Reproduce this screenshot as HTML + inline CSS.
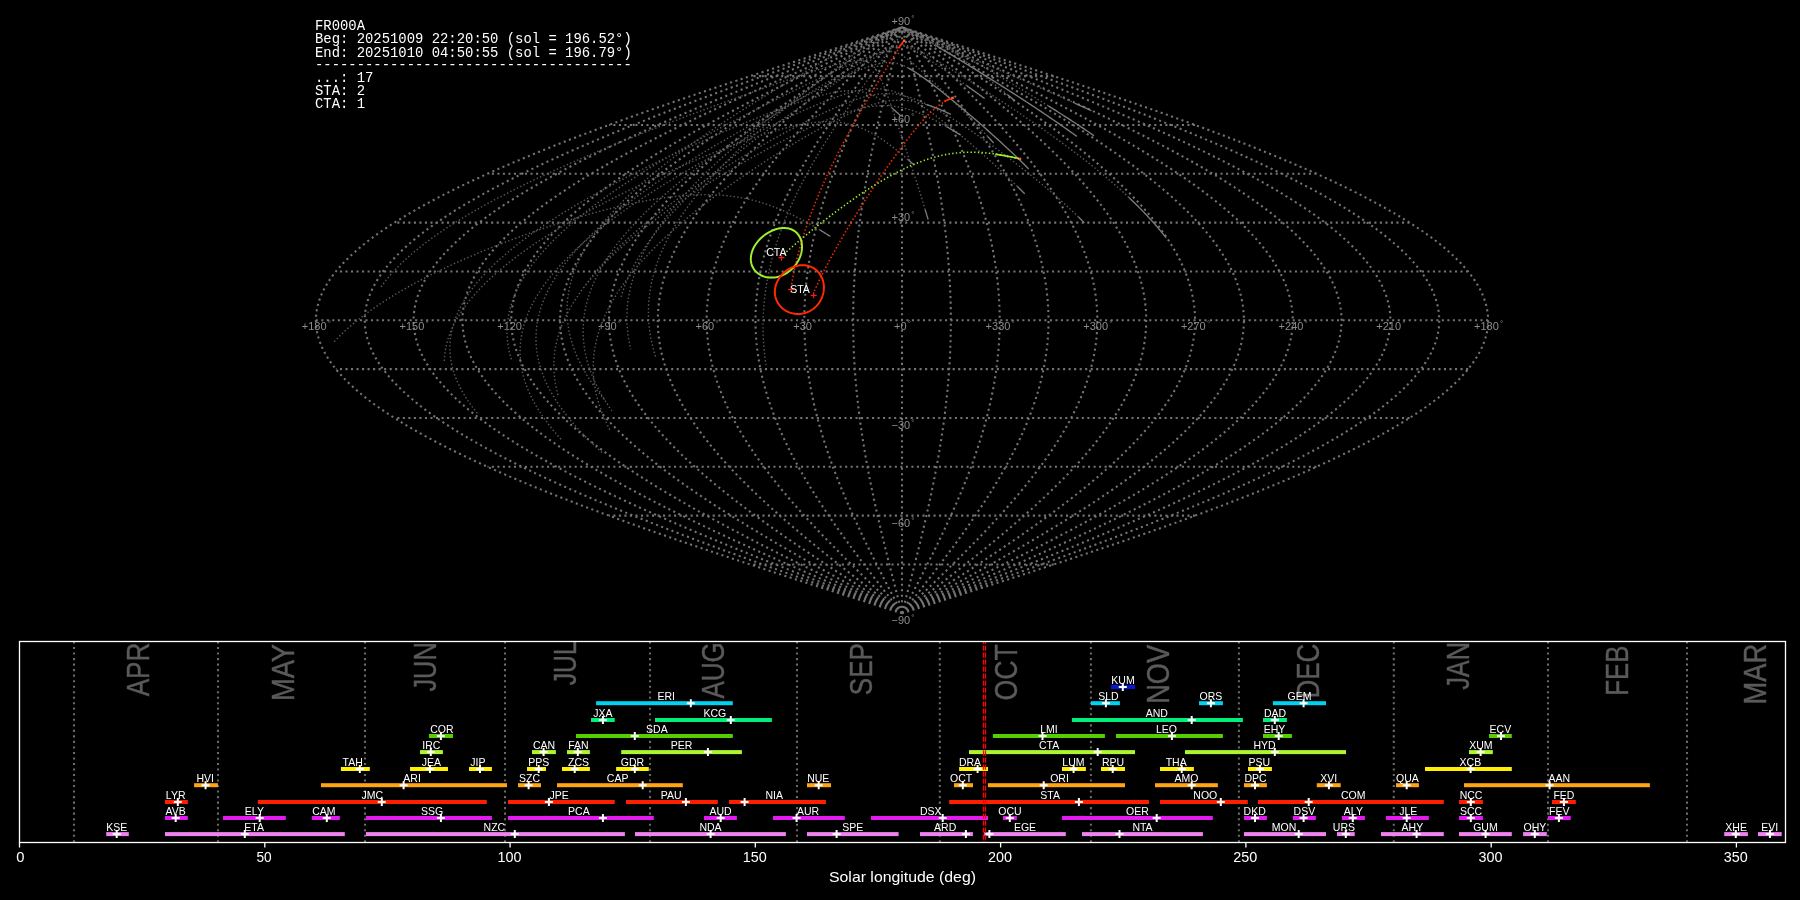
<!DOCTYPE html><html><head><meta charset="utf-8"><style>
html,body{margin:0;padding:0;background:#000;width:1800px;height:900px;overflow:hidden}
body{position:relative}
</style></head><body><svg width="1800" height="900" viewBox="0 0 1800 900" style="position:absolute;left:0;top:0;will-change:transform"><path d="M902.00,613.34L907.11,611.71L912.23,610.08L917.34,608.46L922.45,606.83L927.56,605.20L932.67,603.57L937.78,601.94L942.88,600.32L947.98,598.69L953.08,597.06L958.17,595.43L963.26,593.80L968.35,592.18L973.43,590.55L978.50,588.92L983.57,587.29L988.63,585.66L993.68,584.04L998.73,582.41L1003.77,580.78L1008.80,579.15L1013.83,577.52L1018.85,575.90L1023.85,574.27L1028.85,572.64L1033.84,571.01L1038.82,569.38L1043.79,567.76L1048.74,566.13L1053.69,564.50L1058.62,562.87L1063.55,561.24L1068.46,559.62L1073.35,557.99L1078.24,556.36L1083.11,554.73L1087.97,553.10L1092.81,551.48L1097.64,549.85L1102.45,548.22L1107.25,546.59L1112.03,544.96L1116.80,543.34L1121.55,541.71L1126.28,540.08L1131.00,538.45L1135.70,536.82L1140.38,535.20L1145.04,533.57L1149.69,531.94L1154.31,530.31L1158.92,528.68L1163.51,527.06L1168.07,525.43L1172.62,523.80L1177.15,522.17L1181.65,520.54L1186.14,518.92L1190.60,517.29L1195.04,515.66L1199.46,514.03L1203.85,512.40L1208.23,510.78L1212.58,509.15L1216.90,507.52L1221.20,505.89L1225.48,504.26L1229.73,502.64L1233.96,501.01L1238.16,499.38L1242.34,497.75L1246.49,496.12L1250.61,494.50L1254.71,492.87L1258.78,491.24L1262.83,489.61L1266.84,487.98L1270.83,486.36L1274.79,484.73L1278.72,483.10L1282.63,481.47L1286.50,479.84L1290.35,478.22L1294.16,476.59L1297.95,474.96L1301.71,473.33L1305.43,471.70L1309.13,470.08L1312.79,468.45L1316.42,466.82L1320.02,465.19L1323.59,463.56L1327.13,461.94L1330.63,460.31L1334.10,458.68L1337.54,457.05L1340.95,455.42L1344.32,453.80L1347.66,452.17L1350.96,450.54L1354.23,448.91L1357.47,447.28L1360.67,445.66L1363.84,444.03L1366.97,442.40L1370.06,440.77L1373.12,439.14L1376.15,437.52L1379.14,435.89L1382.09,434.26L1385.00,432.63L1387.88,431.00L1390.72,429.38L1393.53,427.75L1396.29,426.12L1399.02,424.49L1401.72,422.86L1404.37,421.24L1406.98,419.61L1409.56,417.98L1412.10,416.35L1414.60,414.72L1417.06,413.10L1419.48,411.47L1421.86,409.84L1424.20,408.21L1426.50,406.58L1428.77,404.96L1430.99,403.33L1433.17,401.70L1435.31,400.07L1437.41,398.44L1439.47,396.82L1441.49,395.19L1443.47,393.56L1445.40,391.93L1447.30,390.30L1449.15,388.68L1450.96,387.05L1452.74,385.42L1454.46,383.79L1456.15,382.16L1457.79,380.54L1459.40,378.91L1460.95,377.28L1462.47,375.65L1463.95,374.02L1465.38,372.40L1466.76,370.77L1468.11,369.14L1469.41,367.51L1470.67,365.88L1471.89,364.26L1473.06,362.63L1474.19,361.00L1475.27,359.37L1476.31,357.74L1477.31,356.12L1478.27,354.49L1479.18,352.86L1480.04,351.23L1480.86,349.60L1481.64,347.98L1482.38,346.35L1483.07,344.72L1483.71,343.09L1484.31,341.46L1484.87,339.84L1485.38,338.21L1485.85,336.58L1486.27,334.95L1486.65,333.32L1486.99,331.70L1487.28,330.07L1487.52,328.44L1487.72,326.81L1487.88,325.18L1487.99,323.56L1488.06,321.93L1488.08,320.30L1488.06,318.67L1487.99,317.04L1487.88,315.42L1487.72,313.79L1487.52,312.16L1487.28,310.53L1486.99,308.90L1486.65,307.28L1486.27,305.65L1485.85,304.02L1485.38,302.39L1484.87,300.76L1484.31,299.14L1483.71,297.51L1483.07,295.88L1482.38,294.25L1481.64,292.62L1480.86,291.00L1480.04,289.37L1479.18,287.74L1478.27,286.11L1477.31,284.48L1476.31,282.86L1475.27,281.23L1474.19,279.60L1473.06,277.97L1471.89,276.34L1470.67,274.72L1469.41,273.09L1468.11,271.46L1466.76,269.83L1465.38,268.20L1463.95,266.58L1462.47,264.95L1460.95,263.32L1459.40,261.69L1457.79,260.06L1456.15,258.44L1454.46,256.81L1452.74,255.18L1450.96,253.55L1449.15,251.92L1447.30,250.30L1445.40,248.67L1443.47,247.04L1441.49,245.41L1439.47,243.78L1437.41,242.16L1435.31,240.53L1433.17,238.90L1430.99,237.27L1428.77,235.64L1426.50,234.02L1424.20,232.39L1421.86,230.76L1419.48,229.13L1417.06,227.50L1414.60,225.88L1412.10,224.25L1409.56,222.62L1406.98,220.99L1404.37,219.36L1401.72,217.74L1399.02,216.11L1396.29,214.48L1393.53,212.85L1390.72,211.22L1387.88,209.60L1385.00,207.97L1382.09,206.34L1379.14,204.71L1376.15,203.08L1373.12,201.46L1370.06,199.83L1366.97,198.20L1363.84,196.57L1360.67,194.94L1357.47,193.32L1354.23,191.69L1350.96,190.06L1347.66,188.43L1344.32,186.80L1340.95,185.18L1337.54,183.55L1334.10,181.92L1330.63,180.29L1327.13,178.66L1323.59,177.04L1320.02,175.41L1316.42,173.78L1312.79,172.15L1309.13,170.52L1305.43,168.90L1301.71,167.27L1297.95,165.64L1294.16,164.01L1290.35,162.38L1286.50,160.76L1282.63,159.13L1278.72,157.50L1274.79,155.87L1270.83,154.24L1266.84,152.62L1262.83,150.99L1258.78,149.36L1254.71,147.73L1250.61,146.10L1246.49,144.48L1242.34,142.85L1238.16,141.22L1233.96,139.59L1229.73,137.96L1225.48,136.34L1221.20,134.71L1216.90,133.08L1212.58,131.45L1208.23,129.82L1203.85,128.20L1199.46,126.57L1195.04,124.94L1190.60,123.31L1186.14,121.68L1181.65,120.06L1177.15,118.43L1172.62,116.80L1168.07,115.17L1163.51,113.54L1158.92,111.92L1154.31,110.29L1149.69,108.66L1145.04,107.03L1140.38,105.40L1135.70,103.78L1131.00,102.15L1126.28,100.52L1121.55,98.89L1116.80,97.26L1112.03,95.64L1107.25,94.01L1102.45,92.38L1097.64,90.75L1092.81,89.12L1087.97,87.50L1083.11,85.87L1078.24,84.24L1073.35,82.61L1068.46,80.98L1063.55,79.36L1058.62,77.73L1053.69,76.10L1048.74,74.47L1043.79,72.84L1038.82,71.22L1033.84,69.59L1028.85,67.96L1023.85,66.33L1018.85,64.70L1013.83,63.08L1008.80,61.45L1003.77,59.82L998.73,58.19L993.68,56.56L988.63,54.94L983.57,53.31L978.50,51.68L973.43,50.05L968.35,48.42L963.26,46.80L958.17,45.17L953.08,43.54L947.98,41.91L942.88,40.28L937.78,38.66L932.67,37.03L927.56,35.40L922.45,33.77L917.34,32.14L912.23,30.52L907.11,28.89L902.00,27.26M902.00,613.34L906.69,611.71L911.38,610.08L916.06,608.46L920.75,606.83L925.43,605.20L930.12,603.57L934.80,601.94L939.48,600.32L944.15,598.69L948.82,597.06L953.49,595.43L958.16,593.80L962.82,592.18L967.47,590.55L972.12,588.92L976.77,587.29L981.41,585.66L986.04,584.04L990.67,582.41L995.29,580.78L999.90,579.15L1004.51,577.52L1009.11,575.90L1013.70,574.27L1018.28,572.64L1022.85,571.01L1027.42,569.38L1031.97,567.76L1036.51,566.13L1041.05,564.50L1045.57,562.87L1050.08,561.24L1054.58,559.62L1059.07,557.99L1063.55,556.36L1068.02,554.73L1072.47,553.10L1076.91,551.48L1081.33,549.85L1085.75,548.22L1090.15,546.59L1094.53,544.96L1098.90,543.34L1103.25,541.71L1107.59,540.08L1111.92,538.45L1116.22,536.82L1120.52,535.20L1124.79,533.57L1129.05,531.94L1133.29,530.31L1137.51,528.68L1141.72,527.06L1145.90,525.43L1150.07,523.80L1154.22,522.17L1158.35,520.54L1162.46,518.92L1166.55,517.29L1170.62,515.66L1174.67,514.03L1178.70,512.40L1182.71,510.78L1186.69,509.15L1190.66,507.52L1194.60,505.89L1198.52,504.26L1202.42,502.64L1206.30,501.01L1210.15,499.38L1213.98,497.75L1217.78,496.12L1221.56,494.50L1225.32,492.87L1229.05,491.24L1232.76,489.61L1236.44,487.98L1240.10,486.36L1243.73,484.73L1247.33,483.10L1250.91,481.47L1254.46,479.84L1257.99,478.22L1261.48,476.59L1264.95,474.96L1268.40,473.33L1271.81,471.70L1275.20,470.08L1278.56,468.45L1281.89,466.82L1285.19,465.19L1288.46,463.56L1291.70,461.94L1294.91,460.31L1298.09,458.68L1301.25,457.05L1304.37,455.42L1307.46,453.80L1310.52,452.17L1313.55,450.54L1316.55,448.91L1319.51,447.28L1322.45,445.66L1325.35,444.03L1328.22,442.40L1331.06,440.77L1333.86,439.14L1336.64,437.52L1339.38,435.89L1342.08,434.26L1344.75,432.63L1347.39,431.00L1350.00,429.38L1352.57,427.75L1355.10,426.12L1357.61,424.49L1360.07,422.86L1362.50,421.24L1364.90,419.61L1367.26,417.98L1369.59,416.35L1371.88,414.72L1374.14,413.10L1376.35,411.47L1378.54,409.84L1380.68,408.21L1382.79,406.58L1384.87,404.96L1386.90,403.33L1388.90,401.70L1390.87,400.07L1392.79,398.44L1394.68,396.82L1396.53,395.19L1398.35,393.56L1400.12,391.93L1401.86,390.30L1403.56,388.68L1405.22,387.05L1406.84,385.42L1408.42,383.79L1409.97,382.16L1411.48,380.54L1412.95,378.91L1414.37,377.28L1415.77,375.65L1417.12,374.02L1418.43,372.40L1419.70,370.77L1420.93,369.14L1422.13,367.51L1423.28,365.88L1424.40,364.26L1425.47,362.63L1426.51,361.00L1427.50,359.37L1428.45,357.74L1429.37,356.12L1430.24,354.49L1431.08,352.86L1431.87,351.23L1432.63,349.60L1433.34,347.98L1434.01,346.35L1434.64,344.72L1435.24,343.09L1435.79,341.46L1436.30,339.84L1436.77,338.21L1437.20,336.58L1437.58,334.95L1437.93,333.32L1438.24,331.70L1438.50,330.07L1438.73,328.44L1438.91,326.81L1439.06,325.18L1439.16,323.56L1439.22,321.93L1439.24,320.30L1439.22,318.67L1439.16,317.04L1439.06,315.42L1438.91,313.79L1438.73,312.16L1438.50,310.53L1438.24,308.90L1437.93,307.28L1437.58,305.65L1437.20,304.02L1436.77,302.39L1436.30,300.76L1435.79,299.14L1435.24,297.51L1434.64,295.88L1434.01,294.25L1433.34,292.62L1432.63,291.00L1431.87,289.37L1431.08,287.74L1430.24,286.11L1429.37,284.48L1428.45,282.86L1427.50,281.23L1426.51,279.60L1425.47,277.97L1424.40,276.34L1423.28,274.72L1422.13,273.09L1420.93,271.46L1419.70,269.83L1418.43,268.20L1417.12,266.58L1415.77,264.95L1414.37,263.32L1412.95,261.69L1411.48,260.06L1409.97,258.44L1408.42,256.81L1406.84,255.18L1405.22,253.55L1403.56,251.92L1401.86,250.30L1400.12,248.67L1398.35,247.04L1396.53,245.41L1394.68,243.78L1392.79,242.16L1390.87,240.53L1388.90,238.90L1386.90,237.27L1384.87,235.64L1382.79,234.02L1380.68,232.39L1378.54,230.76L1376.35,229.13L1374.14,227.50L1371.88,225.88L1369.59,224.25L1367.26,222.62L1364.90,220.99L1362.50,219.36L1360.07,217.74L1357.61,216.11L1355.10,214.48L1352.57,212.85L1350.00,211.22L1347.39,209.60L1344.75,207.97L1342.08,206.34L1339.38,204.71L1336.64,203.08L1333.86,201.46L1331.06,199.83L1328.22,198.20L1325.35,196.57L1322.45,194.94L1319.51,193.32L1316.55,191.69L1313.55,190.06L1310.52,188.43L1307.46,186.80L1304.37,185.18L1301.25,183.55L1298.09,181.92L1294.91,180.29L1291.70,178.66L1288.46,177.04L1285.19,175.41L1281.89,173.78L1278.56,172.15L1275.20,170.52L1271.81,168.90L1268.40,167.27L1264.95,165.64L1261.48,164.01L1257.99,162.38L1254.46,160.76L1250.91,159.13L1247.33,157.50L1243.73,155.87L1240.10,154.24L1236.44,152.62L1232.76,150.99L1229.05,149.36L1225.32,147.73L1221.56,146.10L1217.78,144.48L1213.98,142.85L1210.15,141.22L1206.30,139.59L1202.42,137.96L1198.52,136.34L1194.60,134.71L1190.66,133.08L1186.69,131.45L1182.71,129.82L1178.70,128.20L1174.67,126.57L1170.62,124.94L1166.55,123.31L1162.46,121.68L1158.35,120.06L1154.22,118.43L1150.07,116.80L1145.90,115.17L1141.72,113.54L1137.51,111.92L1133.29,110.29L1129.05,108.66L1124.79,107.03L1120.52,105.40L1116.22,103.78L1111.92,102.15L1107.59,100.52L1103.25,98.89L1098.90,97.26L1094.53,95.64L1090.15,94.01L1085.75,92.38L1081.33,90.75L1076.91,89.12L1072.47,87.50L1068.02,85.87L1063.55,84.24L1059.07,82.61L1054.58,80.98L1050.08,79.36L1045.57,77.73L1041.05,76.10L1036.51,74.47L1031.97,72.84L1027.42,71.22L1022.85,69.59L1018.28,67.96L1013.70,66.33L1009.11,64.70L1004.51,63.08L999.90,61.45L995.29,59.82L990.67,58.19L986.04,56.56L981.41,54.94L976.77,53.31L972.12,51.68L967.47,50.05L962.82,48.42L958.16,46.80L953.49,45.17L948.82,43.54L944.15,41.91L939.48,40.28L934.80,38.66L930.12,37.03L925.43,35.40L920.75,33.77L916.06,32.14L911.38,30.52L906.69,28.89L902.00,27.26M902.00,613.34L906.26,611.71L910.52,610.08L914.78,608.46L919.04,606.83L923.30,605.20L927.56,603.57L931.82,601.94L936.07,600.32L940.32,598.69L944.57,597.06L948.81,595.43L953.05,593.80L957.29,592.18L961.52,590.55L965.75,588.92L969.97,587.29L974.19,585.66L978.40,584.04L982.61,582.41L986.81,580.78L991.00,579.15L995.19,577.52L999.37,575.90L1003.54,574.27L1007.71,572.64L1011.87,571.01L1016.01,569.38L1020.15,567.76L1024.29,566.13L1028.41,564.50L1032.52,562.87L1036.62,561.24L1040.71,559.62L1044.79,557.99L1048.86,556.36L1052.92,554.73L1056.97,553.10L1061.01,551.48L1065.03,549.85L1069.04,548.22L1073.04,546.59L1077.03,544.96L1081.00,543.34L1084.96,541.71L1088.90,540.08L1092.83,538.45L1096.75,536.82L1100.65,535.20L1104.54,533.57L1108.41,531.94L1112.26,530.31L1116.10,528.68L1119.92,527.06L1123.73,525.43L1127.52,523.80L1131.29,522.17L1135.04,520.54L1138.78,518.92L1142.50,517.29L1146.20,515.66L1149.88,514.03L1153.54,512.40L1157.19,510.78L1160.81,509.15L1164.42,507.52L1168.00,505.89L1171.57,504.26L1175.11,502.64L1178.63,501.01L1182.13,499.38L1185.62,497.75L1189.07,496.12L1192.51,494.50L1195.93,492.87L1199.32,491.24L1202.69,489.61L1206.04,487.98L1209.36,486.36L1212.66,484.73L1215.94,483.10L1219.19,481.47L1222.42,479.84L1225.62,478.22L1228.80,476.59L1231.96,474.96L1235.09,473.33L1238.19,471.70L1241.27,470.08L1244.32,468.45L1247.35,466.82L1250.35,465.19L1253.33,463.56L1256.27,461.94L1259.19,460.31L1262.09,458.68L1264.95,457.05L1267.79,455.42L1270.60,453.80L1273.38,452.17L1276.14,450.54L1278.86,448.91L1281.56,447.28L1284.23,445.66L1286.86,444.03L1289.47,442.40L1292.05,440.77L1294.60,439.14L1297.12,437.52L1299.61,435.89L1302.07,434.26L1304.50,432.63L1306.90,431.00L1309.27,429.38L1311.61,427.75L1313.91,426.12L1316.19,424.49L1318.43,422.86L1320.64,421.24L1322.82,419.61L1324.97,417.98L1327.08,416.35L1329.16,414.72L1331.21,413.10L1333.23,411.47L1335.22,409.84L1337.17,408.21L1339.09,406.58L1340.97,404.96L1342.82,403.33L1344.64,401.70L1346.43,400.07L1348.18,398.44L1349.89,396.82L1351.57,395.19L1353.22,393.56L1354.84,391.93L1356.42,390.30L1357.96,388.68L1359.47,387.05L1360.95,385.42L1362.39,383.79L1363.79,382.16L1365.16,380.54L1366.50,378.91L1367.80,377.28L1369.06,375.65L1370.29,374.02L1371.48,372.40L1372.64,370.77L1373.76,369.14L1374.84,367.51L1375.89,365.88L1376.91,364.26L1377.88,362.63L1378.82,361.00L1379.73,359.37L1380.60,357.74L1381.43,356.12L1382.22,354.49L1382.98,352.86L1383.70,351.23L1384.39,349.60L1385.04,347.98L1385.65,346.35L1386.22,344.72L1386.76,343.09L1387.26,341.46L1387.72,339.84L1388.15,338.21L1388.54,336.58L1388.89,334.95L1389.21,333.32L1389.49,331.70L1389.73,330.07L1389.94,328.44L1390.10,326.81L1390.23,325.18L1390.33,323.56L1390.38,321.93L1390.40,320.30L1390.38,318.67L1390.33,317.04L1390.23,315.42L1390.10,313.79L1389.94,312.16L1389.73,310.53L1389.49,308.90L1389.21,307.28L1388.89,305.65L1388.54,304.02L1388.15,302.39L1387.72,300.76L1387.26,299.14L1386.76,297.51L1386.22,295.88L1385.65,294.25L1385.04,292.62L1384.39,291.00L1383.70,289.37L1382.98,287.74L1382.22,286.11L1381.43,284.48L1380.60,282.86L1379.73,281.23L1378.82,279.60L1377.88,277.97L1376.91,276.34L1375.89,274.72L1374.84,273.09L1373.76,271.46L1372.64,269.83L1371.48,268.20L1370.29,266.58L1369.06,264.95L1367.80,263.32L1366.50,261.69L1365.16,260.06L1363.79,258.44L1362.39,256.81L1360.95,255.18L1359.47,253.55L1357.96,251.92L1356.42,250.30L1354.84,248.67L1353.22,247.04L1351.57,245.41L1349.89,243.78L1348.18,242.16L1346.43,240.53L1344.64,238.90L1342.82,237.27L1340.97,235.64L1339.09,234.02L1337.17,232.39L1335.22,230.76L1333.23,229.13L1331.21,227.50L1329.16,225.88L1327.08,224.25L1324.97,222.62L1322.82,220.99L1320.64,219.36L1318.43,217.74L1316.19,216.11L1313.91,214.48L1311.61,212.85L1309.27,211.22L1306.90,209.60L1304.50,207.97L1302.07,206.34L1299.61,204.71L1297.12,203.08L1294.60,201.46L1292.05,199.83L1289.47,198.20L1286.86,196.57L1284.23,194.94L1281.56,193.32L1278.86,191.69L1276.14,190.06L1273.38,188.43L1270.60,186.80L1267.79,185.18L1264.95,183.55L1262.09,181.92L1259.19,180.29L1256.27,178.66L1253.33,177.04L1250.35,175.41L1247.35,173.78L1244.32,172.15L1241.27,170.52L1238.19,168.90L1235.09,167.27L1231.96,165.64L1228.80,164.01L1225.62,162.38L1222.42,160.76L1219.19,159.13L1215.94,157.50L1212.66,155.87L1209.36,154.24L1206.04,152.62L1202.69,150.99L1199.32,149.36L1195.93,147.73L1192.51,146.10L1189.07,144.48L1185.62,142.85L1182.13,141.22L1178.63,139.59L1175.11,137.96L1171.57,136.34L1168.00,134.71L1164.42,133.08L1160.81,131.45L1157.19,129.82L1153.54,128.20L1149.88,126.57L1146.20,124.94L1142.50,123.31L1138.78,121.68L1135.04,120.06L1131.29,118.43L1127.52,116.80L1123.73,115.17L1119.92,113.54L1116.10,111.92L1112.26,110.29L1108.41,108.66L1104.54,107.03L1100.65,105.40L1096.75,103.78L1092.83,102.15L1088.90,100.52L1084.96,98.89L1081.00,97.26L1077.03,95.64L1073.04,94.01L1069.04,92.38L1065.03,90.75L1061.01,89.12L1056.97,87.50L1052.92,85.87L1048.86,84.24L1044.79,82.61L1040.71,80.98L1036.62,79.36L1032.52,77.73L1028.41,76.10L1024.29,74.47L1020.15,72.84L1016.01,71.22L1011.87,69.59L1007.71,67.96L1003.54,66.33L999.37,64.70L995.19,63.08L991.00,61.45L986.81,59.82L982.61,58.19L978.40,56.56L974.19,54.94L969.97,53.31L965.75,51.68L961.52,50.05L957.29,48.42L953.05,46.80L948.81,45.17L944.57,43.54L940.32,41.91L936.07,40.28L931.82,38.66L927.56,37.03L923.30,35.40L919.04,33.77L914.78,32.14L910.52,30.52L906.26,28.89L902.00,27.26M902.00,613.34L905.84,611.71L909.67,610.08L913.51,608.46L917.34,606.83L921.17,605.20L925.00,603.57L928.83,601.94L932.66,600.32L936.49,598.69L940.31,597.06L944.13,595.43L947.95,593.80L951.76,592.18L955.57,590.55L959.37,588.92L963.17,587.29L966.97,585.66L970.76,584.04L974.55,582.41L978.33,580.78L982.10,579.15L985.87,577.52L989.63,575.90L993.39,574.27L997.14,572.64L1000.88,571.01L1004.61,569.38L1008.34,567.76L1012.06,566.13L1015.77,564.50L1019.47,562.87L1023.16,561.24L1026.84,559.62L1030.51,557.99L1034.18,556.36L1037.83,554.73L1041.47,553.10L1045.11,551.48L1048.73,549.85L1052.34,548.22L1055.94,546.59L1059.52,544.96L1063.10,543.34L1066.66,541.71L1070.21,540.08L1073.75,538.45L1077.27,536.82L1080.79,535.20L1084.28,533.57L1087.77,531.94L1091.24,530.31L1094.69,528.68L1098.13,527.06L1101.56,525.43L1104.97,523.80L1108.36,522.17L1111.74,520.54L1115.10,518.92L1118.45,517.29L1121.78,515.66L1125.09,514.03L1128.39,512.40L1131.67,510.78L1134.93,509.15L1138.18,507.52L1141.40,505.89L1144.61,504.26L1147.80,502.64L1150.97,501.01L1154.12,499.38L1157.25,497.75L1160.37,496.12L1163.46,494.50L1166.53,492.87L1169.59,491.24L1172.62,489.61L1175.63,487.98L1178.62,486.36L1181.59,484.73L1184.54,483.10L1187.47,481.47L1190.38,479.84L1193.26,478.22L1196.12,476.59L1198.96,474.96L1201.78,473.33L1204.57,471.70L1207.34,470.08L1210.09,468.45L1212.82,466.82L1215.52,465.19L1218.19,463.56L1220.85,461.94L1223.47,460.31L1226.08,458.68L1228.66,457.05L1231.21,455.42L1233.74,453.80L1236.24,452.17L1238.72,450.54L1241.18,448.91L1243.60,447.28L1246.00,445.66L1248.38,444.03L1250.73,442.40L1253.05,440.77L1255.34,439.14L1257.61,437.52L1259.85,435.89L1262.07,434.26L1264.25,432.63L1266.41,431.00L1268.54,429.38L1270.65,427.75L1272.72,426.12L1274.77,424.49L1276.79,422.86L1278.78,421.24L1280.74,419.61L1282.67,417.98L1284.57,416.35L1286.45,414.72L1288.29,413.10L1290.11,411.47L1291.89,409.84L1293.65,408.21L1295.38,406.58L1297.07,404.96L1298.74,403.33L1300.38,401.70L1301.98,400.07L1303.56,398.44L1305.10,396.82L1306.62,395.19L1308.10,393.56L1309.55,391.93L1310.97,390.30L1312.36,388.68L1313.72,387.05L1315.05,385.42L1316.35,383.79L1317.61,382.16L1318.85,380.54L1320.05,378.91L1321.22,377.28L1322.35,375.65L1323.46,374.02L1324.53,372.40L1325.57,370.77L1326.58,369.14L1327.56,367.51L1328.50,365.88L1329.41,364.26L1330.29,362.63L1331.14,361.00L1331.95,359.37L1332.74,357.74L1333.48,356.12L1334.20,354.49L1334.88,352.86L1335.53,351.23L1336.15,349.60L1336.73,347.98L1337.28,346.35L1337.80,344.72L1338.28,343.09L1338.73,341.46L1339.15,339.84L1339.54,338.21L1339.89,336.58L1340.20,334.95L1340.49,333.32L1340.74,331.70L1340.96,330.07L1341.14,328.44L1341.29,326.81L1341.41,325.18L1341.49,323.56L1341.54,321.93L1341.56,320.30L1341.54,318.67L1341.49,317.04L1341.41,315.42L1341.29,313.79L1341.14,312.16L1340.96,310.53L1340.74,308.90L1340.49,307.28L1340.20,305.65L1339.89,304.02L1339.54,302.39L1339.15,300.76L1338.73,299.14L1338.28,297.51L1337.80,295.88L1337.28,294.25L1336.73,292.62L1336.15,291.00L1335.53,289.37L1334.88,287.74L1334.20,286.11L1333.48,284.48L1332.74,282.86L1331.95,281.23L1331.14,279.60L1330.29,277.97L1329.41,276.34L1328.50,274.72L1327.56,273.09L1326.58,271.46L1325.57,269.83L1324.53,268.20L1323.46,266.58L1322.35,264.95L1321.22,263.32L1320.05,261.69L1318.85,260.06L1317.61,258.44L1316.35,256.81L1315.05,255.18L1313.72,253.55L1312.36,251.92L1310.97,250.30L1309.55,248.67L1308.10,247.04L1306.62,245.41L1305.10,243.78L1303.56,242.16L1301.98,240.53L1300.38,238.90L1298.74,237.27L1297.07,235.64L1295.38,234.02L1293.65,232.39L1291.89,230.76L1290.11,229.13L1288.29,227.50L1286.45,225.88L1284.57,224.25L1282.67,222.62L1280.74,220.99L1278.78,219.36L1276.79,217.74L1274.77,216.11L1272.72,214.48L1270.65,212.85L1268.54,211.22L1266.41,209.60L1264.25,207.97L1262.07,206.34L1259.85,204.71L1257.61,203.08L1255.34,201.46L1253.05,199.83L1250.73,198.20L1248.38,196.57L1246.00,194.94L1243.60,193.32L1241.18,191.69L1238.72,190.06L1236.24,188.43L1233.74,186.80L1231.21,185.18L1228.66,183.55L1226.08,181.92L1223.47,180.29L1220.85,178.66L1218.19,177.04L1215.52,175.41L1212.82,173.78L1210.09,172.15L1207.34,170.52L1204.57,168.90L1201.78,167.27L1198.96,165.64L1196.12,164.01L1193.26,162.38L1190.38,160.76L1187.47,159.13L1184.54,157.50L1181.59,155.87L1178.62,154.24L1175.63,152.62L1172.62,150.99L1169.59,149.36L1166.53,147.73L1163.46,146.10L1160.37,144.48L1157.25,142.85L1154.12,141.22L1150.97,139.59L1147.80,137.96L1144.61,136.34L1141.40,134.71L1138.18,133.08L1134.93,131.45L1131.67,129.82L1128.39,128.20L1125.09,126.57L1121.78,124.94L1118.45,123.31L1115.10,121.68L1111.74,120.06L1108.36,118.43L1104.97,116.80L1101.56,115.17L1098.13,113.54L1094.69,111.92L1091.24,110.29L1087.77,108.66L1084.28,107.03L1080.79,105.40L1077.27,103.78L1073.75,102.15L1070.21,100.52L1066.66,98.89L1063.10,97.26L1059.52,95.64L1055.94,94.01L1052.34,92.38L1048.73,90.75L1045.11,89.12L1041.47,87.50L1037.83,85.87L1034.18,84.24L1030.51,82.61L1026.84,80.98L1023.16,79.36L1019.47,77.73L1015.77,76.10L1012.06,74.47L1008.34,72.84L1004.61,71.22L1000.88,69.59L997.14,67.96L993.39,66.33L989.63,64.70L985.87,63.08L982.10,61.45L978.33,59.82L974.55,58.19L970.76,56.56L966.97,54.94L963.17,53.31L959.37,51.68L955.57,50.05L951.76,48.42L947.95,46.80L944.13,45.17L940.31,43.54L936.49,41.91L932.66,40.28L928.83,38.66L925.00,37.03L921.17,35.40L917.34,33.77L913.51,32.14L909.67,30.52L905.84,28.89L902.00,27.26M902.00,613.34L905.41,611.71L908.82,610.08L912.23,608.46L915.64,606.83L919.04,605.20L922.45,603.57L925.85,601.94L929.26,600.32L932.66,598.69L936.05,597.06L939.45,595.43L942.84,593.80L946.23,592.18L949.62,590.55L953.00,588.92L956.38,587.29L959.75,585.66L963.12,584.04L966.49,582.41L969.85,580.78L973.20,579.15L976.55,577.52L979.90,575.90L983.24,574.27L986.57,572.64L989.89,571.01L993.21,569.38L996.52,567.76L999.83,566.13L1003.13,564.50L1006.42,562.87L1009.70,561.24L1012.97,559.62L1016.24,557.99L1019.49,556.36L1022.74,554.73L1025.98,553.10L1029.21,551.48L1032.43,549.85L1035.63,548.22L1038.83,546.59L1042.02,544.96L1045.20,543.34L1048.37,541.71L1051.52,540.08L1054.67,538.45L1057.80,536.82L1060.92,535.20L1064.03,533.57L1067.13,531.94L1070.21,530.31L1073.28,528.68L1076.34,527.06L1079.38,525.43L1082.41,523.80L1085.43,522.17L1088.44,520.54L1091.42,518.92L1094.40,517.29L1097.36,515.66L1100.31,514.03L1103.24,512.40L1106.15,510.78L1109.05,509.15L1111.93,507.52L1114.80,505.89L1117.65,504.26L1120.49,502.64L1123.31,501.01L1126.11,499.38L1128.89,497.75L1131.66,496.12L1134.41,494.50L1137.14,492.87L1139.86,491.24L1142.55,489.61L1145.23,487.98L1147.89,486.36L1150.53,484.73L1153.15,483.10L1155.75,481.47L1158.34,479.84L1160.90,478.22L1163.44,476.59L1165.97,474.96L1168.47,473.33L1170.95,471.70L1173.42,470.08L1175.86,468.45L1178.28,466.82L1180.68,465.19L1183.06,463.56L1185.42,461.94L1187.75,460.31L1190.07,458.68L1192.36,457.05L1194.63,455.42L1196.88,453.80L1199.11,452.17L1201.31,450.54L1203.49,448.91L1205.65,447.28L1207.78,445.66L1209.89,444.03L1211.98,442.40L1214.04,440.77L1216.08,439.14L1218.10,437.52L1220.09,435.89L1222.06,434.26L1224.00,432.63L1225.92,431.00L1227.82,429.38L1229.69,427.75L1231.53,426.12L1233.35,424.49L1235.14,422.86L1236.91,421.24L1238.66,419.61L1240.37,417.98L1242.07,416.35L1243.73,414.72L1245.37,413.10L1246.99,411.47L1248.57,409.84L1250.13,408.21L1251.67,406.58L1253.18,404.96L1254.66,403.33L1256.11,401.70L1257.54,400.07L1258.94,398.44L1260.31,396.82L1261.66,395.19L1262.98,393.56L1264.27,391.93L1265.53,390.30L1266.77,388.68L1267.98,387.05L1269.16,385.42L1270.31,383.79L1271.43,382.16L1272.53,380.54L1273.60,378.91L1274.64,377.28L1275.65,375.65L1276.63,374.02L1277.58,372.40L1278.51,370.77L1279.41,369.14L1280.27,367.51L1281.11,365.88L1281.92,364.26L1282.71,362.63L1283.46,361.00L1284.18,359.37L1284.88,357.74L1285.54,356.12L1286.18,354.49L1286.78,352.86L1287.36,351.23L1287.91,349.60L1288.43,347.98L1288.92,346.35L1289.38,344.72L1289.81,343.09L1290.21,341.46L1290.58,339.84L1290.92,338.21L1291.23,336.58L1291.52,334.95L1291.77,333.32L1291.99,331.70L1292.18,330.07L1292.35,328.44L1292.48,326.81L1292.59,325.18L1292.66,323.56L1292.71,321.93L1292.72,320.30L1292.71,318.67L1292.66,317.04L1292.59,315.42L1292.48,313.79L1292.35,312.16L1292.18,310.53L1291.99,308.90L1291.77,307.28L1291.52,305.65L1291.23,304.02L1290.92,302.39L1290.58,300.76L1290.21,299.14L1289.81,297.51L1289.38,295.88L1288.92,294.25L1288.43,292.62L1287.91,291.00L1287.36,289.37L1286.78,287.74L1286.18,286.11L1285.54,284.48L1284.88,282.86L1284.18,281.23L1283.46,279.60L1282.71,277.97L1281.92,276.34L1281.11,274.72L1280.27,273.09L1279.41,271.46L1278.51,269.83L1277.58,268.20L1276.63,266.58L1275.65,264.95L1274.64,263.32L1273.60,261.69L1272.53,260.06L1271.43,258.44L1270.31,256.81L1269.16,255.18L1267.98,253.55L1266.77,251.92L1265.53,250.30L1264.27,248.67L1262.98,247.04L1261.66,245.41L1260.31,243.78L1258.94,242.16L1257.54,240.53L1256.11,238.90L1254.66,237.27L1253.18,235.64L1251.67,234.02L1250.13,232.39L1248.57,230.76L1246.99,229.13L1245.37,227.50L1243.73,225.88L1242.07,224.25L1240.37,222.62L1238.66,220.99L1236.91,219.36L1235.14,217.74L1233.35,216.11L1231.53,214.48L1229.69,212.85L1227.82,211.22L1225.92,209.60L1224.00,207.97L1222.06,206.34L1220.09,204.71L1218.10,203.08L1216.08,201.46L1214.04,199.83L1211.98,198.20L1209.89,196.57L1207.78,194.94L1205.65,193.32L1203.49,191.69L1201.31,190.06L1199.11,188.43L1196.88,186.80L1194.63,185.18L1192.36,183.55L1190.07,181.92L1187.75,180.29L1185.42,178.66L1183.06,177.04L1180.68,175.41L1178.28,173.78L1175.86,172.15L1173.42,170.52L1170.95,168.90L1168.47,167.27L1165.97,165.64L1163.44,164.01L1160.90,162.38L1158.34,160.76L1155.75,159.13L1153.15,157.50L1150.53,155.87L1147.89,154.24L1145.23,152.62L1142.55,150.99L1139.86,149.36L1137.14,147.73L1134.41,146.10L1131.66,144.48L1128.89,142.85L1126.11,141.22L1123.31,139.59L1120.49,137.96L1117.65,136.34L1114.80,134.71L1111.93,133.08L1109.05,131.45L1106.15,129.82L1103.24,128.20L1100.31,126.57L1097.36,124.94L1094.40,123.31L1091.42,121.68L1088.44,120.06L1085.43,118.43L1082.41,116.80L1079.38,115.17L1076.34,113.54L1073.28,111.92L1070.21,110.29L1067.13,108.66L1064.03,107.03L1060.92,105.40L1057.80,103.78L1054.67,102.15L1051.52,100.52L1048.37,98.89L1045.20,97.26L1042.02,95.64L1038.83,94.01L1035.63,92.38L1032.43,90.75L1029.21,89.12L1025.98,87.50L1022.74,85.87L1019.49,84.24L1016.24,82.61L1012.97,80.98L1009.70,79.36L1006.42,77.73L1003.13,76.10L999.83,74.47L996.52,72.84L993.21,71.22L989.89,69.59L986.57,67.96L983.24,66.33L979.90,64.70L976.55,63.08L973.20,61.45L969.85,59.82L966.49,58.19L963.12,56.56L959.75,54.94L956.38,53.31L953.00,51.68L949.62,50.05L946.23,48.42L942.84,46.80L939.45,45.17L936.05,43.54L932.66,41.91L929.26,40.28L925.85,38.66L922.45,37.03L919.04,35.40L915.64,33.77L912.23,32.14L908.82,30.52L905.41,28.89L902.00,27.26M902.00,613.34L904.98,611.71L907.97,610.08L910.95,608.46L913.93,606.83L916.91,605.20L919.89,603.57L922.87,601.94L925.85,600.32L928.82,598.69L931.80,597.06L934.77,595.43L937.74,593.80L940.70,592.18L943.66,590.55L946.62,588.92L949.58,587.29L952.53,585.66L955.48,584.04L958.43,582.41L961.37,580.78L964.30,579.15L967.23,577.52L970.16,575.90L973.08,574.27L976.00,572.64L978.91,571.01L981.81,569.38L984.71,567.76L987.60,566.13L990.49,564.50L993.36,562.87L996.23,561.24L999.10,559.62L1001.96,557.99L1004.81,556.36L1007.65,554.73L1010.48,553.10L1013.31,551.48L1016.12,549.85L1018.93,548.22L1021.73,546.59L1024.52,544.96L1027.30,543.34L1030.07,541.71L1032.83,540.08L1035.58,538.45L1038.32,536.82L1041.06,535.20L1043.78,533.57L1046.48,531.94L1049.18,530.31L1051.87,528.68L1054.55,527.06L1057.21,525.43L1059.86,523.80L1062.50,522.17L1065.13,520.54L1067.75,518.92L1070.35,517.29L1072.94,515.66L1075.52,514.03L1078.08,512.40L1080.63,510.78L1083.17,509.15L1085.69,507.52L1088.20,505.89L1090.70,504.26L1093.18,502.64L1095.64,501.01L1098.09,499.38L1100.53,497.75L1102.95,496.12L1105.36,494.50L1107.75,492.87L1110.12,491.24L1112.48,489.61L1114.83,487.98L1117.15,486.36L1119.46,484.73L1121.76,483.10L1124.03,481.47L1126.29,479.84L1128.54,478.22L1130.76,476.59L1132.97,474.96L1135.16,473.33L1137.33,471.70L1139.49,470.08L1141.63,468.45L1143.75,466.82L1145.85,465.19L1147.93,463.56L1149.99,461.94L1152.04,460.31L1154.06,458.68L1156.07,457.05L1158.05,455.42L1160.02,453.80L1161.97,452.17L1163.90,450.54L1165.80,448.91L1167.69,447.28L1169.56,445.66L1171.41,444.03L1173.23,442.40L1175.04,440.77L1176.82,439.14L1178.59,437.52L1180.33,435.89L1182.05,434.26L1183.75,432.63L1185.43,431.00L1187.09,429.38L1188.72,427.75L1190.34,426.12L1191.93,424.49L1193.50,422.86L1195.05,421.24L1196.57,419.61L1198.08,417.98L1199.56,416.35L1201.01,414.72L1202.45,413.10L1203.86,411.47L1205.25,409.84L1206.62,408.21L1207.96,406.58L1209.28,404.96L1210.58,403.33L1211.85,401.70L1213.10,400.07L1214.32,398.44L1215.52,396.82L1216.70,395.19L1217.86,393.56L1218.99,391.93L1220.09,390.30L1221.17,388.68L1222.23,387.05L1223.26,385.42L1224.27,383.79L1225.25,382.16L1226.21,380.54L1227.15,378.91L1228.06,377.28L1228.94,375.65L1229.80,374.02L1230.64,372.40L1231.45,370.77L1232.23,369.14L1232.99,367.51L1233.72,365.88L1234.43,364.26L1235.12,362.63L1235.78,361.00L1236.41,359.37L1237.02,357.74L1237.60,356.12L1238.16,354.49L1238.69,352.86L1239.19,351.23L1239.67,349.60L1240.12,347.98L1240.55,346.35L1240.96,344.72L1241.33,343.09L1241.68,341.46L1242.01,339.84L1242.31,338.21L1242.58,336.58L1242.83,334.95L1243.05,333.32L1243.24,331.70L1243.41,330.07L1243.55,328.44L1243.67,326.81L1243.76,325.18L1243.83,323.56L1243.87,321.93L1243.88,320.30L1243.87,318.67L1243.83,317.04L1243.76,315.42L1243.67,313.79L1243.55,312.16L1243.41,310.53L1243.24,308.90L1243.05,307.28L1242.83,305.65L1242.58,304.02L1242.31,302.39L1242.01,300.76L1241.68,299.14L1241.33,297.51L1240.96,295.88L1240.55,294.25L1240.12,292.62L1239.67,291.00L1239.19,289.37L1238.69,287.74L1238.16,286.11L1237.60,284.48L1237.02,282.86L1236.41,281.23L1235.78,279.60L1235.12,277.97L1234.43,276.34L1233.72,274.72L1232.99,273.09L1232.23,271.46L1231.45,269.83L1230.64,268.20L1229.80,266.58L1228.94,264.95L1228.06,263.32L1227.15,261.69L1226.21,260.06L1225.25,258.44L1224.27,256.81L1223.26,255.18L1222.23,253.55L1221.17,251.92L1220.09,250.30L1218.99,248.67L1217.86,247.04L1216.70,245.41L1215.52,243.78L1214.32,242.16L1213.10,240.53L1211.85,238.90L1210.58,237.27L1209.28,235.64L1207.96,234.02L1206.62,232.39L1205.25,230.76L1203.86,229.13L1202.45,227.50L1201.01,225.88L1199.56,224.25L1198.08,222.62L1196.57,220.99L1195.05,219.36L1193.50,217.74L1191.93,216.11L1190.34,214.48L1188.72,212.85L1187.09,211.22L1185.43,209.60L1183.75,207.97L1182.05,206.34L1180.33,204.71L1178.59,203.08L1176.82,201.46L1175.04,199.83L1173.23,198.20L1171.41,196.57L1169.56,194.94L1167.69,193.32L1165.80,191.69L1163.90,190.06L1161.97,188.43L1160.02,186.80L1158.05,185.18L1156.07,183.55L1154.06,181.92L1152.04,180.29L1149.99,178.66L1147.93,177.04L1145.85,175.41L1143.75,173.78L1141.63,172.15L1139.49,170.52L1137.33,168.90L1135.16,167.27L1132.97,165.64L1130.76,164.01L1128.54,162.38L1126.29,160.76L1124.03,159.13L1121.76,157.50L1119.46,155.87L1117.15,154.24L1114.83,152.62L1112.48,150.99L1110.12,149.36L1107.75,147.73L1105.36,146.10L1102.95,144.48L1100.53,142.85L1098.09,141.22L1095.64,139.59L1093.18,137.96L1090.70,136.34L1088.20,134.71L1085.69,133.08L1083.17,131.45L1080.63,129.82L1078.08,128.20L1075.52,126.57L1072.94,124.94L1070.35,123.31L1067.75,121.68L1065.13,120.06L1062.50,118.43L1059.86,116.80L1057.21,115.17L1054.55,113.54L1051.87,111.92L1049.18,110.29L1046.48,108.66L1043.78,107.03L1041.06,105.40L1038.32,103.78L1035.58,102.15L1032.83,100.52L1030.07,98.89L1027.30,97.26L1024.52,95.64L1021.73,94.01L1018.93,92.38L1016.12,90.75L1013.31,89.12L1010.48,87.50L1007.65,85.87L1004.81,84.24L1001.96,82.61L999.10,80.98L996.23,79.36L993.36,77.73L990.49,76.10L987.60,74.47L984.71,72.84L981.81,71.22L978.91,69.59L976.00,67.96L973.08,66.33L970.16,64.70L967.23,63.08L964.30,61.45L961.37,59.82L958.43,58.19L955.48,56.56L952.53,54.94L949.58,53.31L946.62,51.68L943.66,50.05L940.70,48.42L937.74,46.80L934.77,45.17L931.80,43.54L928.82,41.91L925.85,40.28L922.87,38.66L919.89,37.03L916.91,35.40L913.93,33.77L910.95,32.14L907.97,30.52L904.98,28.89L902.00,27.26M902.00,613.34L904.56,611.71L907.11,610.08L909.67,608.46L912.23,606.83L914.78,605.20L917.34,603.57L919.89,601.94L922.44,600.32L924.99,598.69L927.54,597.06L930.09,595.43L932.63,593.80L935.17,592.18L937.71,590.55L940.25,588.92L942.78,587.29L945.31,585.66L947.84,584.04L950.37,582.41L952.89,580.78L955.40,579.15L957.91,577.52L960.42,575.90L962.93,574.27L965.43,572.64L967.92,571.01L970.41,569.38L972.89,567.76L975.37,566.13L977.84,564.50L980.31,562.87L982.77,561.24L985.23,559.62L987.68,557.99L990.12,556.36L992.55,554.73L994.98,553.10L997.40,551.48L999.82,549.85L1002.23,548.22L1004.62,546.59L1007.02,544.96L1009.40,543.34L1011.77,541.71L1014.14,540.08L1016.50,538.45L1018.85,536.82L1021.19,535.20L1023.52,533.57L1025.84,531.94L1028.16,530.31L1030.46,528.68L1032.75,527.06L1035.04,525.43L1037.31,523.80L1039.57,522.17L1041.83,520.54L1044.07,518.92L1046.30,517.29L1048.52,515.66L1050.73,514.03L1052.93,512.40L1055.11,510.78L1057.29,509.15L1059.45,507.52L1061.60,505.89L1063.74,504.26L1065.87,502.64L1067.98,501.01L1070.08,499.38L1072.17,497.75L1074.24,496.12L1076.31,494.50L1078.36,492.87L1080.39,491.24L1082.41,489.61L1084.42,487.98L1086.42,486.36L1088.40,484.73L1090.36,483.10L1092.31,481.47L1094.25,479.84L1096.17,478.22L1098.08,476.59L1099.97,474.96L1101.85,473.33L1103.72,471.70L1105.56,470.08L1107.39,468.45L1109.21,466.82L1111.01,465.19L1112.80,463.56L1114.56,461.94L1116.32,460.31L1118.05,458.68L1119.77,457.05L1121.47,455.42L1123.16,453.80L1124.83,452.17L1126.48,450.54L1128.12,448.91L1129.73,447.28L1131.34,445.66L1132.92,444.03L1134.48,442.40L1136.03,440.77L1137.56,439.14L1139.07,437.52L1140.57,435.89L1142.04,434.26L1143.50,432.63L1144.94,431.00L1146.36,429.38L1147.76,427.75L1149.15,426.12L1150.51,424.49L1151.86,422.86L1153.18,421.24L1154.49,419.61L1155.78,417.98L1157.05,416.35L1158.30,414.72L1159.53,413.10L1160.74,411.47L1161.93,409.84L1163.10,408.21L1164.25,406.58L1165.38,404.96L1166.49,403.33L1167.58,401.70L1168.66,400.07L1169.71,398.44L1170.74,396.82L1171.74,395.19L1172.73,393.56L1173.70,391.93L1174.65,390.30L1175.58,388.68L1176.48,387.05L1177.37,385.42L1178.23,383.79L1179.07,382.16L1179.90,380.54L1180.70,378.91L1181.48,377.28L1182.24,375.65L1182.97,374.02L1183.69,372.40L1184.38,370.77L1185.05,369.14L1185.71,367.51L1186.34,365.88L1186.94,364.26L1187.53,362.63L1188.09,361.00L1188.64,359.37L1189.16,357.74L1189.66,356.12L1190.13,354.49L1190.59,352.86L1191.02,351.23L1191.43,349.60L1191.82,347.98L1192.19,346.35L1192.53,344.72L1192.86,343.09L1193.16,341.46L1193.43,339.84L1193.69,338.21L1193.92,336.58L1194.14,334.95L1194.33,333.32L1194.49,331.70L1194.64,330.07L1194.76,328.44L1194.86,326.81L1194.94,325.18L1195.00,323.56L1195.03,321.93L1195.04,320.30L1195.03,318.67L1195.00,317.04L1194.94,315.42L1194.86,313.79L1194.76,312.16L1194.64,310.53L1194.49,308.90L1194.33,307.28L1194.14,305.65L1193.92,304.02L1193.69,302.39L1193.43,300.76L1193.16,299.14L1192.86,297.51L1192.53,295.88L1192.19,294.25L1191.82,292.62L1191.43,291.00L1191.02,289.37L1190.59,287.74L1190.13,286.11L1189.66,284.48L1189.16,282.86L1188.64,281.23L1188.09,279.60L1187.53,277.97L1186.94,276.34L1186.34,274.72L1185.71,273.09L1185.05,271.46L1184.38,269.83L1183.69,268.20L1182.97,266.58L1182.24,264.95L1181.48,263.32L1180.70,261.69L1179.90,260.06L1179.07,258.44L1178.23,256.81L1177.37,255.18L1176.48,253.55L1175.58,251.92L1174.65,250.30L1173.70,248.67L1172.73,247.04L1171.74,245.41L1170.74,243.78L1169.71,242.16L1168.66,240.53L1167.58,238.90L1166.49,237.27L1165.38,235.64L1164.25,234.02L1163.10,232.39L1161.93,230.76L1160.74,229.13L1159.53,227.50L1158.30,225.88L1157.05,224.25L1155.78,222.62L1154.49,220.99L1153.18,219.36L1151.86,217.74L1150.51,216.11L1149.15,214.48L1147.76,212.85L1146.36,211.22L1144.94,209.60L1143.50,207.97L1142.04,206.34L1140.57,204.71L1139.07,203.08L1137.56,201.46L1136.03,199.83L1134.48,198.20L1132.92,196.57L1131.34,194.94L1129.73,193.32L1128.12,191.69L1126.48,190.06L1124.83,188.43L1123.16,186.80L1121.47,185.18L1119.77,183.55L1118.05,181.92L1116.32,180.29L1114.56,178.66L1112.80,177.04L1111.01,175.41L1109.21,173.78L1107.39,172.15L1105.56,170.52L1103.72,168.90L1101.85,167.27L1099.97,165.64L1098.08,164.01L1096.17,162.38L1094.25,160.76L1092.31,159.13L1090.36,157.50L1088.40,155.87L1086.42,154.24L1084.42,152.62L1082.41,150.99L1080.39,149.36L1078.36,147.73L1076.31,146.10L1074.24,144.48L1072.17,142.85L1070.08,141.22L1067.98,139.59L1065.87,137.96L1063.74,136.34L1061.60,134.71L1059.45,133.08L1057.29,131.45L1055.11,129.82L1052.93,128.20L1050.73,126.57L1048.52,124.94L1046.30,123.31L1044.07,121.68L1041.83,120.06L1039.57,118.43L1037.31,116.80L1035.04,115.17L1032.75,113.54L1030.46,111.92L1028.16,110.29L1025.84,108.66L1023.52,107.03L1021.19,105.40L1018.85,103.78L1016.50,102.15L1014.14,100.52L1011.77,98.89L1009.40,97.26L1007.02,95.64L1004.62,94.01L1002.23,92.38L999.82,90.75L997.40,89.12L994.98,87.50L992.55,85.87L990.12,84.24L987.68,82.61L985.23,80.98L982.77,79.36L980.31,77.73L977.84,76.10L975.37,74.47L972.89,72.84L970.41,71.22L967.92,69.59L965.43,67.96L962.93,66.33L960.42,64.70L957.91,63.08L955.40,61.45L952.89,59.82L950.37,58.19L947.84,56.56L945.31,54.94L942.78,53.31L940.25,51.68L937.71,50.05L935.17,48.42L932.63,46.80L930.09,45.17L927.54,43.54L924.99,41.91L922.44,40.28L919.89,38.66L917.34,37.03L914.78,35.40L912.23,33.77L909.67,32.14L907.11,30.52L904.56,28.89L902.00,27.26M902.00,613.34L904.13,611.71L906.26,610.08L908.39,608.46L910.52,606.83L912.65,605.20L914.78,603.57L916.91,601.94L919.03,600.32L921.16,598.69L923.28,597.06L925.41,595.43L927.53,593.80L929.64,592.18L931.76,590.55L933.87,588.92L935.99,587.29L938.10,585.66L940.20,584.04L942.30,582.41L944.40,580.78L946.50,579.15L948.60,577.52L950.69,575.90L952.77,574.27L954.85,572.64L956.93,571.01L959.01,569.38L961.08,567.76L963.14,566.13L965.20,564.50L967.26,562.87L969.31,561.24L971.36,559.62L973.40,557.99L975.43,556.36L977.46,554.73L979.49,553.10L981.50,551.48L983.52,549.85L985.52,548.22L987.52,546.59L989.51,544.96L991.50,543.34L993.48,541.71L995.45,540.08L997.42,538.45L999.37,536.82L1001.33,535.20L1003.27,533.57L1005.20,531.94L1007.13,530.31L1009.05,528.68L1010.96,527.06L1012.86,525.43L1014.76,523.80L1016.64,522.17L1018.52,520.54L1020.39,518.92L1022.25,517.29L1024.10,515.66L1025.94,514.03L1027.77,512.40L1029.59,510.78L1031.41,509.15L1033.21,507.52L1035.00,505.89L1036.78,504.26L1038.55,502.64L1040.32,501.01L1042.07,499.38L1043.81,497.75L1045.54,496.12L1047.26,494.50L1048.96,492.87L1050.66,491.24L1052.34,489.61L1054.02,487.98L1055.68,486.36L1057.33,484.73L1058.97,483.10L1060.60,481.47L1062.21,479.84L1063.81,478.22L1065.40,476.59L1066.98,474.96L1068.54,473.33L1070.10,471.70L1071.64,470.08L1073.16,468.45L1074.68,466.82L1076.18,465.19L1077.66,463.56L1079.14,461.94L1080.60,460.31L1082.04,458.68L1083.48,457.05L1084.89,455.42L1086.30,453.80L1087.69,452.17L1089.07,450.54L1090.43,448.91L1091.78,447.28L1093.11,445.66L1094.43,444.03L1095.74,442.40L1097.03,440.77L1098.30,439.14L1099.56,437.52L1100.81,435.89L1102.04,434.26L1103.25,432.63L1104.45,431.00L1105.63,429.38L1106.80,427.75L1107.96,426.12L1109.09,424.49L1110.21,422.86L1111.32,421.24L1112.41,419.61L1113.48,417.98L1114.54,416.35L1115.58,414.72L1116.61,413.10L1117.62,411.47L1118.61,409.84L1119.58,408.21L1120.54,406.58L1121.49,404.96L1122.41,403.33L1123.32,401.70L1124.21,400.07L1125.09,398.44L1125.95,396.82L1126.79,395.19L1127.61,393.56L1128.42,391.93L1129.21,390.30L1129.98,388.68L1130.74,387.05L1131.47,385.42L1132.19,383.79L1132.90,382.16L1133.58,380.54L1134.25,378.91L1134.90,377.28L1135.53,375.65L1136.14,374.02L1136.74,372.40L1137.32,370.77L1137.88,369.14L1138.42,367.51L1138.95,365.88L1139.45,364.26L1139.94,362.63L1140.41,361.00L1140.86,359.37L1141.30,357.74L1141.71,356.12L1142.11,354.49L1142.49,352.86L1142.85,351.23L1143.19,349.60L1143.52,347.98L1143.82,346.35L1144.11,344.72L1144.38,343.09L1144.63,341.46L1144.86,339.84L1145.08,338.21L1145.27,336.58L1145.45,334.95L1145.61,333.32L1145.74,331.70L1145.87,330.07L1145.97,328.44L1146.05,326.81L1146.12,325.18L1146.16,323.56L1146.19,321.93L1146.20,320.30L1146.19,318.67L1146.16,317.04L1146.12,315.42L1146.05,313.79L1145.97,312.16L1145.87,310.53L1145.74,308.90L1145.61,307.28L1145.45,305.65L1145.27,304.02L1145.08,302.39L1144.86,300.76L1144.63,299.14L1144.38,297.51L1144.11,295.88L1143.82,294.25L1143.52,292.62L1143.19,291.00L1142.85,289.37L1142.49,287.74L1142.11,286.11L1141.71,284.48L1141.30,282.86L1140.86,281.23L1140.41,279.60L1139.94,277.97L1139.45,276.34L1138.95,274.72L1138.42,273.09L1137.88,271.46L1137.32,269.83L1136.74,268.20L1136.14,266.58L1135.53,264.95L1134.90,263.32L1134.25,261.69L1133.58,260.06L1132.90,258.44L1132.19,256.81L1131.47,255.18L1130.74,253.55L1129.98,251.92L1129.21,250.30L1128.42,248.67L1127.61,247.04L1126.79,245.41L1125.95,243.78L1125.09,242.16L1124.21,240.53L1123.32,238.90L1122.41,237.27L1121.49,235.64L1120.54,234.02L1119.58,232.39L1118.61,230.76L1117.62,229.13L1116.61,227.50L1115.58,225.88L1114.54,224.25L1113.48,222.62L1112.41,220.99L1111.32,219.36L1110.21,217.74L1109.09,216.11L1107.96,214.48L1106.80,212.85L1105.63,211.22L1104.45,209.60L1103.25,207.97L1102.04,206.34L1100.81,204.71L1099.56,203.08L1098.30,201.46L1097.03,199.83L1095.74,198.20L1094.43,196.57L1093.11,194.94L1091.78,193.32L1090.43,191.69L1089.07,190.06L1087.69,188.43L1086.30,186.80L1084.89,185.18L1083.48,183.55L1082.04,181.92L1080.60,180.29L1079.14,178.66L1077.66,177.04L1076.18,175.41L1074.68,173.78L1073.16,172.15L1071.64,170.52L1070.10,168.90L1068.54,167.27L1066.98,165.64L1065.40,164.01L1063.81,162.38L1062.21,160.76L1060.60,159.13L1058.97,157.50L1057.33,155.87L1055.68,154.24L1054.02,152.62L1052.34,150.99L1050.66,149.36L1048.96,147.73L1047.26,146.10L1045.54,144.48L1043.81,142.85L1042.07,141.22L1040.32,139.59L1038.55,137.96L1036.78,136.34L1035.00,134.71L1033.21,133.08L1031.41,131.45L1029.59,129.82L1027.77,128.20L1025.94,126.57L1024.10,124.94L1022.25,123.31L1020.39,121.68L1018.52,120.06L1016.64,118.43L1014.76,116.80L1012.86,115.17L1010.96,113.54L1009.05,111.92L1007.13,110.29L1005.20,108.66L1003.27,107.03L1001.33,105.40L999.37,103.78L997.42,102.15L995.45,100.52L993.48,98.89L991.50,97.26L989.51,95.64L987.52,94.01L985.52,92.38L983.52,90.75L981.50,89.12L979.49,87.50L977.46,85.87L975.43,84.24L973.40,82.61L971.36,80.98L969.31,79.36L967.26,77.73L965.20,76.10L963.14,74.47L961.08,72.84L959.01,71.22L956.93,69.59L954.85,67.96L952.77,66.33L950.69,64.70L948.60,63.08L946.50,61.45L944.40,59.82L942.30,58.19L940.20,56.56L938.10,54.94L935.99,53.31L933.87,51.68L931.76,50.05L929.64,48.42L927.53,46.80L925.41,45.17L923.28,43.54L921.16,41.91L919.03,40.28L916.91,38.66L914.78,37.03L912.65,35.40L910.52,33.77L908.39,32.14L906.26,30.52L904.13,28.89L902.00,27.26M902.00,613.34L903.70,611.71L905.41,610.08L907.11,608.46L908.82,606.83L910.52,605.20L912.22,603.57L913.93,601.94L915.63,600.32L917.33,598.69L919.03,597.06L920.72,595.43L922.42,593.80L924.12,592.18L925.81,590.55L927.50,588.92L929.19,587.29L930.88,585.66L932.56,584.04L934.24,582.41L935.92,580.78L937.60,579.15L939.28,577.52L940.95,575.90L942.62,574.27L944.28,572.64L945.95,571.01L947.61,569.38L949.26,567.76L950.91,566.13L952.56,564.50L954.21,562.87L955.85,561.24L957.49,559.62L959.12,557.99L960.75,556.36L962.37,554.73L963.99,553.10L965.60,551.48L967.21,549.85L968.82,548.22L970.42,546.59L972.01,544.96L973.60,543.34L975.18,541.71L976.76,540.08L978.33,538.45L979.90,536.82L981.46,535.20L983.01,533.57L984.56,531.94L986.10,530.31L987.64,528.68L989.17,527.06L990.69,525.43L992.21,523.80L993.72,522.17L995.22,520.54L996.71,518.92L998.20,517.29L999.68,515.66L1001.15,514.03L1002.62,512.40L1004.08,510.78L1005.53,509.15L1006.97,507.52L1008.40,505.89L1009.83,504.26L1011.24,502.64L1012.65,501.01L1014.05,499.38L1015.45,497.75L1016.83,496.12L1018.20,494.50L1019.57,492.87L1020.93,491.24L1022.28,489.61L1023.61,487.98L1024.94,486.36L1026.26,484.73L1027.57,483.10L1028.88,481.47L1030.17,479.84L1031.45,478.22L1032.72,476.59L1033.98,474.96L1035.24,473.33L1036.48,471.70L1037.71,470.08L1038.93,468.45L1040.14,466.82L1041.34,465.19L1042.53,463.56L1043.71,461.94L1044.88,460.31L1046.03,458.68L1047.18,457.05L1048.32,455.42L1049.44,453.80L1050.55,452.17L1051.65,450.54L1052.74,448.91L1053.82,447.28L1054.89,445.66L1055.95,444.03L1056.99,442.40L1058.02,440.77L1059.04,439.14L1060.05,437.52L1061.05,435.89L1062.03,434.26L1063.00,432.63L1063.96,431.00L1064.91,429.38L1065.84,427.75L1066.76,426.12L1067.67,424.49L1068.57,422.86L1069.46,421.24L1070.33,419.61L1071.19,417.98L1072.03,416.35L1072.87,414.72L1073.69,413.10L1074.49,411.47L1075.29,409.84L1076.07,408.21L1076.83,406.58L1077.59,404.96L1078.33,403.33L1079.06,401.70L1079.77,400.07L1080.47,398.44L1081.16,396.82L1081.83,395.19L1082.49,393.56L1083.13,391.93L1083.77,390.30L1084.38,388.68L1084.99,387.05L1085.58,385.42L1086.15,383.79L1086.72,382.16L1087.26,380.54L1087.80,378.91L1088.32,377.28L1088.82,375.65L1089.32,374.02L1089.79,372.40L1090.25,370.77L1090.70,369.14L1091.14,367.51L1091.56,365.88L1091.96,364.26L1092.35,362.63L1092.73,361.00L1093.09,359.37L1093.44,357.74L1093.77,356.12L1094.09,354.49L1094.39,352.86L1094.68,351.23L1094.95,349.60L1095.21,347.98L1095.46,346.35L1095.69,344.72L1095.90,343.09L1096.10,341.46L1096.29,339.84L1096.46,338.21L1096.62,336.58L1096.76,334.95L1096.88,333.32L1097.00,331.70L1097.09,330.07L1097.17,328.44L1097.24,326.81L1097.29,325.18L1097.33,323.56L1097.35,321.93L1097.36,320.30L1097.35,318.67L1097.33,317.04L1097.29,315.42L1097.24,313.79L1097.17,312.16L1097.09,310.53L1097.00,308.90L1096.88,307.28L1096.76,305.65L1096.62,304.02L1096.46,302.39L1096.29,300.76L1096.10,299.14L1095.90,297.51L1095.69,295.88L1095.46,294.25L1095.21,292.62L1094.95,291.00L1094.68,289.37L1094.39,287.74L1094.09,286.11L1093.77,284.48L1093.44,282.86L1093.09,281.23L1092.73,279.60L1092.35,277.97L1091.96,276.34L1091.56,274.72L1091.14,273.09L1090.70,271.46L1090.25,269.83L1089.79,268.20L1089.32,266.58L1088.82,264.95L1088.32,263.32L1087.80,261.69L1087.26,260.06L1086.72,258.44L1086.15,256.81L1085.58,255.18L1084.99,253.55L1084.38,251.92L1083.77,250.30L1083.13,248.67L1082.49,247.04L1081.83,245.41L1081.16,243.78L1080.47,242.16L1079.77,240.53L1079.06,238.90L1078.33,237.27L1077.59,235.64L1076.83,234.02L1076.07,232.39L1075.29,230.76L1074.49,229.13L1073.69,227.50L1072.87,225.88L1072.03,224.25L1071.19,222.62L1070.33,220.99L1069.46,219.36L1068.57,217.74L1067.67,216.11L1066.76,214.48L1065.84,212.85L1064.91,211.22L1063.96,209.60L1063.00,207.97L1062.03,206.34L1061.05,204.71L1060.05,203.08L1059.04,201.46L1058.02,199.83L1056.99,198.20L1055.95,196.57L1054.89,194.94L1053.82,193.32L1052.74,191.69L1051.65,190.06L1050.55,188.43L1049.44,186.80L1048.32,185.18L1047.18,183.55L1046.03,181.92L1044.88,180.29L1043.71,178.66L1042.53,177.04L1041.34,175.41L1040.14,173.78L1038.93,172.15L1037.71,170.52L1036.48,168.90L1035.24,167.27L1033.98,165.64L1032.72,164.01L1031.45,162.38L1030.17,160.76L1028.88,159.13L1027.57,157.50L1026.26,155.87L1024.94,154.24L1023.61,152.62L1022.28,150.99L1020.93,149.36L1019.57,147.73L1018.20,146.10L1016.83,144.48L1015.45,142.85L1014.05,141.22L1012.65,139.59L1011.24,137.96L1009.83,136.34L1008.40,134.71L1006.97,133.08L1005.53,131.45L1004.08,129.82L1002.62,128.20L1001.15,126.57L999.68,124.94L998.20,123.31L996.71,121.68L995.22,120.06L993.72,118.43L992.21,116.80L990.69,115.17L989.17,113.54L987.64,111.92L986.10,110.29L984.56,108.66L983.01,107.03L981.46,105.40L979.90,103.78L978.33,102.15L976.76,100.52L975.18,98.89L973.60,97.26L972.01,95.64L970.42,94.01L968.82,92.38L967.21,90.75L965.60,89.12L963.99,87.50L962.37,85.87L960.75,84.24L959.12,82.61L957.49,80.98L955.85,79.36L954.21,77.73L952.56,76.10L950.91,74.47L949.26,72.84L947.61,71.22L945.95,69.59L944.28,67.96L942.62,66.33L940.95,64.70L939.28,63.08L937.60,61.45L935.92,59.82L934.24,58.19L932.56,56.56L930.88,54.94L929.19,53.31L927.50,51.68L925.81,50.05L924.12,48.42L922.42,46.80L920.72,45.17L919.03,43.54L917.33,41.91L915.63,40.28L913.93,38.66L912.22,37.03L910.52,35.40L908.82,33.77L907.11,32.14L905.41,30.52L903.70,28.89L902.00,27.26M902.00,613.34L903.28,611.71L904.56,610.08L905.84,608.46L907.11,606.83L908.39,605.20L909.67,603.57L910.94,601.94L912.22,600.32L913.50,598.69L914.77,597.06L916.04,595.43L917.32,593.80L918.59,592.18L919.86,590.55L921.12,588.92L922.39,587.29L923.66,585.66L924.92,584.04L926.18,582.41L927.44,580.78L928.70,579.15L929.96,577.52L931.21,575.90L932.46,574.27L933.71,572.64L934.96,571.01L936.20,569.38L937.45,567.76L938.69,566.13L939.92,564.50L941.16,562.87L942.39,561.24L943.61,559.62L944.84,557.99L946.06,556.36L947.28,554.73L948.49,553.10L949.70,551.48L950.91,549.85L952.11,548.22L953.31,546.59L954.51,544.96L955.70,543.34L956.89,541.71L958.07,540.08L959.25,538.45L960.42,536.82L961.60,535.20L962.76,533.57L963.92,531.94L965.08,530.31L966.23,528.68L967.38,527.06L968.52,525.43L969.66,523.80L970.79,522.17L971.91,520.54L973.03,518.92L974.15,517.29L975.26,515.66L976.36,514.03L977.46,512.40L978.56,510.78L979.64,509.15L980.73,507.52L981.80,505.89L982.87,504.26L983.93,502.64L984.99,501.01L986.04,499.38L987.08,497.75L988.12,496.12L989.15,494.50L990.18,492.87L991.20,491.24L992.21,489.61L993.21,487.98L994.21,486.36L995.20,484.73L996.18,483.10L997.16,481.47L998.13,479.84L999.09,478.22L1000.04,476.59L1000.99,474.96L1001.93,473.33L1002.86,471.70L1003.78,470.08L1004.70,468.45L1005.61,466.82L1006.51,465.19L1007.40,463.56L1008.28,461.94L1009.16,460.31L1010.03,458.68L1010.89,457.05L1011.74,455.42L1012.58,453.80L1013.41,452.17L1014.24,450.54L1015.06,448.91L1015.87,447.28L1016.67,445.66L1017.46,444.03L1018.24,442.40L1019.02,440.77L1019.78,439.14L1020.54,437.52L1021.28,435.89L1022.02,434.26L1022.75,432.63L1023.47,431.00L1024.18,429.38L1024.88,427.75L1025.57,426.12L1026.26,424.49L1026.93,422.86L1027.59,421.24L1028.25,419.61L1028.89,417.98L1029.52,416.35L1030.15,414.72L1030.76,413.10L1031.37,411.47L1031.96,409.84L1032.55,408.21L1033.13,406.58L1033.69,404.96L1034.25,403.33L1034.79,401.70L1035.33,400.07L1035.85,398.44L1036.37,396.82L1036.87,395.19L1037.37,393.56L1037.85,391.93L1038.32,390.30L1038.79,388.68L1039.24,387.05L1039.68,385.42L1040.12,383.79L1040.54,382.16L1040.95,380.54L1041.35,378.91L1041.74,377.28L1042.12,375.65L1042.49,374.02L1042.84,372.40L1043.19,370.77L1043.53,369.14L1043.85,367.51L1044.17,365.88L1044.47,364.26L1044.76,362.63L1045.05,361.00L1045.32,359.37L1045.58,357.74L1045.83,356.12L1046.07,354.49L1046.29,352.86L1046.51,351.23L1046.72,349.60L1046.91,347.98L1047.09,346.35L1047.27,344.72L1047.43,343.09L1047.58,341.46L1047.72,339.84L1047.85,338.21L1047.96,336.58L1048.07,334.95L1048.16,333.32L1048.25,331.70L1048.32,330.07L1048.38,328.44L1048.43,326.81L1048.47,325.18L1048.50,323.56L1048.51,321.93L1048.52,320.30L1048.51,318.67L1048.50,317.04L1048.47,315.42L1048.43,313.79L1048.38,312.16L1048.32,310.53L1048.25,308.90L1048.16,307.28L1048.07,305.65L1047.96,304.02L1047.85,302.39L1047.72,300.76L1047.58,299.14L1047.43,297.51L1047.27,295.88L1047.09,294.25L1046.91,292.62L1046.72,291.00L1046.51,289.37L1046.29,287.74L1046.07,286.11L1045.83,284.48L1045.58,282.86L1045.32,281.23L1045.05,279.60L1044.76,277.97L1044.47,276.34L1044.17,274.72L1043.85,273.09L1043.53,271.46L1043.19,269.83L1042.84,268.20L1042.49,266.58L1042.12,264.95L1041.74,263.32L1041.35,261.69L1040.95,260.06L1040.54,258.44L1040.12,256.81L1039.68,255.18L1039.24,253.55L1038.79,251.92L1038.32,250.30L1037.85,248.67L1037.37,247.04L1036.87,245.41L1036.37,243.78L1035.85,242.16L1035.33,240.53L1034.79,238.90L1034.25,237.27L1033.69,235.64L1033.13,234.02L1032.55,232.39L1031.96,230.76L1031.37,229.13L1030.76,227.50L1030.15,225.88L1029.52,224.25L1028.89,222.62L1028.25,220.99L1027.59,219.36L1026.93,217.74L1026.26,216.11L1025.57,214.48L1024.88,212.85L1024.18,211.22L1023.47,209.60L1022.75,207.97L1022.02,206.34L1021.28,204.71L1020.54,203.08L1019.78,201.46L1019.02,199.83L1018.24,198.20L1017.46,196.57L1016.67,194.94L1015.87,193.32L1015.06,191.69L1014.24,190.06L1013.41,188.43L1012.58,186.80L1011.74,185.18L1010.89,183.55L1010.03,181.92L1009.16,180.29L1008.28,178.66L1007.40,177.04L1006.51,175.41L1005.61,173.78L1004.70,172.15L1003.78,170.52L1002.86,168.90L1001.93,167.27L1000.99,165.64L1000.04,164.01L999.09,162.38L998.13,160.76L997.16,159.13L996.18,157.50L995.20,155.87L994.21,154.24L993.21,152.62L992.21,150.99L991.20,149.36L990.18,147.73L989.15,146.10L988.12,144.48L987.08,142.85L986.04,141.22L984.99,139.59L983.93,137.96L982.87,136.34L981.80,134.71L980.73,133.08L979.64,131.45L978.56,129.82L977.46,128.20L976.36,126.57L975.26,124.94L974.15,123.31L973.03,121.68L971.91,120.06L970.79,118.43L969.66,116.80L968.52,115.17L967.38,113.54L966.23,111.92L965.08,110.29L963.92,108.66L962.76,107.03L961.60,105.40L960.42,103.78L959.25,102.15L958.07,100.52L956.89,98.89L955.70,97.26L954.51,95.64L953.31,94.01L952.11,92.38L950.91,90.75L949.70,89.12L948.49,87.50L947.28,85.87L946.06,84.24L944.84,82.61L943.61,80.98L942.39,79.36L941.16,77.73L939.92,76.10L938.69,74.47L937.45,72.84L936.20,71.22L934.96,69.59L933.71,67.96L932.46,66.33L931.21,64.70L929.96,63.08L928.70,61.45L927.44,59.82L926.18,58.19L924.92,56.56L923.66,54.94L922.39,53.31L921.12,51.68L919.86,50.05L918.59,48.42L917.32,46.80L916.04,45.17L914.77,43.54L913.50,41.91L912.22,40.28L910.94,38.66L909.67,37.03L908.39,35.40L907.11,33.77L905.84,32.14L904.56,30.52L903.28,28.89L902.00,27.26M902.00,613.34L902.85,611.71L903.70,610.08L904.56,608.46L905.41,606.83L906.26,605.20L907.11,603.57L907.96,601.94L908.81,600.32L909.66,598.69L910.51,597.06L911.36,595.43L912.21,593.80L913.06,592.18L913.90,590.55L914.75,588.92L915.59,587.29L916.44,585.66L917.28,584.04L918.12,582.41L918.96,580.78L919.80,579.15L920.64,577.52L921.47,575.90L922.31,574.27L923.14,572.64L923.97,571.01L924.80,569.38L925.63,567.76L926.46,566.13L927.28,564.50L928.10,562.87L928.92,561.24L929.74,559.62L930.56,557.99L931.37,556.36L932.18,554.73L932.99,553.10L933.80,551.48L934.61,549.85L935.41,548.22L936.21,546.59L937.01,544.96L937.80,543.34L938.59,541.71L939.38,540.08L940.17,538.45L940.95,536.82L941.73,535.20L942.51,533.57L943.28,531.94L944.05,530.31L944.82,528.68L945.58,527.06L946.35,525.43L947.10,523.80L947.86,522.17L948.61,520.54L949.36,518.92L950.10,517.29L950.84,515.66L951.58,514.03L952.31,512.40L953.04,510.78L953.76,509.15L954.48,507.52L955.20,505.89L955.91,504.26L956.62,502.64L957.33,501.01L958.03,499.38L958.72,497.75L959.41,496.12L960.10,494.50L960.79,492.87L961.46,491.24L962.14,489.61L962.81,487.98L963.47,486.36L964.13,484.73L964.79,483.10L965.44,481.47L966.08,479.84L966.72,478.22L967.36,476.59L967.99,474.96L968.62,473.33L969.24,471.70L969.85,470.08L970.46,468.45L971.07,466.82L971.67,465.19L972.27,463.56L972.85,461.94L973.44,460.31L974.02,458.68L974.59,457.05L975.16,455.42L975.72,453.80L976.28,452.17L976.83,450.54L977.37,448.91L977.91,447.28L978.45,445.66L978.97,444.03L979.49,442.40L980.01,440.77L980.52,439.14L981.02,437.52L981.52,435.89L982.01,434.26L982.50,432.63L982.98,431.00L983.45,429.38L983.92,427.75L984.38,426.12L984.84,424.49L985.29,422.86L985.73,421.24L986.16,419.61L986.59,417.98L987.02,416.35L987.43,414.72L987.84,413.10L988.25,411.47L988.64,409.84L989.03,408.21L989.42,406.58L989.79,404.96L990.16,403.33L990.53,401.70L990.89,400.07L991.24,398.44L991.58,396.82L991.91,395.19L992.24,393.56L992.57,391.93L992.88,390.30L993.19,388.68L993.49,387.05L993.79,385.42L994.08,383.79L994.36,382.16L994.63,380.54L994.90,378.91L995.16,377.28L995.41,375.65L995.66,374.02L995.90,372.40L996.13,370.77L996.35,369.14L996.57,367.51L996.78,365.88L996.98,364.26L997.18,362.63L997.36,361.00L997.55,359.37L997.72,357.74L997.89,356.12L998.04,354.49L998.20,352.86L998.34,351.23L998.48,349.60L998.61,347.98L998.73,346.35L998.84,344.72L998.95,343.09L999.05,341.46L999.14,339.84L999.23,338.21L999.31,336.58L999.38,334.95L999.44,333.32L999.50,331.70L999.55,330.07L999.59,328.44L999.62,326.81L999.65,325.18L999.67,323.56L999.68,321.93L999.68,320.30L999.68,318.67L999.67,317.04L999.65,315.42L999.62,313.79L999.59,312.16L999.55,310.53L999.50,308.90L999.44,307.28L999.38,305.65L999.31,304.02L999.23,302.39L999.14,300.76L999.05,299.14L998.95,297.51L998.84,295.88L998.73,294.25L998.61,292.62L998.48,291.00L998.34,289.37L998.20,287.74L998.04,286.11L997.89,284.48L997.72,282.86L997.55,281.23L997.36,279.60L997.18,277.97L996.98,276.34L996.78,274.72L996.57,273.09L996.35,271.46L996.13,269.83L995.90,268.20L995.66,266.58L995.41,264.95L995.16,263.32L994.90,261.69L994.63,260.06L994.36,258.44L994.08,256.81L993.79,255.18L993.49,253.55L993.19,251.92L992.88,250.30L992.57,248.67L992.24,247.04L991.91,245.41L991.58,243.78L991.24,242.16L990.89,240.53L990.53,238.90L990.16,237.27L989.79,235.64L989.42,234.02L989.03,232.39L988.64,230.76L988.25,229.13L987.84,227.50L987.43,225.88L987.02,224.25L986.59,222.62L986.16,220.99L985.73,219.36L985.29,217.74L984.84,216.11L984.38,214.48L983.92,212.85L983.45,211.22L982.98,209.60L982.50,207.97L982.01,206.34L981.52,204.71L981.02,203.08L980.52,201.46L980.01,199.83L979.49,198.20L978.97,196.57L978.45,194.94L977.91,193.32L977.37,191.69L976.83,190.06L976.28,188.43L975.72,186.80L975.16,185.18L974.59,183.55L974.02,181.92L973.44,180.29L972.85,178.66L972.27,177.04L971.67,175.41L971.07,173.78L970.46,172.15L969.85,170.52L969.24,168.90L968.62,167.27L967.99,165.64L967.36,164.01L966.72,162.38L966.08,160.76L965.44,159.13L964.79,157.50L964.13,155.87L963.47,154.24L962.81,152.62L962.14,150.99L961.46,149.36L960.79,147.73L960.10,146.10L959.41,144.48L958.72,142.85L958.03,141.22L957.33,139.59L956.62,137.96L955.91,136.34L955.20,134.71L954.48,133.08L953.76,131.45L953.04,129.82L952.31,128.20L951.58,126.57L950.84,124.94L950.10,123.31L949.36,121.68L948.61,120.06L947.86,118.43L947.10,116.80L946.35,115.17L945.58,113.54L944.82,111.92L944.05,110.29L943.28,108.66L942.51,107.03L941.73,105.40L940.95,103.78L940.17,102.15L939.38,100.52L938.59,98.89L937.80,97.26L937.01,95.64L936.21,94.01L935.41,92.38L934.61,90.75L933.80,89.12L932.99,87.50L932.18,85.87L931.37,84.24L930.56,82.61L929.74,80.98L928.92,79.36L928.10,77.73L927.28,76.10L926.46,74.47L925.63,72.84L924.80,71.22L923.97,69.59L923.14,67.96L922.31,66.33L921.47,64.70L920.64,63.08L919.80,61.45L918.96,59.82L918.12,58.19L917.28,56.56L916.44,54.94L915.59,53.31L914.75,51.68L913.90,50.05L913.06,48.42L912.21,46.80L911.36,45.17L910.51,43.54L909.66,41.91L908.81,40.28L907.96,38.66L907.11,37.03L906.26,35.40L905.41,33.77L904.56,32.14L903.70,30.52L902.85,28.89L902.00,27.26M902.00,613.34L902.43,611.71L902.85,610.08L903.28,608.46L903.70,606.83L904.13,605.20L904.56,603.57L904.98,601.94L905.41,600.32L905.83,598.69L906.26,597.06L906.68,595.43L907.11,593.80L907.53,592.18L907.95,590.55L908.37,588.92L908.80,587.29L909.22,585.66L909.64,584.04L910.06,582.41L910.48,580.78L910.90,579.15L911.32,577.52L911.74,575.90L912.15,574.27L912.57,572.64L912.99,571.01L913.40,569.38L913.82,567.76L914.23,566.13L914.64,564.50L915.05,562.87L915.46,561.24L915.87,559.62L916.28,557.99L916.69,556.36L917.09,554.73L917.50,553.10L917.90,551.48L918.30,549.85L918.70,548.22L919.10,546.59L919.50,544.96L919.90,543.34L920.30,541.71L920.69,540.08L921.08,538.45L921.47,536.82L921.87,535.20L922.25,533.57L922.64,531.94L923.03,530.31L923.41,528.68L923.79,527.06L924.17,525.43L924.55,523.80L924.93,522.17L925.30,520.54L925.68,518.92L926.05,517.29L926.42,515.66L926.79,514.03L927.15,512.40L927.52,510.78L927.88,509.15L928.24,507.52L928.60,505.89L928.96,504.26L929.31,502.64L929.66,501.01L930.01,499.38L930.36,497.75L930.71,496.12L931.05,494.50L931.39,492.87L931.73,491.24L932.07,489.61L932.40,487.98L932.74,486.36L933.07,484.73L933.39,483.10L933.72,481.47L934.04,479.84L934.36,478.22L934.68,476.59L935.00,474.96L935.31,473.33L935.62,471.70L935.93,470.08L936.23,468.45L936.54,466.82L936.84,465.19L937.13,463.56L937.43,461.94L937.72,460.31L938.01,458.68L938.30,457.05L938.58,455.42L938.86,453.80L939.14,452.17L939.41,450.54L939.69,448.91L939.96,447.28L940.22,445.66L940.49,444.03L940.75,442.40L941.01,440.77L941.26,439.14L941.51,437.52L941.76,435.89L942.01,434.26L942.25,432.63L942.49,431.00L942.73,429.38L942.96,427.75L943.19,426.12L943.42,424.49L943.64,422.86L943.86,421.24L944.08,419.61L944.30,417.98L944.51,416.35L944.72,414.72L944.92,413.10L945.12,411.47L945.32,409.84L945.52,408.21L945.71,406.58L945.90,404.96L946.08,403.33L946.26,401.70L946.44,400.07L946.62,398.44L946.79,396.82L946.96,395.19L947.12,393.56L947.28,391.93L947.44,390.30L947.60,388.68L947.75,387.05L947.89,385.42L948.04,383.79L948.18,382.16L948.32,380.54L948.45,378.91L948.58,377.28L948.71,375.65L948.83,374.02L948.95,372.40L949.06,370.77L949.18,369.14L949.28,367.51L949.39,365.88L949.49,364.26L949.59,362.63L949.68,361.00L949.77,359.37L949.86,357.74L949.94,356.12L950.02,354.49L950.10,352.86L950.17,351.23L950.24,349.60L950.30,347.98L950.36,346.35L950.42,344.72L950.48,343.09L950.53,341.46L950.57,339.84L950.62,338.21L950.65,336.58L950.69,334.95L950.72,333.32L950.75,331.70L950.77,330.07L950.79,328.44L950.81,326.81L950.82,325.18L950.83,323.56L950.84,321.93L950.84,320.30L950.84,318.67L950.83,317.04L950.82,315.42L950.81,313.79L950.79,312.16L950.77,310.53L950.75,308.90L950.72,307.28L950.69,305.65L950.65,304.02L950.62,302.39L950.57,300.76L950.53,299.14L950.48,297.51L950.42,295.88L950.36,294.25L950.30,292.62L950.24,291.00L950.17,289.37L950.10,287.74L950.02,286.11L949.94,284.48L949.86,282.86L949.77,281.23L949.68,279.60L949.59,277.97L949.49,276.34L949.39,274.72L949.28,273.09L949.18,271.46L949.06,269.83L948.95,268.20L948.83,266.58L948.71,264.95L948.58,263.32L948.45,261.69L948.32,260.06L948.18,258.44L948.04,256.81L947.89,255.18L947.75,253.55L947.60,251.92L947.44,250.30L947.28,248.67L947.12,247.04L946.96,245.41L946.79,243.78L946.62,242.16L946.44,240.53L946.26,238.90L946.08,237.27L945.90,235.64L945.71,234.02L945.52,232.39L945.32,230.76L945.12,229.13L944.92,227.50L944.72,225.88L944.51,224.25L944.30,222.62L944.08,220.99L943.86,219.36L943.64,217.74L943.42,216.11L943.19,214.48L942.96,212.85L942.73,211.22L942.49,209.60L942.25,207.97L942.01,206.34L941.76,204.71L941.51,203.08L941.26,201.46L941.01,199.83L940.75,198.20L940.49,196.57L940.22,194.94L939.96,193.32L939.69,191.69L939.41,190.06L939.14,188.43L938.86,186.80L938.58,185.18L938.30,183.55L938.01,181.92L937.72,180.29L937.43,178.66L937.13,177.04L936.84,175.41L936.54,173.78L936.23,172.15L935.93,170.52L935.62,168.90L935.31,167.27L935.00,165.64L934.68,164.01L934.36,162.38L934.04,160.76L933.72,159.13L933.39,157.50L933.07,155.87L932.74,154.24L932.40,152.62L932.07,150.99L931.73,149.36L931.39,147.73L931.05,146.10L930.71,144.48L930.36,142.85L930.01,141.22L929.66,139.59L929.31,137.96L928.96,136.34L928.60,134.71L928.24,133.08L927.88,131.45L927.52,129.82L927.15,128.20L926.79,126.57L926.42,124.94L926.05,123.31L925.68,121.68L925.30,120.06L924.93,118.43L924.55,116.80L924.17,115.17L923.79,113.54L923.41,111.92L923.03,110.29L922.64,108.66L922.25,107.03L921.87,105.40L921.47,103.78L921.08,102.15L920.69,100.52L920.30,98.89L919.90,97.26L919.50,95.64L919.10,94.01L918.70,92.38L918.30,90.75L917.90,89.12L917.50,87.50L917.09,85.87L916.69,84.24L916.28,82.61L915.87,80.98L915.46,79.36L915.05,77.73L914.64,76.10L914.23,74.47L913.82,72.84L913.40,71.22L912.99,69.59L912.57,67.96L912.15,66.33L911.74,64.70L911.32,63.08L910.90,61.45L910.48,59.82L910.06,58.19L909.64,56.56L909.22,54.94L908.80,53.31L908.37,51.68L907.95,50.05L907.53,48.42L907.11,46.80L906.68,45.17L906.26,43.54L905.83,41.91L905.41,40.28L904.98,38.66L904.56,37.03L904.13,35.40L903.70,33.77L903.28,32.14L902.85,30.52L902.43,28.89L902.00,27.26M902.00,613.34L902.00,611.71L902.00,610.08L902.00,608.46L902.00,606.83L902.00,605.20L902.00,603.57L902.00,601.94L902.00,600.32L902.00,598.69L902.00,597.06L902.00,595.43L902.00,593.80L902.00,592.18L902.00,590.55L902.00,588.92L902.00,587.29L902.00,585.66L902.00,584.04L902.00,582.41L902.00,580.78L902.00,579.15L902.00,577.52L902.00,575.90L902.00,574.27L902.00,572.64L902.00,571.01L902.00,569.38L902.00,567.76L902.00,566.13L902.00,564.50L902.00,562.87L902.00,561.24L902.00,559.62L902.00,557.99L902.00,556.36L902.00,554.73L902.00,553.10L902.00,551.48L902.00,549.85L902.00,548.22L902.00,546.59L902.00,544.96L902.00,543.34L902.00,541.71L902.00,540.08L902.00,538.45L902.00,536.82L902.00,535.20L902.00,533.57L902.00,531.94L902.00,530.31L902.00,528.68L902.00,527.06L902.00,525.43L902.00,523.80L902.00,522.17L902.00,520.54L902.00,518.92L902.00,517.29L902.00,515.66L902.00,514.03L902.00,512.40L902.00,510.78L902.00,509.15L902.00,507.52L902.00,505.89L902.00,504.26L902.00,502.64L902.00,501.01L902.00,499.38L902.00,497.75L902.00,496.12L902.00,494.50L902.00,492.87L902.00,491.24L902.00,489.61L902.00,487.98L902.00,486.36L902.00,484.73L902.00,483.10L902.00,481.47L902.00,479.84L902.00,478.22L902.00,476.59L902.00,474.96L902.00,473.33L902.00,471.70L902.00,470.08L902.00,468.45L902.00,466.82L902.00,465.19L902.00,463.56L902.00,461.94L902.00,460.31L902.00,458.68L902.00,457.05L902.00,455.42L902.00,453.80L902.00,452.17L902.00,450.54L902.00,448.91L902.00,447.28L902.00,445.66L902.00,444.03L902.00,442.40L902.00,440.77L902.00,439.14L902.00,437.52L902.00,435.89L902.00,434.26L902.00,432.63L902.00,431.00L902.00,429.38L902.00,427.75L902.00,426.12L902.00,424.49L902.00,422.86L902.00,421.24L902.00,419.61L902.00,417.98L902.00,416.35L902.00,414.72L902.00,413.10L902.00,411.47L902.00,409.84L902.00,408.21L902.00,406.58L902.00,404.96L902.00,403.33L902.00,401.70L902.00,400.07L902.00,398.44L902.00,396.82L902.00,395.19L902.00,393.56L902.00,391.93L902.00,390.30L902.00,388.68L902.00,387.05L902.00,385.42L902.00,383.79L902.00,382.16L902.00,380.54L902.00,378.91L902.00,377.28L902.00,375.65L902.00,374.02L902.00,372.40L902.00,370.77L902.00,369.14L902.00,367.51L902.00,365.88L902.00,364.26L902.00,362.63L902.00,361.00L902.00,359.37L902.00,357.74L902.00,356.12L902.00,354.49L902.00,352.86L902.00,351.23L902.00,349.60L902.00,347.98L902.00,346.35L902.00,344.72L902.00,343.09L902.00,341.46L902.00,339.84L902.00,338.21L902.00,336.58L902.00,334.95L902.00,333.32L902.00,331.70L902.00,330.07L902.00,328.44L902.00,326.81L902.00,325.18L902.00,323.56L902.00,321.93L902.00,320.30L902.00,318.67L902.00,317.04L902.00,315.42L902.00,313.79L902.00,312.16L902.00,310.53L902.00,308.90L902.00,307.28L902.00,305.65L902.00,304.02L902.00,302.39L902.00,300.76L902.00,299.14L902.00,297.51L902.00,295.88L902.00,294.25L902.00,292.62L902.00,291.00L902.00,289.37L902.00,287.74L902.00,286.11L902.00,284.48L902.00,282.86L902.00,281.23L902.00,279.60L902.00,277.97L902.00,276.34L902.00,274.72L902.00,273.09L902.00,271.46L902.00,269.83L902.00,268.20L902.00,266.58L902.00,264.95L902.00,263.32L902.00,261.69L902.00,260.06L902.00,258.44L902.00,256.81L902.00,255.18L902.00,253.55L902.00,251.92L902.00,250.30L902.00,248.67L902.00,247.04L902.00,245.41L902.00,243.78L902.00,242.16L902.00,240.53L902.00,238.90L902.00,237.27L902.00,235.64L902.00,234.02L902.00,232.39L902.00,230.76L902.00,229.13L902.00,227.50L902.00,225.88L902.00,224.25L902.00,222.62L902.00,220.99L902.00,219.36L902.00,217.74L902.00,216.11L902.00,214.48L902.00,212.85L902.00,211.22L902.00,209.60L902.00,207.97L902.00,206.34L902.00,204.71L902.00,203.08L902.00,201.46L902.00,199.83L902.00,198.20L902.00,196.57L902.00,194.94L902.00,193.32L902.00,191.69L902.00,190.06L902.00,188.43L902.00,186.80L902.00,185.18L902.00,183.55L902.00,181.92L902.00,180.29L902.00,178.66L902.00,177.04L902.00,175.41L902.00,173.78L902.00,172.15L902.00,170.52L902.00,168.90L902.00,167.27L902.00,165.64L902.00,164.01L902.00,162.38L902.00,160.76L902.00,159.13L902.00,157.50L902.00,155.87L902.00,154.24L902.00,152.62L902.00,150.99L902.00,149.36L902.00,147.73L902.00,146.10L902.00,144.48L902.00,142.85L902.00,141.22L902.00,139.59L902.00,137.96L902.00,136.34L902.00,134.71L902.00,133.08L902.00,131.45L902.00,129.82L902.00,128.20L902.00,126.57L902.00,124.94L902.00,123.31L902.00,121.68L902.00,120.06L902.00,118.43L902.00,116.80L902.00,115.17L902.00,113.54L902.00,111.92L902.00,110.29L902.00,108.66L902.00,107.03L902.00,105.40L902.00,103.78L902.00,102.15L902.00,100.52L902.00,98.89L902.00,97.26L902.00,95.64L902.00,94.01L902.00,92.38L902.00,90.75L902.00,89.12L902.00,87.50L902.00,85.87L902.00,84.24L902.00,82.61L902.00,80.98L902.00,79.36L902.00,77.73L902.00,76.10L902.00,74.47L902.00,72.84L902.00,71.22L902.00,69.59L902.00,67.96L902.00,66.33L902.00,64.70L902.00,63.08L902.00,61.45L902.00,59.82L902.00,58.19L902.00,56.56L902.00,54.94L902.00,53.31L902.00,51.68L902.00,50.05L902.00,48.42L902.00,46.80L902.00,45.17L902.00,43.54L902.00,41.91L902.00,40.28L902.00,38.66L902.00,37.03L902.00,35.40L902.00,33.77L902.00,32.14L902.00,30.52L902.00,28.89L902.00,27.26M902.00,613.34L901.57,611.71L901.15,610.08L900.72,608.46L900.30,606.83L899.87,605.20L899.44,603.57L899.02,601.94L898.59,600.32L898.17,598.69L897.74,597.06L897.32,595.43L896.89,593.80L896.47,592.18L896.05,590.55L895.63,588.92L895.20,587.29L894.78,585.66L894.36,584.04L893.94,582.41L893.52,580.78L893.10,579.15L892.68,577.52L892.26,575.90L891.85,574.27L891.43,572.64L891.01,571.01L890.60,569.38L890.18,567.76L889.77,566.13L889.36,564.50L888.95,562.87L888.54,561.24L888.13,559.62L887.72,557.99L887.31,556.36L886.91,554.73L886.50,553.10L886.10,551.48L885.70,549.85L885.30,548.22L884.90,546.59L884.50,544.96L884.10,543.34L883.70,541.71L883.31,540.08L882.92,538.45L882.53,536.82L882.13,535.20L881.75,533.57L881.36,531.94L880.97,530.31L880.59,528.68L880.21,527.06L879.83,525.43L879.45,523.80L879.07,522.17L878.70,520.54L878.32,518.92L877.95,517.29L877.58,515.66L877.21,514.03L876.85,512.40L876.48,510.78L876.12,509.15L875.76,507.52L875.40,505.89L875.04,504.26L874.69,502.64L874.34,501.01L873.99,499.38L873.64,497.75L873.29,496.12L872.95,494.50L872.61,492.87L872.27,491.24L871.93,489.61L871.60,487.98L871.26,486.36L870.93,484.73L870.61,483.10L870.28,481.47L869.96,479.84L869.64,478.22L869.32,476.59L869.00,474.96L868.69,473.33L868.38,471.70L868.07,470.08L867.77,468.45L867.46,466.82L867.16,465.19L866.87,463.56L866.57,461.94L866.28,460.31L865.99,458.68L865.70,457.05L865.42,455.42L865.14,453.80L864.86,452.17L864.59,450.54L864.31,448.91L864.04,447.28L863.78,445.66L863.51,444.03L863.25,442.40L862.99,440.77L862.74,439.14L862.49,437.52L862.24,435.89L861.99,434.26L861.75,432.63L861.51,431.00L861.27,429.38L861.04,427.75L860.81,426.12L860.58,424.49L860.36,422.86L860.14,421.24L859.92,419.61L859.70,417.98L859.49,416.35L859.28,414.72L859.08,413.10L858.88,411.47L858.68,409.84L858.48,408.21L858.29,406.58L858.10,404.96L857.92,403.33L857.74,401.70L857.56,400.07L857.38,398.44L857.21,396.82L857.04,395.19L856.88,393.56L856.72,391.93L856.56,390.30L856.40,388.68L856.25,387.05L856.11,385.42L855.96,383.79L855.82,382.16L855.68,380.54L855.55,378.91L855.42,377.28L855.29,375.65L855.17,374.02L855.05,372.40L854.94,370.77L854.82,369.14L854.72,367.51L854.61,365.88L854.51,364.26L854.41,362.63L854.32,361.00L854.23,359.37L854.14,357.74L854.06,356.12L853.98,354.49L853.90,352.86L853.83,351.23L853.76,349.60L853.70,347.98L853.64,346.35L853.58,344.72L853.52,343.09L853.47,341.46L853.43,339.84L853.38,338.21L853.35,336.58L853.31,334.95L853.28,333.32L853.25,331.70L853.23,330.07L853.21,328.44L853.19,326.81L853.18,325.18L853.17,323.56L853.16,321.93L853.16,320.30L853.16,318.67L853.17,317.04L853.18,315.42L853.19,313.79L853.21,312.16L853.23,310.53L853.25,308.90L853.28,307.28L853.31,305.65L853.35,304.02L853.38,302.39L853.43,300.76L853.47,299.14L853.52,297.51L853.58,295.88L853.64,294.25L853.70,292.62L853.76,291.00L853.83,289.37L853.90,287.74L853.98,286.11L854.06,284.48L854.14,282.86L854.23,281.23L854.32,279.60L854.41,277.97L854.51,276.34L854.61,274.72L854.72,273.09L854.82,271.46L854.94,269.83L855.05,268.20L855.17,266.58L855.29,264.95L855.42,263.32L855.55,261.69L855.68,260.06L855.82,258.44L855.96,256.81L856.11,255.18L856.25,253.55L856.40,251.92L856.56,250.30L856.72,248.67L856.88,247.04L857.04,245.41L857.21,243.78L857.38,242.16L857.56,240.53L857.74,238.90L857.92,237.27L858.10,235.64L858.29,234.02L858.48,232.39L858.68,230.76L858.88,229.13L859.08,227.50L859.28,225.88L859.49,224.25L859.70,222.62L859.92,220.99L860.14,219.36L860.36,217.74L860.58,216.11L860.81,214.48L861.04,212.85L861.27,211.22L861.51,209.60L861.75,207.97L861.99,206.34L862.24,204.71L862.49,203.08L862.74,201.46L862.99,199.83L863.25,198.20L863.51,196.57L863.78,194.94L864.04,193.32L864.31,191.69L864.59,190.06L864.86,188.43L865.14,186.80L865.42,185.18L865.70,183.55L865.99,181.92L866.28,180.29L866.57,178.66L866.87,177.04L867.16,175.41L867.46,173.78L867.77,172.15L868.07,170.52L868.38,168.90L868.69,167.27L869.00,165.64L869.32,164.01L869.64,162.38L869.96,160.76L870.28,159.13L870.61,157.50L870.93,155.87L871.26,154.24L871.60,152.62L871.93,150.99L872.27,149.36L872.61,147.73L872.95,146.10L873.29,144.48L873.64,142.85L873.99,141.22L874.34,139.59L874.69,137.96L875.04,136.34L875.40,134.71L875.76,133.08L876.12,131.45L876.48,129.82L876.85,128.20L877.21,126.57L877.58,124.94L877.95,123.31L878.32,121.68L878.70,120.06L879.07,118.43L879.45,116.80L879.83,115.17L880.21,113.54L880.59,111.92L880.97,110.29L881.36,108.66L881.75,107.03L882.13,105.40L882.53,103.78L882.92,102.15L883.31,100.52L883.70,98.89L884.10,97.26L884.50,95.64L884.90,94.01L885.30,92.38L885.70,90.75L886.10,89.12L886.50,87.50L886.91,85.87L887.31,84.24L887.72,82.61L888.13,80.98L888.54,79.36L888.95,77.73L889.36,76.10L889.77,74.47L890.18,72.84L890.60,71.22L891.01,69.59L891.43,67.96L891.85,66.33L892.26,64.70L892.68,63.08L893.10,61.45L893.52,59.82L893.94,58.19L894.36,56.56L894.78,54.94L895.20,53.31L895.63,51.68L896.05,50.05L896.47,48.42L896.89,46.80L897.32,45.17L897.74,43.54L898.17,41.91L898.59,40.28L899.02,38.66L899.44,37.03L899.87,35.40L900.30,33.77L900.72,32.14L901.15,30.52L901.57,28.89L902.00,27.26M902.00,613.34L901.15,611.71L900.30,610.08L899.44,608.46L898.59,606.83L897.74,605.20L896.89,603.57L896.04,601.94L895.19,600.32L894.34,598.69L893.49,597.06L892.64,595.43L891.79,593.80L890.94,592.18L890.10,590.55L889.25,588.92L888.41,587.29L887.56,585.66L886.72,584.04L885.88,582.41L885.04,580.78L884.20,579.15L883.36,577.52L882.53,575.90L881.69,574.27L880.86,572.64L880.03,571.01L879.20,569.38L878.37,567.76L877.54,566.13L876.72,564.50L875.90,562.87L875.08,561.24L874.26,559.62L873.44,557.99L872.63,556.36L871.82,554.73L871.01,553.10L870.20,551.48L869.39,549.85L868.59,548.22L867.79,546.59L866.99,544.96L866.20,543.34L865.41,541.71L864.62,540.08L863.83,538.45L863.05,536.82L862.27,535.20L861.49,533.57L860.72,531.94L859.95,530.31L859.18,528.68L858.42,527.06L857.65,525.43L856.90,523.80L856.14,522.17L855.39,520.54L854.64,518.92L853.90,517.29L853.16,515.66L852.42,514.03L851.69,512.40L850.96,510.78L850.24,509.15L849.52,507.52L848.80,505.89L848.09,504.26L847.38,502.64L846.67,501.01L845.97,499.38L845.28,497.75L844.59,496.12L843.90,494.50L843.21,492.87L842.54,491.24L841.86,489.61L841.19,487.98L840.53,486.36L839.87,484.73L839.21,483.10L838.56,481.47L837.92,479.84L837.28,478.22L836.64,476.59L836.01,474.96L835.38,473.33L834.76,471.70L834.15,470.08L833.54,468.45L832.93,466.82L832.33,465.19L831.73,463.56L831.15,461.94L830.56,460.31L829.98,458.68L829.41,457.05L828.84,455.42L828.28,453.80L827.72,452.17L827.17,450.54L826.63,448.91L826.09,447.28L825.55,445.66L825.03,444.03L824.51,442.40L823.99,440.77L823.48,439.14L822.98,437.52L822.48,435.89L821.99,434.26L821.50,432.63L821.02,431.00L820.55,429.38L820.08,427.75L819.62,426.12L819.16,424.49L818.71,422.86L818.27,421.24L817.84,419.61L817.41,417.98L816.98,416.35L816.57,414.72L816.16,413.10L815.75,411.47L815.36,409.84L814.97,408.21L814.58,406.58L814.21,404.96L813.84,403.33L813.47,401.70L813.11,400.07L812.76,398.44L812.42,396.82L812.09,395.19L811.76,393.56L811.43,391.93L811.12,390.30L810.81,388.68L810.51,387.05L810.21,385.42L809.92,383.79L809.64,382.16L809.37,380.54L809.10,378.91L808.84,377.28L808.59,375.65L808.34,374.02L808.10,372.40L807.87,370.77L807.65,369.14L807.43,367.51L807.22,365.88L807.02,364.26L806.82,362.63L806.64,361.00L806.45,359.37L806.28,357.74L806.11,356.12L805.96,354.49L805.80,352.86L805.66,351.23L805.52,349.60L805.39,347.98L805.27,346.35L805.16,344.72L805.05,343.09L804.95,341.46L804.86,339.84L804.77,338.21L804.69,336.58L804.62,334.95L804.56,333.32L804.50,331.70L804.45,330.07L804.41,328.44L804.38,326.81L804.35,325.18L804.33,323.56L804.32,321.93L804.32,320.30L804.32,318.67L804.33,317.04L804.35,315.42L804.38,313.79L804.41,312.16L804.45,310.53L804.50,308.90L804.56,307.28L804.62,305.65L804.69,304.02L804.77,302.39L804.86,300.76L804.95,299.14L805.05,297.51L805.16,295.88L805.27,294.25L805.39,292.62L805.52,291.00L805.66,289.37L805.80,287.74L805.96,286.11L806.11,284.48L806.28,282.86L806.45,281.23L806.64,279.60L806.82,277.97L807.02,276.34L807.22,274.72L807.43,273.09L807.65,271.46L807.87,269.83L808.10,268.20L808.34,266.58L808.59,264.95L808.84,263.32L809.10,261.69L809.37,260.06L809.64,258.44L809.92,256.81L810.21,255.18L810.51,253.55L810.81,251.92L811.12,250.30L811.43,248.67L811.76,247.04L812.09,245.41L812.42,243.78L812.76,242.16L813.11,240.53L813.47,238.90L813.84,237.27L814.21,235.64L814.58,234.02L814.97,232.39L815.36,230.76L815.75,229.13L816.16,227.50L816.57,225.88L816.98,224.25L817.41,222.62L817.84,220.99L818.27,219.36L818.71,217.74L819.16,216.11L819.62,214.48L820.08,212.85L820.55,211.22L821.02,209.60L821.50,207.97L821.99,206.34L822.48,204.71L822.98,203.08L823.48,201.46L823.99,199.83L824.51,198.20L825.03,196.57L825.55,194.94L826.09,193.32L826.63,191.69L827.17,190.06L827.72,188.43L828.28,186.80L828.84,185.18L829.41,183.55L829.98,181.92L830.56,180.29L831.15,178.66L831.73,177.04L832.33,175.41L832.93,173.78L833.54,172.15L834.15,170.52L834.76,168.90L835.38,167.27L836.01,165.64L836.64,164.01L837.28,162.38L837.92,160.76L838.56,159.13L839.21,157.50L839.87,155.87L840.53,154.24L841.19,152.62L841.86,150.99L842.54,149.36L843.21,147.73L843.90,146.10L844.59,144.48L845.28,142.85L845.97,141.22L846.67,139.59L847.38,137.96L848.09,136.34L848.80,134.71L849.52,133.08L850.24,131.45L850.96,129.82L851.69,128.20L852.42,126.57L853.16,124.94L853.90,123.31L854.64,121.68L855.39,120.06L856.14,118.43L856.90,116.80L857.65,115.17L858.42,113.54L859.18,111.92L859.95,110.29L860.72,108.66L861.49,107.03L862.27,105.40L863.05,103.78L863.83,102.15L864.62,100.52L865.41,98.89L866.20,97.26L866.99,95.64L867.79,94.01L868.59,92.38L869.39,90.75L870.20,89.12L871.01,87.50L871.82,85.87L872.63,84.24L873.44,82.61L874.26,80.98L875.08,79.36L875.90,77.73L876.72,76.10L877.54,74.47L878.37,72.84L879.20,71.22L880.03,69.59L880.86,67.96L881.69,66.33L882.53,64.70L883.36,63.08L884.20,61.45L885.04,59.82L885.88,58.19L886.72,56.56L887.56,54.94L888.41,53.31L889.25,51.68L890.10,50.05L890.94,48.42L891.79,46.80L892.64,45.17L893.49,43.54L894.34,41.91L895.19,40.28L896.04,38.66L896.89,37.03L897.74,35.40L898.59,33.77L899.44,32.14L900.30,30.52L901.15,28.89L902.00,27.26M902.00,613.34L900.72,611.71L899.44,610.08L898.16,608.46L896.89,606.83L895.61,605.20L894.33,603.57L893.06,601.94L891.78,600.32L890.50,598.69L889.23,597.06L887.96,595.43L886.68,593.80L885.41,592.18L884.14,590.55L882.88,588.92L881.61,587.29L880.34,585.66L879.08,584.04L877.82,582.41L876.56,580.78L875.30,579.15L874.04,577.52L872.79,575.90L871.54,574.27L870.29,572.64L869.04,571.01L867.80,569.38L866.55,567.76L865.31,566.13L864.08,564.50L862.84,562.87L861.61,561.24L860.39,559.62L859.16,557.99L857.94,556.36L856.72,554.73L855.51,553.10L854.30,551.48L853.09,549.85L851.89,548.22L850.69,546.59L849.49,544.96L848.30,543.34L847.11,541.71L845.93,540.08L844.75,538.45L843.58,536.82L842.40,535.20L841.24,533.57L840.08,531.94L838.92,530.31L837.77,528.68L836.62,527.06L835.48,525.43L834.34,523.80L833.21,522.17L832.09,520.54L830.97,518.92L829.85,517.29L828.74,515.66L827.64,514.03L826.54,512.40L825.44,510.78L824.36,509.15L823.27,507.52L822.20,505.89L821.13,504.26L820.07,502.64L819.01,501.01L817.96,499.38L816.92,497.75L815.88,496.12L814.85,494.50L813.82,492.87L812.80,491.24L811.79,489.61L810.79,487.98L809.79,486.36L808.80,484.73L807.82,483.10L806.84,481.47L805.87,479.84L804.91,478.22L803.96,476.59L803.01,474.96L802.07,473.33L801.14,471.70L800.22,470.08L799.30,468.45L798.39,466.82L797.49,465.19L796.60,463.56L795.72,461.94L794.84,460.31L793.97,458.68L793.11,457.05L792.26,455.42L791.42,453.80L790.59,452.17L789.76,450.54L788.94,448.91L788.13,447.28L787.33,445.66L786.54,444.03L785.76,442.40L784.98,440.77L784.22,439.14L783.46,437.52L782.72,435.89L781.98,434.26L781.25,432.63L780.53,431.00L779.82,429.38L779.12,427.75L778.43,426.12L777.74,424.49L777.07,422.86L776.41,421.24L775.75,419.61L775.11,417.98L774.48,416.35L773.85,414.72L773.24,413.10L772.63,411.47L772.04,409.84L771.45,408.21L770.87,406.58L770.31,404.96L769.75,403.33L769.21,401.70L768.67,400.07L768.15,398.44L767.63,396.82L767.13,395.19L766.63,393.56L766.15,391.93L765.68,390.30L765.21,388.68L764.76,387.05L764.32,385.42L763.88,383.79L763.46,382.16L763.05,380.54L762.65,378.91L762.26,377.28L761.88,375.65L761.51,374.02L761.16,372.40L760.81,370.77L760.47,369.14L760.15,367.51L759.83,365.88L759.53,364.26L759.24,362.63L758.95,361.00L758.68,359.37L758.42,357.74L758.17,356.12L757.93,354.49L757.71,352.86L757.49,351.23L757.28,349.60L757.09,347.98L756.91,346.35L756.73,344.72L756.57,343.09L756.42,341.46L756.28,339.84L756.15,338.21L756.04,336.58L755.93,334.95L755.84,333.32L755.75,331.70L755.68,330.07L755.62,328.44L755.57,326.81L755.53,325.18L755.50,323.56L755.49,321.93L755.48,320.30L755.49,318.67L755.50,317.04L755.53,315.42L755.57,313.79L755.62,312.16L755.68,310.53L755.75,308.90L755.84,307.28L755.93,305.65L756.04,304.02L756.15,302.39L756.28,300.76L756.42,299.14L756.57,297.51L756.73,295.88L756.91,294.25L757.09,292.62L757.28,291.00L757.49,289.37L757.71,287.74L757.93,286.11L758.17,284.48L758.42,282.86L758.68,281.23L758.95,279.60L759.24,277.97L759.53,276.34L759.83,274.72L760.15,273.09L760.47,271.46L760.81,269.83L761.16,268.20L761.51,266.58L761.88,264.95L762.26,263.32L762.65,261.69L763.05,260.06L763.46,258.44L763.88,256.81L764.32,255.18L764.76,253.55L765.21,251.92L765.68,250.30L766.15,248.67L766.63,247.04L767.13,245.41L767.63,243.78L768.15,242.16L768.67,240.53L769.21,238.90L769.75,237.27L770.31,235.64L770.87,234.02L771.45,232.39L772.04,230.76L772.63,229.13L773.24,227.50L773.85,225.88L774.48,224.25L775.11,222.62L775.75,220.99L776.41,219.36L777.07,217.74L777.74,216.11L778.43,214.48L779.12,212.85L779.82,211.22L780.53,209.60L781.25,207.97L781.98,206.34L782.72,204.71L783.46,203.08L784.22,201.46L784.98,199.83L785.76,198.20L786.54,196.57L787.33,194.94L788.13,193.32L788.94,191.69L789.76,190.06L790.59,188.43L791.42,186.80L792.26,185.18L793.11,183.55L793.97,181.92L794.84,180.29L795.72,178.66L796.60,177.04L797.49,175.41L798.39,173.78L799.30,172.15L800.22,170.52L801.14,168.90L802.07,167.27L803.01,165.64L803.96,164.01L804.91,162.38L805.87,160.76L806.84,159.13L807.82,157.50L808.80,155.87L809.79,154.24L810.79,152.62L811.79,150.99L812.80,149.36L813.82,147.73L814.85,146.10L815.88,144.48L816.92,142.85L817.96,141.22L819.01,139.59L820.07,137.96L821.13,136.34L822.20,134.71L823.27,133.08L824.36,131.45L825.44,129.82L826.54,128.20L827.64,126.57L828.74,124.94L829.85,123.31L830.97,121.68L832.09,120.06L833.21,118.43L834.34,116.80L835.48,115.17L836.62,113.54L837.77,111.92L838.92,110.29L840.08,108.66L841.24,107.03L842.40,105.40L843.58,103.78L844.75,102.15L845.93,100.52L847.11,98.89L848.30,97.26L849.49,95.64L850.69,94.01L851.89,92.38L853.09,90.75L854.30,89.12L855.51,87.50L856.72,85.87L857.94,84.24L859.16,82.61L860.39,80.98L861.61,79.36L862.84,77.73L864.08,76.10L865.31,74.47L866.55,72.84L867.80,71.22L869.04,69.59L870.29,67.96L871.54,66.33L872.79,64.70L874.04,63.08L875.30,61.45L876.56,59.82L877.82,58.19L879.08,56.56L880.34,54.94L881.61,53.31L882.88,51.68L884.14,50.05L885.41,48.42L886.68,46.80L887.96,45.17L889.23,43.54L890.50,41.91L891.78,40.28L893.06,38.66L894.33,37.03L895.61,35.40L896.89,33.77L898.16,32.14L899.44,30.52L900.72,28.89L902.00,27.26M902.00,613.34L900.30,611.71L898.59,610.08L896.89,608.46L895.18,606.83L893.48,605.20L891.78,603.57L890.07,601.94L888.37,600.32L886.67,598.69L884.97,597.06L883.28,595.43L881.58,593.80L879.88,592.18L878.19,590.55L876.50,588.92L874.81,587.29L873.12,585.66L871.44,584.04L869.76,582.41L868.08,580.78L866.40,579.15L864.72,577.52L863.05,575.90L861.38,574.27L859.72,572.64L858.05,571.01L856.39,569.38L854.74,567.76L853.09,566.13L851.44,564.50L849.79,562.87L848.15,561.24L846.51,559.62L844.88,557.99L843.25,556.36L841.63,554.73L840.01,553.10L838.40,551.48L836.79,549.85L835.18,548.22L833.58,546.59L831.99,544.96L830.40,543.34L828.82,541.71L827.24,540.08L825.67,538.45L824.10,536.82L822.54,535.20L820.99,533.57L819.44,531.94L817.90,530.31L816.36,528.68L814.83,527.06L813.31,525.43L811.79,523.80L810.28,522.17L808.78,520.54L807.29,518.92L805.80,517.29L804.32,515.66L802.85,514.03L801.38,512.40L799.92,510.78L798.47,509.15L797.03,507.52L795.60,505.89L794.17,504.26L792.76,502.64L791.35,501.01L789.95,499.38L788.55,497.75L787.17,496.12L785.80,494.50L784.43,492.87L783.07,491.24L781.72,489.61L780.39,487.98L779.06,486.36L777.74,484.73L776.43,483.10L775.12,481.47L773.83,479.84L772.55,478.22L771.28,476.59L770.02,474.96L768.76,473.33L767.52,471.70L766.29,470.08L765.07,468.45L763.86,466.82L762.66,465.19L761.47,463.56L760.29,461.94L759.12,460.31L757.97,458.68L756.82,457.05L755.68,455.42L754.56,453.80L753.45,452.17L752.35,450.54L751.26,448.91L750.18,447.28L749.11,445.66L748.05,444.03L747.01,442.40L745.98,440.77L744.96,439.14L743.95,437.52L742.95,435.89L741.97,434.26L741.00,432.63L740.04,431.00L739.09,429.38L738.16,427.75L737.24,426.12L736.33,424.49L735.43,422.86L734.54,421.24L733.67,419.61L732.81,417.98L731.97,416.35L731.13,414.72L730.31,413.10L729.51,411.47L728.71,409.84L727.93,408.21L727.17,406.58L726.41,404.96L725.67,403.33L724.94,401.70L724.23,400.07L723.53,398.44L722.84,396.82L722.17,395.19L721.51,393.56L720.87,391.93L720.23,390.30L719.62,388.68L719.01,387.05L718.42,385.42L717.85,383.79L717.28,382.16L716.74,380.54L716.20,378.91L715.68,377.28L715.18,375.65L714.68,374.02L714.21,372.40L713.75,370.77L713.30,369.14L712.86,367.51L712.44,365.88L712.04,364.26L711.65,362.63L711.27,361.00L710.91,359.37L710.56,357.74L710.23,356.12L709.91,354.49L709.61,352.86L709.32,351.23L709.05,349.60L708.79,347.98L708.54,346.35L708.31,344.72L708.10,343.09L707.90,341.46L707.71,339.84L707.54,338.21L707.38,336.58L707.24,334.95L707.12,333.32L707.00,331.70L706.91,330.07L706.83,328.44L706.76,326.81L706.71,325.18L706.67,323.56L706.65,321.93L706.64,320.30L706.65,318.67L706.67,317.04L706.71,315.42L706.76,313.79L706.83,312.16L706.91,310.53L707.00,308.90L707.12,307.28L707.24,305.65L707.38,304.02L707.54,302.39L707.71,300.76L707.90,299.14L708.10,297.51L708.31,295.88L708.54,294.25L708.79,292.62L709.05,291.00L709.32,289.37L709.61,287.74L709.91,286.11L710.23,284.48L710.56,282.86L710.91,281.23L711.27,279.60L711.65,277.97L712.04,276.34L712.44,274.72L712.86,273.09L713.30,271.46L713.75,269.83L714.21,268.20L714.68,266.58L715.18,264.95L715.68,263.32L716.20,261.69L716.74,260.06L717.28,258.44L717.85,256.81L718.42,255.18L719.01,253.55L719.62,251.92L720.23,250.30L720.87,248.67L721.51,247.04L722.17,245.41L722.84,243.78L723.53,242.16L724.23,240.53L724.94,238.90L725.67,237.27L726.41,235.64L727.17,234.02L727.93,232.39L728.71,230.76L729.51,229.13L730.31,227.50L731.13,225.88L731.97,224.25L732.81,222.62L733.67,220.99L734.54,219.36L735.43,217.74L736.33,216.11L737.24,214.48L738.16,212.85L739.09,211.22L740.04,209.60L741.00,207.97L741.97,206.34L742.95,204.71L743.95,203.08L744.96,201.46L745.98,199.83L747.01,198.20L748.05,196.57L749.11,194.94L750.18,193.32L751.26,191.69L752.35,190.06L753.45,188.43L754.56,186.80L755.68,185.18L756.82,183.55L757.97,181.92L759.12,180.29L760.29,178.66L761.47,177.04L762.66,175.41L763.86,173.78L765.07,172.15L766.29,170.52L767.52,168.90L768.76,167.27L770.02,165.64L771.28,164.01L772.55,162.38L773.83,160.76L775.12,159.13L776.43,157.50L777.74,155.87L779.06,154.24L780.39,152.62L781.72,150.99L783.07,149.36L784.43,147.73L785.80,146.10L787.17,144.48L788.55,142.85L789.95,141.22L791.35,139.59L792.76,137.96L794.17,136.34L795.60,134.71L797.03,133.08L798.47,131.45L799.92,129.82L801.38,128.20L802.85,126.57L804.32,124.94L805.80,123.31L807.29,121.68L808.78,120.06L810.28,118.43L811.79,116.80L813.31,115.17L814.83,113.54L816.36,111.92L817.90,110.29L819.44,108.66L820.99,107.03L822.54,105.40L824.10,103.78L825.67,102.15L827.24,100.52L828.82,98.89L830.40,97.26L831.99,95.64L833.58,94.01L835.18,92.38L836.79,90.75L838.40,89.12L840.01,87.50L841.63,85.87L843.25,84.24L844.88,82.61L846.51,80.98L848.15,79.36L849.79,77.73L851.44,76.10L853.09,74.47L854.74,72.84L856.39,71.22L858.05,69.59L859.72,67.96L861.38,66.33L863.05,64.70L864.72,63.08L866.40,61.45L868.08,59.82L869.76,58.19L871.44,56.56L873.12,54.94L874.81,53.31L876.50,51.68L878.19,50.05L879.88,48.42L881.58,46.80L883.28,45.17L884.97,43.54L886.67,41.91L888.37,40.28L890.07,38.66L891.78,37.03L893.48,35.40L895.18,33.77L896.89,32.14L898.59,30.52L900.30,28.89L902.00,27.26M902.00,613.34L899.87,611.71L897.74,610.08L895.61,608.46L893.48,606.83L891.35,605.20L889.22,603.57L887.09,601.94L884.97,600.32L882.84,598.69L880.72,597.06L878.59,595.43L876.47,593.80L874.36,592.18L872.24,590.55L870.13,588.92L868.01,587.29L865.90,585.66L863.80,584.04L861.70,582.41L859.60,580.78L857.50,579.15L855.40,577.52L853.31,575.90L851.23,574.27L849.15,572.64L847.07,571.01L844.99,569.38L842.92,567.76L840.86,566.13L838.80,564.50L836.74,562.87L834.69,561.24L832.64,559.62L830.60,557.99L828.57,556.36L826.54,554.73L824.51,553.10L822.50,551.48L820.48,549.85L818.48,548.22L816.48,546.59L814.49,544.96L812.50,543.34L810.52,541.71L808.55,540.08L806.58,538.45L804.63,536.82L802.67,535.20L800.73,533.57L798.80,531.94L796.87,530.31L794.95,528.68L793.04,527.06L791.14,525.43L789.24,523.80L787.36,522.17L785.48,520.54L783.61,518.92L781.75,517.29L779.90,515.66L778.06,514.03L776.23,512.40L774.41,510.78L772.59,509.15L770.79,507.52L769.00,505.89L767.22,504.26L765.45,502.64L763.68,501.01L761.93,499.38L760.19,497.75L758.46,496.12L756.74,494.50L755.04,492.87L753.34,491.24L751.66,489.61L749.98,487.98L748.32,486.36L746.67,484.73L745.03,483.10L743.40,481.47L741.79,479.84L740.19,478.22L738.60,476.59L737.02,474.96L735.46,473.33L733.90,471.70L732.36,470.08L730.84,468.45L729.32,466.82L727.82,465.19L726.34,463.56L724.86,461.94L723.40,460.31L721.96,458.68L720.52,457.05L719.11,455.42L717.70,453.80L716.31,452.17L714.93,450.54L713.57,448.91L712.22,447.28L710.89,445.66L709.57,444.03L708.26,442.40L706.97,440.77L705.70,439.14L704.44,437.52L703.19,435.89L701.96,434.26L700.75,432.63L699.55,431.00L698.37,429.38L697.20,427.75L696.04,426.12L694.91,424.49L693.79,422.86L692.68,421.24L691.59,419.61L690.52,417.98L689.46,416.35L688.42,414.72L687.39,413.10L686.38,411.47L685.39,409.84L684.42,408.21L683.46,406.58L682.51,404.96L681.59,403.33L680.68,401.70L679.79,400.07L678.91,398.44L678.05,396.82L677.21,395.19L676.39,393.56L675.58,391.93L674.79,390.30L674.02,388.68L673.26,387.05L672.53,385.42L671.81,383.79L671.10,382.16L670.42,380.54L669.75,378.91L669.10,377.28L668.47,375.65L667.86,374.02L667.26,372.40L666.68,370.77L666.12,369.14L665.58,367.51L665.05,365.88L664.55,364.26L664.06,362.63L663.59,361.00L663.14,359.37L662.70,357.74L662.29,356.12L661.89,354.49L661.51,352.86L661.15,351.23L660.81,349.60L660.48,347.98L660.18,346.35L659.89,344.72L659.62,343.09L659.37,341.46L659.14,339.84L658.92,338.21L658.73,336.58L658.55,334.95L658.39,333.32L658.26,331.70L658.13,330.07L658.03,328.44L657.95,326.81L657.88,325.18L657.84,323.56L657.81,321.93L657.80,320.30L657.81,318.67L657.84,317.04L657.88,315.42L657.95,313.79L658.03,312.16L658.13,310.53L658.26,308.90L658.39,307.28L658.55,305.65L658.73,304.02L658.92,302.39L659.14,300.76L659.37,299.14L659.62,297.51L659.89,295.88L660.18,294.25L660.48,292.62L660.81,291.00L661.15,289.37L661.51,287.74L661.89,286.11L662.29,284.48L662.70,282.86L663.14,281.23L663.59,279.60L664.06,277.97L664.55,276.34L665.05,274.72L665.58,273.09L666.12,271.46L666.68,269.83L667.26,268.20L667.86,266.58L668.47,264.95L669.10,263.32L669.75,261.69L670.42,260.06L671.10,258.44L671.81,256.81L672.53,255.18L673.26,253.55L674.02,251.92L674.79,250.30L675.58,248.67L676.39,247.04L677.21,245.41L678.05,243.78L678.91,242.16L679.79,240.53L680.68,238.90L681.59,237.27L682.51,235.64L683.46,234.02L684.42,232.39L685.39,230.76L686.38,229.13L687.39,227.50L688.42,225.88L689.46,224.25L690.52,222.62L691.59,220.99L692.68,219.36L693.79,217.74L694.91,216.11L696.04,214.48L697.20,212.85L698.37,211.22L699.55,209.60L700.75,207.97L701.96,206.34L703.19,204.71L704.44,203.08L705.70,201.46L706.97,199.83L708.26,198.20L709.57,196.57L710.89,194.94L712.22,193.32L713.57,191.69L714.93,190.06L716.31,188.43L717.70,186.80L719.11,185.18L720.52,183.55L721.96,181.92L723.40,180.29L724.86,178.66L726.34,177.04L727.82,175.41L729.32,173.78L730.84,172.15L732.36,170.52L733.90,168.90L735.46,167.27L737.02,165.64L738.60,164.01L740.19,162.38L741.79,160.76L743.40,159.13L745.03,157.50L746.67,155.87L748.32,154.24L749.98,152.62L751.66,150.99L753.34,149.36L755.04,147.73L756.74,146.10L758.46,144.48L760.19,142.85L761.93,141.22L763.68,139.59L765.45,137.96L767.22,136.34L769.00,134.71L770.79,133.08L772.59,131.45L774.41,129.82L776.23,128.20L778.06,126.57L779.90,124.94L781.75,123.31L783.61,121.68L785.48,120.06L787.36,118.43L789.24,116.80L791.14,115.17L793.04,113.54L794.95,111.92L796.87,110.29L798.80,108.66L800.73,107.03L802.67,105.40L804.63,103.78L806.58,102.15L808.55,100.52L810.52,98.89L812.50,97.26L814.49,95.64L816.48,94.01L818.48,92.38L820.48,90.75L822.50,89.12L824.51,87.50L826.54,85.87L828.57,84.24L830.60,82.61L832.64,80.98L834.69,79.36L836.74,77.73L838.80,76.10L840.86,74.47L842.92,72.84L844.99,71.22L847.07,69.59L849.15,67.96L851.23,66.33L853.31,64.70L855.40,63.08L857.50,61.45L859.60,59.82L861.70,58.19L863.80,56.56L865.90,54.94L868.01,53.31L870.13,51.68L872.24,50.05L874.36,48.42L876.47,46.80L878.59,45.17L880.72,43.54L882.84,41.91L884.97,40.28L887.09,38.66L889.22,37.03L891.35,35.40L893.48,33.77L895.61,32.14L897.74,30.52L899.87,28.89L902.00,27.26M902.00,613.34L899.44,611.71L896.89,610.08L894.33,608.46L891.77,606.83L889.22,605.20L886.66,603.57L884.11,601.94L881.56,600.32L879.01,598.69L876.46,597.06L873.91,595.43L871.37,593.80L868.83,592.18L866.29,590.55L863.75,588.92L861.22,587.29L858.69,585.66L856.16,584.04L853.63,582.41L851.11,580.78L848.60,579.15L846.09,577.52L843.58,575.90L841.07,574.27L838.57,572.64L836.08,571.01L833.59,569.38L831.11,567.76L828.63,566.13L826.16,564.50L823.69,562.87L821.23,561.24L818.77,559.62L816.32,557.99L813.88,556.36L811.45,554.73L809.02,553.10L806.60,551.48L804.18,549.85L801.77,548.22L799.38,546.59L796.98,544.96L794.60,543.34L792.23,541.71L789.86,540.08L787.50,538.45L785.15,536.82L782.81,535.20L780.48,533.57L778.16,531.94L775.84,530.31L773.54,528.68L771.25,527.06L768.96,525.43L766.69,523.80L764.43,522.17L762.17,520.54L759.93,518.92L757.70,517.29L755.48,515.66L753.27,514.03L751.07,512.40L748.89,510.78L746.71,509.15L744.55,507.52L742.40,505.89L740.26,504.26L738.13,502.64L736.02,501.01L733.92,499.38L731.83,497.75L729.76,496.12L727.69,494.50L725.64,492.87L723.61,491.24L721.59,489.61L719.58,487.98L717.58,486.36L715.60,484.73L713.64,483.10L711.69,481.47L709.75,479.84L707.83,478.22L705.92,476.59L704.03,474.96L702.15,473.33L700.28,471.70L698.44,470.08L696.61,468.45L694.79,466.82L692.99,465.19L691.20,463.56L689.44,461.94L687.68,460.31L685.95,458.68L684.23,457.05L682.53,455.42L680.84,453.80L679.17,452.17L677.52,450.54L675.88,448.91L674.27,447.28L672.66,445.66L671.08,444.03L669.52,442.40L667.97,440.77L666.44,439.14L664.93,437.52L663.43,435.89L661.96,434.26L660.50,432.63L659.06,431.00L657.64,429.38L656.24,427.75L654.85,426.12L653.49,424.49L652.14,422.86L650.82,421.24L649.51,419.61L648.22,417.98L646.95,416.35L645.70,414.72L644.47,413.10L643.26,411.47L642.07,409.84L640.90,408.21L639.75,406.58L638.62,404.96L637.51,403.33L636.42,401.70L635.34,400.07L634.29,398.44L633.26,396.82L632.26,395.19L631.27,393.56L630.30,391.93L629.35,390.30L628.42,388.68L627.52,387.05L626.63,385.42L625.77,383.79L624.93,382.16L624.10,380.54L623.30,378.91L622.52,377.28L621.76,375.65L621.03,374.02L620.31,372.40L619.62,370.77L618.95,369.14L618.29,367.51L617.66,365.88L617.06,364.26L616.47,362.63L615.91,361.00L615.36,359.37L614.84,357.74L614.34,356.12L613.87,354.49L613.41,352.86L612.98,351.23L612.57,349.60L612.18,347.98L611.81,346.35L611.47,344.72L611.14,343.09L610.84,341.46L610.57,339.84L610.31,338.21L610.08,336.58L609.86,334.95L609.67,333.32L609.51,331.70L609.36,330.07L609.24,328.44L609.14,326.81L609.06,325.18L609.00,323.56L608.97,321.93L608.96,320.30L608.97,318.67L609.00,317.04L609.06,315.42L609.14,313.79L609.24,312.16L609.36,310.53L609.51,308.90L609.67,307.28L609.86,305.65L610.08,304.02L610.31,302.39L610.57,300.76L610.84,299.14L611.14,297.51L611.47,295.88L611.81,294.25L612.18,292.62L612.57,291.00L612.98,289.37L613.41,287.74L613.87,286.11L614.34,284.48L614.84,282.86L615.36,281.23L615.91,279.60L616.47,277.97L617.06,276.34L617.66,274.72L618.29,273.09L618.95,271.46L619.62,269.83L620.31,268.20L621.03,266.58L621.76,264.95L622.52,263.32L623.30,261.69L624.10,260.06L624.93,258.44L625.77,256.81L626.63,255.18L627.52,253.55L628.42,251.92L629.35,250.30L630.30,248.67L631.27,247.04L632.26,245.41L633.26,243.78L634.29,242.16L635.34,240.53L636.42,238.90L637.51,237.27L638.62,235.64L639.75,234.02L640.90,232.39L642.07,230.76L643.26,229.13L644.47,227.50L645.70,225.88L646.95,224.25L648.22,222.62L649.51,220.99L650.82,219.36L652.14,217.74L653.49,216.11L654.85,214.48L656.24,212.85L657.64,211.22L659.06,209.60L660.50,207.97L661.96,206.34L663.43,204.71L664.93,203.08L666.44,201.46L667.97,199.83L669.52,198.20L671.08,196.57L672.66,194.94L674.27,193.32L675.88,191.69L677.52,190.06L679.17,188.43L680.84,186.80L682.53,185.18L684.23,183.55L685.95,181.92L687.68,180.29L689.44,178.66L691.20,177.04L692.99,175.41L694.79,173.78L696.61,172.15L698.44,170.52L700.28,168.90L702.15,167.27L704.03,165.64L705.92,164.01L707.83,162.38L709.75,160.76L711.69,159.13L713.64,157.50L715.60,155.87L717.58,154.24L719.58,152.62L721.59,150.99L723.61,149.36L725.64,147.73L727.69,146.10L729.76,144.48L731.83,142.85L733.92,141.22L736.02,139.59L738.13,137.96L740.26,136.34L742.40,134.71L744.55,133.08L746.71,131.45L748.89,129.82L751.07,128.20L753.27,126.57L755.48,124.94L757.70,123.31L759.93,121.68L762.17,120.06L764.43,118.43L766.69,116.80L768.96,115.17L771.25,113.54L773.54,111.92L775.84,110.29L778.16,108.66L780.48,107.03L782.81,105.40L785.15,103.78L787.50,102.15L789.86,100.52L792.23,98.89L794.60,97.26L796.98,95.64L799.38,94.01L801.77,92.38L804.18,90.75L806.60,89.12L809.02,87.50L811.45,85.87L813.88,84.24L816.32,82.61L818.77,80.98L821.23,79.36L823.69,77.73L826.16,76.10L828.63,74.47L831.11,72.84L833.59,71.22L836.08,69.59L838.57,67.96L841.07,66.33L843.58,64.70L846.09,63.08L848.60,61.45L851.11,59.82L853.63,58.19L856.16,56.56L858.69,54.94L861.22,53.31L863.75,51.68L866.29,50.05L868.83,48.42L871.37,46.80L873.91,45.17L876.46,43.54L879.01,41.91L881.56,40.28L884.11,38.66L886.66,37.03L889.22,35.40L891.77,33.77L894.33,32.14L896.89,30.52L899.44,28.89L902.00,27.26M902.00,613.34L899.02,611.71L896.03,610.08L893.05,608.46L890.07,606.83L887.09,605.20L884.11,603.57L881.13,601.94L878.15,600.32L875.18,598.69L872.20,597.06L869.23,595.43L866.26,593.80L863.30,592.18L860.34,590.55L857.38,588.92L854.42,587.29L851.47,585.66L848.52,584.04L845.57,582.41L842.63,580.78L839.70,579.15L836.77,577.52L833.84,575.90L830.92,574.27L828.00,572.64L825.09,571.01L822.19,569.38L819.29,567.76L816.40,566.13L813.51,564.50L810.64,562.87L807.77,561.24L804.90,559.62L802.04,557.99L799.19,556.36L796.35,554.73L793.52,553.10L790.69,551.48L787.88,549.85L785.07,548.22L782.27,546.59L779.48,544.96L776.70,543.34L773.93,541.71L771.17,540.08L768.42,538.45L765.68,536.82L762.94,535.20L760.22,533.57L757.52,531.94L754.82,530.31L752.13,528.68L749.45,527.06L746.79,525.43L744.14,523.80L741.50,522.17L738.87,520.54L736.25,518.92L733.65,517.29L731.06,515.66L728.48,514.03L725.92,512.40L723.37,510.78L720.83,509.15L718.31,507.52L715.80,505.89L713.30,504.26L710.82,502.64L708.36,501.01L705.91,499.38L703.47,497.75L701.05,496.12L698.64,494.50L696.25,492.87L693.88,491.24L691.52,489.61L689.17,487.98L686.85,486.36L684.54,484.73L682.24,483.10L679.97,481.47L677.71,479.84L675.46,478.22L673.24,476.59L671.03,474.96L668.84,473.33L666.67,471.70L664.51,470.08L662.37,468.45L660.25,466.82L658.15,465.19L656.07,463.56L654.01,461.94L651.96,460.31L649.94,458.68L647.93,457.05L645.95,455.42L643.98,453.80L642.03,452.17L640.10,450.54L638.20,448.91L636.31,447.28L634.44,445.66L632.59,444.03L630.77,442.40L628.96,440.77L627.18,439.14L625.41,437.52L623.67,435.89L621.95,434.26L620.25,432.63L618.57,431.00L616.91,429.38L615.28,427.75L613.66,426.12L612.07,424.49L610.50,422.86L608.95,421.24L607.43,419.61L605.92,417.98L604.44,416.35L602.99,414.72L601.55,413.10L600.14,411.47L598.75,409.84L597.38,408.21L596.04,406.58L594.72,404.96L593.42,403.33L592.15,401.70L590.90,400.07L589.68,398.44L588.48,396.82L587.30,395.19L586.14,393.56L585.01,391.93L583.91,390.30L582.83,388.68L581.77,387.05L580.74,385.42L579.73,383.79L578.75,382.16L577.79,380.54L576.85,378.91L575.94,377.28L575.06,375.65L574.20,374.02L573.36,372.40L572.55,370.77L571.77,369.14L571.01,367.51L570.28,365.88L569.57,364.26L568.88,362.63L568.22,361.00L567.59,359.37L566.98,357.74L566.40,356.12L565.84,354.49L565.31,352.86L564.81,351.23L564.33,349.60L563.88,347.98L563.45,346.35L563.04,344.72L562.67,343.09L562.32,341.46L561.99,339.84L561.69,338.21L561.42,336.58L561.17,334.95L560.95,333.32L560.76,331.70L560.59,330.07L560.45,328.44L560.33,326.81L560.24,325.18L560.17,323.56L560.13,321.93L560.12,320.30L560.13,318.67L560.17,317.04L560.24,315.42L560.33,313.79L560.45,312.16L560.59,310.53L560.76,308.90L560.95,307.28L561.17,305.65L561.42,304.02L561.69,302.39L561.99,300.76L562.32,299.14L562.67,297.51L563.04,295.88L563.45,294.25L563.88,292.62L564.33,291.00L564.81,289.37L565.31,287.74L565.84,286.11L566.40,284.48L566.98,282.86L567.59,281.23L568.22,279.60L568.88,277.97L569.57,276.34L570.28,274.72L571.01,273.09L571.77,271.46L572.55,269.83L573.36,268.20L574.20,266.58L575.06,264.95L575.94,263.32L576.85,261.69L577.79,260.06L578.75,258.44L579.73,256.81L580.74,255.18L581.77,253.55L582.83,251.92L583.91,250.30L585.01,248.67L586.14,247.04L587.30,245.41L588.48,243.78L589.68,242.16L590.90,240.53L592.15,238.90L593.42,237.27L594.72,235.64L596.04,234.02L597.38,232.39L598.75,230.76L600.14,229.13L601.55,227.50L602.99,225.88L604.44,224.25L605.92,222.62L607.43,220.99L608.95,219.36L610.50,217.74L612.07,216.11L613.66,214.48L615.28,212.85L616.91,211.22L618.57,209.60L620.25,207.97L621.95,206.34L623.67,204.71L625.41,203.08L627.18,201.46L628.96,199.83L630.77,198.20L632.59,196.57L634.44,194.94L636.31,193.32L638.20,191.69L640.10,190.06L642.03,188.43L643.98,186.80L645.95,185.18L647.93,183.55L649.94,181.92L651.96,180.29L654.01,178.66L656.07,177.04L658.15,175.41L660.25,173.78L662.37,172.15L664.51,170.52L666.67,168.90L668.84,167.27L671.03,165.64L673.24,164.01L675.46,162.38L677.71,160.76L679.97,159.13L682.24,157.50L684.54,155.87L686.85,154.24L689.17,152.62L691.52,150.99L693.88,149.36L696.25,147.73L698.64,146.10L701.05,144.48L703.47,142.85L705.91,141.22L708.36,139.59L710.82,137.96L713.30,136.34L715.80,134.71L718.31,133.08L720.83,131.45L723.37,129.82L725.92,128.20L728.48,126.57L731.06,124.94L733.65,123.31L736.25,121.68L738.87,120.06L741.50,118.43L744.14,116.80L746.79,115.17L749.45,113.54L752.13,111.92L754.82,110.29L757.52,108.66L760.22,107.03L762.94,105.40L765.68,103.78L768.42,102.15L771.17,100.52L773.93,98.89L776.70,97.26L779.48,95.64L782.27,94.01L785.07,92.38L787.88,90.75L790.69,89.12L793.52,87.50L796.35,85.87L799.19,84.24L802.04,82.61L804.90,80.98L807.77,79.36L810.64,77.73L813.51,76.10L816.40,74.47L819.29,72.84L822.19,71.22L825.09,69.59L828.00,67.96L830.92,66.33L833.84,64.70L836.77,63.08L839.70,61.45L842.63,59.82L845.57,58.19L848.52,56.56L851.47,54.94L854.42,53.31L857.38,51.68L860.34,50.05L863.30,48.42L866.26,46.80L869.23,45.17L872.20,43.54L875.18,41.91L878.15,40.28L881.13,38.66L884.11,37.03L887.09,35.40L890.07,33.77L893.05,32.14L896.03,30.52L899.02,28.89L902.00,27.26M902.00,613.34L898.59,611.71L895.18,610.08L891.77,608.46L888.36,606.83L884.96,605.20L881.55,603.57L878.15,601.94L874.74,600.32L871.34,598.69L867.95,597.06L864.55,595.43L861.16,593.80L857.77,592.18L854.38,590.55L851.00,588.92L847.62,587.29L844.25,585.66L840.88,584.04L837.51,582.41L834.15,580.78L830.80,579.15L827.45,577.52L824.10,575.90L820.76,574.27L817.43,572.64L814.11,571.01L810.79,569.38L807.48,567.76L804.17,566.13L800.87,564.50L797.58,562.87L794.30,561.24L791.03,559.62L787.76,557.99L784.51,556.36L781.26,554.73L778.02,553.10L774.79,551.48L771.57,549.85L768.37,548.22L765.17,546.59L761.98,544.96L758.80,543.34L755.63,541.71L752.48,540.08L749.33,538.45L746.20,536.82L743.08,535.20L739.97,533.57L736.87,531.94L733.79,530.31L730.72,528.68L727.66,527.06L724.62,525.43L721.59,523.80L718.57,522.17L715.56,520.54L712.58,518.92L709.60,517.29L706.64,515.66L703.69,514.03L700.76,512.40L697.85,510.78L694.95,509.15L692.07,507.52L689.20,505.89L686.35,504.26L683.51,502.64L680.69,501.01L677.89,499.38L675.11,497.75L672.34,496.12L669.59,494.50L666.86,492.87L664.14,491.24L661.45,489.61L658.77,487.98L656.11,486.36L653.47,484.73L650.85,483.10L648.25,481.47L645.66,479.84L643.10,478.22L640.56,476.59L638.03,474.96L635.53,473.33L633.05,471.70L630.58,470.08L628.14,468.45L625.72,466.82L623.32,465.19L620.94,463.56L618.58,461.94L616.25,460.31L613.93,458.68L611.64,457.05L609.37,455.42L607.12,453.80L604.89,452.17L602.69,450.54L600.51,448.91L598.35,447.28L596.22,445.66L594.11,444.03L592.02,442.40L589.96,440.77L587.92,439.14L585.90,437.52L583.91,435.89L581.94,434.26L580.00,432.63L578.08,431.00L576.18,429.38L574.31,427.75L572.47,426.12L570.65,424.49L568.86,422.86L567.09,421.24L565.34,419.61L563.63,417.98L561.93,416.35L560.27,414.72L558.63,413.10L557.01,411.47L555.43,409.84L553.87,408.21L552.33,406.58L550.82,404.96L549.34,403.33L547.89,401.70L546.46,400.07L545.06,398.44L543.69,396.82L542.34,395.19L541.02,393.56L539.73,391.93L538.47,390.30L537.23,388.68L536.02,387.05L534.84,385.42L533.69,383.79L532.57,382.16L531.47,380.54L530.40,378.91L529.36,377.28L528.35,375.65L527.37,374.02L526.42,372.40L525.49,370.77L524.59,369.14L523.73,367.51L522.89,365.88L522.08,364.26L521.29,362.63L520.54,361.00L519.82,359.37L519.12,357.74L518.46,356.12L517.82,354.49L517.22,352.86L516.64,351.23L516.09,349.60L515.57,347.98L515.08,346.35L514.62,344.72L514.19,343.09L513.79,341.46L513.42,339.84L513.08,338.21L512.77,336.58L512.48,334.95L512.23,333.32L512.01,331.70L511.82,330.07L511.65,328.44L511.52,326.81L511.41,325.18L511.34,323.56L511.29,321.93L511.28,320.30L511.29,318.67L511.34,317.04L511.41,315.42L511.52,313.79L511.65,312.16L511.82,310.53L512.01,308.90L512.23,307.28L512.48,305.65L512.77,304.02L513.08,302.39L513.42,300.76L513.79,299.14L514.19,297.51L514.62,295.88L515.08,294.25L515.57,292.62L516.09,291.00L516.64,289.37L517.22,287.74L517.82,286.11L518.46,284.48L519.12,282.86L519.82,281.23L520.54,279.60L521.29,277.97L522.08,276.34L522.89,274.72L523.73,273.09L524.59,271.46L525.49,269.83L526.42,268.20L527.37,266.58L528.35,264.95L529.36,263.32L530.40,261.69L531.47,260.06L532.57,258.44L533.69,256.81L534.84,255.18L536.02,253.55L537.23,251.92L538.47,250.30L539.73,248.67L541.02,247.04L542.34,245.41L543.69,243.78L545.06,242.16L546.46,240.53L547.89,238.90L549.34,237.27L550.82,235.64L552.33,234.02L553.87,232.39L555.43,230.76L557.01,229.13L558.63,227.50L560.27,225.88L561.93,224.25L563.63,222.62L565.34,220.99L567.09,219.36L568.86,217.74L570.65,216.11L572.47,214.48L574.31,212.85L576.18,211.22L578.08,209.60L580.00,207.97L581.94,206.34L583.91,204.71L585.90,203.08L587.92,201.46L589.96,199.83L592.02,198.20L594.11,196.57L596.22,194.94L598.35,193.32L600.51,191.69L602.69,190.06L604.89,188.43L607.12,186.80L609.37,185.18L611.64,183.55L613.93,181.92L616.25,180.29L618.58,178.66L620.94,177.04L623.32,175.41L625.72,173.78L628.14,172.15L630.58,170.52L633.05,168.90L635.53,167.27L638.03,165.64L640.56,164.01L643.10,162.38L645.66,160.76L648.25,159.13L650.85,157.50L653.47,155.87L656.11,154.24L658.77,152.62L661.45,150.99L664.14,149.36L666.86,147.73L669.59,146.10L672.34,144.48L675.11,142.85L677.89,141.22L680.69,139.59L683.51,137.96L686.35,136.34L689.20,134.71L692.07,133.08L694.95,131.45L697.85,129.82L700.76,128.20L703.69,126.57L706.64,124.94L709.60,123.31L712.58,121.68L715.56,120.06L718.57,118.43L721.59,116.80L724.62,115.17L727.66,113.54L730.72,111.92L733.79,110.29L736.87,108.66L739.97,107.03L743.08,105.40L746.20,103.78L749.33,102.15L752.48,100.52L755.63,98.89L758.80,97.26L761.98,95.64L765.17,94.01L768.37,92.38L771.57,90.75L774.79,89.12L778.02,87.50L781.26,85.87L784.51,84.24L787.76,82.61L791.03,80.98L794.30,79.36L797.58,77.73L800.87,76.10L804.17,74.47L807.48,72.84L810.79,71.22L814.11,69.59L817.43,67.96L820.76,66.33L824.10,64.70L827.45,63.08L830.80,61.45L834.15,59.82L837.51,58.19L840.88,56.56L844.25,54.94L847.62,53.31L851.00,51.68L854.38,50.05L857.77,48.42L861.16,46.80L864.55,45.17L867.95,43.54L871.34,41.91L874.74,40.28L878.15,38.66L881.55,37.03L884.96,35.40L888.36,33.77L891.77,32.14L895.18,30.52L898.59,28.89L902.00,27.26M902.00,613.34L898.16,611.71L894.33,610.08L890.49,608.46L886.66,606.83L882.83,605.20L879.00,603.57L875.17,601.94L871.34,600.32L867.51,598.69L863.69,597.06L859.87,595.43L856.05,593.80L852.24,592.18L848.43,590.55L844.63,588.92L840.83,587.29L837.03,585.66L833.24,584.04L829.45,582.41L825.67,580.78L821.90,579.15L818.13,577.52L814.37,575.90L810.61,574.27L806.86,572.64L803.12,571.01L799.39,569.38L795.66,567.76L791.94,566.13L788.23,564.50L784.53,562.87L780.84,561.24L777.16,559.62L773.49,557.99L769.82,556.36L766.17,554.73L762.53,553.10L758.89,551.48L755.27,549.85L751.66,548.22L748.06,546.59L744.48,544.96L740.90,543.34L737.34,541.71L733.79,540.08L730.25,538.45L726.73,536.82L723.21,535.20L719.72,533.57L716.23,531.94L712.76,530.31L709.31,528.68L705.87,527.06L702.44,525.43L699.03,523.80L695.64,522.17L692.26,520.54L688.90,518.92L685.55,517.29L682.22,515.66L678.91,514.03L675.61,512.40L672.33,510.78L669.07,509.15L665.82,507.52L662.60,505.89L659.39,504.26L656.20,502.64L653.03,501.01L649.88,499.38L646.75,497.75L643.63,496.12L640.54,494.50L637.47,492.87L634.41,491.24L631.38,489.61L628.37,487.98L625.38,486.36L622.41,484.73L619.46,483.10L616.53,481.47L613.62,479.84L610.74,478.22L607.88,476.59L605.04,474.96L602.22,473.33L599.43,471.70L596.66,470.08L593.91,468.45L591.18,466.82L588.48,465.19L585.81,463.56L583.15,461.94L580.53,460.31L577.92,458.68L575.34,457.05L572.79,455.42L570.26,453.80L567.76,452.17L565.28,450.54L562.82,448.91L560.40,447.28L558.00,445.66L555.62,444.03L553.27,442.40L550.95,440.77L548.66,439.14L546.39,437.52L544.15,435.89L541.93,434.26L539.75,432.63L537.59,431.00L535.46,429.38L533.35,427.75L531.28,426.12L529.23,424.49L527.21,422.86L525.22,421.24L523.26,419.61L521.33,417.98L519.43,416.35L517.55,414.72L515.71,413.10L513.89,411.47L512.11,409.84L510.35,408.21L508.62,406.58L506.93,404.96L505.26,403.33L503.62,401.70L502.02,400.07L500.44,398.44L498.90,396.82L497.38,395.19L495.90,393.56L494.45,391.93L493.03,390.30L491.64,388.68L490.28,387.05L488.95,385.42L487.65,383.79L486.39,382.16L485.15,380.54L483.95,378.91L482.78,377.28L481.65,375.65L480.54,374.02L479.47,372.40L478.43,370.77L477.42,369.14L476.44,367.51L475.50,365.88L474.59,364.26L473.71,362.63L472.86,361.00L472.05,359.37L471.26,357.74L470.52,356.12L469.80,354.49L469.12,352.86L468.47,351.23L467.85,349.60L467.27,347.98L466.72,346.35L466.20,344.72L465.72,343.09L465.27,341.46L464.85,339.84L464.46,338.21L464.11,336.58L463.80,334.95L463.51,333.32L463.26,331.70L463.04,330.07L462.86,328.44L462.71,326.81L462.59,325.18L462.51,323.56L462.46,321.93L462.44,320.30L462.46,318.67L462.51,317.04L462.59,315.42L462.71,313.79L462.86,312.16L463.04,310.53L463.26,308.90L463.51,307.28L463.80,305.65L464.11,304.02L464.46,302.39L464.85,300.76L465.27,299.14L465.72,297.51L466.20,295.88L466.72,294.25L467.27,292.62L467.85,291.00L468.47,289.37L469.12,287.74L469.80,286.11L470.52,284.48L471.26,282.86L472.05,281.23L472.86,279.60L473.71,277.97L474.59,276.34L475.50,274.72L476.44,273.09L477.42,271.46L478.43,269.83L479.47,268.20L480.54,266.58L481.65,264.95L482.78,263.32L483.95,261.69L485.15,260.06L486.39,258.44L487.65,256.81L488.95,255.18L490.28,253.55L491.64,251.92L493.03,250.30L494.45,248.67L495.90,247.04L497.38,245.41L498.90,243.78L500.44,242.16L502.02,240.53L503.62,238.90L505.26,237.27L506.93,235.64L508.62,234.02L510.35,232.39L512.11,230.76L513.89,229.13L515.71,227.50L517.55,225.88L519.43,224.25L521.33,222.62L523.26,220.99L525.22,219.36L527.21,217.74L529.23,216.11L531.28,214.48L533.35,212.85L535.46,211.22L537.59,209.60L539.75,207.97L541.93,206.34L544.15,204.71L546.39,203.08L548.66,201.46L550.95,199.83L553.27,198.20L555.62,196.57L558.00,194.94L560.40,193.32L562.82,191.69L565.28,190.06L567.76,188.43L570.26,186.80L572.79,185.18L575.34,183.55L577.92,181.92L580.53,180.29L583.15,178.66L585.81,177.04L588.48,175.41L591.18,173.78L593.91,172.15L596.66,170.52L599.43,168.90L602.22,167.27L605.04,165.64L607.88,164.01L610.74,162.38L613.62,160.76L616.53,159.13L619.46,157.50L622.41,155.87L625.38,154.24L628.37,152.62L631.38,150.99L634.41,149.36L637.47,147.73L640.54,146.10L643.63,144.48L646.75,142.85L649.88,141.22L653.03,139.59L656.20,137.96L659.39,136.34L662.60,134.71L665.82,133.08L669.07,131.45L672.33,129.82L675.61,128.20L678.91,126.57L682.22,124.94L685.55,123.31L688.90,121.68L692.26,120.06L695.64,118.43L699.03,116.80L702.44,115.17L705.87,113.54L709.31,111.92L712.76,110.29L716.23,108.66L719.72,107.03L723.21,105.40L726.73,103.78L730.25,102.15L733.79,100.52L737.34,98.89L740.90,97.26L744.48,95.64L748.06,94.01L751.66,92.38L755.27,90.75L758.89,89.12L762.53,87.50L766.17,85.87L769.82,84.24L773.49,82.61L777.16,80.98L780.84,79.36L784.53,77.73L788.23,76.10L791.94,74.47L795.66,72.84L799.39,71.22L803.12,69.59L806.86,67.96L810.61,66.33L814.37,64.70L818.13,63.08L821.90,61.45L825.67,59.82L829.45,58.19L833.24,56.56L837.03,54.94L840.83,53.31L844.63,51.68L848.43,50.05L852.24,48.42L856.05,46.80L859.87,45.17L863.69,43.54L867.51,41.91L871.34,40.28L875.17,38.66L879.00,37.03L882.83,35.40L886.66,33.77L890.49,32.14L894.33,30.52L898.16,28.89L902.00,27.26M902.00,613.34L897.74,611.71L893.48,610.08L889.22,608.46L884.96,606.83L880.70,605.20L876.44,603.57L872.18,601.94L867.93,600.32L863.68,598.69L859.43,597.06L855.19,595.43L850.95,593.80L846.71,592.18L842.48,590.55L838.25,588.92L834.03,587.29L829.81,585.66L825.60,584.04L821.39,582.41L817.19,580.78L813.00,579.15L808.81,577.52L804.63,575.90L800.46,574.27L796.29,572.64L792.13,571.01L787.99,569.38L783.85,567.76L779.71,566.13L775.59,564.50L771.48,562.87L767.38,561.24L763.29,559.62L759.21,557.99L755.14,556.36L751.08,554.73L747.03,553.10L742.99,551.48L738.97,549.85L734.96,548.22L730.96,546.59L726.97,544.96L723.00,543.34L719.04,541.71L715.10,540.08L711.17,538.45L707.25,536.82L703.35,535.20L699.46,533.57L695.59,531.94L691.74,530.31L687.90,528.68L684.08,527.06L680.27,525.43L676.48,523.80L672.71,522.17L668.96,520.54L665.22,518.92L661.50,517.29L657.80,515.66L654.12,514.03L650.46,512.40L646.81,510.78L643.19,509.15L639.58,507.52L636.00,505.89L632.43,504.26L628.89,502.64L625.37,501.01L621.87,499.38L618.38,497.75L614.93,496.12L611.49,494.50L608.07,492.87L604.68,491.24L601.31,489.61L597.96,487.98L594.64,486.36L591.34,484.73L588.06,483.10L584.81,481.47L581.58,479.84L578.38,478.22L575.20,476.59L572.04,474.96L568.91,473.33L565.81,471.70L562.73,470.08L559.68,468.45L556.65,466.82L553.65,465.19L550.67,463.56L547.73,461.94L544.81,460.31L541.91,458.68L539.05,457.05L536.21,455.42L533.40,453.80L530.62,452.17L527.86,450.54L525.14,448.91L522.44,447.28L519.77,445.66L517.14,444.03L514.53,442.40L511.95,440.77L509.40,439.14L506.88,437.52L504.39,435.89L501.93,434.26L499.50,432.63L497.10,431.00L494.73,429.38L492.39,427.75L490.09,426.12L487.81,424.49L485.57,422.86L483.36,421.24L481.18,419.61L479.03,417.98L476.92,416.35L474.84,414.72L472.79,413.10L470.77,411.47L468.78,409.84L466.83,408.21L464.91,406.58L463.03,404.96L461.18,403.33L459.36,401.70L457.57,400.07L455.82,398.44L454.11,396.82L452.43,395.19L450.78,393.56L449.16,391.93L447.58,390.30L446.04,388.68L444.53,387.05L443.05,385.42L441.61,383.79L440.21,382.16L438.84,380.54L437.50,378.91L436.20,377.28L434.94,375.65L433.71,374.02L432.52,372.40L431.36,370.77L430.24,369.14L429.16,367.51L428.11,365.88L427.09,364.26L426.12,362.63L425.18,361.00L424.27,359.37L423.40,357.74L422.57,356.12L421.78,354.49L421.02,352.86L420.30,351.23L419.61,349.60L418.96,347.98L418.35,346.35L417.78,344.72L417.24,343.09L416.74,341.46L416.28,339.84L415.85,338.21L415.46,336.58L415.11,334.95L414.79,333.32L414.51,331.70L414.27,330.07L414.06,328.44L413.90,326.81L413.77,325.18L413.67,323.56L413.62,321.93L413.60,320.30L413.62,318.67L413.67,317.04L413.77,315.42L413.90,313.79L414.06,312.16L414.27,310.53L414.51,308.90L414.79,307.28L415.11,305.65L415.46,304.02L415.85,302.39L416.28,300.76L416.74,299.14L417.24,297.51L417.78,295.88L418.35,294.25L418.96,292.62L419.61,291.00L420.30,289.37L421.02,287.74L421.78,286.11L422.57,284.48L423.40,282.86L424.27,281.23L425.18,279.60L426.12,277.97L427.09,276.34L428.11,274.72L429.16,273.09L430.24,271.46L431.36,269.83L432.52,268.20L433.71,266.58L434.94,264.95L436.20,263.32L437.50,261.69L438.84,260.06L440.21,258.44L441.61,256.81L443.05,255.18L444.53,253.55L446.04,251.92L447.58,250.30L449.16,248.67L450.78,247.04L452.43,245.41L454.11,243.78L455.82,242.16L457.57,240.53L459.36,238.90L461.18,237.27L463.03,235.64L464.91,234.02L466.83,232.39L468.78,230.76L470.77,229.13L472.79,227.50L474.84,225.88L476.92,224.25L479.03,222.62L481.18,220.99L483.36,219.36L485.57,217.74L487.81,216.11L490.09,214.48L492.39,212.85L494.73,211.22L497.10,209.60L499.50,207.97L501.93,206.34L504.39,204.71L506.88,203.08L509.40,201.46L511.95,199.83L514.53,198.20L517.14,196.57L519.77,194.94L522.44,193.32L525.14,191.69L527.86,190.06L530.62,188.43L533.40,186.80L536.21,185.18L539.05,183.55L541.91,181.92L544.81,180.29L547.73,178.66L550.67,177.04L553.65,175.41L556.65,173.78L559.68,172.15L562.73,170.52L565.81,168.90L568.91,167.27L572.04,165.64L575.20,164.01L578.38,162.38L581.58,160.76L584.81,159.13L588.06,157.50L591.34,155.87L594.64,154.24L597.96,152.62L601.31,150.99L604.68,149.36L608.07,147.73L611.49,146.10L614.93,144.48L618.38,142.85L621.87,141.22L625.37,139.59L628.89,137.96L632.43,136.34L636.00,134.71L639.58,133.08L643.19,131.45L646.81,129.82L650.46,128.20L654.12,126.57L657.80,124.94L661.50,123.31L665.22,121.68L668.96,120.06L672.71,118.43L676.48,116.80L680.27,115.17L684.08,113.54L687.90,111.92L691.74,110.29L695.59,108.66L699.46,107.03L703.35,105.40L707.25,103.78L711.17,102.15L715.10,100.52L719.04,98.89L723.00,97.26L726.97,95.64L730.96,94.01L734.96,92.38L738.97,90.75L742.99,89.12L747.03,87.50L751.08,85.87L755.14,84.24L759.21,82.61L763.29,80.98L767.38,79.36L771.48,77.73L775.59,76.10L779.71,74.47L783.85,72.84L787.99,71.22L792.13,69.59L796.29,67.96L800.46,66.33L804.63,64.70L808.81,63.08L813.00,61.45L817.19,59.82L821.39,58.19L825.60,56.56L829.81,54.94L834.03,53.31L838.25,51.68L842.48,50.05L846.71,48.42L850.95,46.80L855.19,45.17L859.43,43.54L863.68,41.91L867.93,40.28L872.18,38.66L876.44,37.03L880.70,35.40L884.96,33.77L889.22,32.14L893.48,30.52L897.74,28.89L902.00,27.26M902.00,613.34L897.31,611.71L892.62,610.08L887.94,608.46L883.25,606.83L878.57,605.20L873.88,603.57L869.20,601.94L864.52,600.32L859.85,598.69L855.18,597.06L850.51,595.43L845.84,593.80L841.18,592.18L836.53,590.55L831.88,588.92L827.23,587.29L822.59,585.66L817.96,584.04L813.33,582.41L808.71,580.78L804.10,579.15L799.49,577.52L794.89,575.90L790.30,574.27L785.72,572.64L781.15,571.01L776.58,569.38L772.03,567.76L767.49,566.13L762.95,564.50L758.43,562.87L753.92,561.24L749.42,559.62L744.93,557.99L740.45,556.36L735.98,554.73L731.53,553.10L727.09,551.48L722.67,549.85L718.25,548.22L713.85,546.59L709.47,544.96L705.10,543.34L700.75,541.71L696.41,540.08L692.08,538.45L687.78,536.82L683.48,535.20L679.21,533.57L674.95,531.94L670.71,530.31L666.49,528.68L662.28,527.06L658.10,525.43L653.93,523.80L649.78,522.17L645.65,520.54L641.54,518.92L637.45,517.29L633.38,515.66L629.33,514.03L625.30,512.40L621.29,510.78L617.31,509.15L613.34,507.52L609.40,505.89L605.48,504.26L601.58,502.64L597.70,501.01L593.85,499.38L590.02,497.75L586.22,496.12L582.44,494.50L578.68,492.87L574.95,491.24L571.24,489.61L567.56,487.98L563.90,486.36L560.27,484.73L556.67,483.10L553.09,481.47L549.54,479.84L546.01,478.22L542.52,476.59L539.05,474.96L535.60,473.33L532.19,471.70L528.80,470.08L525.44,468.45L522.11,466.82L518.81,465.19L515.54,463.56L512.30,461.94L509.09,460.31L505.91,458.68L502.75,457.05L499.63,455.42L496.54,453.80L493.48,452.17L490.45,450.54L487.45,448.91L484.49,447.28L481.55,445.66L478.65,444.03L475.78,442.40L472.94,440.77L470.14,439.14L467.36,437.52L464.62,435.89L461.92,434.26L459.25,432.63L456.61,431.00L454.00,429.38L451.43,427.75L448.90,426.12L446.39,424.49L443.93,422.86L441.50,421.24L439.10,419.61L436.74,417.98L434.41,416.35L432.12,414.72L429.86,413.10L427.65,411.47L425.46,409.84L423.32,408.21L421.21,406.58L419.13,404.96L417.10,403.33L415.10,401.70L413.13,400.07L411.21,398.44L409.32,396.82L407.47,395.19L405.65,393.56L403.88,391.93L402.14,390.30L400.44,388.68L398.78,387.05L397.16,385.42L395.58,383.79L394.03,382.16L392.52,380.54L391.05,378.91L389.63,377.28L388.23,375.65L386.88,374.02L385.57,372.40L384.30,370.77L383.07,369.14L381.87,367.51L380.72,365.88L379.60,364.26L378.53,362.63L377.49,361.00L376.50,359.37L375.55,357.74L374.63,356.12L373.76,354.49L372.92,352.86L372.13,351.23L371.37,349.60L370.66,347.98L369.99,346.35L369.36,344.72L368.76,343.09L368.21,341.46L367.70,339.84L367.23,338.21L366.80,336.58L366.42,334.95L366.07,333.32L365.76,331.70L365.50,330.07L365.27,328.44L365.09,326.81L364.94,325.18L364.84,323.56L364.78,321.93L364.76,320.30L364.78,318.67L364.84,317.04L364.94,315.42L365.09,313.79L365.27,312.16L365.50,310.53L365.76,308.90L366.07,307.28L366.42,305.65L366.80,304.02L367.23,302.39L367.70,300.76L368.21,299.14L368.76,297.51L369.36,295.88L369.99,294.25L370.66,292.62L371.37,291.00L372.13,289.37L372.92,287.74L373.76,286.11L374.63,284.48L375.55,282.86L376.50,281.23L377.49,279.60L378.53,277.97L379.60,276.34L380.72,274.72L381.87,273.09L383.07,271.46L384.30,269.83L385.57,268.20L386.88,266.58L388.23,264.95L389.63,263.32L391.05,261.69L392.52,260.06L394.03,258.44L395.58,256.81L397.16,255.18L398.78,253.55L400.44,251.92L402.14,250.30L403.88,248.67L405.65,247.04L407.47,245.41L409.32,243.78L411.21,242.16L413.13,240.53L415.10,238.90L417.10,237.27L419.13,235.64L421.21,234.02L423.32,232.39L425.46,230.76L427.65,229.13L429.86,227.50L432.12,225.88L434.41,224.25L436.74,222.62L439.10,220.99L441.50,219.36L443.93,217.74L446.39,216.11L448.90,214.48L451.43,212.85L454.00,211.22L456.61,209.60L459.25,207.97L461.92,206.34L464.62,204.71L467.36,203.08L470.14,201.46L472.94,199.83L475.78,198.20L478.65,196.57L481.55,194.94L484.49,193.32L487.45,191.69L490.45,190.06L493.48,188.43L496.54,186.80L499.63,185.18L502.75,183.55L505.91,181.92L509.09,180.29L512.30,178.66L515.54,177.04L518.81,175.41L522.11,173.78L525.44,172.15L528.80,170.52L532.19,168.90L535.60,167.27L539.05,165.64L542.52,164.01L546.01,162.38L549.54,160.76L553.09,159.13L556.67,157.50L560.27,155.87L563.90,154.24L567.56,152.62L571.24,150.99L574.95,149.36L578.68,147.73L582.44,146.10L586.22,144.48L590.02,142.85L593.85,141.22L597.70,139.59L601.58,137.96L605.48,136.34L609.40,134.71L613.34,133.08L617.31,131.45L621.29,129.82L625.30,128.20L629.33,126.57L633.38,124.94L637.45,123.31L641.54,121.68L645.65,120.06L649.78,118.43L653.93,116.80L658.10,115.17L662.28,113.54L666.49,111.92L670.71,110.29L674.95,108.66L679.21,107.03L683.48,105.40L687.78,103.78L692.08,102.15L696.41,100.52L700.75,98.89L705.10,97.26L709.47,95.64L713.85,94.01L718.25,92.38L722.67,90.75L727.09,89.12L731.53,87.50L735.98,85.87L740.45,84.24L744.93,82.61L749.42,80.98L753.92,79.36L758.43,77.73L762.95,76.10L767.49,74.47L772.03,72.84L776.58,71.22L781.15,69.59L785.72,67.96L790.30,66.33L794.89,64.70L799.49,63.08L804.10,61.45L808.71,59.82L813.33,58.19L817.96,56.56L822.59,54.94L827.23,53.31L831.88,51.68L836.53,50.05L841.18,48.42L845.84,46.80L850.51,45.17L855.18,43.54L859.85,41.91L864.52,40.28L869.20,38.66L873.88,37.03L878.57,35.40L883.25,33.77L887.94,32.14L892.62,30.52L897.31,28.89L902.00,27.26M902.00,613.34L896.89,611.71L891.77,610.08L886.66,608.46L881.55,606.83L876.44,605.20L871.33,603.57L866.22,601.94L861.12,600.32L856.02,598.69L850.92,597.06L845.83,595.43L840.74,593.80L835.65,592.18L830.57,590.55L825.50,588.92L820.43,587.29L815.37,585.66L810.32,584.04L805.27,582.41L800.23,580.78L795.20,579.15L790.17,577.52L785.15,575.90L780.15,574.27L775.15,572.64L770.16,571.01L765.18,569.38L760.21,567.76L755.26,566.13L750.31,564.50L745.38,562.87L740.45,561.24L735.54,559.62L730.65,557.99L725.76,556.36L720.89,554.73L716.03,553.10L711.19,551.48L706.36,549.85L701.55,548.22L696.75,546.59L691.97,544.96L687.20,543.34L682.45,541.71L677.72,540.08L673.00,538.45L668.30,536.82L663.62,535.20L658.96,533.57L654.31,531.94L649.69,530.31L645.08,528.68L640.49,527.06L635.93,525.43L631.38,523.80L626.85,522.17L622.35,520.54L617.86,518.92L613.40,517.29L608.96,515.66L604.54,514.03L600.15,512.40L595.77,510.78L591.42,509.15L587.10,507.52L582.80,505.89L578.52,504.26L574.27,502.64L570.04,501.01L565.84,499.38L561.66,497.75L557.51,496.12L553.39,494.50L549.29,492.87L545.22,491.24L541.17,489.61L537.16,487.98L533.17,486.36L529.21,484.73L525.28,483.10L521.37,481.47L517.50,479.84L513.65,478.22L509.84,476.59L506.05,474.96L502.29,473.33L498.57,471.70L494.87,470.08L491.21,468.45L487.58,466.82L483.98,465.19L480.41,463.56L476.87,461.94L473.37,460.31L469.90,458.68L466.46,457.05L463.05,455.42L459.68,453.80L456.34,452.17L453.04,450.54L449.77,448.91L446.53,447.28L443.33,445.66L440.16,444.03L437.03,442.40L433.94,440.77L430.88,439.14L427.85,437.52L424.86,435.89L421.91,434.26L419.00,432.63L416.12,431.00L413.28,429.38L410.47,427.75L407.71,426.12L404.98,424.49L402.28,422.86L399.63,421.24L397.02,419.61L394.44,417.98L391.90,416.35L389.40,414.72L386.94,413.10L384.52,411.47L382.14,409.84L379.80,408.21L377.50,406.58L375.23,404.96L373.01,403.33L370.83,401.70L368.69,400.07L366.59,398.44L364.53,396.82L362.51,395.19L360.53,393.56L358.60,391.93L356.70,390.30L354.85,388.68L353.04,387.05L351.26,385.42L349.54,383.79L347.85,382.16L346.21,380.54L344.60,378.91L343.05,377.28L341.53,375.65L340.05,374.02L338.62,372.40L337.24,370.77L335.89,369.14L334.59,367.51L333.33,365.88L332.11,364.26L330.94,362.63L329.81,361.00L328.73,359.37L327.69,357.74L326.69,356.12L325.73,354.49L324.82,352.86L323.96,351.23L323.14,349.60L322.36,347.98L321.62,346.35L320.93,344.72L320.29,343.09L319.69,341.46L319.13,339.84L318.62,338.21L318.15,336.58L317.73,334.95L317.35,333.32L317.01,331.70L316.72,330.07L316.48,328.44L316.28,326.81L316.12,325.18L316.01,323.56L315.94,321.93L315.92,320.30L315.94,318.67L316.01,317.04L316.12,315.42L316.28,313.79L316.48,312.16L316.72,310.53L317.01,308.90L317.35,307.28L317.73,305.65L318.15,304.02L318.62,302.39L319.13,300.76L319.69,299.14L320.29,297.51L320.93,295.88L321.62,294.25L322.36,292.62L323.14,291.00L323.96,289.37L324.82,287.74L325.73,286.11L326.69,284.48L327.69,282.86L328.73,281.23L329.81,279.60L330.94,277.97L332.11,276.34L333.33,274.72L334.59,273.09L335.89,271.46L337.24,269.83L338.62,268.20L340.05,266.58L341.53,264.95L343.05,263.32L344.60,261.69L346.21,260.06L347.85,258.44L349.54,256.81L351.26,255.18L353.04,253.55L354.85,251.92L356.70,250.30L358.60,248.67L360.53,247.04L362.51,245.41L364.53,243.78L366.59,242.16L368.69,240.53L370.83,238.90L373.01,237.27L375.23,235.64L377.50,234.02L379.80,232.39L382.14,230.76L384.52,229.13L386.94,227.50L389.40,225.88L391.90,224.25L394.44,222.62L397.02,220.99L399.63,219.36L402.28,217.74L404.98,216.11L407.71,214.48L410.47,212.85L413.28,211.22L416.12,209.60L419.00,207.97L421.91,206.34L424.86,204.71L427.85,203.08L430.88,201.46L433.94,199.83L437.03,198.20L440.16,196.57L443.33,194.94L446.53,193.32L449.77,191.69L453.04,190.06L456.34,188.43L459.68,186.80L463.05,185.18L466.46,183.55L469.90,181.92L473.37,180.29L476.87,178.66L480.41,177.04L483.98,175.41L487.58,173.78L491.21,172.15L494.87,170.52L498.57,168.90L502.29,167.27L506.05,165.64L509.84,164.01L513.65,162.38L517.50,160.76L521.37,159.13L525.28,157.50L529.21,155.87L533.17,154.24L537.16,152.62L541.17,150.99L545.22,149.36L549.29,147.73L553.39,146.10L557.51,144.48L561.66,142.85L565.84,141.22L570.04,139.59L574.27,137.96L578.52,136.34L582.80,134.71L587.10,133.08L591.42,131.45L595.77,129.82L600.15,128.20L604.54,126.57L608.96,124.94L613.40,123.31L617.86,121.68L622.35,120.06L626.85,118.43L631.38,116.80L635.93,115.17L640.49,113.54L645.08,111.92L649.69,110.29L654.31,108.66L658.96,107.03L663.62,105.40L668.30,103.78L673.00,102.15L677.72,100.52L682.45,98.89L687.20,97.26L691.97,95.64L696.75,94.01L701.55,92.38L706.36,90.75L711.19,89.12L716.03,87.50L720.89,85.87L725.76,84.24L730.65,82.61L735.54,80.98L740.45,79.36L745.38,77.73L750.31,76.10L755.26,74.47L760.21,72.84L765.18,71.22L770.16,69.59L775.15,67.96L780.15,66.33L785.15,64.70L790.17,63.08L795.20,61.45L800.23,59.82L805.27,58.19L810.32,56.56L815.37,54.94L820.43,53.31L825.50,51.68L830.57,50.05L835.65,48.42L840.74,46.80L845.83,45.17L850.92,43.54L856.02,41.91L861.12,40.28L866.22,38.66L871.33,37.03L876.44,35.40L881.55,33.77L886.66,32.14L891.77,30.52L896.89,28.89L902.00,27.26M1053.69,564.50L1052.85,564.50L1052.00,564.50L1051.16,564.50L1050.32,564.50L1049.48,564.50L1048.63,564.50L1047.79,564.50L1046.95,564.50L1046.10,564.50L1045.26,564.50L1044.42,564.50L1043.58,564.50L1042.73,564.50L1041.89,564.50L1041.05,564.50L1040.21,564.50L1039.36,564.50L1038.52,564.50L1037.68,564.50L1036.83,564.50L1035.99,564.50L1035.15,564.50L1034.31,564.50L1033.46,564.50L1032.62,564.50L1031.78,564.50L1030.94,564.50L1030.09,564.50L1029.25,564.50L1028.41,564.50L1027.56,564.50L1026.72,564.50L1025.88,564.50L1025.04,564.50L1024.19,564.50L1023.35,564.50L1022.51,564.50L1021.67,564.50L1020.82,564.50L1019.98,564.50L1019.14,564.50L1018.29,564.50L1017.45,564.50L1016.61,564.50L1015.77,564.50L1014.92,564.50L1014.08,564.50L1013.24,564.50L1012.40,564.50L1011.55,564.50L1010.71,564.50L1009.87,564.50L1009.02,564.50L1008.18,564.50L1007.34,564.50L1006.50,564.50L1005.65,564.50L1004.81,564.50L1003.97,564.50L1003.13,564.50L1002.28,564.50L1001.44,564.50L1000.60,564.50L999.75,564.50L998.91,564.50L998.07,564.50L997.23,564.50L996.38,564.50L995.54,564.50L994.70,564.50L993.86,564.50L993.01,564.50L992.17,564.50L991.33,564.50L990.49,564.50L989.64,564.50L988.80,564.50L987.96,564.50L987.11,564.50L986.27,564.50L985.43,564.50L984.59,564.50L983.74,564.50L982.90,564.50L982.06,564.50L981.22,564.50L980.37,564.50L979.53,564.50L978.69,564.50L977.84,564.50L977.00,564.50L976.16,564.50L975.32,564.50L974.47,564.50L973.63,564.50L972.79,564.50L971.95,564.50L971.10,564.50L970.26,564.50L969.42,564.50L968.57,564.50L967.73,564.50L966.89,564.50L966.05,564.50L965.20,564.50L964.36,564.50L963.52,564.50L962.68,564.50L961.83,564.50L960.99,564.50L960.15,564.50L959.30,564.50L958.46,564.50L957.62,564.50L956.78,564.50L955.93,564.50L955.09,564.50L954.25,564.50L953.41,564.50L952.56,564.50L951.72,564.50L950.88,564.50L950.03,564.50L949.19,564.50L948.35,564.50L947.51,564.50L946.66,564.50L945.82,564.50L944.98,564.50L944.14,564.50L943.29,564.50L942.45,564.50L941.61,564.50L940.76,564.50L939.92,564.50L939.08,564.50L938.24,564.50L937.39,564.50L936.55,564.50L935.71,564.50L934.87,564.50L934.02,564.50L933.18,564.50L932.34,564.50L931.50,564.50L930.65,564.50L929.81,564.50L928.97,564.50L928.12,564.50L927.28,564.50L926.44,564.50L925.60,564.50L924.75,564.50L923.91,564.50L923.07,564.50L922.23,564.50L921.38,564.50L920.54,564.50L919.70,564.50L918.85,564.50L918.01,564.50L917.17,564.50L916.33,564.50L915.48,564.50L914.64,564.50L913.80,564.50L912.96,564.50L912.11,564.50L911.27,564.50L910.43,564.50L909.58,564.50L908.74,564.50L907.90,564.50L907.06,564.50L906.21,564.50L905.37,564.50L904.53,564.50L903.69,564.50L902.84,564.50L902.00,564.50L901.16,564.50L900.31,564.50L899.47,564.50L898.63,564.50L897.79,564.50L896.94,564.50L896.10,564.50L895.26,564.50L894.42,564.50L893.57,564.50L892.73,564.50L891.89,564.50L891.04,564.50L890.20,564.50L889.36,564.50L888.52,564.50L887.67,564.50L886.83,564.50L885.99,564.50L885.15,564.50L884.30,564.50L883.46,564.50L882.62,564.50L881.77,564.50L880.93,564.50L880.09,564.50L879.25,564.50L878.40,564.50L877.56,564.50L876.72,564.50L875.88,564.50L875.03,564.50L874.19,564.50L873.35,564.50L872.50,564.50L871.66,564.50L870.82,564.50L869.98,564.50L869.13,564.50L868.29,564.50L867.45,564.50L866.61,564.50L865.76,564.50L864.92,564.50L864.08,564.50L863.24,564.50L862.39,564.50L861.55,564.50L860.71,564.50L859.86,564.50L859.02,564.50L858.18,564.50L857.34,564.50L856.49,564.50L855.65,564.50L854.81,564.50L853.97,564.50L853.12,564.50L852.28,564.50L851.44,564.50L850.59,564.50L849.75,564.50L848.91,564.50L848.07,564.50L847.22,564.50L846.38,564.50L845.54,564.50L844.70,564.50L843.85,564.50L843.01,564.50L842.17,564.50L841.32,564.50L840.48,564.50L839.64,564.50L838.80,564.50L837.95,564.50L837.11,564.50L836.27,564.50L835.43,564.50L834.58,564.50L833.74,564.50L832.90,564.50L832.05,564.50L831.21,564.50L830.37,564.50L829.53,564.50L828.68,564.50L827.84,564.50L827.00,564.50L826.16,564.50L825.31,564.50L824.47,564.50L823.63,564.50L822.78,564.50L821.94,564.50L821.10,564.50L820.26,564.50L819.41,564.50L818.57,564.50L817.73,564.50L816.89,564.50L816.04,564.50L815.20,564.50L814.36,564.50L813.51,564.50L812.67,564.50L811.83,564.50L810.99,564.50L810.14,564.50L809.30,564.50L808.46,564.50L807.62,564.50L806.77,564.50L805.93,564.50L805.09,564.50L804.25,564.50L803.40,564.50L802.56,564.50L801.72,564.50L800.87,564.50L800.03,564.50L799.19,564.50L798.35,564.50L797.50,564.50L796.66,564.50L795.82,564.50L794.98,564.50L794.13,564.50L793.29,564.50L792.45,564.50L791.60,564.50L790.76,564.50L789.92,564.50L789.08,564.50L788.23,564.50L787.39,564.50L786.55,564.50L785.71,564.50L784.86,564.50L784.02,564.50L783.18,564.50L782.33,564.50L781.49,564.50L780.65,564.50L779.81,564.50L778.96,564.50L778.12,564.50L777.28,564.50L776.44,564.50L775.59,564.50L774.75,564.50L773.91,564.50L773.06,564.50L772.22,564.50L771.38,564.50L770.54,564.50L769.69,564.50L768.85,564.50L768.01,564.50L767.17,564.50L766.32,564.50L765.48,564.50L764.64,564.50L763.79,564.50L762.95,564.50L762.11,564.50L761.27,564.50L760.42,564.50L759.58,564.50L758.74,564.50L757.90,564.50L757.05,564.50L756.21,564.50L755.37,564.50L754.52,564.50L753.68,564.50L752.84,564.50L752.00,564.50L751.15,564.50L750.31,564.50M1195.04,515.66L1193.41,515.66L1191.78,515.66L1190.16,515.66L1188.53,515.66L1186.90,515.66L1185.27,515.66L1183.64,515.66L1182.02,515.66L1180.39,515.66L1178.76,515.66L1177.13,515.66L1175.50,515.66L1173.88,515.66L1172.25,515.66L1170.62,515.66L1168.99,515.66L1167.36,515.66L1165.74,515.66L1164.11,515.66L1162.48,515.66L1160.85,515.66L1159.22,515.66L1157.60,515.66L1155.97,515.66L1154.34,515.66L1152.71,515.66L1151.08,515.66L1149.46,515.66L1147.83,515.66L1146.20,515.66L1144.57,515.66L1142.94,515.66L1141.32,515.66L1139.69,515.66L1138.06,515.66L1136.43,515.66L1134.80,515.66L1133.18,515.66L1131.55,515.66L1129.92,515.66L1128.29,515.66L1126.66,515.66L1125.04,515.66L1123.41,515.66L1121.78,515.66L1120.15,515.66L1118.52,515.66L1116.90,515.66L1115.27,515.66L1113.64,515.66L1112.01,515.66L1110.38,515.66L1108.76,515.66L1107.13,515.66L1105.50,515.66L1103.87,515.66L1102.24,515.66L1100.62,515.66L1098.99,515.66L1097.36,515.66L1095.73,515.66L1094.10,515.66L1092.48,515.66L1090.85,515.66L1089.22,515.66L1087.59,515.66L1085.96,515.66L1084.34,515.66L1082.71,515.66L1081.08,515.66L1079.45,515.66L1077.82,515.66L1076.20,515.66L1074.57,515.66L1072.94,515.66L1071.31,515.66L1069.68,515.66L1068.06,515.66L1066.43,515.66L1064.80,515.66L1063.17,515.66L1061.54,515.66L1059.92,515.66L1058.29,515.66L1056.66,515.66L1055.03,515.66L1053.40,515.66L1051.78,515.66L1050.15,515.66L1048.52,515.66L1046.89,515.66L1045.26,515.66L1043.64,515.66L1042.01,515.66L1040.38,515.66L1038.75,515.66L1037.12,515.66L1035.50,515.66L1033.87,515.66L1032.24,515.66L1030.61,515.66L1028.98,515.66L1027.36,515.66L1025.73,515.66L1024.10,515.66L1022.47,515.66L1020.84,515.66L1019.22,515.66L1017.59,515.66L1015.96,515.66L1014.33,515.66L1012.70,515.66L1011.08,515.66L1009.45,515.66L1007.82,515.66L1006.19,515.66L1004.56,515.66L1002.94,515.66L1001.31,515.66L999.68,515.66L998.05,515.66L996.42,515.66L994.80,515.66L993.17,515.66L991.54,515.66L989.91,515.66L988.28,515.66L986.66,515.66L985.03,515.66L983.40,515.66L981.77,515.66L980.14,515.66L978.52,515.66L976.89,515.66L975.26,515.66L973.63,515.66L972.00,515.66L970.38,515.66L968.75,515.66L967.12,515.66L965.49,515.66L963.86,515.66L962.24,515.66L960.61,515.66L958.98,515.66L957.35,515.66L955.72,515.66L954.10,515.66L952.47,515.66L950.84,515.66L949.21,515.66L947.58,515.66L945.96,515.66L944.33,515.66L942.70,515.66L941.07,515.66L939.44,515.66L937.82,515.66L936.19,515.66L934.56,515.66L932.93,515.66L931.30,515.66L929.68,515.66L928.05,515.66L926.42,515.66L924.79,515.66L923.16,515.66L921.54,515.66L919.91,515.66L918.28,515.66L916.65,515.66L915.02,515.66L913.40,515.66L911.77,515.66L910.14,515.66L908.51,515.66L906.88,515.66L905.26,515.66L903.63,515.66L902.00,515.66L900.37,515.66L898.74,515.66L897.12,515.66L895.49,515.66L893.86,515.66L892.23,515.66L890.60,515.66L888.98,515.66L887.35,515.66L885.72,515.66L884.09,515.66L882.46,515.66L880.84,515.66L879.21,515.66L877.58,515.66L875.95,515.66L874.32,515.66L872.70,515.66L871.07,515.66L869.44,515.66L867.81,515.66L866.18,515.66L864.56,515.66L862.93,515.66L861.30,515.66L859.67,515.66L858.04,515.66L856.42,515.66L854.79,515.66L853.16,515.66L851.53,515.66L849.90,515.66L848.28,515.66L846.65,515.66L845.02,515.66L843.39,515.66L841.76,515.66L840.14,515.66L838.51,515.66L836.88,515.66L835.25,515.66L833.62,515.66L832.00,515.66L830.37,515.66L828.74,515.66L827.11,515.66L825.48,515.66L823.86,515.66L822.23,515.66L820.60,515.66L818.97,515.66L817.34,515.66L815.72,515.66L814.09,515.66L812.46,515.66L810.83,515.66L809.20,515.66L807.58,515.66L805.95,515.66L804.32,515.66L802.69,515.66L801.06,515.66L799.44,515.66L797.81,515.66L796.18,515.66L794.55,515.66L792.92,515.66L791.30,515.66L789.67,515.66L788.04,515.66L786.41,515.66L784.78,515.66L783.16,515.66L781.53,515.66L779.90,515.66L778.27,515.66L776.64,515.66L775.02,515.66L773.39,515.66L771.76,515.66L770.13,515.66L768.50,515.66L766.88,515.66L765.25,515.66L763.62,515.66L761.99,515.66L760.36,515.66L758.74,515.66L757.11,515.66L755.48,515.66L753.85,515.66L752.22,515.66L750.60,515.66L748.97,515.66L747.34,515.66L745.71,515.66L744.08,515.66L742.46,515.66L740.83,515.66L739.20,515.66L737.57,515.66L735.94,515.66L734.32,515.66L732.69,515.66L731.06,515.66L729.43,515.66L727.80,515.66L726.18,515.66L724.55,515.66L722.92,515.66L721.29,515.66L719.66,515.66L718.04,515.66L716.41,515.66L714.78,515.66L713.15,515.66L711.52,515.66L709.90,515.66L708.27,515.66L706.64,515.66L705.01,515.66L703.38,515.66L701.76,515.66L700.13,515.66L698.50,515.66L696.87,515.66L695.24,515.66L693.62,515.66L691.99,515.66L690.36,515.66L688.73,515.66L687.10,515.66L685.48,515.66L683.85,515.66L682.22,515.66L680.59,515.66L678.96,515.66L677.34,515.66L675.71,515.66L674.08,515.66L672.45,515.66L670.82,515.66L669.20,515.66L667.57,515.66L665.94,515.66L664.31,515.66L662.68,515.66L661.06,515.66L659.43,515.66L657.80,515.66L656.17,515.66L654.54,515.66L652.92,515.66L651.29,515.66L649.66,515.66L648.03,515.66L646.40,515.66L644.78,515.66L643.15,515.66L641.52,515.66L639.89,515.66L638.26,515.66L636.64,515.66L635.01,515.66L633.38,515.66L631.75,515.66L630.12,515.66L628.50,515.66L626.87,515.66L625.24,515.66L623.61,515.66L621.98,515.66L620.36,515.66L618.73,515.66L617.10,515.66L615.47,515.66L613.84,515.66L612.22,515.66L610.59,515.66L608.96,515.66M1316.42,466.82L1314.12,466.82L1311.82,466.82L1309.51,466.82L1307.21,466.82L1304.91,466.82L1302.61,466.82L1300.30,466.82L1298.00,466.82L1295.70,466.82L1293.40,466.82L1291.10,466.82L1288.79,466.82L1286.49,466.82L1284.19,466.82L1281.89,466.82L1279.58,466.82L1277.28,466.82L1274.98,466.82L1272.68,466.82L1270.37,466.82L1268.07,466.82L1265.77,466.82L1263.47,466.82L1261.16,466.82L1258.86,466.82L1256.56,466.82L1254.26,466.82L1251.96,466.82L1249.65,466.82L1247.35,466.82L1245.05,466.82L1242.75,466.82L1240.44,466.82L1238.14,466.82L1235.84,466.82L1233.54,466.82L1231.23,466.82L1228.93,466.82L1226.63,466.82L1224.33,466.82L1222.03,466.82L1219.72,466.82L1217.42,466.82L1215.12,466.82L1212.82,466.82L1210.51,466.82L1208.21,466.82L1205.91,466.82L1203.61,466.82L1201.30,466.82L1199.00,466.82L1196.70,466.82L1194.40,466.82L1192.09,466.82L1189.79,466.82L1187.49,466.82L1185.19,466.82L1182.89,466.82L1180.58,466.82L1178.28,466.82L1175.98,466.82L1173.68,466.82L1171.37,466.82L1169.07,466.82L1166.77,466.82L1164.47,466.82L1162.16,466.82L1159.86,466.82L1157.56,466.82L1155.26,466.82L1152.96,466.82L1150.65,466.82L1148.35,466.82L1146.05,466.82L1143.75,466.82L1141.44,466.82L1139.14,466.82L1136.84,466.82L1134.54,466.82L1132.23,466.82L1129.93,466.82L1127.63,466.82L1125.33,466.82L1123.02,466.82L1120.72,466.82L1118.42,466.82L1116.12,466.82L1113.82,466.82L1111.51,466.82L1109.21,466.82L1106.91,466.82L1104.61,466.82L1102.30,466.82L1100.00,466.82L1097.70,466.82L1095.40,466.82L1093.09,466.82L1090.79,466.82L1088.49,466.82L1086.19,466.82L1083.88,466.82L1081.58,466.82L1079.28,466.82L1076.98,466.82L1074.68,466.82L1072.37,466.82L1070.07,466.82L1067.77,466.82L1065.47,466.82L1063.16,466.82L1060.86,466.82L1058.56,466.82L1056.26,466.82L1053.95,466.82L1051.65,466.82L1049.35,466.82L1047.05,466.82L1044.75,466.82L1042.44,466.82L1040.14,466.82L1037.84,466.82L1035.54,466.82L1033.23,466.82L1030.93,466.82L1028.63,466.82L1026.33,466.82L1024.02,466.82L1021.72,466.82L1019.42,466.82L1017.12,466.82L1014.81,466.82L1012.51,466.82L1010.21,466.82L1007.91,466.82L1005.61,466.82L1003.30,466.82L1001.00,466.82L998.70,466.82L996.40,466.82L994.09,466.82L991.79,466.82L989.49,466.82L987.19,466.82L984.88,466.82L982.58,466.82L980.28,466.82L977.98,466.82L975.67,466.82L973.37,466.82L971.07,466.82L968.77,466.82L966.47,466.82L964.16,466.82L961.86,466.82L959.56,466.82L957.26,466.82L954.95,466.82L952.65,466.82L950.35,466.82L948.05,466.82L945.74,466.82L943.44,466.82L941.14,466.82L938.84,466.82L936.54,466.82L934.23,466.82L931.93,466.82L929.63,466.82L927.33,466.82L925.02,466.82L922.72,466.82L920.42,466.82L918.12,466.82L915.81,466.82L913.51,466.82L911.21,466.82L908.91,466.82L906.60,466.82L904.30,466.82L902.00,466.82L899.70,466.82L897.40,466.82L895.09,466.82L892.79,466.82L890.49,466.82L888.19,466.82L885.88,466.82L883.58,466.82L881.28,466.82L878.98,466.82L876.67,466.82L874.37,466.82L872.07,466.82L869.77,466.82L867.46,466.82L865.16,466.82L862.86,466.82L860.56,466.82L858.26,466.82L855.95,466.82L853.65,466.82L851.35,466.82L849.05,466.82L846.74,466.82L844.44,466.82L842.14,466.82L839.84,466.82L837.53,466.82L835.23,466.82L832.93,466.82L830.63,466.82L828.33,466.82L826.02,466.82L823.72,466.82L821.42,466.82L819.12,466.82L816.81,466.82L814.51,466.82L812.21,466.82L809.91,466.82L807.60,466.82L805.30,466.82L803.00,466.82L800.70,466.82L798.39,466.82L796.09,466.82L793.79,466.82L791.49,466.82L789.19,466.82L786.88,466.82L784.58,466.82L782.28,466.82L779.98,466.82L777.67,466.82L775.37,466.82L773.07,466.82L770.77,466.82L768.46,466.82L766.16,466.82L763.86,466.82L761.56,466.82L759.25,466.82L756.95,466.82L754.65,466.82L752.35,466.82L750.05,466.82L747.74,466.82L745.44,466.82L743.14,466.82L740.84,466.82L738.53,466.82L736.23,466.82L733.93,466.82L731.63,466.82L729.32,466.82L727.02,466.82L724.72,466.82L722.42,466.82L720.12,466.82L717.81,466.82L715.51,466.82L713.21,466.82L710.91,466.82L708.60,466.82L706.30,466.82L704.00,466.82L701.70,466.82L699.39,466.82L697.09,466.82L694.79,466.82L692.49,466.82L690.18,466.82L687.88,466.82L685.58,466.82L683.28,466.82L680.98,466.82L678.67,466.82L676.37,466.82L674.07,466.82L671.77,466.82L669.46,466.82L667.16,466.82L664.86,466.82L662.56,466.82L660.25,466.82L657.95,466.82L655.65,466.82L653.35,466.82L651.04,466.82L648.74,466.82L646.44,466.82L644.14,466.82L641.84,466.82L639.53,466.82L637.23,466.82L634.93,466.82L632.63,466.82L630.32,466.82L628.02,466.82L625.72,466.82L623.42,466.82L621.11,466.82L618.81,466.82L616.51,466.82L614.21,466.82L611.91,466.82L609.60,466.82L607.30,466.82L605.00,466.82L602.70,466.82L600.39,466.82L598.09,466.82L595.79,466.82L593.49,466.82L591.18,466.82L588.88,466.82L586.58,466.82L584.28,466.82L581.97,466.82L579.67,466.82L577.37,466.82L575.07,466.82L572.77,466.82L570.46,466.82L568.16,466.82L565.86,466.82L563.56,466.82L561.25,466.82L558.95,466.82L556.65,466.82L554.35,466.82L552.04,466.82L549.74,466.82L547.44,466.82L545.14,466.82L542.84,466.82L540.53,466.82L538.23,466.82L535.93,466.82L533.63,466.82L531.32,466.82L529.02,466.82L526.72,466.82L524.42,466.82L522.11,466.82L519.81,466.82L517.51,466.82L515.21,466.82L512.90,466.82L510.60,466.82L508.30,466.82L506.00,466.82L503.70,466.82L501.39,466.82L499.09,466.82L496.79,466.82L494.49,466.82L492.18,466.82L489.88,466.82L487.58,466.82M1409.56,417.98L1406.74,417.98L1403.92,417.98L1401.10,417.98L1398.28,417.98L1395.46,417.98L1392.64,417.98L1389.82,417.98L1387.00,417.98L1384.18,417.98L1381.36,417.98L1378.54,417.98L1375.72,417.98L1372.90,417.98L1370.08,417.98L1367.26,417.98L1364.44,417.98L1361.62,417.98L1358.80,417.98L1355.98,417.98L1353.16,417.98L1350.34,417.98L1347.53,417.98L1344.71,417.98L1341.89,417.98L1339.07,417.98L1336.25,417.98L1333.43,417.98L1330.61,417.98L1327.79,417.98L1324.97,417.98L1322.15,417.98L1319.33,417.98L1316.51,417.98L1313.69,417.98L1310.87,417.98L1308.05,417.98L1305.23,417.98L1302.41,417.98L1299.59,417.98L1296.77,417.98L1293.95,417.98L1291.13,417.98L1288.31,417.98L1285.49,417.98L1282.67,417.98L1279.85,417.98L1277.03,417.98L1274.21,417.98L1271.39,417.98L1268.57,417.98L1265.75,417.98L1262.93,417.98L1260.11,417.98L1257.29,417.98L1254.47,417.98L1251.65,417.98L1248.83,417.98L1246.01,417.98L1243.19,417.98L1240.37,417.98L1237.55,417.98L1234.73,417.98L1231.91,417.98L1229.09,417.98L1226.27,417.98L1223.45,417.98L1220.63,417.98L1217.82,417.98L1215.00,417.98L1212.18,417.98L1209.36,417.98L1206.54,417.98L1203.72,417.98L1200.90,417.98L1198.08,417.98L1195.26,417.98L1192.44,417.98L1189.62,417.98L1186.80,417.98L1183.98,417.98L1181.16,417.98L1178.34,417.98L1175.52,417.98L1172.70,417.98L1169.88,417.98L1167.06,417.98L1164.24,417.98L1161.42,417.98L1158.60,417.98L1155.78,417.98L1152.96,417.98L1150.14,417.98L1147.32,417.98L1144.50,417.98L1141.68,417.98L1138.86,417.98L1136.04,417.98L1133.22,417.98L1130.40,417.98L1127.58,417.98L1124.76,417.98L1121.94,417.98L1119.12,417.98L1116.30,417.98L1113.48,417.98L1110.66,417.98L1107.84,417.98L1105.02,417.98L1102.20,417.98L1099.38,417.98L1096.56,417.98L1093.74,417.98L1090.93,417.98L1088.11,417.98L1085.29,417.98L1082.47,417.98L1079.65,417.98L1076.83,417.98L1074.01,417.98L1071.19,417.98L1068.37,417.98L1065.55,417.98L1062.73,417.98L1059.91,417.98L1057.09,417.98L1054.27,417.98L1051.45,417.98L1048.63,417.98L1045.81,417.98L1042.99,417.98L1040.17,417.98L1037.35,417.98L1034.53,417.98L1031.71,417.98L1028.89,417.98L1026.07,417.98L1023.25,417.98L1020.43,417.98L1017.61,417.98L1014.79,417.98L1011.97,417.98L1009.15,417.98L1006.33,417.98L1003.51,417.98L1000.69,417.98L997.87,417.98L995.05,417.98L992.23,417.98L989.41,417.98L986.59,417.98L983.77,417.98L980.95,417.98L978.13,417.98L975.31,417.98L972.49,417.98L969.67,417.98L966.85,417.98L964.04,417.98L961.22,417.98L958.40,417.98L955.58,417.98L952.76,417.98L949.94,417.98L947.12,417.98L944.30,417.98L941.48,417.98L938.66,417.98L935.84,417.98L933.02,417.98L930.20,417.98L927.38,417.98L924.56,417.98L921.74,417.98L918.92,417.98L916.10,417.98L913.28,417.98L910.46,417.98L907.64,417.98L904.82,417.98L902.00,417.98L899.18,417.98L896.36,417.98L893.54,417.98L890.72,417.98L887.90,417.98L885.08,417.98L882.26,417.98L879.44,417.98L876.62,417.98L873.80,417.98L870.98,417.98L868.16,417.98L865.34,417.98L862.52,417.98L859.70,417.98L856.88,417.98L854.06,417.98L851.24,417.98L848.42,417.98L845.60,417.98L842.78,417.98L839.96,417.98L837.15,417.98L834.33,417.98L831.51,417.98L828.69,417.98L825.87,417.98L823.05,417.98L820.23,417.98L817.41,417.98L814.59,417.98L811.77,417.98L808.95,417.98L806.13,417.98L803.31,417.98L800.49,417.98L797.67,417.98L794.85,417.98L792.03,417.98L789.21,417.98L786.39,417.98L783.57,417.98L780.75,417.98L777.93,417.98L775.11,417.98L772.29,417.98L769.47,417.98L766.65,417.98L763.83,417.98L761.01,417.98L758.19,417.98L755.37,417.98L752.55,417.98L749.73,417.98L746.91,417.98L744.09,417.98L741.27,417.98L738.45,417.98L735.63,417.98L732.81,417.98L729.99,417.98L727.17,417.98L724.35,417.98L721.53,417.98L718.71,417.98L715.89,417.98L713.07,417.98L710.26,417.98L707.44,417.98L704.62,417.98L701.80,417.98L698.98,417.98L696.16,417.98L693.34,417.98L690.52,417.98L687.70,417.98L684.88,417.98L682.06,417.98L679.24,417.98L676.42,417.98L673.60,417.98L670.78,417.98L667.96,417.98L665.14,417.98L662.32,417.98L659.50,417.98L656.68,417.98L653.86,417.98L651.04,417.98L648.22,417.98L645.40,417.98L642.58,417.98L639.76,417.98L636.94,417.98L634.12,417.98L631.30,417.98L628.48,417.98L625.66,417.98L622.84,417.98L620.02,417.98L617.20,417.98L614.38,417.98L611.56,417.98L608.74,417.98L605.92,417.98L603.10,417.98L600.28,417.98L597.46,417.98L594.64,417.98L591.82,417.98L589.00,417.98L586.18,417.98L583.37,417.98L580.55,417.98L577.73,417.98L574.91,417.98L572.09,417.98L569.27,417.98L566.45,417.98L563.63,417.98L560.81,417.98L557.99,417.98L555.17,417.98L552.35,417.98L549.53,417.98L546.71,417.98L543.89,417.98L541.07,417.98L538.25,417.98L535.43,417.98L532.61,417.98L529.79,417.98L526.97,417.98L524.15,417.98L521.33,417.98L518.51,417.98L515.69,417.98L512.87,417.98L510.05,417.98L507.23,417.98L504.41,417.98L501.59,417.98L498.77,417.98L495.95,417.98L493.13,417.98L490.31,417.98L487.49,417.98L484.67,417.98L481.85,417.98L479.03,417.98L476.21,417.98L473.39,417.98L470.57,417.98L467.75,417.98L464.93,417.98L462.11,417.98L459.29,417.98L456.47,417.98L453.66,417.98L450.84,417.98L448.02,417.98L445.20,417.98L442.38,417.98L439.56,417.98L436.74,417.98L433.92,417.98L431.10,417.98L428.28,417.98L425.46,417.98L422.64,417.98L419.82,417.98L417.00,417.98L414.18,417.98L411.36,417.98L408.54,417.98L405.72,417.98L402.90,417.98L400.08,417.98L397.26,417.98L394.44,417.98M1468.11,369.14L1464.96,369.14L1461.82,369.14L1458.67,369.14L1455.53,369.14L1452.38,369.14L1449.24,369.14L1446.09,369.14L1442.95,369.14L1439.80,369.14L1436.66,369.14L1433.51,369.14L1430.37,369.14L1427.22,369.14L1424.08,369.14L1420.93,369.14L1417.79,369.14L1414.64,369.14L1411.50,369.14L1408.35,369.14L1405.21,369.14L1402.06,369.14L1398.92,369.14L1395.77,369.14L1392.63,369.14L1389.48,369.14L1386.34,369.14L1383.19,369.14L1380.05,369.14L1376.90,369.14L1373.76,369.14L1370.61,369.14L1367.47,369.14L1364.32,369.14L1361.18,369.14L1358.03,369.14L1354.89,369.14L1351.74,369.14L1348.60,369.14L1345.45,369.14L1342.31,369.14L1339.16,369.14L1336.02,369.14L1332.87,369.14L1329.73,369.14L1326.58,369.14L1323.44,369.14L1320.29,369.14L1317.15,369.14L1314.00,369.14L1310.86,369.14L1307.71,369.14L1304.57,369.14L1301.42,369.14L1298.28,369.14L1295.13,369.14L1291.99,369.14L1288.84,369.14L1285.70,369.14L1282.55,369.14L1279.41,369.14L1276.26,369.14L1273.12,369.14L1269.97,369.14L1266.83,369.14L1263.68,369.14L1260.54,369.14L1257.39,369.14L1254.25,369.14L1251.10,369.14L1247.96,369.14L1244.81,369.14L1241.67,369.14L1238.52,369.14L1235.38,369.14L1232.23,369.14L1229.09,369.14L1225.94,369.14L1222.80,369.14L1219.65,369.14L1216.51,369.14L1213.36,369.14L1210.22,369.14L1207.07,369.14L1203.93,369.14L1200.78,369.14L1197.64,369.14L1194.49,369.14L1191.35,369.14L1188.20,369.14L1185.05,369.14L1181.91,369.14L1178.76,369.14L1175.62,369.14L1172.47,369.14L1169.33,369.14L1166.18,369.14L1163.04,369.14L1159.89,369.14L1156.75,369.14L1153.60,369.14L1150.46,369.14L1147.31,369.14L1144.17,369.14L1141.02,369.14L1137.88,369.14L1134.73,369.14L1131.59,369.14L1128.44,369.14L1125.30,369.14L1122.15,369.14L1119.01,369.14L1115.86,369.14L1112.72,369.14L1109.57,369.14L1106.43,369.14L1103.28,369.14L1100.14,369.14L1096.99,369.14L1093.85,369.14L1090.70,369.14L1087.56,369.14L1084.41,369.14L1081.27,369.14L1078.12,369.14L1074.98,369.14L1071.83,369.14L1068.69,369.14L1065.54,369.14L1062.40,369.14L1059.25,369.14L1056.11,369.14L1052.96,369.14L1049.82,369.14L1046.67,369.14L1043.53,369.14L1040.38,369.14L1037.24,369.14L1034.09,369.14L1030.95,369.14L1027.80,369.14L1024.66,369.14L1021.51,369.14L1018.37,369.14L1015.22,369.14L1012.08,369.14L1008.93,369.14L1005.79,369.14L1002.64,369.14L999.50,369.14L996.35,369.14L993.21,369.14L990.06,369.14L986.92,369.14L983.77,369.14L980.63,369.14L977.48,369.14L974.34,369.14L971.19,369.14L968.05,369.14L964.90,369.14L961.76,369.14L958.61,369.14L955.47,369.14L952.32,369.14L949.18,369.14L946.03,369.14L942.89,369.14L939.74,369.14L936.60,369.14L933.45,369.14L930.31,369.14L927.16,369.14L924.02,369.14L920.87,369.14L917.73,369.14L914.58,369.14L911.44,369.14L908.29,369.14L905.15,369.14L902.00,369.14L898.85,369.14L895.71,369.14L892.56,369.14L889.42,369.14L886.27,369.14L883.13,369.14L879.98,369.14L876.84,369.14L873.69,369.14L870.55,369.14L867.40,369.14L864.26,369.14L861.11,369.14L857.97,369.14L854.82,369.14L851.68,369.14L848.53,369.14L845.39,369.14L842.24,369.14L839.10,369.14L835.95,369.14L832.81,369.14L829.66,369.14L826.52,369.14L823.37,369.14L820.23,369.14L817.08,369.14L813.94,369.14L810.79,369.14L807.65,369.14L804.50,369.14L801.36,369.14L798.21,369.14L795.07,369.14L791.92,369.14L788.78,369.14L785.63,369.14L782.49,369.14L779.34,369.14L776.20,369.14L773.05,369.14L769.91,369.14L766.76,369.14L763.62,369.14L760.47,369.14L757.33,369.14L754.18,369.14L751.04,369.14L747.89,369.14L744.75,369.14L741.60,369.14L738.46,369.14L735.31,369.14L732.17,369.14L729.02,369.14L725.88,369.14L722.73,369.14L719.59,369.14L716.44,369.14L713.30,369.14L710.15,369.14L707.01,369.14L703.86,369.14L700.72,369.14L697.57,369.14L694.43,369.14L691.28,369.14L688.14,369.14L684.99,369.14L681.85,369.14L678.70,369.14L675.56,369.14L672.41,369.14L669.27,369.14L666.12,369.14L662.98,369.14L659.83,369.14L656.69,369.14L653.54,369.14L650.40,369.14L647.25,369.14L644.11,369.14L640.96,369.14L637.82,369.14L634.67,369.14L631.53,369.14L628.38,369.14L625.24,369.14L622.09,369.14L618.95,369.14L615.80,369.14L612.65,369.14L609.51,369.14L606.36,369.14L603.22,369.14L600.07,369.14L596.93,369.14L593.78,369.14L590.64,369.14L587.49,369.14L584.35,369.14L581.20,369.14L578.06,369.14L574.91,369.14L571.77,369.14L568.62,369.14L565.48,369.14L562.33,369.14L559.19,369.14L556.04,369.14L552.90,369.14L549.75,369.14L546.61,369.14L543.46,369.14L540.32,369.14L537.17,369.14L534.03,369.14L530.88,369.14L527.74,369.14L524.59,369.14L521.45,369.14L518.30,369.14L515.16,369.14L512.01,369.14L508.87,369.14L505.72,369.14L502.58,369.14L499.43,369.14L496.29,369.14L493.14,369.14L490.00,369.14L486.85,369.14L483.71,369.14L480.56,369.14L477.42,369.14L474.27,369.14L471.13,369.14L467.98,369.14L464.84,369.14L461.69,369.14L458.55,369.14L455.40,369.14L452.26,369.14L449.11,369.14L445.97,369.14L442.82,369.14L439.68,369.14L436.53,369.14L433.39,369.14L430.24,369.14L427.10,369.14L423.95,369.14L420.81,369.14L417.66,369.14L414.52,369.14L411.37,369.14L408.23,369.14L405.08,369.14L401.94,369.14L398.79,369.14L395.65,369.14L392.50,369.14L389.36,369.14L386.21,369.14L383.07,369.14L379.92,369.14L376.78,369.14L373.63,369.14L370.49,369.14L367.34,369.14L364.20,369.14L361.05,369.14L357.91,369.14L354.76,369.14L351.62,369.14L348.47,369.14L345.33,369.14L342.18,369.14L339.04,369.14L335.89,369.14M1488.08,320.30L1484.82,320.30L1481.57,320.30L1478.31,320.30L1475.06,320.30L1471.80,320.30L1468.54,320.30L1465.29,320.30L1462.03,320.30L1458.78,320.30L1455.52,320.30L1452.26,320.30L1449.01,320.30L1445.75,320.30L1442.50,320.30L1439.24,320.30L1435.98,320.30L1432.73,320.30L1429.47,320.30L1426.22,320.30L1422.96,320.30L1419.70,320.30L1416.45,320.30L1413.19,320.30L1409.94,320.30L1406.68,320.30L1403.42,320.30L1400.17,320.30L1396.91,320.30L1393.66,320.30L1390.40,320.30L1387.14,320.30L1383.89,320.30L1380.63,320.30L1377.38,320.30L1374.12,320.30L1370.86,320.30L1367.61,320.30L1364.35,320.30L1361.10,320.30L1357.84,320.30L1354.58,320.30L1351.33,320.30L1348.07,320.30L1344.82,320.30L1341.56,320.30L1338.30,320.30L1335.05,320.30L1331.79,320.30L1328.54,320.30L1325.28,320.30L1322.02,320.30L1318.77,320.30L1315.51,320.30L1312.26,320.30L1309.00,320.30L1305.74,320.30L1302.49,320.30L1299.23,320.30L1295.98,320.30L1292.72,320.30L1289.46,320.30L1286.21,320.30L1282.95,320.30L1279.70,320.30L1276.44,320.30L1273.18,320.30L1269.93,320.30L1266.67,320.30L1263.42,320.30L1260.16,320.30L1256.90,320.30L1253.65,320.30L1250.39,320.30L1247.14,320.30L1243.88,320.30L1240.62,320.30L1237.37,320.30L1234.11,320.30L1230.86,320.30L1227.60,320.30L1224.34,320.30L1221.09,320.30L1217.83,320.30L1214.58,320.30L1211.32,320.30L1208.06,320.30L1204.81,320.30L1201.55,320.30L1198.30,320.30L1195.04,320.30L1191.78,320.30L1188.53,320.30L1185.27,320.30L1182.02,320.30L1178.76,320.30L1175.50,320.30L1172.25,320.30L1168.99,320.30L1165.74,320.30L1162.48,320.30L1159.22,320.30L1155.97,320.30L1152.71,320.30L1149.46,320.30L1146.20,320.30L1142.94,320.30L1139.69,320.30L1136.43,320.30L1133.18,320.30L1129.92,320.30L1126.66,320.30L1123.41,320.30L1120.15,320.30L1116.90,320.30L1113.64,320.30L1110.38,320.30L1107.13,320.30L1103.87,320.30L1100.62,320.30L1097.36,320.30L1094.10,320.30L1090.85,320.30L1087.59,320.30L1084.34,320.30L1081.08,320.30L1077.82,320.30L1074.57,320.30L1071.31,320.30L1068.06,320.30L1064.80,320.30L1061.54,320.30L1058.29,320.30L1055.03,320.30L1051.78,320.30L1048.52,320.30L1045.26,320.30L1042.01,320.30L1038.75,320.30L1035.50,320.30L1032.24,320.30L1028.98,320.30L1025.73,320.30L1022.47,320.30L1019.22,320.30L1015.96,320.30L1012.70,320.30L1009.45,320.30L1006.19,320.30L1002.94,320.30L999.68,320.30L996.42,320.30L993.17,320.30L989.91,320.30L986.66,320.30L983.40,320.30L980.14,320.30L976.89,320.30L973.63,320.30L970.38,320.30L967.12,320.30L963.86,320.30L960.61,320.30L957.35,320.30L954.10,320.30L950.84,320.30L947.58,320.30L944.33,320.30L941.07,320.30L937.82,320.30L934.56,320.30L931.30,320.30L928.05,320.30L924.79,320.30L921.54,320.30L918.28,320.30L915.02,320.30L911.77,320.30L908.51,320.30L905.26,320.30L902.00,320.30L898.74,320.30L895.49,320.30L892.23,320.30L888.98,320.30L885.72,320.30L882.46,320.30L879.21,320.30L875.95,320.30L872.70,320.30L869.44,320.30L866.18,320.30L862.93,320.30L859.67,320.30L856.42,320.30L853.16,320.30L849.90,320.30L846.65,320.30L843.39,320.30L840.14,320.30L836.88,320.30L833.62,320.30L830.37,320.30L827.11,320.30L823.86,320.30L820.60,320.30L817.34,320.30L814.09,320.30L810.83,320.30L807.58,320.30L804.32,320.30L801.06,320.30L797.81,320.30L794.55,320.30L791.30,320.30L788.04,320.30L784.78,320.30L781.53,320.30L778.27,320.30L775.02,320.30L771.76,320.30L768.50,320.30L765.25,320.30L761.99,320.30L758.74,320.30L755.48,320.30L752.22,320.30L748.97,320.30L745.71,320.30L742.46,320.30L739.20,320.30L735.94,320.30L732.69,320.30L729.43,320.30L726.18,320.30L722.92,320.30L719.66,320.30L716.41,320.30L713.15,320.30L709.90,320.30L706.64,320.30L703.38,320.30L700.13,320.30L696.87,320.30L693.62,320.30L690.36,320.30L687.10,320.30L683.85,320.30L680.59,320.30L677.34,320.30L674.08,320.30L670.82,320.30L667.57,320.30L664.31,320.30L661.06,320.30L657.80,320.30L654.54,320.30L651.29,320.30L648.03,320.30L644.78,320.30L641.52,320.30L638.26,320.30L635.01,320.30L631.75,320.30L628.50,320.30L625.24,320.30L621.98,320.30L618.73,320.30L615.47,320.30L612.22,320.30L608.96,320.30L605.70,320.30L602.45,320.30L599.19,320.30L595.94,320.30L592.68,320.30L589.42,320.30L586.17,320.30L582.91,320.30L579.66,320.30L576.40,320.30L573.14,320.30L569.89,320.30L566.63,320.30L563.38,320.30L560.12,320.30L556.86,320.30L553.61,320.30L550.35,320.30L547.10,320.30L543.84,320.30L540.58,320.30L537.33,320.30L534.07,320.30L530.82,320.30L527.56,320.30L524.30,320.30L521.05,320.30L517.79,320.30L514.54,320.30L511.28,320.30L508.02,320.30L504.77,320.30L501.51,320.30L498.26,320.30L495.00,320.30L491.74,320.30L488.49,320.30L485.23,320.30L481.98,320.30L478.72,320.30L475.46,320.30L472.21,320.30L468.95,320.30L465.70,320.30L462.44,320.30L459.18,320.30L455.93,320.30L452.67,320.30L449.42,320.30L446.16,320.30L442.90,320.30L439.65,320.30L436.39,320.30L433.14,320.30L429.88,320.30L426.62,320.30L423.37,320.30L420.11,320.30L416.86,320.30L413.60,320.30L410.34,320.30L407.09,320.30L403.83,320.30L400.58,320.30L397.32,320.30L394.06,320.30L390.81,320.30L387.55,320.30L384.30,320.30L381.04,320.30L377.78,320.30L374.53,320.30L371.27,320.30L368.02,320.30L364.76,320.30L361.50,320.30L358.25,320.30L354.99,320.30L351.74,320.30L348.48,320.30L345.22,320.30L341.97,320.30L338.71,320.30L335.46,320.30L332.20,320.30L328.94,320.30L325.69,320.30L322.43,320.30L319.18,320.30L315.92,320.30M1468.11,271.46L1464.96,271.46L1461.82,271.46L1458.67,271.46L1455.53,271.46L1452.38,271.46L1449.24,271.46L1446.09,271.46L1442.95,271.46L1439.80,271.46L1436.66,271.46L1433.51,271.46L1430.37,271.46L1427.22,271.46L1424.08,271.46L1420.93,271.46L1417.79,271.46L1414.64,271.46L1411.50,271.46L1408.35,271.46L1405.21,271.46L1402.06,271.46L1398.92,271.46L1395.77,271.46L1392.63,271.46L1389.48,271.46L1386.34,271.46L1383.19,271.46L1380.05,271.46L1376.90,271.46L1373.76,271.46L1370.61,271.46L1367.47,271.46L1364.32,271.46L1361.18,271.46L1358.03,271.46L1354.89,271.46L1351.74,271.46L1348.60,271.46L1345.45,271.46L1342.31,271.46L1339.16,271.46L1336.02,271.46L1332.87,271.46L1329.73,271.46L1326.58,271.46L1323.44,271.46L1320.29,271.46L1317.15,271.46L1314.00,271.46L1310.86,271.46L1307.71,271.46L1304.57,271.46L1301.42,271.46L1298.28,271.46L1295.13,271.46L1291.99,271.46L1288.84,271.46L1285.70,271.46L1282.55,271.46L1279.41,271.46L1276.26,271.46L1273.12,271.46L1269.97,271.46L1266.83,271.46L1263.68,271.46L1260.54,271.46L1257.39,271.46L1254.25,271.46L1251.10,271.46L1247.96,271.46L1244.81,271.46L1241.67,271.46L1238.52,271.46L1235.38,271.46L1232.23,271.46L1229.09,271.46L1225.94,271.46L1222.80,271.46L1219.65,271.46L1216.51,271.46L1213.36,271.46L1210.22,271.46L1207.07,271.46L1203.93,271.46L1200.78,271.46L1197.64,271.46L1194.49,271.46L1191.35,271.46L1188.20,271.46L1185.05,271.46L1181.91,271.46L1178.76,271.46L1175.62,271.46L1172.47,271.46L1169.33,271.46L1166.18,271.46L1163.04,271.46L1159.89,271.46L1156.75,271.46L1153.60,271.46L1150.46,271.46L1147.31,271.46L1144.17,271.46L1141.02,271.46L1137.88,271.46L1134.73,271.46L1131.59,271.46L1128.44,271.46L1125.30,271.46L1122.15,271.46L1119.01,271.46L1115.86,271.46L1112.72,271.46L1109.57,271.46L1106.43,271.46L1103.28,271.46L1100.14,271.46L1096.99,271.46L1093.85,271.46L1090.70,271.46L1087.56,271.46L1084.41,271.46L1081.27,271.46L1078.12,271.46L1074.98,271.46L1071.83,271.46L1068.69,271.46L1065.54,271.46L1062.40,271.46L1059.25,271.46L1056.11,271.46L1052.96,271.46L1049.82,271.46L1046.67,271.46L1043.53,271.46L1040.38,271.46L1037.24,271.46L1034.09,271.46L1030.95,271.46L1027.80,271.46L1024.66,271.46L1021.51,271.46L1018.37,271.46L1015.22,271.46L1012.08,271.46L1008.93,271.46L1005.79,271.46L1002.64,271.46L999.50,271.46L996.35,271.46L993.21,271.46L990.06,271.46L986.92,271.46L983.77,271.46L980.63,271.46L977.48,271.46L974.34,271.46L971.19,271.46L968.05,271.46L964.90,271.46L961.76,271.46L958.61,271.46L955.47,271.46L952.32,271.46L949.18,271.46L946.03,271.46L942.89,271.46L939.74,271.46L936.60,271.46L933.45,271.46L930.31,271.46L927.16,271.46L924.02,271.46L920.87,271.46L917.73,271.46L914.58,271.46L911.44,271.46L908.29,271.46L905.15,271.46L902.00,271.46L898.85,271.46L895.71,271.46L892.56,271.46L889.42,271.46L886.27,271.46L883.13,271.46L879.98,271.46L876.84,271.46L873.69,271.46L870.55,271.46L867.40,271.46L864.26,271.46L861.11,271.46L857.97,271.46L854.82,271.46L851.68,271.46L848.53,271.46L845.39,271.46L842.24,271.46L839.10,271.46L835.95,271.46L832.81,271.46L829.66,271.46L826.52,271.46L823.37,271.46L820.23,271.46L817.08,271.46L813.94,271.46L810.79,271.46L807.65,271.46L804.50,271.46L801.36,271.46L798.21,271.46L795.07,271.46L791.92,271.46L788.78,271.46L785.63,271.46L782.49,271.46L779.34,271.46L776.20,271.46L773.05,271.46L769.91,271.46L766.76,271.46L763.62,271.46L760.47,271.46L757.33,271.46L754.18,271.46L751.04,271.46L747.89,271.46L744.75,271.46L741.60,271.46L738.46,271.46L735.31,271.46L732.17,271.46L729.02,271.46L725.88,271.46L722.73,271.46L719.59,271.46L716.44,271.46L713.30,271.46L710.15,271.46L707.01,271.46L703.86,271.46L700.72,271.46L697.57,271.46L694.43,271.46L691.28,271.46L688.14,271.46L684.99,271.46L681.85,271.46L678.70,271.46L675.56,271.46L672.41,271.46L669.27,271.46L666.12,271.46L662.98,271.46L659.83,271.46L656.69,271.46L653.54,271.46L650.40,271.46L647.25,271.46L644.11,271.46L640.96,271.46L637.82,271.46L634.67,271.46L631.53,271.46L628.38,271.46L625.24,271.46L622.09,271.46L618.95,271.46L615.80,271.46L612.65,271.46L609.51,271.46L606.36,271.46L603.22,271.46L600.07,271.46L596.93,271.46L593.78,271.46L590.64,271.46L587.49,271.46L584.35,271.46L581.20,271.46L578.06,271.46L574.91,271.46L571.77,271.46L568.62,271.46L565.48,271.46L562.33,271.46L559.19,271.46L556.04,271.46L552.90,271.46L549.75,271.46L546.61,271.46L543.46,271.46L540.32,271.46L537.17,271.46L534.03,271.46L530.88,271.46L527.74,271.46L524.59,271.46L521.45,271.46L518.30,271.46L515.16,271.46L512.01,271.46L508.87,271.46L505.72,271.46L502.58,271.46L499.43,271.46L496.29,271.46L493.14,271.46L490.00,271.46L486.85,271.46L483.71,271.46L480.56,271.46L477.42,271.46L474.27,271.46L471.13,271.46L467.98,271.46L464.84,271.46L461.69,271.46L458.55,271.46L455.40,271.46L452.26,271.46L449.11,271.46L445.97,271.46L442.82,271.46L439.68,271.46L436.53,271.46L433.39,271.46L430.24,271.46L427.10,271.46L423.95,271.46L420.81,271.46L417.66,271.46L414.52,271.46L411.37,271.46L408.23,271.46L405.08,271.46L401.94,271.46L398.79,271.46L395.65,271.46L392.50,271.46L389.36,271.46L386.21,271.46L383.07,271.46L379.92,271.46L376.78,271.46L373.63,271.46L370.49,271.46L367.34,271.46L364.20,271.46L361.05,271.46L357.91,271.46L354.76,271.46L351.62,271.46L348.47,271.46L345.33,271.46L342.18,271.46L339.04,271.46L335.89,271.46M1409.56,222.62L1406.74,222.62L1403.92,222.62L1401.10,222.62L1398.28,222.62L1395.46,222.62L1392.64,222.62L1389.82,222.62L1387.00,222.62L1384.18,222.62L1381.36,222.62L1378.54,222.62L1375.72,222.62L1372.90,222.62L1370.08,222.62L1367.26,222.62L1364.44,222.62L1361.62,222.62L1358.80,222.62L1355.98,222.62L1353.16,222.62L1350.34,222.62L1347.53,222.62L1344.71,222.62L1341.89,222.62L1339.07,222.62L1336.25,222.62L1333.43,222.62L1330.61,222.62L1327.79,222.62L1324.97,222.62L1322.15,222.62L1319.33,222.62L1316.51,222.62L1313.69,222.62L1310.87,222.62L1308.05,222.62L1305.23,222.62L1302.41,222.62L1299.59,222.62L1296.77,222.62L1293.95,222.62L1291.13,222.62L1288.31,222.62L1285.49,222.62L1282.67,222.62L1279.85,222.62L1277.03,222.62L1274.21,222.62L1271.39,222.62L1268.57,222.62L1265.75,222.62L1262.93,222.62L1260.11,222.62L1257.29,222.62L1254.47,222.62L1251.65,222.62L1248.83,222.62L1246.01,222.62L1243.19,222.62L1240.37,222.62L1237.55,222.62L1234.73,222.62L1231.91,222.62L1229.09,222.62L1226.27,222.62L1223.45,222.62L1220.63,222.62L1217.82,222.62L1215.00,222.62L1212.18,222.62L1209.36,222.62L1206.54,222.62L1203.72,222.62L1200.90,222.62L1198.08,222.62L1195.26,222.62L1192.44,222.62L1189.62,222.62L1186.80,222.62L1183.98,222.62L1181.16,222.62L1178.34,222.62L1175.52,222.62L1172.70,222.62L1169.88,222.62L1167.06,222.62L1164.24,222.62L1161.42,222.62L1158.60,222.62L1155.78,222.62L1152.96,222.62L1150.14,222.62L1147.32,222.62L1144.50,222.62L1141.68,222.62L1138.86,222.62L1136.04,222.62L1133.22,222.62L1130.40,222.62L1127.58,222.62L1124.76,222.62L1121.94,222.62L1119.12,222.62L1116.30,222.62L1113.48,222.62L1110.66,222.62L1107.84,222.62L1105.02,222.62L1102.20,222.62L1099.38,222.62L1096.56,222.62L1093.74,222.62L1090.93,222.62L1088.11,222.62L1085.29,222.62L1082.47,222.62L1079.65,222.62L1076.83,222.62L1074.01,222.62L1071.19,222.62L1068.37,222.62L1065.55,222.62L1062.73,222.62L1059.91,222.62L1057.09,222.62L1054.27,222.62L1051.45,222.62L1048.63,222.62L1045.81,222.62L1042.99,222.62L1040.17,222.62L1037.35,222.62L1034.53,222.62L1031.71,222.62L1028.89,222.62L1026.07,222.62L1023.25,222.62L1020.43,222.62L1017.61,222.62L1014.79,222.62L1011.97,222.62L1009.15,222.62L1006.33,222.62L1003.51,222.62L1000.69,222.62L997.87,222.62L995.05,222.62L992.23,222.62L989.41,222.62L986.59,222.62L983.77,222.62L980.95,222.62L978.13,222.62L975.31,222.62L972.49,222.62L969.67,222.62L966.85,222.62L964.04,222.62L961.22,222.62L958.40,222.62L955.58,222.62L952.76,222.62L949.94,222.62L947.12,222.62L944.30,222.62L941.48,222.62L938.66,222.62L935.84,222.62L933.02,222.62L930.20,222.62L927.38,222.62L924.56,222.62L921.74,222.62L918.92,222.62L916.10,222.62L913.28,222.62L910.46,222.62L907.64,222.62L904.82,222.62L902.00,222.62L899.18,222.62L896.36,222.62L893.54,222.62L890.72,222.62L887.90,222.62L885.08,222.62L882.26,222.62L879.44,222.62L876.62,222.62L873.80,222.62L870.98,222.62L868.16,222.62L865.34,222.62L862.52,222.62L859.70,222.62L856.88,222.62L854.06,222.62L851.24,222.62L848.42,222.62L845.60,222.62L842.78,222.62L839.96,222.62L837.15,222.62L834.33,222.62L831.51,222.62L828.69,222.62L825.87,222.62L823.05,222.62L820.23,222.62L817.41,222.62L814.59,222.62L811.77,222.62L808.95,222.62L806.13,222.62L803.31,222.62L800.49,222.62L797.67,222.62L794.85,222.62L792.03,222.62L789.21,222.62L786.39,222.62L783.57,222.62L780.75,222.62L777.93,222.62L775.11,222.62L772.29,222.62L769.47,222.62L766.65,222.62L763.83,222.62L761.01,222.62L758.19,222.62L755.37,222.62L752.55,222.62L749.73,222.62L746.91,222.62L744.09,222.62L741.27,222.62L738.45,222.62L735.63,222.62L732.81,222.62L729.99,222.62L727.17,222.62L724.35,222.62L721.53,222.62L718.71,222.62L715.89,222.62L713.07,222.62L710.26,222.62L707.44,222.62L704.62,222.62L701.80,222.62L698.98,222.62L696.16,222.62L693.34,222.62L690.52,222.62L687.70,222.62L684.88,222.62L682.06,222.62L679.24,222.62L676.42,222.62L673.60,222.62L670.78,222.62L667.96,222.62L665.14,222.62L662.32,222.62L659.50,222.62L656.68,222.62L653.86,222.62L651.04,222.62L648.22,222.62L645.40,222.62L642.58,222.62L639.76,222.62L636.94,222.62L634.12,222.62L631.30,222.62L628.48,222.62L625.66,222.62L622.84,222.62L620.02,222.62L617.20,222.62L614.38,222.62L611.56,222.62L608.74,222.62L605.92,222.62L603.10,222.62L600.28,222.62L597.46,222.62L594.64,222.62L591.82,222.62L589.00,222.62L586.18,222.62L583.37,222.62L580.55,222.62L577.73,222.62L574.91,222.62L572.09,222.62L569.27,222.62L566.45,222.62L563.63,222.62L560.81,222.62L557.99,222.62L555.17,222.62L552.35,222.62L549.53,222.62L546.71,222.62L543.89,222.62L541.07,222.62L538.25,222.62L535.43,222.62L532.61,222.62L529.79,222.62L526.97,222.62L524.15,222.62L521.33,222.62L518.51,222.62L515.69,222.62L512.87,222.62L510.05,222.62L507.23,222.62L504.41,222.62L501.59,222.62L498.77,222.62L495.95,222.62L493.13,222.62L490.31,222.62L487.49,222.62L484.67,222.62L481.85,222.62L479.03,222.62L476.21,222.62L473.39,222.62L470.57,222.62L467.75,222.62L464.93,222.62L462.11,222.62L459.29,222.62L456.47,222.62L453.66,222.62L450.84,222.62L448.02,222.62L445.20,222.62L442.38,222.62L439.56,222.62L436.74,222.62L433.92,222.62L431.10,222.62L428.28,222.62L425.46,222.62L422.64,222.62L419.82,222.62L417.00,222.62L414.18,222.62L411.36,222.62L408.54,222.62L405.72,222.62L402.90,222.62L400.08,222.62L397.26,222.62L394.44,222.62M1316.42,173.78L1314.12,173.78L1311.82,173.78L1309.51,173.78L1307.21,173.78L1304.91,173.78L1302.61,173.78L1300.30,173.78L1298.00,173.78L1295.70,173.78L1293.40,173.78L1291.10,173.78L1288.79,173.78L1286.49,173.78L1284.19,173.78L1281.89,173.78L1279.58,173.78L1277.28,173.78L1274.98,173.78L1272.68,173.78L1270.37,173.78L1268.07,173.78L1265.77,173.78L1263.47,173.78L1261.16,173.78L1258.86,173.78L1256.56,173.78L1254.26,173.78L1251.96,173.78L1249.65,173.78L1247.35,173.78L1245.05,173.78L1242.75,173.78L1240.44,173.78L1238.14,173.78L1235.84,173.78L1233.54,173.78L1231.23,173.78L1228.93,173.78L1226.63,173.78L1224.33,173.78L1222.03,173.78L1219.72,173.78L1217.42,173.78L1215.12,173.78L1212.82,173.78L1210.51,173.78L1208.21,173.78L1205.91,173.78L1203.61,173.78L1201.30,173.78L1199.00,173.78L1196.70,173.78L1194.40,173.78L1192.09,173.78L1189.79,173.78L1187.49,173.78L1185.19,173.78L1182.89,173.78L1180.58,173.78L1178.28,173.78L1175.98,173.78L1173.68,173.78L1171.37,173.78L1169.07,173.78L1166.77,173.78L1164.47,173.78L1162.16,173.78L1159.86,173.78L1157.56,173.78L1155.26,173.78L1152.96,173.78L1150.65,173.78L1148.35,173.78L1146.05,173.78L1143.75,173.78L1141.44,173.78L1139.14,173.78L1136.84,173.78L1134.54,173.78L1132.23,173.78L1129.93,173.78L1127.63,173.78L1125.33,173.78L1123.02,173.78L1120.72,173.78L1118.42,173.78L1116.12,173.78L1113.82,173.78L1111.51,173.78L1109.21,173.78L1106.91,173.78L1104.61,173.78L1102.30,173.78L1100.00,173.78L1097.70,173.78L1095.40,173.78L1093.09,173.78L1090.79,173.78L1088.49,173.78L1086.19,173.78L1083.88,173.78L1081.58,173.78L1079.28,173.78L1076.98,173.78L1074.68,173.78L1072.37,173.78L1070.07,173.78L1067.77,173.78L1065.47,173.78L1063.16,173.78L1060.86,173.78L1058.56,173.78L1056.26,173.78L1053.95,173.78L1051.65,173.78L1049.35,173.78L1047.05,173.78L1044.75,173.78L1042.44,173.78L1040.14,173.78L1037.84,173.78L1035.54,173.78L1033.23,173.78L1030.93,173.78L1028.63,173.78L1026.33,173.78L1024.02,173.78L1021.72,173.78L1019.42,173.78L1017.12,173.78L1014.81,173.78L1012.51,173.78L1010.21,173.78L1007.91,173.78L1005.61,173.78L1003.30,173.78L1001.00,173.78L998.70,173.78L996.40,173.78L994.09,173.78L991.79,173.78L989.49,173.78L987.19,173.78L984.88,173.78L982.58,173.78L980.28,173.78L977.98,173.78L975.67,173.78L973.37,173.78L971.07,173.78L968.77,173.78L966.47,173.78L964.16,173.78L961.86,173.78L959.56,173.78L957.26,173.78L954.95,173.78L952.65,173.78L950.35,173.78L948.05,173.78L945.74,173.78L943.44,173.78L941.14,173.78L938.84,173.78L936.54,173.78L934.23,173.78L931.93,173.78L929.63,173.78L927.33,173.78L925.02,173.78L922.72,173.78L920.42,173.78L918.12,173.78L915.81,173.78L913.51,173.78L911.21,173.78L908.91,173.78L906.60,173.78L904.30,173.78L902.00,173.78L899.70,173.78L897.40,173.78L895.09,173.78L892.79,173.78L890.49,173.78L888.19,173.78L885.88,173.78L883.58,173.78L881.28,173.78L878.98,173.78L876.67,173.78L874.37,173.78L872.07,173.78L869.77,173.78L867.46,173.78L865.16,173.78L862.86,173.78L860.56,173.78L858.26,173.78L855.95,173.78L853.65,173.78L851.35,173.78L849.05,173.78L846.74,173.78L844.44,173.78L842.14,173.78L839.84,173.78L837.53,173.78L835.23,173.78L832.93,173.78L830.63,173.78L828.33,173.78L826.02,173.78L823.72,173.78L821.42,173.78L819.12,173.78L816.81,173.78L814.51,173.78L812.21,173.78L809.91,173.78L807.60,173.78L805.30,173.78L803.00,173.78L800.70,173.78L798.39,173.78L796.09,173.78L793.79,173.78L791.49,173.78L789.19,173.78L786.88,173.78L784.58,173.78L782.28,173.78L779.98,173.78L777.67,173.78L775.37,173.78L773.07,173.78L770.77,173.78L768.46,173.78L766.16,173.78L763.86,173.78L761.56,173.78L759.25,173.78L756.95,173.78L754.65,173.78L752.35,173.78L750.05,173.78L747.74,173.78L745.44,173.78L743.14,173.78L740.84,173.78L738.53,173.78L736.23,173.78L733.93,173.78L731.63,173.78L729.32,173.78L727.02,173.78L724.72,173.78L722.42,173.78L720.12,173.78L717.81,173.78L715.51,173.78L713.21,173.78L710.91,173.78L708.60,173.78L706.30,173.78L704.00,173.78L701.70,173.78L699.39,173.78L697.09,173.78L694.79,173.78L692.49,173.78L690.18,173.78L687.88,173.78L685.58,173.78L683.28,173.78L680.98,173.78L678.67,173.78L676.37,173.78L674.07,173.78L671.77,173.78L669.46,173.78L667.16,173.78L664.86,173.78L662.56,173.78L660.25,173.78L657.95,173.78L655.65,173.78L653.35,173.78L651.04,173.78L648.74,173.78L646.44,173.78L644.14,173.78L641.84,173.78L639.53,173.78L637.23,173.78L634.93,173.78L632.63,173.78L630.32,173.78L628.02,173.78L625.72,173.78L623.42,173.78L621.11,173.78L618.81,173.78L616.51,173.78L614.21,173.78L611.91,173.78L609.60,173.78L607.30,173.78L605.00,173.78L602.70,173.78L600.39,173.78L598.09,173.78L595.79,173.78L593.49,173.78L591.18,173.78L588.88,173.78L586.58,173.78L584.28,173.78L581.97,173.78L579.67,173.78L577.37,173.78L575.07,173.78L572.77,173.78L570.46,173.78L568.16,173.78L565.86,173.78L563.56,173.78L561.25,173.78L558.95,173.78L556.65,173.78L554.35,173.78L552.04,173.78L549.74,173.78L547.44,173.78L545.14,173.78L542.84,173.78L540.53,173.78L538.23,173.78L535.93,173.78L533.63,173.78L531.32,173.78L529.02,173.78L526.72,173.78L524.42,173.78L522.11,173.78L519.81,173.78L517.51,173.78L515.21,173.78L512.90,173.78L510.60,173.78L508.30,173.78L506.00,173.78L503.70,173.78L501.39,173.78L499.09,173.78L496.79,173.78L494.49,173.78L492.18,173.78L489.88,173.78L487.58,173.78M1195.04,124.94L1193.41,124.94L1191.78,124.94L1190.16,124.94L1188.53,124.94L1186.90,124.94L1185.27,124.94L1183.64,124.94L1182.02,124.94L1180.39,124.94L1178.76,124.94L1177.13,124.94L1175.50,124.94L1173.88,124.94L1172.25,124.94L1170.62,124.94L1168.99,124.94L1167.36,124.94L1165.74,124.94L1164.11,124.94L1162.48,124.94L1160.85,124.94L1159.22,124.94L1157.60,124.94L1155.97,124.94L1154.34,124.94L1152.71,124.94L1151.08,124.94L1149.46,124.94L1147.83,124.94L1146.20,124.94L1144.57,124.94L1142.94,124.94L1141.32,124.94L1139.69,124.94L1138.06,124.94L1136.43,124.94L1134.80,124.94L1133.18,124.94L1131.55,124.94L1129.92,124.94L1128.29,124.94L1126.66,124.94L1125.04,124.94L1123.41,124.94L1121.78,124.94L1120.15,124.94L1118.52,124.94L1116.90,124.94L1115.27,124.94L1113.64,124.94L1112.01,124.94L1110.38,124.94L1108.76,124.94L1107.13,124.94L1105.50,124.94L1103.87,124.94L1102.24,124.94L1100.62,124.94L1098.99,124.94L1097.36,124.94L1095.73,124.94L1094.10,124.94L1092.48,124.94L1090.85,124.94L1089.22,124.94L1087.59,124.94L1085.96,124.94L1084.34,124.94L1082.71,124.94L1081.08,124.94L1079.45,124.94L1077.82,124.94L1076.20,124.94L1074.57,124.94L1072.94,124.94L1071.31,124.94L1069.68,124.94L1068.06,124.94L1066.43,124.94L1064.80,124.94L1063.17,124.94L1061.54,124.94L1059.92,124.94L1058.29,124.94L1056.66,124.94L1055.03,124.94L1053.40,124.94L1051.78,124.94L1050.15,124.94L1048.52,124.94L1046.89,124.94L1045.26,124.94L1043.64,124.94L1042.01,124.94L1040.38,124.94L1038.75,124.94L1037.12,124.94L1035.50,124.94L1033.87,124.94L1032.24,124.94L1030.61,124.94L1028.98,124.94L1027.36,124.94L1025.73,124.94L1024.10,124.94L1022.47,124.94L1020.84,124.94L1019.22,124.94L1017.59,124.94L1015.96,124.94L1014.33,124.94L1012.70,124.94L1011.08,124.94L1009.45,124.94L1007.82,124.94L1006.19,124.94L1004.56,124.94L1002.94,124.94L1001.31,124.94L999.68,124.94L998.05,124.94L996.42,124.94L994.80,124.94L993.17,124.94L991.54,124.94L989.91,124.94L988.28,124.94L986.66,124.94L985.03,124.94L983.40,124.94L981.77,124.94L980.14,124.94L978.52,124.94L976.89,124.94L975.26,124.94L973.63,124.94L972.00,124.94L970.38,124.94L968.75,124.94L967.12,124.94L965.49,124.94L963.86,124.94L962.24,124.94L960.61,124.94L958.98,124.94L957.35,124.94L955.72,124.94L954.10,124.94L952.47,124.94L950.84,124.94L949.21,124.94L947.58,124.94L945.96,124.94L944.33,124.94L942.70,124.94L941.07,124.94L939.44,124.94L937.82,124.94L936.19,124.94L934.56,124.94L932.93,124.94L931.30,124.94L929.68,124.94L928.05,124.94L926.42,124.94L924.79,124.94L923.16,124.94L921.54,124.94L919.91,124.94L918.28,124.94L916.65,124.94L915.02,124.94L913.40,124.94L911.77,124.94L910.14,124.94L908.51,124.94L906.88,124.94L905.26,124.94L903.63,124.94L902.00,124.94L900.37,124.94L898.74,124.94L897.12,124.94L895.49,124.94L893.86,124.94L892.23,124.94L890.60,124.94L888.98,124.94L887.35,124.94L885.72,124.94L884.09,124.94L882.46,124.94L880.84,124.94L879.21,124.94L877.58,124.94L875.95,124.94L874.32,124.94L872.70,124.94L871.07,124.94L869.44,124.94L867.81,124.94L866.18,124.94L864.56,124.94L862.93,124.94L861.30,124.94L859.67,124.94L858.04,124.94L856.42,124.94L854.79,124.94L853.16,124.94L851.53,124.94L849.90,124.94L848.28,124.94L846.65,124.94L845.02,124.94L843.39,124.94L841.76,124.94L840.14,124.94L838.51,124.94L836.88,124.94L835.25,124.94L833.62,124.94L832.00,124.94L830.37,124.94L828.74,124.94L827.11,124.94L825.48,124.94L823.86,124.94L822.23,124.94L820.60,124.94L818.97,124.94L817.34,124.94L815.72,124.94L814.09,124.94L812.46,124.94L810.83,124.94L809.20,124.94L807.58,124.94L805.95,124.94L804.32,124.94L802.69,124.94L801.06,124.94L799.44,124.94L797.81,124.94L796.18,124.94L794.55,124.94L792.92,124.94L791.30,124.94L789.67,124.94L788.04,124.94L786.41,124.94L784.78,124.94L783.16,124.94L781.53,124.94L779.90,124.94L778.27,124.94L776.64,124.94L775.02,124.94L773.39,124.94L771.76,124.94L770.13,124.94L768.50,124.94L766.88,124.94L765.25,124.94L763.62,124.94L761.99,124.94L760.36,124.94L758.74,124.94L757.11,124.94L755.48,124.94L753.85,124.94L752.22,124.94L750.60,124.94L748.97,124.94L747.34,124.94L745.71,124.94L744.08,124.94L742.46,124.94L740.83,124.94L739.20,124.94L737.57,124.94L735.94,124.94L734.32,124.94L732.69,124.94L731.06,124.94L729.43,124.94L727.80,124.94L726.18,124.94L724.55,124.94L722.92,124.94L721.29,124.94L719.66,124.94L718.04,124.94L716.41,124.94L714.78,124.94L713.15,124.94L711.52,124.94L709.90,124.94L708.27,124.94L706.64,124.94L705.01,124.94L703.38,124.94L701.76,124.94L700.13,124.94L698.50,124.94L696.87,124.94L695.24,124.94L693.62,124.94L691.99,124.94L690.36,124.94L688.73,124.94L687.10,124.94L685.48,124.94L683.85,124.94L682.22,124.94L680.59,124.94L678.96,124.94L677.34,124.94L675.71,124.94L674.08,124.94L672.45,124.94L670.82,124.94L669.20,124.94L667.57,124.94L665.94,124.94L664.31,124.94L662.68,124.94L661.06,124.94L659.43,124.94L657.80,124.94L656.17,124.94L654.54,124.94L652.92,124.94L651.29,124.94L649.66,124.94L648.03,124.94L646.40,124.94L644.78,124.94L643.15,124.94L641.52,124.94L639.89,124.94L638.26,124.94L636.64,124.94L635.01,124.94L633.38,124.94L631.75,124.94L630.12,124.94L628.50,124.94L626.87,124.94L625.24,124.94L623.61,124.94L621.98,124.94L620.36,124.94L618.73,124.94L617.10,124.94L615.47,124.94L613.84,124.94L612.22,124.94L610.59,124.94L608.96,124.94M1053.69,76.10L1052.85,76.10L1052.00,76.10L1051.16,76.10L1050.32,76.10L1049.48,76.10L1048.63,76.10L1047.79,76.10L1046.95,76.10L1046.10,76.10L1045.26,76.10L1044.42,76.10L1043.58,76.10L1042.73,76.10L1041.89,76.10L1041.05,76.10L1040.21,76.10L1039.36,76.10L1038.52,76.10L1037.68,76.10L1036.83,76.10L1035.99,76.10L1035.15,76.10L1034.31,76.10L1033.46,76.10L1032.62,76.10L1031.78,76.10L1030.94,76.10L1030.09,76.10L1029.25,76.10L1028.41,76.10L1027.56,76.10L1026.72,76.10L1025.88,76.10L1025.04,76.10L1024.19,76.10L1023.35,76.10L1022.51,76.10L1021.67,76.10L1020.82,76.10L1019.98,76.10L1019.14,76.10L1018.29,76.10L1017.45,76.10L1016.61,76.10L1015.77,76.10L1014.92,76.10L1014.08,76.10L1013.24,76.10L1012.40,76.10L1011.55,76.10L1010.71,76.10L1009.87,76.10L1009.02,76.10L1008.18,76.10L1007.34,76.10L1006.50,76.10L1005.65,76.10L1004.81,76.10L1003.97,76.10L1003.13,76.10L1002.28,76.10L1001.44,76.10L1000.60,76.10L999.75,76.10L998.91,76.10L998.07,76.10L997.23,76.10L996.38,76.10L995.54,76.10L994.70,76.10L993.86,76.10L993.01,76.10L992.17,76.10L991.33,76.10L990.49,76.10L989.64,76.10L988.80,76.10L987.96,76.10L987.11,76.10L986.27,76.10L985.43,76.10L984.59,76.10L983.74,76.10L982.90,76.10L982.06,76.10L981.22,76.10L980.37,76.10L979.53,76.10L978.69,76.10L977.84,76.10L977.00,76.10L976.16,76.10L975.32,76.10L974.47,76.10L973.63,76.10L972.79,76.10L971.95,76.10L971.10,76.10L970.26,76.10L969.42,76.10L968.57,76.10L967.73,76.10L966.89,76.10L966.05,76.10L965.20,76.10L964.36,76.10L963.52,76.10L962.68,76.10L961.83,76.10L960.99,76.10L960.15,76.10L959.30,76.10L958.46,76.10L957.62,76.10L956.78,76.10L955.93,76.10L955.09,76.10L954.25,76.10L953.41,76.10L952.56,76.10L951.72,76.10L950.88,76.10L950.03,76.10L949.19,76.10L948.35,76.10L947.51,76.10L946.66,76.10L945.82,76.10L944.98,76.10L944.14,76.10L943.29,76.10L942.45,76.10L941.61,76.10L940.76,76.10L939.92,76.10L939.08,76.10L938.24,76.10L937.39,76.10L936.55,76.10L935.71,76.10L934.87,76.10L934.02,76.10L933.18,76.10L932.34,76.10L931.50,76.10L930.65,76.10L929.81,76.10L928.97,76.10L928.12,76.10L927.28,76.10L926.44,76.10L925.60,76.10L924.75,76.10L923.91,76.10L923.07,76.10L922.23,76.10L921.38,76.10L920.54,76.10L919.70,76.10L918.85,76.10L918.01,76.10L917.17,76.10L916.33,76.10L915.48,76.10L914.64,76.10L913.80,76.10L912.96,76.10L912.11,76.10L911.27,76.10L910.43,76.10L909.58,76.10L908.74,76.10L907.90,76.10L907.06,76.10L906.21,76.10L905.37,76.10L904.53,76.10L903.69,76.10L902.84,76.10L902.00,76.10L901.16,76.10L900.31,76.10L899.47,76.10L898.63,76.10L897.79,76.10L896.94,76.10L896.10,76.10L895.26,76.10L894.42,76.10L893.57,76.10L892.73,76.10L891.89,76.10L891.04,76.10L890.20,76.10L889.36,76.10L888.52,76.10L887.67,76.10L886.83,76.10L885.99,76.10L885.15,76.10L884.30,76.10L883.46,76.10L882.62,76.10L881.77,76.10L880.93,76.10L880.09,76.10L879.25,76.10L878.40,76.10L877.56,76.10L876.72,76.10L875.88,76.10L875.03,76.10L874.19,76.10L873.35,76.10L872.50,76.10L871.66,76.10L870.82,76.10L869.98,76.10L869.13,76.10L868.29,76.10L867.45,76.10L866.61,76.10L865.76,76.10L864.92,76.10L864.08,76.10L863.24,76.10L862.39,76.10L861.55,76.10L860.71,76.10L859.86,76.10L859.02,76.10L858.18,76.10L857.34,76.10L856.49,76.10L855.65,76.10L854.81,76.10L853.97,76.10L853.12,76.10L852.28,76.10L851.44,76.10L850.59,76.10L849.75,76.10L848.91,76.10L848.07,76.10L847.22,76.10L846.38,76.10L845.54,76.10L844.70,76.10L843.85,76.10L843.01,76.10L842.17,76.10L841.32,76.10L840.48,76.10L839.64,76.10L838.80,76.10L837.95,76.10L837.11,76.10L836.27,76.10L835.43,76.10L834.58,76.10L833.74,76.10L832.90,76.10L832.05,76.10L831.21,76.10L830.37,76.10L829.53,76.10L828.68,76.10L827.84,76.10L827.00,76.10L826.16,76.10L825.31,76.10L824.47,76.10L823.63,76.10L822.78,76.10L821.94,76.10L821.10,76.10L820.26,76.10L819.41,76.10L818.57,76.10L817.73,76.10L816.89,76.10L816.04,76.10L815.20,76.10L814.36,76.10L813.51,76.10L812.67,76.10L811.83,76.10L810.99,76.10L810.14,76.10L809.30,76.10L808.46,76.10L807.62,76.10L806.77,76.10L805.93,76.10L805.09,76.10L804.25,76.10L803.40,76.10L802.56,76.10L801.72,76.10L800.87,76.10L800.03,76.10L799.19,76.10L798.35,76.10L797.50,76.10L796.66,76.10L795.82,76.10L794.98,76.10L794.13,76.10L793.29,76.10L792.45,76.10L791.60,76.10L790.76,76.10L789.92,76.10L789.08,76.10L788.23,76.10L787.39,76.10L786.55,76.10L785.71,76.10L784.86,76.10L784.02,76.10L783.18,76.10L782.33,76.10L781.49,76.10L780.65,76.10L779.81,76.10L778.96,76.10L778.12,76.10L777.28,76.10L776.44,76.10L775.59,76.10L774.75,76.10L773.91,76.10L773.06,76.10L772.22,76.10L771.38,76.10L770.54,76.10L769.69,76.10L768.85,76.10L768.01,76.10L767.17,76.10L766.32,76.10L765.48,76.10L764.64,76.10L763.79,76.10L762.95,76.10L762.11,76.10L761.27,76.10L760.42,76.10L759.58,76.10L758.74,76.10L757.90,76.10L757.05,76.10L756.21,76.10L755.37,76.10L754.52,76.10L753.68,76.10L752.84,76.10L752.00,76.10L751.15,76.10L750.31,76.10" fill="none" stroke="#747474" stroke-width="2.08" stroke-dasharray="2.08 3.44"/>
<text x="903.0" y="25.3" font-family="Liberation Sans" font-size="11" fill="#8c8c8c" text-anchor="middle">+90<tspan font-size="8" dx="1.2" dy="-4">°</tspan></text>
<text x="903.0" y="122.9" font-family="Liberation Sans" font-size="11" fill="#8c8c8c" text-anchor="middle">+60<tspan font-size="8" dx="1.2" dy="-4">°</tspan></text>
<text x="903.0" y="220.6" font-family="Liberation Sans" font-size="11" fill="#8c8c8c" text-anchor="middle">+30<tspan font-size="8" dx="1.2" dy="-4">°</tspan></text>
<text x="903.0" y="429.0" font-family="Liberation Sans" font-size="11" fill="#8c8c8c" text-anchor="middle">−30<tspan font-size="8" dx="1.2" dy="-4">°</tspan></text>
<text x="903.0" y="526.7" font-family="Liberation Sans" font-size="11" fill="#8c8c8c" text-anchor="middle">−60<tspan font-size="8" dx="1.2" dy="-4">°</tspan></text>
<text x="903.0" y="624.3" font-family="Liberation Sans" font-size="11" fill="#8c8c8c" text-anchor="middle">−90<tspan font-size="8" dx="1.2" dy="-4">°</tspan></text>
<text x="1488.6" y="330.3" font-family="Liberation Sans" font-size="11" fill="#8c8c8c" text-anchor="middle">+180<tspan font-size="8" dx="1.2" dy="-4">°</tspan></text>
<text x="1390.9" y="330.3" font-family="Liberation Sans" font-size="11" fill="#8c8c8c" text-anchor="middle">+210<tspan font-size="8" dx="1.2" dy="-4">°</tspan></text>
<text x="1293.2" y="330.3" font-family="Liberation Sans" font-size="11" fill="#8c8c8c" text-anchor="middle">+240<tspan font-size="8" dx="1.2" dy="-4">°</tspan></text>
<text x="1195.5" y="330.3" font-family="Liberation Sans" font-size="11" fill="#8c8c8c" text-anchor="middle">+270<tspan font-size="8" dx="1.2" dy="-4">°</tspan></text>
<text x="1097.9" y="330.3" font-family="Liberation Sans" font-size="11" fill="#8c8c8c" text-anchor="middle">+300<tspan font-size="8" dx="1.2" dy="-4">°</tspan></text>
<text x="1000.2" y="330.3" font-family="Liberation Sans" font-size="11" fill="#8c8c8c" text-anchor="middle">+330<tspan font-size="8" dx="1.2" dy="-4">°</tspan></text>
<text x="902.5" y="330.3" font-family="Liberation Sans" font-size="11" fill="#8c8c8c" text-anchor="middle">+0<tspan font-size="8" dx="1.2" dy="-4">°</tspan></text>
<text x="804.8" y="330.3" font-family="Liberation Sans" font-size="11" fill="#8c8c8c" text-anchor="middle">+30<tspan font-size="8" dx="1.2" dy="-4">°</tspan></text>
<text x="707.1" y="330.3" font-family="Liberation Sans" font-size="11" fill="#8c8c8c" text-anchor="middle">+60<tspan font-size="8" dx="1.2" dy="-4">°</tspan></text>
<text x="609.5" y="330.3" font-family="Liberation Sans" font-size="11" fill="#8c8c8c" text-anchor="middle">+90<tspan font-size="8" dx="1.2" dy="-4">°</tspan></text>
<text x="511.8" y="330.3" font-family="Liberation Sans" font-size="11" fill="#8c8c8c" text-anchor="middle">+120<tspan font-size="8" dx="1.2" dy="-4">°</tspan></text>
<text x="414.1" y="330.3" font-family="Liberation Sans" font-size="11" fill="#8c8c8c" text-anchor="middle">+150<tspan font-size="8" dx="1.2" dy="-4">°</tspan></text>
<text x="316.4" y="330.3" font-family="Liberation Sans" font-size="11" fill="#8c8c8c" text-anchor="middle">+180<tspan font-size="8" dx="1.2" dy="-4">°</tspan></text>
<path d="M908.10,67.90L907.26,67.46L906.41,67.03L905.57,66.62L904.73,66.23L903.89,65.85L903.05,65.49L902.22,65.14L901.38,64.82L900.54,64.51L899.70,64.23L898.86,63.96L898.02,63.71L897.18,63.48L896.33,63.28L895.48,63.09L894.63,62.93L893.77,62.78L892.91,62.66L892.04,62.57L891.17,62.49L890.28,62.44L889.40,62.41L888.50,62.40L887.59,62.42L886.68,62.45L885.75,62.52L884.82,62.60L883.87,62.70L882.92,62.83L881.95,62.98L880.97,63.15L879.97,63.35L878.97,63.56L877.95,63.80L876.92,64.05L875.87,64.32L874.82,64.62L873.74,64.93L872.66,65.26L871.56,65.61L870.45,65.98L869.32,66.36L868.18,66.76L867.03,67.18L865.86,67.61L864.68,68.06L863.49,68.52L862.29,69.00L861.07,69.49L859.84,69.99L858.60,70.50L857.35,71.03L856.08,71.57L854.81,72.12L853.52,72.68L852.22,73.25L850.91,73.84L849.60,74.43L848.27,75.03L846.93,75.64L845.59,76.26L844.23,76.89L842.87,77.52L841.50,78.17L840.12,78.82L838.73,79.47L837.34,80.14L835.94,80.81L834.53,81.49L833.12,82.17L831.69,82.86L830.27,83.56L828.84,84.26L827.40,84.97L825.95,85.68L824.50,86.40L823.05,87.12L821.59,87.84L820.13,88.58L818.66,89.31L817.19,90.05L815.71,90.79L814.24,91.54L812.75,92.29L811.27,93.04L809.78,93.80L808.29,94.56L806.79,95.33L805.30,96.10L803.80,96.87L802.30,97.64L800.79,98.42L799.29,99.19L797.78,99.98L796.27,100.76L794.76,101.55L793.25,102.34L791.74,103.13L790.22,103.92L788.71,104.72L787.19,105.52L785.67,106.32L784.16,107.12L782.64,107.92L781.12,108.73L779.60,109.54L778.08,110.34L776.56,111.16L775.05,111.97L773.53,112.78L772.01,113.60L770.49,114.42L768.97,115.24L767.46,116.06L765.94,116.88L764.42,117.70L762.91,118.53L761.40,119.35L759.88,120.18L758.37,121.01L756.86,121.84L755.35,122.67L753.84,123.50L752.34,124.33L750.83,125.17L749.33,126.00L747.83,126.84L746.33,127.68L744.83,128.51L743.33,129.35L741.84,130.19L740.34,131.03L738.85,131.88L737.36,132.72L735.88,133.56L734.39,134.41L732.91,135.25L731.43,136.10L729.96,136.94L728.48,137.79L727.01,138.64L725.54,139.49L724.07,140.34L722.61,141.19L721.15,142.04L719.69,142.89L718.24,143.74L716.78,144.59L715.34,145.45L713.89,146.30L712.45,147.16L711.01,148.01L709.57,148.87L708.14,149.72L706.71,150.58L705.28,151.44L703.86,152.29L702.44,153.15L701.03,154.01L699.61,154.87L698.21,155.73L696.80,156.59L695.40,157.45L694.00,158.31L692.61,159.17L691.22,160.03L689.84,160.90L688.46,161.76L687.08,162.62L685.70,163.49L684.34,164.35L682.97,165.21L681.61,166.08L680.25,166.94L678.90,167.81L677.56,168.67L676.21,169.54L674.87,170.41L673.54,171.27L672.21,172.14L670.88,173.01L669.56,173.87L668.25,174.74L666.94,175.61L665.63,176.48L664.33,177.35L663.03,178.22L661.74,179.09L660.45,179.96L659.17,180.83L657.89,181.70L656.62,182.57L655.35,183.44L654.09,184.31L652.83,185.18L651.58,186.05L650.34,186.92L649.09,187.79L647.86,188.67L646.63,189.54L645.40,190.41L644.18,191.28L642.97,192.16L641.76,193.03L640.55,193.90L639.36,194.78L638.16,195.65L636.98,196.52L635.79,197.40L634.62,198.27L633.45,199.15L632.28,200.02L631.12,200.90L629.97,201.77L628.82,202.65L627.68,203.52L626.55,204.40L625.42,205.27L624.29,206.15L623.17,207.02L622.06,207.90L620.96,208.78L619.86,209.65L618.76,210.53L617.68,211.41L616.59,212.28L615.52,213.16L614.45,214.04L613.39,214.92L612.33,215.79L611.28,216.67L610.24,217.55L609.20,218.43L608.17,219.30L607.14,220.18L606.12,221.06L605.11,221.94L604.11,222.82L603.11,223.70L602.11,224.57L601.13,225.45L600.15,226.33L599.18,227.21L598.21,228.09L597.25,228.97L596.30,229.85L595.35,230.73L594.41,231.61L593.48,232.49L592.55,233.37L591.63,234.25L590.72,235.13L589.81,236.01L588.92,236.89L588.02,237.77L587.14,238.65L586.26,239.53L585.39,240.41L584.53,241.29L583.67,242.17L582.82,243.05L581.98,243.93L581.14,244.81L580.31,245.69L579.49,246.58L578.68,247.46L577.87,248.34L577.07,249.22L576.28,250.10L575.49,250.98L574.71,251.86L573.94,252.74L573.18,253.63L572.42,254.51L571.67,255.39L570.93,256.27L570.20,257.15L569.47,258.04L568.75,258.92L568.04,259.80L567.33,260.68L566.63,261.56L565.94,262.45L565.26,263.33L564.59,264.21L563.92,265.09L563.26,265.98L562.61,266.86L561.96,267.74L561.33,268.62L560.70,269.51L560.07,270.39L559.46,271.27L558.85,272.15L558.25,273.04L557.66,273.92L557.08,274.80L556.50,275.68L555.93,276.57L555.37,277.45L554.82,278.33L554.28,279.22L553.74,280.10L553.21,280.98L552.69,281.87L552.17,282.75L551.67,283.63L551.17,284.52L550.68,285.40L550.20,286.28L549.72,287.17L549.26,288.05L548.80,288.93L548.35,289.82L547.90,290.70L547.47,291.58L547.04,292.47L546.62,293.35L546.21,294.23L545.81,295.12L545.41,296.00L545.03,296.88L544.65,297.77L544.28,298.65L543.91,299.54L543.56,300.42L543.21,301.30L542.87,302.19L542.54,303.07L542.22,303.95L541.90,304.84L541.60,305.72L541.30,306.61L541.01,307.49L540.72,308.37L540.45,309.26L540.18,310.14L539.93,311.02L539.68,311.91L539.43,312.79L539.20,313.68L538.97,314.56L538.76,315.44L538.55,316.33L538.35,317.21L538.15,318.10L537.97,318.98L537.79,319.86L537.62,320.75L537.46,321.63L537.31,322.52L537.17,323.40L537.03,324.28L536.90,325.17L536.78,326.05L536.67,326.93L536.57,327.82L536.48,328.70L536.39,329.59L536.31,330.47L536.24,331.35L536.18,332.24L536.13,333.12L536.08,334.01L536.04,334.89L536.01,335.77L535.99,336.66L535.98,337.54L535.98,338.42L535.98,339.31L535.99,340.19L536.01,341.08L536.04,341.96L536.08,342.84L536.12,343.73L536.17,344.61L536.24,345.49L536.31,346.38L536.38,347.26L536.47,348.14L536.56,349.03L536.67,349.91L536.78,350.79L536.89,351.68L537.02,352.56L537.16,353.44L537.30,354.33L537.45,355.21L537.61,356.09L537.78,356.98L537.95,357.86L538.14,358.74L538.33,359.63L538.53,360.51L538.74,361.39L538.95,362.28L539.18,363.16L539.41,364.04L539.65,364.93L539.90,365.81L540.16,366.69L540.42,367.57L540.70,368.46L540.98,369.34L541.27,370.22L541.56,371.11L541.87,371.99L542.18,372.87L542.50,373.75L542.83,374.64L543.17,375.52L543.52,376.40L543.87,377.28L544.23,378.16L544.60,379.05L544.98,379.93L545.36,380.81L545.76,381.69L546.16,382.58L546.57,383.46L546.98,384.34L547.41,385.22L547.84,386.10L548.28,386.98L548.73,387.87L549.19,388.75L549.65,389.63L550.12,390.51L550.60,391.39L551.09,392.27L551.58,393.15L552.09,394.04L552.60,394.92L553.12,395.80L553.64,396.68L554.18,397.56L554.72,398.44L555.27,399.32L555.82,400.20L556.39,401.08L556.96,401.96L557.54,402.84L558.13,403.72L558.72,404.60L559.33,405.48L559.94,406.36L560.55,407.24L561.18,408.12L561.81,409.00L562.45,409.88L563.10,410.76L563.75,411.64L564.42,412.52L565.09,413.40L565.76,414.28L566.45,415.16L567.14,416.04L567.84,416.91L568.55,417.79L569.26,418.67L569.98,419.55L570.71,420.43L571.44,421.31L572.19,422.18L572.94,423.06L573.69,423.94L574.46,424.82L575.23,425.69L576.01,426.57L576.79,427.45L577.58,428.33L578.38,429.20L579.19,430.08L580.00,430.96L580.82,431.83L581.65,432.71L582.48,433.59L583.32,434.46L584.17,435.34L585.03,436.21L585.89,437.09L586.76,437.96L587.63,438.84L588.51,439.71L589.40,440.59L590.30,441.46L591.20,442.34L592.11,443.21L593.02,444.09L593.94,444.96L594.87,445.83L595.80,446.71L596.74,447.58L597.69,448.45L598.64,449.33L599.60,450.20L600.57,451.07L601.54,451.94L602.52,452.82M936.70,45.90L935.60,45.23L934.49,44.57L933.39,43.90L932.29,43.24L931.19,42.57L930.10,41.91L929.01,41.25L927.92,40.60L926.84,39.94L925.77,39.29L924.70,38.64L923.64,38.00L922.59,37.36L921.55,36.73L920.52,36.11L919.52,35.49L918.54,34.89L917.59,34.30L916.68,33.72L915.82,33.18L915.03,32.66L914.35,32.18L913.79,31.76L913.42,31.40L913.29,31.13L913.47,30.97L890.94,30.93L891.37,31.02L891.46,31.23L891.28,31.53L890.91,31.92L890.38,32.36L889.74,32.86L889.03,33.39L888.26,33.95L887.44,34.53L886.59,35.12L885.72,35.73L884.82,36.35L883.91,36.98L882.99,37.61L882.06,38.25L881.12,38.90L880.17,39.55L879.22,40.20L878.26,40.85L877.30,41.51L876.34,42.17L875.37,42.83L874.40,43.50L873.42,44.16L872.45,44.83L871.47,45.50L870.50,46.16L869.52,46.83L868.54,47.50L867.56,48.17L866.58,48.85L865.59,49.52L864.61,50.19L863.63,50.86L862.65,51.54L861.66,52.21L860.68,52.89L859.70,53.56L858.71,54.24L857.73,54.91L856.75,55.59L855.77,56.26L854.78,56.94L853.80,57.62L852.82,58.29L851.84,58.97L850.85,59.65L849.87,60.33L848.89,61.00L847.91,61.68L846.93,62.36L845.95,63.04L844.98,63.72L844.00,64.40L843.02,65.07L842.04,65.75L841.07,66.43L840.09,67.11L839.12,67.79L838.14,68.47L837.17,69.15L836.19,69.83L835.22,70.51L834.25,71.18L833.28,71.86L832.31,72.54L831.34,73.22L830.37,73.90L829.41,74.58L828.44,75.26L827.47,75.94L826.51,76.62L825.55,77.30L824.58,77.98L823.62,78.66L822.66,79.34L821.70,80.02L820.74,80.70L819.79,81.38L818.83,82.06L817.87,82.74L816.92,83.42L815.96,84.10L815.01,84.79L814.06,85.47L813.11,86.15L812.16,86.83L811.21,87.51L810.27,88.19L809.32,88.87L808.38,89.55L807.43,90.23L806.49,90.91L805.55,91.59L804.61,92.27L803.67,92.95L802.74,93.63L801.80,94.31L800.87,94.99L799.93,95.68L799.00,96.36L798.07,97.04L797.14,97.72L796.21,98.40L795.29,99.08L794.36,99.76L793.44,100.44L792.52,101.12L791.60,101.80L790.68,102.48L789.76,103.17L788.85,103.85L787.93,104.53L787.02,105.21L786.11,105.89L785.20,106.57L784.29,107.25L783.38,107.93L782.47,108.61L781.57,109.30L780.67,109.98L779.77,110.66L778.87,111.34L777.97,112.02L777.08,112.70L776.18,113.38L775.29,114.06L774.40,114.74L773.51,115.43L772.62,116.11L771.74,116.79L770.85,117.47L769.97,118.15L769.09,118.83L768.21,119.51L767.33,120.20L766.46,120.88L765.58,121.56L764.71,122.24L763.84,122.92L762.98,123.60L762.11,124.28L761.24,124.96L760.38,125.65L759.52,126.33L758.66,127.01L757.81,127.69L756.95,128.37L756.10,129.05L755.25,129.73L754.40,130.42L753.55,131.10L752.71,131.78L751.86,132.46L751.02,133.14L750.18,133.82L749.35,134.50L748.51,135.19L747.68,135.87L746.85,136.55L746.02,137.23L745.19,137.91L744.37,138.59L743.55,139.27L742.73,139.96L741.91,140.64L741.09,141.32L740.28,142.00L739.46,142.68L738.66,143.36L737.85,144.04L737.04,144.73L736.24,145.41L735.44,146.09L734.64,146.77L733.84,147.45L733.05,148.13L732.26,148.81L731.47,149.50L730.68,150.18L729.89,150.86L729.11,151.54L728.33,152.22L727.55,152.90L726.78,153.59L726.00,154.27L725.23,154.95L724.46,155.63L723.70,156.31L722.93,156.99L722.17,157.67L721.41,158.36L720.65,159.04L719.90,159.72L719.15,160.40L718.40,161.08L717.65,161.76L716.90,162.45L716.16,163.13L715.42,163.81L714.68,164.49L713.95,165.17L713.22,165.85L712.49,166.53L711.76,167.22L711.04,167.90L710.31,168.58L709.59,169.26L708.88,169.94L708.16,170.62L707.45,171.31L706.74,171.99L706.03,172.67L705.33,173.35L704.63,174.03L703.93,174.71L703.23,175.40L702.54,176.08L701.85,176.76L701.16,177.44L700.47,178.12L699.79,178.80L699.11,179.49L698.43,180.17L697.76,180.85L697.09,181.53L696.42,182.21L695.75,182.89L695.09,183.57L694.43,184.26L693.77,184.94L693.11,185.62L692.46,186.30L691.81,186.98L691.16,187.66L690.52,188.35L689.88,189.03L689.24,189.71L688.60,190.39L687.97,191.07L687.34,191.75L686.71,192.44L686.09,193.12L685.47,193.80L684.85,194.48L684.23,195.16L683.62,195.84L683.01,196.53L682.40,197.21L681.80,197.89L681.20,198.57L680.60,199.25L680.00,199.93L679.41,200.62L678.82,201.30L678.24,201.98L677.65,202.66L677.07,203.34L676.49,204.02L675.92,204.71L675.35,205.39L674.78,206.07L674.22,206.75L673.65,207.43L673.09,208.11L672.54,208.80L671.98,209.48L671.43,210.16L670.89,210.84L670.34,211.52L669.80,212.20L669.27,212.89L668.73,213.57L668.20,214.25L667.67,214.93L667.15,215.61L666.62,216.29L666.11,216.98L665.59,217.66L665.08,218.34L664.57,219.02L664.06,219.70L663.56,220.38L663.06,221.07L662.56,221.75L662.07,222.43L661.58,223.11L661.09,223.79L660.61,224.47L660.13,225.16L659.65,225.84L659.18,226.52L658.70,227.20L658.24,227.88L657.77,228.56L657.31,229.25L656.85,229.93L656.40,230.61L655.95,231.29L655.50,231.97L655.05,232.66L654.61,233.34L654.18,234.02L653.74,234.70L653.31,235.38L652.88,236.06L652.46,236.75L652.03,237.43L651.62,238.11L651.20,238.79L650.79,239.47L650.38,240.15L649.98,240.84L649.58,241.52L649.18,242.20L648.78,242.88L648.39,243.56L648.00,244.24L647.62,244.93L647.24,245.61L646.86,246.29L646.49,246.97L646.11,247.65L645.75,248.33L645.38,249.02L645.02,249.70L644.66,250.38L644.31,251.06L643.96,251.74L643.61,252.42L643.27,253.11L642.93,253.79L642.59,254.47L642.26,255.15L641.93,255.83L641.61,256.51L641.28,257.20L640.96,257.88L640.65,258.56L640.34,259.24L640.03,259.92L639.72,260.61L639.42,261.29L639.12,261.97L638.83,262.65L638.54,263.33L638.25,264.01L637.96,264.70L637.68,265.38L637.41,266.06L637.13,266.74L636.86,267.42L636.60,268.10L636.33,268.79L636.07,269.47L635.82,270.15L635.57,270.83L635.32,271.51L635.07,272.19L634.83,272.88L634.59,273.56L634.36,274.24L634.13,274.92L633.90,275.60L633.68,276.28L633.46,276.97L633.24,277.65L633.03,278.33L632.82,279.01L632.61,279.69L632.41,280.38L632.21,281.06L632.02,281.74L631.82,282.42L631.64,283.10L631.45,283.78L631.27,284.47L631.09,285.15L630.92,285.83L630.75,286.51L630.59,287.19L630.42,287.87L630.26,288.56L630.11,289.24L629.96,289.92L629.81,290.60L629.67,291.28L629.52,291.96L629.39,292.65L629.25,293.33L629.12,294.01L629.00,294.69L628.88,295.37L628.76,296.06L628.64,296.74L628.53,297.42L628.42,298.10L628.32,298.78L628.22,299.46L628.12,300.15L628.03,300.83L627.94,301.51L627.85,302.19L627.77,302.87L627.69,303.55L627.62,304.24L627.55,304.92L627.48,305.60L627.41,306.28L627.35,306.96L627.30,307.64L627.24,308.33L627.19,309.01L627.15,309.69L627.11,310.37L627.07,311.05L627.03,311.74L627.00,312.42L626.98,313.10L626.95,313.78L626.93,314.46L626.92,315.14L626.90,315.83L626.90,316.51L626.89,317.19L626.89,317.87L626.89,318.55L626.90,319.23L626.91,319.92L626.92,320.60L626.94,321.28L626.96,321.96L626.98,322.64L627.01,323.32L627.04,324.01L627.08,324.69L627.11,325.37L627.16,326.05L627.20,326.73L627.25,327.41L627.31,328.10L627.36,328.78L627.43,329.46L627.49,330.14L627.56,330.82L627.63,331.51L627.71,332.19L627.78,332.87L627.87,333.55L627.95,334.23L628.04,334.91L628.14,335.60L628.24,336.28L628.34,336.96L628.44,337.64L628.55,338.32L628.66,339.00L628.78,339.69L628.90,340.37L629.02,341.05L629.15,341.73L629.28,342.41L629.41,343.09L629.55,343.78L629.69,344.46L629.84,345.14L629.98,345.82L630.14,346.50L630.29,347.19L630.45,347.87L630.62,348.55L630.78,349.23M1048.20,105.80L1046.90,104.99L1045.60,104.18L1044.30,103.37L1042.99,102.56L1041.68,101.75L1040.37,100.95L1039.06,100.14L1037.75,99.33L1036.43,98.52L1035.11,97.71L1033.79,96.91L1032.47,96.10L1031.14,95.29L1029.82,94.49L1028.49,93.68L1027.16,92.87L1025.83,92.07L1024.49,91.26L1023.16,90.46L1021.82,89.65L1020.48,88.85L1019.14,88.05L1017.80,87.24L1016.45,86.44L1015.11,85.64L1013.76,84.83L1012.42,84.03L1011.07,83.23L1009.72,82.43L1008.37,81.63L1007.02,80.83L1005.66,80.03L1004.31,79.23L1002.96,78.43L1001.60,77.63L1000.24,76.84L998.89,76.04L997.53,75.24L996.18,74.45L994.82,73.65L993.46,72.86L992.11,72.07L990.75,71.28L989.39,70.49L988.04,69.70L986.68,68.91L985.33,68.12L983.98,67.33L982.62,66.55L981.27,65.77L979.92,64.98L978.58,64.20L977.23,63.43L975.89,62.65L974.55,61.87L973.21,61.10L971.88,60.33L970.55,59.56L969.22,58.79L967.90,58.03L966.58,57.27L965.27,56.51L963.96,55.76L962.66,55.01L961.37,54.26L960.09,53.52L958.81,52.78L957.55,52.05L956.30,51.32L955.06,50.60L953.83,49.88L952.62,49.17L951.43,48.47L950.26,47.78L949.10,47.10L947.98,46.43L946.88,45.77L945.81,45.13L944.78,44.49L943.79,43.88L942.84,43.28L941.94,42.71L941.10,42.15L940.33,41.62L939.63,41.12L939.01,40.65L938.50,40.22L938.08,39.82L937.79,39.46L937.63,39.16L937.62,38.90L937.78,38.69M867.29,38.54L868.39,38.44L869.31,38.41L870.05,38.43L870.63,38.52L871.04,38.66L871.30,38.86L871.42,39.11L871.41,39.42L871.28,39.77L871.06,40.16L870.73,40.59L870.33,41.05L869.85,41.55L869.31,42.07L868.72,42.62L868.07,43.20L867.38,43.79L866.65,44.41L865.89,45.03L865.10,45.68L864.29,46.34L863.45,47.00L862.59,47.69L861.71,48.38L860.81,49.07L859.90,49.78L858.98,50.49L858.05,51.22L857.10,51.94L856.15,52.67L855.19,53.41L854.22,54.15L853.24,54.90L852.26,55.65L851.27,56.40L850.28,57.16L849.28,57.92L848.28,58.68L847.28,59.45L846.27,60.22L845.26,60.99L844.24,61.76L843.23,62.54L842.21,63.31L841.19,64.09L840.17,64.87L839.15,65.65L838.12,66.44L837.10,67.22L836.07,68.01L835.04,68.80L834.01,69.58L832.99,70.37L831.96,71.16L830.93,71.95L829.90,72.75L828.87,73.54L827.84,74.33L826.81,75.13L825.78,75.93L824.75,76.72L823.73,77.52L822.70,78.32L821.67,79.11L820.64,79.91L819.62,80.71L818.59,81.51L817.57,82.31L816.54,83.11L815.52,83.92L814.50,84.72L813.48,85.52L812.46,86.32L811.44,87.13L810.42,87.93L809.40,88.73L808.39,89.54L807.38,90.34L806.36,91.15L805.35,91.95L804.34,92.76L803.33,93.57L802.32,94.37L801.32,95.18L800.31,95.98L799.31,96.79L798.31,97.60L797.31,98.41L796.31,99.21L795.31,100.02L794.32,100.83L793.33,101.64L792.34,102.45L791.35,103.26L790.36,104.07L789.37,104.87L788.39,105.68L787.41,106.49L786.43,107.30L785.45,108.11L784.47,108.92L783.50,109.73L782.53,110.54L781.56,111.35L780.59,112.16L779.62,112.98L778.66,113.79L777.70,114.60L776.74,115.41L775.78,116.22L774.83,117.03L773.87,117.84L772.92,118.65L771.98,119.47L771.03,120.28L770.09,121.09L769.15,121.90L768.21,122.71L767.27,123.53L766.34,124.34L765.41,125.15L764.48,125.96L763.55,126.77L762.63,127.59L761.71,128.40L760.79,129.21L759.87,130.03L758.96,130.84L758.05,131.65L757.14,132.46L756.23,133.28L755.33,134.09L754.43,134.90L753.53,135.72L752.64,136.53L751.74,137.34L750.86,138.16L749.97,138.97L749.09,139.79L748.21,140.60L747.33,141.41L746.45,142.23L745.58,143.04L744.71,143.85L743.84,144.67L742.98,145.48L742.12,146.30L741.26,147.11L740.41,147.93L739.56,148.74L738.71,149.55L737.86,150.37L737.02,151.18L736.18,152.00L735.35,152.81L734.52,153.63L733.69,154.44L732.86,155.25L732.04,156.07L731.22,156.88L730.40,157.70L729.59,158.51L728.77,159.33L727.97,160.14L727.16,160.96L726.36,161.77L725.57,162.59L724.77,163.40L723.98,164.22L723.19,165.03L722.41,165.85L721.63,166.66L720.85,167.48L720.08,168.29L719.31,169.11L718.54,169.92L717.78,170.74L717.02,171.55L716.26,172.37L715.51,173.18L714.76,174.00L714.02,174.81L713.27,175.63L712.54,176.45L711.80,177.26L711.07,178.08L710.34,178.89L709.62,179.71L708.90,180.52L708.18,181.34L707.47,182.15L706.76,182.97L706.05,183.79L705.35,184.60L704.65,185.42L703.96,186.23L703.27,187.05L702.58,187.86L701.90,188.68L701.22,189.49L700.54,190.31L699.87,191.13L699.21,191.94L698.54,192.76L697.88,193.57L697.23,194.39L696.57,195.21L695.93,196.02L695.28,196.84L694.64,197.65L694.00,198.47L693.37,199.29L692.74,200.10L692.12,200.92L691.50,201.73L690.88,202.55L690.27,203.36L689.66,204.18L689.06,205.00L688.46,205.81L687.86,206.63L687.27,207.45L686.68,208.26L686.10,209.08L685.52,209.89L684.94,210.71L684.37,211.53L683.80,212.34L683.24,213.16L682.68,213.97L682.13,214.79L681.57,215.61L681.03,216.42L680.49,217.24L679.95,218.06L679.41,218.87L678.89,219.69L678.36,220.50L677.84,221.32L677.32,222.14L676.81,222.95L676.30,223.77L675.80,224.59L675.30,225.40L674.80,226.22L674.31,227.03L673.83,227.85L673.34,228.67L672.87,229.48L672.39,230.30L671.93,231.12L671.46,231.93L671.00,232.75L670.55,233.57L670.09,234.38L669.65,235.20L669.20,236.01L668.77,236.83L668.33,237.65L667.90,238.46L667.48,239.28L667.06,240.10L666.64,240.91L666.23,241.73L665.83,242.55L665.43,243.36L665.03,244.18L664.64,245.00L664.25,245.81L663.86,246.63L663.48,247.45L663.11,248.26L662.74,249.08L662.37,249.90L662.01,250.71L661.66,251.53L661.31,252.34L660.96,253.16L660.62,253.98L660.28,254.79L659.94,255.61L659.62,256.43L659.29,257.24L658.97,258.06L658.66,258.88L658.35,259.69L658.04,260.51L657.74,261.33L657.45,262.14L657.15,262.96L656.87,263.78L656.59,264.59L656.31,265.41L656.04,266.23L655.77,267.04L655.51,267.86L655.25,268.68L654.99,269.49L654.74,270.31L654.50,271.13L654.26,271.94L654.03,272.76L653.80,273.58L653.57,274.39L653.35,275.21L653.14,276.03L652.92,276.84L652.72,277.66L652.52,278.48L652.32,279.29L652.13,280.11L651.94,280.93L651.76,281.74L651.58,282.56L651.41,283.38L651.24,284.19L651.08,285.01L650.92,285.83L650.77,286.64L650.62,287.46L650.48,288.28L650.34,289.09L650.20,289.91L650.07,290.73L649.95,291.55L649.83,292.36L649.71,293.18L649.60,294.00L649.50,294.81L649.40,295.63L649.30,296.45L649.21,297.26L649.13,298.08L649.05,298.90L648.97,299.71L648.90,300.53L648.83,301.35L648.77,302.16L648.72,302.98L648.66,303.80L648.62,304.61L648.57,305.43L648.54,306.25L648.51,307.06L648.48,307.88L648.46,308.70L648.44,309.51L648.42,310.33L648.42,311.15L648.41,311.96L648.42,312.78L648.42,313.60L648.43,314.41L648.45,315.23L648.47,316.05L648.50,316.86L648.53,317.68L648.56,318.50L648.60,319.32L648.65,320.13L648.70,320.95L648.75,321.77L648.81,322.58L648.88,323.40L648.95,324.22L649.02,325.03L649.10,325.85L649.19,326.67L649.28,327.48L649.37,328.30L649.47,329.12L649.57,329.93L649.68,330.75L649.79,331.57L649.91,332.38L650.04,333.20L650.16,334.02L650.30,334.83L650.43,335.65L650.58,336.47L650.72,337.28L650.88,338.10L651.03,338.92L651.19,339.73L651.36,340.55L651.53,341.37L651.71,342.18L651.89,343.00L652.07,343.82L652.26,344.64L652.46,345.45L652.66,346.27L652.86,347.09L653.07,347.90L653.29,348.72L653.51,349.54L653.73,350.35L653.96,351.17L654.19,351.99L654.43,352.80L654.67,353.62L654.92,354.44L655.17,355.25L655.43,356.07L655.69,356.89L655.96,357.70M966.80,85.70L965.62,84.87L964.45,84.03L963.28,83.20L962.10,82.37L960.93,81.54L959.75,80.71L958.58,79.89L957.41,79.06L956.24,78.24L955.07,77.42L953.90,76.60L952.73,75.79L951.56,74.97L950.40,74.16L949.24,73.35L948.07,72.55L946.91,71.74L945.76,70.94L944.60,70.15L943.45,69.35L942.30,68.56L941.15,67.77L940.01,66.99L938.86,66.21L937.73,65.44L936.59,64.67L935.46,63.90L934.34,63.14L933.21,62.39L932.10,61.64L930.98,60.90L929.88,60.16L928.78,59.43L927.68,58.71L926.59,58.00L925.51,57.30L924.43,56.61L923.37,55.92L922.31,55.25L921.26,54.59L920.21,53.94L919.18,53.31L918.15,52.69L917.14,52.08L916.13,51.50L915.14,50.93L914.16,50.38L913.18,49.85L912.22,49.34L911.27,48.86L910.33,48.40L909.40,47.97L908.48,47.57L907.57,47.20L906.67,46.87L905.78,46.56L904.89,46.29L904.01,46.07L903.13,45.87L902.26,45.72L901.39,45.61L900.51,45.54L899.64,45.52L898.75,45.53L897.86,45.59L896.96,45.69L896.05,45.83L895.13,46.01L894.19,46.23L893.23,46.49L892.26,46.79L891.28,47.12L890.27,47.48L889.25,47.87L888.21,48.29L887.15,48.74L886.07,49.22L884.98,49.72L883.86,50.24L882.74,50.79L881.59,51.35L880.43,51.94L879.26,52.54L878.07,53.15L876.87,53.78L875.66,54.43L874.43,55.09L873.19,55.76L871.94,56.44L870.69,57.13L869.42,57.83L868.14,58.54L866.85,59.26L865.56,59.98L864.26,60.72L862.95,61.46L861.64,62.20L860.31,62.96L858.99,63.71L857.65,64.48L856.32,65.25L854.97,66.02L853.63,66.80L852.28,67.58L850.92,68.37L849.56,69.16L848.20,69.95L846.83,70.75L845.47,71.55L844.10,72.35L842.72,73.15L841.35,73.96L839.97,74.77L838.59,75.59L837.21,76.40L835.83,77.22L834.44,78.04L833.06,78.86L831.67,79.68L830.28,80.51L828.89,81.34L827.50,82.16L826.11,82.99L824.72,83.83L823.33,84.66L821.94,85.49L820.55,86.33L819.16,87.17L817.77,88.00L816.38,88.84L814.99,89.68L813.60,90.53L812.21,91.37L810.82,92.21L809.43,93.06L808.04,93.90L806.66,94.75L805.27,95.60L803.89,96.44L802.50,97.29L801.12,98.14L799.74,98.99L798.35,99.84L796.97,100.69L795.60,101.55L794.22,102.40L792.84,103.25L791.47,104.11L790.10,104.96L788.73,105.82L787.36,106.67L785.99,107.53L784.62,108.38L783.26,109.24L781.90,110.10L780.54,110.96L779.18,111.81L777.82,112.67L776.47,113.53L775.12,114.39L773.77,115.25L772.42,116.11L771.07,116.97L769.73,117.84L768.39,118.70L767.05,119.56L765.72,120.42L764.38,121.28L763.05,122.15L761.72,123.01L760.40,123.87L759.07,124.74L757.75,125.60L756.44,126.46L755.12,127.33L753.81,128.19L752.50,129.06L751.19,129.92L749.89,130.79L748.59,131.66L747.29,132.52L746.00,133.39L744.71,134.25L743.42,135.12L742.14,135.99L740.85,136.85L739.58,137.72L738.30,138.59L737.03,139.46L735.76,140.32L734.49,141.19L733.23,142.06L731.97,142.93L730.72,143.80L729.47,144.67L728.22,145.53L726.98,146.40L725.74,147.27L724.50,148.14L723.26,149.01L722.04,149.88L720.81,150.75L719.59,151.62L718.37,152.49L717.15,153.36L715.94,154.23L714.74,155.10L713.53,155.97L712.34,156.84L711.14,157.71L709.95,158.58L708.76,159.45L707.58,160.32L706.40,161.19L705.23,162.07L704.06,162.94L702.89,163.81L701.73,164.68L700.57,165.55L699.42,166.42L698.27,167.29L697.12,168.17L695.98,169.04L694.85,169.91L693.72,170.78L692.59,171.65L691.47,172.53L690.35,173.40L689.24,174.27L688.13,175.14L687.02,176.02L685.92,176.89L684.83,177.76L683.74,178.64L682.65,179.51L681.57,180.38L680.49,181.25L679.42,182.13L678.36,183.00L677.29,183.87L676.24,184.75L675.18,185.62L674.14,186.49L673.10,187.37L672.06,188.24L671.03,189.11L670.00,189.99L668.98,190.86L667.96,191.74L666.95,192.61L665.94,193.48L664.94,194.36L663.94,195.23L662.95,196.11L661.96,196.98L660.98,197.85L660.01,198.73L659.04,199.60L658.07,200.48L657.11,201.35L656.16,202.22L655.21,203.10L654.26,203.97L653.32,204.85L652.39,205.72L651.46,206.60L650.54,207.47L649.62,208.35L648.71,209.22L647.81,210.10L646.91,210.97L646.01,211.85L645.12,212.72L644.24,213.60L643.36,214.47L642.49,215.35L641.62,216.22L640.76,217.10L639.91,217.97L639.06,218.85L638.21,219.72L637.38,220.60L636.54,221.47L635.72,222.35L634.90,223.22L634.08,224.10L633.28,224.97L632.47,225.85L631.68,226.72L630.88,227.60L630.10,228.47L629.32,229.35L628.55,230.22L627.78,231.10L627.02,231.98L626.27,232.85L625.52,233.73L624.77,234.60L624.04,235.48L623.31,236.35L622.58,237.23L621.86,238.11L621.15,238.98L620.45,239.86L619.75,240.73L619.05,241.61L618.37,242.48L617.68,243.36L617.01,244.24L616.34,245.11L615.68,245.99L615.02,246.86L614.37,247.74L613.73,248.62L613.09,249.49L612.46,250.37L611.84,251.24L611.22,252.12L610.61,253.00L610.00,253.87L609.40,254.75L608.81,255.62L608.23,256.50L607.65,257.38L607.07,258.25L606.51,259.13L605.95,260.00L605.40,260.88L604.85,261.76L604.31,262.63L603.78,263.51L603.25,264.39L602.73,265.26L602.21,266.14L601.71,267.01L601.21,267.89L600.71,268.77L600.22,269.64L599.74,270.52L599.27,271.40L598.80,272.27L598.34,273.15L597.89,274.03L597.44,274.90L597.00,275.78L596.57,276.65L596.14,277.53L595.72,278.41L595.31,279.28L594.90,280.16L594.50,281.04L594.11,281.91L593.72,282.79L593.34,283.67L592.97,284.54L592.60,285.42L592.24,286.30L591.89,287.17L591.54,288.05L591.20,288.93L590.87,289.80L590.55,290.68L590.23,291.56L589.92,292.43L589.61,293.31L589.32,294.18L589.03,295.06L588.74,295.94L588.47,296.81L588.20,297.69L587.93,298.57L587.68,299.44L587.43,300.32L587.19,301.20L586.95,302.07L586.72,302.95L586.50,303.83L586.29,304.70L586.08,305.58L585.88,306.46L585.69,307.33L585.50,308.21L585.32,309.09L585.15,309.96L584.98,310.84L584.83,311.72L584.68,312.59L584.53,313.47L584.39,314.35L584.26,315.22L584.14,316.10L584.02,316.98L583.91,317.85L583.81,318.73L583.72,319.61L583.63,320.48L583.55,321.36L583.47,322.24L583.41,323.11L583.35,323.99L583.29,324.87L583.25,325.74L583.21,326.62L583.18,327.50L583.15,328.37L583.14,329.25L583.12,330.13L583.12,331.00L583.12,331.88L583.13,332.76L583.15,333.63L583.18,334.51L583.21,335.39L583.25,336.26L583.29,337.14L583.34,338.02L583.40,338.89L583.47,339.77L583.54,340.65L583.63,341.52L583.71,342.40L583.81,343.28L583.91,344.15L584.02,345.03L584.14,345.91L584.26,346.78L584.39,347.66L584.52,348.54L584.67,349.41L584.82,350.29L584.98,351.17L585.14,352.04L585.31,352.92L585.49,353.80L585.68,354.67L585.87,355.55L586.07,356.43L586.28,357.30L586.49,358.18L586.71,359.05L586.94,359.93L587.18,360.81L587.42,361.68L587.67,362.56L587.92,363.44L588.18,364.31L588.45,365.19L588.73,366.07L589.01,366.94L589.30,367.82L589.60,368.70L589.90,369.57L590.21,370.45L590.53,371.32L590.86,372.20L591.19,373.08L591.53,373.95L591.87,374.83L592.22,375.71L592.58,376.58L592.95,377.46L593.32,378.33L593.70,379.21L594.09,380.09L594.48,380.96L594.88,381.84L595.28,382.72L595.70,383.59L596.12,384.47L596.54,385.34L596.98,386.22L597.42,387.10L597.86,387.97L598.32,388.85L598.78,389.72L599.24,390.60L599.72,391.48L600.20,392.35L600.68,393.23L601.18,394.10L601.68,394.98L602.18,395.86L602.70,396.73L603.22,397.61L603.74,398.48L604.27,399.36L604.81,400.24L605.36,401.11L605.91,401.99L606.47,402.86L607.04,403.74L607.61,404.61L608.19,405.49L608.77,406.37L609.36,407.24L609.96,408.12L610.57,408.99L611.18,409.87L611.79,410.74M1007.60,94.80L1006.56,93.95L1005.52,93.10L1004.48,92.25L1003.44,91.41L1002.40,90.56L1001.35,89.72L1000.31,88.87L999.27,88.03L998.22,87.19L997.18,86.35L996.13,85.51L995.09,84.67L994.04,83.83L993.00,82.99L991.95,82.16L990.91,81.32L989.87,80.49L988.82,79.66L987.78,78.83L986.74,78.01L985.70,77.18L984.67,76.36L983.63,75.54L982.60,74.72L981.56,73.90L980.53,73.09L979.51,72.27L978.48,71.46L977.46,70.66L976.44,69.85L975.43,69.05L974.42,68.25L973.42,67.46L972.42,66.67L971.42,65.88L970.43,65.10L969.45,64.32L968.48,63.54L967.51,62.78L966.55,62.01L965.60,61.25L964.66,60.50L963.73,59.75L962.82,59.02L961.91,58.28L961.02,57.56L960.15,56.84L959.29,56.14L958.45,55.44L957.63,54.76L956.84,54.08L956.06,53.42L955.32,52.77L954.60,52.13L953.91,51.51L953.26,50.91L952.65,50.32L952.07,49.76L951.55,49.21L951.07,48.69L950.64,48.19L950.28,47.71L949.98,47.26L949.75,46.85L949.59,46.46L949.52,46.11L949.53,45.79L949.64,45.51L949.85,45.26L950.17,45.06L950.59,44.90L951.14,44.78L951.81,44.71L952.60,44.68L953.52,44.69L954.57,44.75L955.75,44.85L957.07,44.99M846.08,45.18L846.23,45.41L846.26,45.68L846.17,45.98L845.98,46.32L845.69,46.70L845.31,47.10L844.84,47.54L844.29,48.00L843.68,48.49L842.99,49.01L842.24,49.55L841.44,50.11L840.59,50.68L839.68,51.28L838.74,51.90L837.76,52.53L836.74,53.17L835.68,53.83L834.60,54.50L833.49,55.18L832.35,55.87L831.19,56.58L830.01,57.29L828.81,58.01L827.59,58.74L826.36,59.47L825.11,60.22L823.85,60.97L822.57,61.72L821.28,62.49L819.98,63.25L818.67,64.02L817.36,64.80L816.03,65.58L814.70,66.37L813.35,67.16L812.01,67.95L810.65,68.75L809.29,69.55L807.93,70.35L806.56,71.16L805.19,71.97L803.81,72.78L802.43,73.59L801.05,74.41L799.66,75.23L798.28,76.05L796.89,76.87L795.49,77.69L794.10,78.52L792.70,79.35L791.31,80.18L789.91,81.01L788.51,81.84L787.11,82.68L785.71,83.51L784.31,84.35L782.91,85.19L781.51,86.03L780.11,86.87L778.71,87.71L777.31,88.55L775.91,89.40L774.52,90.24L773.12,91.09L771.72,91.93L770.33,92.78L768.93,93.63L767.54,94.48L766.15,95.33L764.76,96.18L763.37,97.03L761.98,97.88L760.60,98.73L759.21,99.59L757.83,100.44L756.45,101.30L755.07,102.15L753.70,103.01L752.32,103.86L750.95,104.72L749.58,105.58L748.22,106.44L746.85,107.29L745.49,108.15L744.13,109.01L742.77,109.87L741.42,110.73L740.07,111.59L738.72,112.45L737.37,113.31L736.03,114.18L734.69,115.04L733.35,115.90L732.02,116.76L730.68,117.62L729.36,118.49L728.03,119.35L726.71,120.22L725.39,121.08L724.07,121.94L722.76,122.81L721.45,123.67L720.15,124.54L718.85,125.40L717.55,126.27L716.25,127.14L714.96,128.00L713.68,128.87L712.39,129.74L711.11,130.60L709.84,131.47L708.56,132.34L707.30,133.20L706.03,134.07L704.77,134.94L703.51,135.81L702.26,136.68L701.01,137.54L699.77,138.41L698.53,139.28L697.29,140.15L696.06,141.02L694.83,141.89L693.61,142.76L692.39,143.63L691.17,144.50L689.96,145.37L688.76,146.24L687.55,147.11L686.36,147.98L685.16,148.85L683.98,149.72L682.79,150.59L681.61,151.46L680.44,152.33L679.27,153.20L678.10,154.07L676.94,154.94L675.79,155.81L674.63,156.69L673.49,157.56L672.35,158.43L671.21,159.30L670.08,160.17L668.95,161.04L667.83,161.92L666.71,162.79L665.60,163.66L664.50,164.53L663.39,165.41L662.30,166.28L661.21,167.15L660.12,168.02L659.04,168.90L657.96,169.77L656.89,170.64L655.83,171.51L654.77,172.39L653.71,173.26L652.66,174.13L651.62,175.01L650.58,175.88L649.55,176.75L648.52,177.63L647.50,178.50L646.48,179.37L645.47,180.25L644.46,181.12L643.46,182.00L642.47,182.87L641.48,183.74L640.49,184.62L639.52,185.49L638.54,186.37L637.58,187.24L636.62,188.11L635.66,188.99L634.71,189.86L633.77,190.74L632.83,191.61L631.90,192.49L630.98,193.36L630.06,194.23L629.14,195.11L628.24,195.98L627.33,196.86L626.44,197.73L625.55,198.61L624.66,199.48L623.79,200.36L622.91,201.23L622.05,202.11L621.19,202.98L620.34,203.86L619.49,204.73L618.65,205.61L617.81,206.48L616.98,207.36L616.16,208.23L615.34,209.11L614.53,209.98L613.73,210.86L612.93,211.73L612.14,212.61L611.36,213.49L610.58,214.36L609.81,215.24L609.04,216.11L608.28,216.99L607.53,217.86L606.78,218.74L606.04,219.61L605.31,220.49L604.58,221.37L603.86,222.24L603.15,223.12L602.44,223.99L601.74,224.87L601.05,225.74L600.36,226.62L599.68,227.50L599.01,228.37L598.34,229.25L597.68,230.12L597.03,231.00L596.38,231.88L595.74,232.75L595.10,233.63L594.48,234.50L593.86,235.38L593.24,236.26L592.64,237.13L592.04,238.01L591.44,238.89L590.86,239.76L590.28,240.64L589.70,241.51L589.14,242.39L588.58,243.27L588.03,244.14L587.48,245.02L586.95,245.90L586.41,246.77L585.89,247.65L585.37,248.52L584.86,249.40L584.36,250.28L583.86,251.15L583.37,252.03L582.89,252.91L582.42,253.78L581.95,254.66L581.49,255.54L581.03,256.41L580.59,257.29L580.15,258.17L579.71,259.04L579.29,259.92L578.87,260.80L578.46,261.67L578.05,262.55L577.66,263.43L577.27,264.30L576.88,265.18L576.51,266.06L576.14,266.93L575.78,267.81L575.42,268.69L575.08,269.56L574.74,270.44L574.41,271.32L574.08,272.19L573.76,273.07L573.45,273.95L573.15,274.82L572.85,275.70L572.56,276.58L572.28,277.45L572.01,278.33L571.74,279.21L571.48,280.08L571.23,280.96L570.98,281.84L570.75,282.72L570.51,283.59L570.29,284.47L570.08,285.35L569.87,286.22L569.67,287.10L569.47,287.98L569.29,288.85L569.11,289.73L568.93,290.61L568.77,291.48L568.61,292.36L568.46,293.24L568.32,294.12L568.19,294.99L568.06,295.87L567.94,296.75L567.83,297.62L567.72,298.50L567.62,299.38L567.53,300.25L567.45,301.13L567.37,302.01L567.30,302.89L567.24,303.76L567.19,304.64L567.14,305.52L567.10,306.39L567.07,307.27L567.05,308.15L567.03,309.02L567.02,309.90L567.02,310.78L567.02,311.66L567.04,312.53L567.06,313.41L567.09,314.29L567.12,315.16L567.16,316.04L567.21,316.92L567.27,317.80L567.33,318.67L567.41,319.55L567.49,320.43L567.57,321.30L567.67,322.18L567.77,323.06L567.88,323.93L567.99,324.81L568.12,325.69L568.25,326.57L568.39,327.44L568.53,328.32L568.69,329.20L568.85,330.07L569.02,330.95L569.19,331.83L569.37,332.70L569.56,333.58L569.76,334.46L569.97,335.34L570.18,336.21L570.40,337.09L570.62,337.97L570.86,338.84L571.10,339.72L571.35,340.60L571.61,341.47L571.87,342.35L572.14,343.23L572.42,344.11L572.70,344.98L572.99,345.86L573.29,346.74L573.60,347.61L573.92,348.49L574.24,349.37L574.57,350.24L574.90,351.12L575.25,352.00L575.60,352.88L575.95,353.75L576.32,354.63L576.69,355.51L577.07,356.38L577.46,357.26L577.85,358.14L578.25,359.01L578.66,359.89L579.07,360.77L579.50,361.64L579.92,362.52L580.36,363.40L580.80,364.27L581.26,365.15L581.71,366.03L582.18,366.91L582.65,367.78L583.13,368.66L583.61,369.54L584.11,370.41L584.61,371.29L585.11,372.17L585.63,373.04L586.15,373.92L586.68,374.80L587.21,375.67L587.75,376.55L588.30,377.43L588.86,378.30L589.42,379.18L589.99,380.06L590.57,380.93L591.15,381.81L591.74,382.69L592.34,383.56L592.94,384.44L593.55,385.32L594.17,386.19L594.79,387.07L595.42,387.95L596.06,388.82L596.70,389.70L597.36,390.57L598.01,391.45L598.68,392.33L599.35,393.20L600.03,394.08L600.71,394.96L601.40,395.83L602.10,396.71L602.81,397.59L603.52,398.46L604.23,399.34L604.96,400.21L605.69,401.09M1075.10,103.30L1073.27,102.47L1071.44,101.65L1069.60,100.82L1067.76,99.99L1065.91,99.16L1064.07,98.34L1062.22,97.51L1060.36,96.68L1058.51,95.85L1056.65,95.03L1054.79,94.20L1052.92,93.37L1051.06,92.55L1049.19,91.72L1047.31,90.89L1045.44,90.07L1043.56,89.24L1041.68,88.41L1039.79,87.59L1037.91,86.76L1036.02,85.93L1034.13,85.11L1032.23,84.28L1030.34,83.45L1028.44,82.63L1026.54,81.80L1024.63,80.98L1022.73,80.15L1020.82,79.32L1018.91,78.50L1017.00,77.67L1015.09,76.85L1013.17,76.02L1011.25,75.20L1009.33,74.37L1007.41,73.55L1005.49,72.72L1003.56,71.90L1001.64,71.07L999.71,70.25L997.78,69.42L995.85,68.60L993.92,67.78L991.99,66.95L990.05,66.13L988.11,65.31L986.18,64.48L984.24,63.66L982.30,62.84L980.36,62.02L978.42,61.20L976.48,60.37L974.54,59.55L972.60,58.73L970.65,57.91L968.71,57.09L966.77,56.27L964.82,55.46L962.88,54.64L960.94,53.82L959.00,53.00L957.06,52.19L955.12,51.37L953.18,50.56L951.24,49.75L949.30,48.94L947.37,48.13L945.44,47.32L943.51,46.51L941.59,45.71L939.67,44.91L937.75,44.11L935.84,43.31L933.94,42.52L932.04,41.73L930.15,40.94L928.28,40.16L926.42,39.39L924.57,38.63L922.74,37.87L920.93,37.13L919.16,36.40L917.41,35.69L915.72,35.01L914.07,34.35L912.49,33.73L911.00,33.17L909.61,32.68L908.34,32.27L907.22,31.98L906.24,31.82L905.41,31.81L904.68,31.95L904.03,32.22L903.43,32.61L902.85,33.10L902.29,33.65L901.73,34.26L901.16,34.91L900.59,35.59L900.02,36.30L899.45,37.02L898.87,37.76L898.29,38.52L897.70,39.28L897.11,40.05L896.52,40.83L895.93,41.61L895.33,42.40L894.74,43.20L894.14,43.99L893.54,44.79L892.94,45.59L892.34,46.40L891.73,47.20L891.13,48.01L890.53,48.82L889.92,49.63L889.32,50.44L888.71,51.26L888.11,52.07L887.50,52.89L886.89,53.70L886.29,54.52L885.68,55.34L885.08,56.16L884.47,56.98L883.86,57.79L883.26,58.61L882.65,59.44L882.04,60.26L881.44,61.08L880.83,61.90L880.23,62.72L879.62,63.54L879.02,64.37L878.41,65.19L877.81,66.01L877.20,66.83L876.60,67.66L876.00,68.48L875.39,69.31L874.79,70.13L874.19,70.95L873.59,71.78L872.99,72.60L872.38,73.43L871.78,74.25L871.18,75.08L870.59,75.90L869.99,76.73L869.39,77.55L868.79,78.38L868.19,79.21L867.60,80.03L867.00,80.86L866.41,81.68L865.81,82.51L865.22,83.34L864.62,84.16L864.03,84.99L863.44,85.81L862.85,86.64L862.26,87.47L861.67,88.29L861.08,89.12L860.49,89.95L859.90,90.77L859.32,91.60L858.73,92.43L858.15,93.25L857.56,94.08L856.98,94.91L856.40,95.74L855.81,96.56L855.23,97.39L854.65,98.22L854.08,99.04L853.50,99.87L852.92,100.70L852.34,101.53L851.77,102.35L851.19,103.18L850.62,104.01L850.05,104.84L849.48,105.66L848.91,106.49L848.34,107.32L847.77,108.15L847.20,108.97L846.64,109.80L846.07,110.63L845.51,111.46L844.95,112.28L844.38,113.11L843.82,113.94L843.26,114.77L842.71,115.60L842.15,116.42L841.59,117.25L841.04,118.08L840.48,118.91L839.93,119.73L839.38,120.56L838.83,121.39L838.28,122.22L837.73,123.05L837.19,123.87L836.64,124.70L836.10,125.53L835.56,126.36L835.02,127.19L834.48,128.01L833.94,128.84L833.40,129.67L832.86,130.50L832.33,131.33L831.80,132.16L831.27,132.98L830.73,133.81L830.21,134.64L829.68,135.47L829.15,136.30L828.63,137.12L828.10,137.95L827.58,138.78L827.06,139.61L826.54,140.44L826.03,141.27L825.51,142.09L825.00,142.92L824.48,143.75L823.97,144.58L823.46,145.41L822.95,146.23L822.45,147.06L821.94,147.89L821.44,148.72L820.94,149.55L820.44,150.38L819.94,151.20L819.44,152.03L818.94,152.86L818.45,153.69L817.96,154.52L817.47,155.35L816.98,156.18L816.49,157.00L816.01,157.83L815.52,158.66L815.04,159.49L814.56,160.32L814.08,161.15L813.60,161.97L813.13,162.80L812.65,163.63L812.18,164.46L811.71,165.29L811.24,166.12L810.78,166.94L810.31,167.77L809.85,168.60L809.39,169.43L808.93,170.26L808.47,171.09L808.02,171.92L807.56,172.74L807.11,173.57L806.66,174.40L806.21,175.23L805.77,176.06L805.32,176.89L804.88,177.71L804.44,178.54L804.00,179.37L803.57,180.20L803.13,181.03L802.70,181.86L802.27,182.69L801.84,183.51L801.41,184.34L800.99,185.17L800.56,186.00L800.14,186.83L799.72,187.66L799.31,188.49L798.89,189.31L798.48,190.14L798.07,190.97L797.66,191.80L797.25,192.63L796.85,193.46L796.45,194.29L796.05,195.11L795.65,195.94L795.25,196.77L794.86,197.60L794.47,198.43L794.08,199.26L793.69,200.09L793.30,200.91L792.92,201.74L792.54,202.57L792.16,203.40L791.78,204.23L791.41,205.06L791.03,205.89L790.66,206.72L790.30,207.54L789.93,208.37L789.57,209.20L789.20,210.03L788.84,210.86L788.49,211.69L788.13,212.52L787.78,213.34L787.43,214.17L787.08,215.00L786.73,215.83L786.39,216.66L786.05,217.49L785.71,218.32L785.37,219.14L785.04,219.97L784.71,220.80L784.38,221.63L784.05,222.46L783.72,223.29L783.40,224.12L783.08,224.95L782.76,225.77L782.45,226.60L782.13,227.43L781.82,228.26L781.51,229.09L781.21,229.92L780.90,230.75L780.60,231.57L780.30,232.40L780.01,233.23L779.71,234.06L779.42,234.89L779.13,235.72L778.84,236.55L778.56,237.38L778.28,238.20L778.00,239.03L777.72,239.86L777.44,240.69L777.17,241.52L776.90,242.35L776.63,243.18L776.37,244.01L776.11,244.83L775.85,245.66L775.59,246.49L775.33,247.32L775.08,248.15L774.83,248.98L774.58,249.81L774.34,250.63L774.09,251.46L773.85,252.29L773.62,253.12L773.38,253.95L773.15,254.78L772.92,255.61L772.69,256.44L772.47,257.26L772.25,258.09L772.03,258.92L771.81,259.75L771.59,260.58L771.38,261.41L771.17,262.24L770.97,263.07L770.76,263.89L770.56,264.72L770.36,265.55L770.16,266.38L769.97,267.21L769.78,268.04L769.59,268.87L769.40,269.70L769.22,270.52L769.04,271.35L768.86,272.18L768.69,273.01L768.51,273.84L768.34,274.67L768.18,275.50L768.01,276.32L767.85,277.15L767.69,277.98L767.53,278.81L767.38,279.64L767.22,280.47L767.08,281.30L766.93,282.13L766.79,282.95L766.64,283.78L766.51,284.61L766.37,285.44L766.24,286.27L766.11,287.10L765.98,287.93L765.85,288.76L765.73,289.58L765.61,290.41L765.49,291.24L765.38,292.07L765.27,292.90L765.16,293.73L765.05,294.56L764.95,295.39L764.85,296.21L764.75,297.04L764.66,297.87L764.56,298.70L764.47,299.53L764.39,300.36L764.30,301.19L764.22,302.02L764.14,302.84L764.06,303.67L763.99,304.50L763.92,305.33L763.85,306.16L763.79,306.99L763.72,307.82L763.66,308.65L763.61,309.47L763.55,310.30L763.50,311.13L763.45,311.96L763.40,312.79L763.36,313.62L763.32,314.45L763.28,315.28L763.25,316.10L763.21,316.93L763.18,317.76L763.16,318.59L763.13,319.42L763.11,320.25L763.09,321.08L763.08,321.91L763.06,322.73L763.05,323.56L763.04,324.39L763.04,325.22L763.04,326.05L763.04,326.88L763.04,327.71L763.04,328.54L763.05,329.36L763.06,330.19L763.08,331.02L763.09,331.85L763.11,332.68L763.14,333.51L763.16,334.34L763.19,335.17L763.22,335.99L763.25,336.82L763.29,337.65L763.33,338.48L763.37,339.31L763.41,340.14L763.46,340.97L763.51,341.80L763.56,342.62L763.62,343.45L763.67,344.28L763.73,345.11L763.80,345.94L763.86,346.77L763.93,347.60L764.00,348.43L764.08,349.25L764.15,350.08L764.23,350.91L764.32,351.74L764.40,352.57L764.49,353.40L764.58,354.23L764.67,355.06L764.77,355.88L764.87,356.71L764.97,357.54L765.07,358.37L765.18,359.20L765.29,360.03L765.40,360.86L765.51,361.69L765.63,362.51L765.75,363.34L765.87,364.17L766.00,365.00M926.50,104.60L925.58,104.32L924.67,104.05L923.76,103.78L922.85,103.53L921.94,103.28L921.03,103.04L920.13,102.81L919.23,102.59L918.33,102.38L917.43,102.18L916.53,101.99L915.64,101.81L914.75,101.64L913.85,101.47L912.96,101.32L912.08,101.17L911.19,101.04L910.30,100.91L909.42,100.80L908.53,100.69L907.65,100.60L906.77,100.51L905.89,100.44L905.00,100.37L904.12,100.32L903.24,100.27L902.36,100.24L901.48,100.21L900.60,100.20L899.72,100.19L898.84,100.20L897.96,100.21L897.08,100.24L896.19,100.27L895.31,100.32L894.43,100.37L893.54,100.44L892.65,100.51L891.77,100.60L890.88,100.69L889.99,100.80L889.10,100.91L888.20,101.04L887.31,101.17L886.41,101.32L885.51,101.47L884.61,101.64L883.71,101.81L882.80,101.99L881.89,102.18L880.99,102.38L880.07,102.59L879.16,102.81L878.24,103.04L877.32,103.28L876.40,103.53L875.47,103.78L874.55,104.05L873.61,104.32L872.68,104.60L871.74,104.89L870.80,105.19L869.86,105.49L868.92,105.81L867.97,106.13L867.01,106.46L866.06,106.80L865.10,107.15L864.14,107.50L863.17,107.86L862.21,108.23L861.23,108.61L860.26,108.99L859.28,109.38L858.30,109.78L857.32,110.18L856.33,110.59L855.34,111.01L854.35,111.44L853.35,111.87L852.35,112.31L851.34,112.75L850.34,113.20L849.33,113.66L848.31,114.12L847.30,114.59L846.28,115.06L845.26,115.54L844.23,116.03L843.20,116.52L842.17,117.02L841.14,117.52L840.10,118.03L839.06,118.54L838.02,119.06L836.98,119.58L835.93,120.11L834.88,120.65L833.83,121.18L832.77,121.73L831.71,122.27L830.65,122.83L829.59,123.38L828.52,123.94L827.46,124.51L826.39,125.08L825.31,125.65L824.24,126.23L823.16,126.81L822.09,127.39L821.01,127.98L819.92,128.58L818.84,129.17L817.75,129.77L816.67,130.38L815.58,130.99L814.48,131.60L813.39,132.21L812.30,132.83L811.20,133.45L810.10,134.08L809.01,134.70L807.91,135.34L806.80,135.97L805.70,136.61L804.60,137.25L803.49,137.89L802.39,138.53L801.28,139.18L800.17,139.83L799.06,140.49L797.95,141.15L796.84,141.81L795.73,142.47L794.62,143.13L793.51,143.80L792.39,144.47L791.28,145.14L790.17,145.81L789.05,146.49L787.94,147.17L786.82,147.85L785.70,148.53L784.59,149.22L783.47,149.91L782.36,150.60L781.24,151.29L780.12,151.98L779.01,152.68L777.89,153.38L776.78,154.08L775.66,154.78L774.55,155.48L773.43,156.19L772.32,156.89L771.20,157.60L770.09,158.31L768.97,159.02L767.86,159.74L766.75,160.45L765.64,161.17L764.53,161.89L763.42,162.61L762.31,163.33L761.20,164.06L760.09,164.78L758.98,165.51L757.88,166.23L756.77,166.96L755.67,167.69L754.56,168.43L753.46,169.16L752.36,169.89L751.26,170.63L750.17,171.37L749.07,172.11L747.97,172.85L746.88,173.59L745.79,174.33L744.70,175.07L743.61,175.82L742.52,176.56L741.43,177.31L740.35,178.06L739.26,178.81L738.18,179.56L737.10,180.31L736.03,181.06L734.95,181.82L733.88,182.57L732.80,183.33L731.73,184.08L730.67,184.84L729.60,185.60L728.54,186.36L727.48,187.12L726.42,187.88L725.36,188.64L724.30,189.40L723.25,190.17L722.20,190.93L721.15,191.70L720.11,192.46L719.06,193.23L718.02,194.00L716.98,194.77L715.95,195.54L714.91,196.31L713.88,197.08L712.85,197.85L711.83,198.62L710.81,199.40L709.79,200.17L708.77,200.95L707.75,201.72L706.74,202.50L705.73,203.28L704.73,204.05L703.72,204.83L702.72,205.61L701.73,206.39L700.73,207.17L699.74,207.95L698.75,208.73L697.77,209.51L696.79,210.30L695.81,211.08L694.83,211.86L693.86,212.65L692.89,213.43L691.93,214.22L690.97,215.00L690.01,215.79L689.05,216.58L688.10,217.36L687.15,218.15L686.21,218.94L685.27,219.73L684.33,220.52L683.39,221.31L682.46,222.10L681.54,222.89L680.61,223.68L679.69,224.47L678.78,225.27L677.86,226.06L676.96,226.85L676.05,227.65L675.15,228.44L674.25,229.23L673.36,230.03L672.47,230.82L671.58,231.62L670.70,232.42L669.83,233.21L668.95,234.01L668.08,234.81L667.22,235.60L666.36,236.40L665.50,237.20L664.65,238.00L663.80,238.80L662.95,239.60L662.11,240.40L661.27,241.20L660.44,242.00L659.61,242.80L658.79,243.60L657.97,244.40L657.16,245.20L656.34,246.00L655.54,246.81L654.74,247.61L653.94,248.41L653.15,249.22L652.36,250.02L651.57,250.82L650.79,251.63L650.02,252.43L649.25,253.23L648.48,254.04L647.72,254.84L646.96,255.65L646.21,256.46L645.46,257.26L644.72,258.07L643.98,258.87L643.25,259.68L642.52,260.49L641.80,261.29L641.08,262.10L640.36,262.91L639.65,263.71L638.95,264.52L638.25,265.33L637.55,266.14L636.86,266.95L636.18,267.76L635.50,268.56L634.82,269.37L634.15,270.18L633.49,270.99L632.83,271.80L632.17,272.61L631.52,273.42L630.88,274.23L630.23,275.04L629.60,275.85L628.97,276.66L628.34,277.47L627.72,278.28L627.11,279.09L626.50,279.90L625.89,280.72L625.30,281.53L624.70,282.34L624.11,283.15L623.53,283.96L622.95,284.77L622.38,285.58L621.81,286.40L621.25,287.21L620.69,288.02L620.14,288.83L619.59,289.65L619.05,290.46L618.51,291.27L617.98,292.08L617.45,292.90L616.93,293.71L616.42,294.52L615.91,295.34L615.41,296.15L614.91,296.96L614.42,297.78L613.93,298.59L613.45,299.40L612.97,300.22L612.50,301.03L612.03,301.84L611.57,302.66L611.12,303.47L610.67,304.29L610.23,305.10L609.79,305.91L609.36,306.73L608.93,307.54L608.51,308.36L608.09,309.17L607.68,309.98L607.28,310.80L606.88,311.61L606.48,312.43L606.10,313.24L605.71,314.05L605.34,314.87L604.97,315.68L604.60,316.50L604.24,317.31L603.89,318.13L603.54,318.94L603.20,319.76L602.86,320.57L602.53,321.38L602.21,322.20L601.89,323.01L601.57,323.83L601.27,324.64L600.96,325.46L600.67,326.27L600.38,327.09L600.09,327.90L599.81,328.71L599.54,329.53L599.27,330.34L599.01,331.16L598.75,331.97L598.50,332.78L598.26,333.60L598.02,334.41L597.78,335.23L597.56,336.04L597.33,336.85L597.12,337.67L596.91,338.48L596.70,339.30L596.51,340.11L596.31,340.92L596.13,341.74L595.95,342.55L595.77,343.36L595.60,344.18L595.44,344.99L595.28,345.80L595.13,346.62L594.98,347.43L594.84,348.24L594.71,349.06L594.58,349.87L594.45,350.68L594.34,351.49L594.23,352.31L594.12,353.12L594.02,353.93L593.93,354.74L593.84,355.55L593.76,356.37L593.68,357.18L593.61,357.99L593.54,358.80L593.48,359.61L593.43,360.42L593.38,361.23L593.34,362.04L593.31,362.86L593.28,363.67L593.25,364.48L593.23,365.29L593.22,366.10L593.21,366.91L593.21,367.72L593.21,368.53L593.22,369.34L593.24,370.15L593.26,370.95L593.29,371.76L593.32,372.57L593.36,373.38L593.41,374.19L593.46,375.00L593.51,375.81L593.57,376.61L593.64,377.42L593.71,378.23L593.79,379.04L593.87,379.84L593.96,380.65L594.06,381.46L594.16,382.26L594.27,383.07L594.38,383.87L594.50,384.68L594.62,385.48L594.75,386.29L594.88,387.09L595.02,387.90L595.17,388.70L595.32,389.51L595.48,390.31L595.64,391.11L595.81,391.92L595.98,392.72L596.16,393.52L596.34,394.33L596.53,395.13L596.73,395.93L596.93,396.73L597.13,397.53L597.34,398.33L597.56,399.13L597.78,399.93L598.01,400.73L598.24,401.53L598.48,402.33L598.72,403.13L598.97,403.93L599.23,404.73L599.49,405.52L599.75,406.32L600.02,407.12L600.29,407.92L600.57,408.71L600.86,409.51L601.15,410.30L601.44,411.10L601.74,411.89L602.05,412.69L602.36,413.48L602.68,414.27L603.00,415.07L603.32,415.86L603.65,416.65L603.99,417.44L604.33,418.23L604.67,419.02L605.02,419.81L605.38,420.60L605.74,421.39L606.10,422.18L606.47,422.97L606.85,423.76L607.23,424.55L607.61,425.33L608.00,426.12L608.39,426.90L608.79,427.69L609.19,428.47L609.60,429.26L610.01,430.04M892.20,108.20L891.55,107.66L890.91,107.13L890.26,106.60L889.61,106.08L888.97,105.57L888.32,105.06L887.67,104.56L887.02,104.06L886.36,103.57L885.71,103.09L885.05,102.62L884.40,102.15L883.74,101.69L883.08,101.24L882.42,100.79L881.76,100.35L881.09,99.93L880.42,99.50L879.76,99.09L879.08,98.69L878.41,98.29L877.73,97.90L877.05,97.52L876.37,97.15L875.69,96.79L875.00,96.44L874.31,96.09L873.61,95.76L872.91,95.44L872.21,95.12L871.50,94.82L870.79,94.52L870.07,94.24L869.35,93.96L868.63,93.70L867.90,93.45L867.16,93.20L866.42,92.97L865.68,92.75L864.93,92.54L864.17,92.34L863.40,92.15L862.63,91.97L861.86,91.81L861.07,91.65L860.28,91.51L859.49,91.38L858.68,91.26L857.87,91.15L857.05,91.05L856.22,90.97L855.38,90.89L854.54,90.83L853.68,90.79L852.82,90.75L851.95,90.72L851.07,90.71L850.18,90.71L849.28,90.72L848.37,90.74L847.45,90.78L846.53,90.83L845.59,90.88L844.64,90.96L843.68,91.04L842.71,91.13L841.73,91.24L840.74,91.36L839.74,91.49L838.73,91.63L837.71,91.78L836.67,91.94L835.63,92.12L834.58,92.31L833.51,92.51L832.43,92.71L831.34,92.93L830.24,93.16L829.13,93.41L828.01,93.66L826.88,93.92L825.74,94.19L824.58,94.48L823.42,94.77L822.24,95.07L821.05,95.39L819.86,95.71L818.65,96.04L817.43,96.38L816.20,96.73L814.96,97.09L813.71,97.46L812.45,97.84L811.18,98.23L809.90,98.62L808.61,99.03L807.30,99.44L805.99,99.86L804.67,100.29L803.35,100.72L802.01,101.17L800.66,101.62L799.30,102.08L797.94,102.54L796.56,103.02L795.18,103.50L793.79,103.98L792.39,104.48L790.98,104.98L789.56,105.48L788.14,106.00L786.71,106.52L785.27,107.04L783.82,107.58L782.37,108.11L780.91,108.66L779.44,109.21L777.97,109.76L776.49,110.32L775.00,110.89L773.51,111.46L772.01,112.04L770.51,112.62L769.00,113.20L767.48,113.79L765.96,114.39L764.43,114.99L762.90,115.60L761.36,116.20L759.82,116.82L758.27,117.44L756.72,118.06L755.17,118.68L753.61,119.31L752.04,119.95L750.47,120.59L748.90,121.23L747.33,121.87L745.75,122.52L744.17,123.17L742.58,123.83L740.99,124.49L739.40,125.15L737.81,125.82L736.21,126.49L734.61,127.16L733.01,127.83L731.40,128.51L729.79,129.19L728.19,129.88L726.58,130.57L724.96,131.26L723.35,131.95L721.73,132.64L720.12,133.34L718.50,134.04L716.88,134.74L715.26,135.45L713.63,136.16L712.01,136.87L710.39,137.58L708.76,138.29L707.14,139.01L705.51,139.73L703.89,140.45L702.26,141.17L700.64,141.90L699.01,142.62L697.38,143.35L695.76,144.08L694.13,144.82L692.51,145.55L690.88,146.29L689.26,147.03L687.64,147.77L686.01,148.51L684.39,149.25L682.77,150.00L681.15,150.75L679.53,151.49L677.91,152.25L676.30,153.00L674.68,153.75L673.07,154.50L671.46,155.26L669.85,156.02L668.24,156.78L666.63,157.54L665.03,158.30L663.42,159.06L661.82,159.83L660.22,160.59L658.63,161.36L657.03,162.13L655.44,162.90L653.85,163.67L652.26,164.44L650.68,165.21L649.10,165.99L647.52,166.76L645.94,167.54L644.37,168.32L642.80,169.10L641.23,169.88L639.66,170.66L638.10,171.44L636.54,172.22L634.99,173.00L633.44,173.79L631.89,174.57L630.34,175.36L628.80,176.15L627.26,176.94L625.73,177.73L624.20,178.52L622.67,179.31L621.15,180.10L619.63,180.89L618.12,181.68L616.61,182.48L615.10,183.27L613.60,184.07L612.10,184.87L610.60,185.66L609.11,186.46L607.63,187.26L606.15,188.06L604.67,188.86L603.20,189.66L601.73,190.46L600.27,191.26L598.81,192.07L597.36,192.87L595.91,193.67L594.46,194.48L593.02,195.28L591.59,196.09L590.16,196.90L588.74,197.70L587.32,198.51L585.91,199.32L584.50,200.13L583.09,200.94L581.70,201.75L580.30,202.56L578.92,203.37L577.54,204.18L576.16,204.99L574.79,205.81L573.42,206.62L572.06,207.43L570.71,208.25L569.36,209.06L568.02,209.88L566.68,210.69L565.35,211.51L564.03,212.32L562.71,213.14L561.40,213.96L560.09,214.78L558.79,215.59L557.50,216.41L556.21,217.23L554.93,218.05L553.65,218.87L552.38,219.69L551.12,220.51L549.86,221.33L548.61,222.15L547.37,222.98L546.13,223.80L544.90,224.62L543.68,225.44L542.46,226.27L541.25,227.09L540.04,227.91L538.85,228.74L537.66,229.56L536.47,230.39L535.29,231.21L534.12,232.04L532.96,232.86L531.80,233.69L530.65,234.51L529.51,235.34L528.38,236.17L527.25,236.99L526.13,237.82L525.01,238.65L523.90,239.48L522.80,240.31L521.71,241.13L520.63,241.96L519.55,242.79L518.48,243.62L517.41,244.45L516.36,245.28L515.31,246.11L514.27,246.94L513.23,247.77L512.21,248.60L511.19,249.43L510.18,250.26L509.18,251.09L508.18,251.93L507.19,252.76L506.21,253.59L505.24,254.42L504.27,255.25L503.32,256.09L502.37,256.92L501.42,257.75L500.49,258.58L499.57,259.42L498.65,260.25L497.74,261.08L496.83,261.92L495.94,262.75L495.05,263.59L494.18,264.42L493.31,265.26L492.44,266.09L491.59,266.92L490.74,267.76L489.91,268.59L489.08,269.43L488.26,270.27L487.44,271.10L486.64,271.94L485.84,272.77L485.05,273.61L484.27,274.44L483.50,275.28L482.74,276.12L481.98,276.95L481.24,277.79L480.50,278.63L479.77,279.46L479.05,280.30L478.33,281.14L477.63,281.97L476.93,282.81L476.25,283.65L475.57,284.48L474.90,285.32L474.24,286.16L473.58,287.00L472.94,287.83L472.30,288.67L471.67,289.51L471.06,290.35L470.45,291.19L469.84,292.02L469.25,292.86L468.67,293.70L468.09,294.54L467.53,295.38L466.97,296.22L466.42,297.05L465.88,297.89L465.35,298.73L464.83,299.57L464.31,300.41L463.81,301.25L463.31,302.09L462.82,302.93L462.34,303.76L461.88,304.60L461.41,305.44L460.96,306.28L460.52,307.12L460.09,307.96L459.66,308.80L459.25,309.64L458.84,310.48L458.44,311.32L458.05,312.16L457.67,313.00L457.30,313.83L456.94,314.67L456.59,315.51L456.24,316.35L455.91,317.19L455.58,318.03L455.26,318.87L454.96,319.71L454.66,320.55L454.37,321.39L454.09,322.23L453.81,323.07L453.55,323.91L453.30,324.75L453.05,325.59L452.82,326.42L452.59,327.26L452.38,328.10L452.17,328.94L451.97,329.78L451.78,330.62L451.60,331.46L451.43,332.30L451.26,333.14L451.11,333.98L450.97,334.82L450.83,335.66L450.70,336.49L450.59,337.33L450.48,338.17L450.38,339.01L450.29,339.85L450.21,340.69L450.14,341.53L450.08,342.37L450.02,343.20L449.98,344.04L449.95,344.88L449.92,345.72L449.90,346.56L449.90,347.40L449.90,348.24L449.91,349.07L449.93,349.91L449.96,350.75L449.99,351.59L450.04,352.42L450.10,353.26L450.16,354.10L450.24,354.94L450.32,355.78L450.41,356.61L450.51,357.45L450.62,358.29L450.74,359.12L450.87,359.96L451.01,360.80L451.16,361.63L451.31,362.47L451.48,363.31L451.65,364.14L451.83,364.98L452.02,365.82L452.22,366.65L452.43,367.49L452.65,368.32L452.88,369.16L453.12,370.00L453.36,370.83L453.61,371.67L453.88,372.50L454.15,373.34L454.43,374.17L454.72,375.01L455.02,375.84L455.32,376.67L455.64,377.51L455.97,378.34L456.30,379.18L456.64,380.01L456.99,380.84L457.35,381.68L457.72,382.51L458.10,383.34L458.48,384.18L458.88,385.01L459.28,385.84L459.69,386.67L460.11,387.50L460.54,388.34L460.98,389.17L461.43,390.00L461.88,390.83L462.35,391.66L462.82,392.49L463.30,393.32L463.79,394.15L464.28,394.98L464.79,395.81L465.30,396.64L465.83,397.47L466.36,398.30L466.90,399.13L467.44,399.96L468.00,400.79L468.56,401.61L469.14,402.44L469.72,403.27L470.31,404.10L470.90,404.92L471.51,405.75L472.12,406.58L472.74,407.40L473.37,408.23L474.01,409.05L474.65,409.88L475.31,410.70L475.97,411.53L476.64,412.35L477.31,413.18L478.00,414.00M946.50,126.60L945.58,126.08L944.66,125.56L943.75,125.05L942.83,124.54L941.92,124.03L941.01,123.54L940.10,123.04L939.19,122.55L938.28,122.07L937.38,121.59L936.47,121.12L935.57,120.65L934.67,120.19L933.77,119.73L932.88,119.28L931.98,118.84L931.09,118.40L930.19,117.96L929.30,117.54L928.41,117.11L927.53,116.70L926.64,116.29L925.76,115.89L924.87,115.49L923.99,115.10L923.11,114.72L922.23,114.34L921.35,113.97L920.48,113.61L919.60,113.25L918.73,112.91L917.86,112.56L916.98,112.23L916.11,111.90L915.25,111.58L914.38,111.27L913.51,110.97L912.64,110.67L911.78,110.38L910.92,110.10L910.05,109.82L909.19,109.56L908.33,109.30L907.47,109.05L906.60,108.81L905.74,108.58L904.88,108.35L904.02,108.14L903.16,107.93L902.30,107.73L901.44,107.54L900.58,107.36L899.72,107.18L898.86,107.02L898.00,106.86L897.14,106.71L896.28,106.58L895.42,106.45L894.56,106.33L893.69,106.22L892.83,106.11L891.96,106.02L891.10,105.94L890.23,105.86L889.36,105.80L888.49,105.74L887.62,105.70L886.74,105.66L885.87,105.63L884.99,105.61L884.11,105.60L883.23,105.60L882.35,105.61L881.46,105.63L880.58,105.66L879.69,105.69L878.80,105.74L877.90,105.80L877.00,105.86L876.10,105.94L875.20,106.02L874.29,106.11L873.38,106.21L872.47,106.32L871.56,106.44L870.64,106.57L869.72,106.71L868.79,106.86L867.86,107.01L866.93,107.18L865.99,107.35L865.05,107.53L864.11,107.72L863.16,107.92L862.21,108.13L861.26,108.34L860.30,108.57L859.34,108.80L858.37,109.04L857.40,109.29L856.43,109.55L855.45,109.81L854.47,110.09L853.48,110.37L852.49,110.66L851.49,110.96L850.49,111.26L849.49,111.57L848.48,111.89L847.47,112.22L846.46,112.55L845.44,112.89L844.41,113.24L843.38,113.60L842.35,113.96L841.31,114.33L840.27,114.70L839.23,115.09L838.18,115.48L837.13,115.87L836.07,116.28L835.01,116.68L833.94,117.10L832.87,117.52L831.80,117.95L830.72,118.38L829.64,118.82L828.56,119.26L827.47,119.71L826.38,120.17L825.28,120.63L824.18,121.10L823.08,121.57L821.97,122.05L820.86,122.53L819.75,123.02L818.63,123.52L817.51,124.01L816.39,124.52L815.26,125.03L814.13,125.54L813.00,126.06L811.86,126.58L810.72,127.11L809.58,127.64L808.43,128.17L807.29,128.71L806.13,129.26L804.98,129.81L803.82,130.36L802.67,130.92L801.50,131.48L800.34,132.04L799.17,132.61L798.01,133.18L796.83,133.76L795.66,134.34L794.49,134.92L793.31,135.51L792.13,136.10L790.95,136.70L789.76,137.29L788.58,137.90L787.39,138.50L786.20,139.11L785.01,139.72L783.82,140.33L782.63,140.95L781.43,141.57L780.24,142.19L779.04,142.82L777.84,143.44L776.64,144.08L775.44,144.71L774.24,145.35L773.03,145.99L771.83,146.63L770.62,147.27L769.42,147.92L768.21,148.57L767.00,149.22L765.79,149.88L764.59,150.54L763.38,151.20L762.17,151.86L760.96,152.52L759.75,153.19L758.53,153.86L757.32,154.53L756.11,155.20L754.90,155.88L753.69,156.55L752.48,157.23L751.27,157.91L750.06,158.60L748.84,159.28L747.63,159.97L746.42,160.66L745.21,161.35L744.00,162.04L742.79,162.74L741.59,163.43L740.38,164.13L739.17,164.83L737.96,165.53L736.76,166.23L735.55,166.94L734.35,167.64L733.14,168.35L731.94,169.06L730.74,169.77L729.54,170.48L728.34,171.20L727.14,171.91L725.94,172.63L724.75,173.35L723.55,174.07L722.36,174.79L721.17,175.51L719.98,176.23L718.79,176.96L717.60,177.69L716.42,178.41L715.23,179.14L714.05,179.87L712.87,180.60L711.69,181.34L710.51,182.07L709.34,182.80L708.16,183.54L706.99,184.28L705.82,185.02L704.66,185.75L703.49,186.50L702.33,187.24L701.17,187.98L700.01,188.72L698.85,189.47L697.70,190.21L696.55,190.96L695.40,191.71L694.25,192.45L693.11,193.20L691.96,193.95L690.82,194.71L689.69,195.46L688.55,196.21L687.42,196.96L686.29,197.72L685.17,198.47L684.05,199.23L682.93,199.99L681.81,200.75L680.69,201.50L679.58,202.26L678.47,203.02L677.37,203.79L676.27,204.55L675.17,205.31L674.07,206.07L672.98,206.84L671.89,207.60L670.80,208.37L669.72,209.13L668.64,209.90L667.57,210.67L666.49,211.44L665.42,212.21L664.36,212.98L663.30,213.75L662.24,214.52L661.18,215.29L660.13,216.06L659.08,216.83L658.04,217.61L657.00,218.38L655.96,219.16L654.93,219.93L653.90,220.71L652.88,221.48L651.85,222.26L650.84,223.04L649.82,223.81L648.81,224.59L647.81,225.37L646.81,226.15L645.81,226.93L644.82,227.71L643.83,228.49L642.84,229.27L641.86,230.05L640.89,230.84L639.91,231.62L638.95,232.40L637.98,233.18L637.02,233.97L636.07,234.75L635.12,235.54L634.17,236.32L633.23,237.11L632.29,237.89L631.36,238.68L630.43,239.47L629.51,240.25L628.59,241.04L627.68,241.83L626.77,242.62L625.86,243.41L624.96,244.20L624.07,244.99L623.18,245.78L622.29,246.57L621.41,247.36L620.53,248.15L619.66,248.94L618.79,249.73L617.93,250.52L617.08,251.31L616.22,252.11L615.38,252.90L614.54,253.69L613.70,254.48L612.87,255.28L612.04,256.07L611.22,256.87L610.40,257.66L609.59,258.45L608.79,259.25L607.99,260.04L607.19,260.84L606.40,261.64L605.61,262.43L604.83,263.23L604.06,264.02L603.29,264.82L602.53,265.62L601.77,266.42L601.01,267.21L600.27,268.01L599.52,268.81L598.79,269.61L598.06,270.40L597.33,271.20L596.61,272.00L595.89,272.80L595.18,273.60L594.48,274.40L593.78,275.20L593.09,276.00L592.40,276.80L591.72,277.60L591.05,278.40L590.37,279.20L589.71,280.00L589.05,280.80L588.40,281.60L587.75,282.40L587.11,283.20L586.47,284.00L585.84,284.80L585.22,285.60L584.60,286.41L583.99,287.21L583.38,288.01L582.78,288.81L582.18,289.61L581.59,290.42L581.01,291.22L580.43,292.02L579.86,292.82L579.30,293.63L578.74,294.43L578.18,295.23L577.63,296.03L577.09,296.84L576.56,297.64L576.03,298.44L575.50,299.25L574.99,300.05L574.47,300.85L573.97,301.66L573.47,302.46L572.98,303.26L572.49,304.07L572.01,304.87L571.53,305.68L571.06,306.48L570.60,307.28L570.14,308.09L569.69,308.89L569.25,309.70L568.81,310.50L568.38,311.30L567.95,312.11L567.53,312.91L567.12,313.72L566.71,314.52L566.31,315.32L565.92,316.13L565.53,316.93L565.14,317.74L564.77,318.54L564.40,319.35L564.04,320.15L563.68,320.96L563.33,321.76L562.98,322.56L562.64,323.37L562.31,324.17L561.99,324.98L561.67,325.78L561.35,326.59L561.05,327.39L560.75,328.19L560.45,329.00L560.17,329.80L559.88,330.61L559.61,331.41L559.34,332.21L559.08,333.02L558.82,333.82L558.57,334.63L558.33,335.43L558.09,336.23L557.86,337.04L557.64,337.84L557.42,338.64L557.21,339.45L557.01,340.25L556.81,341.06L556.61,341.86L556.43,342.66L556.25,343.46L556.08,344.27L555.91,345.07L555.75,345.87L555.60,346.68L555.45,347.48L555.31,348.28L555.17,349.08L555.04,349.89L554.92,350.69L554.81,351.49L554.70,352.29L554.60,353.09L554.50,353.90L554.41,354.70L554.33,355.50L554.25,356.30L554.18,357.10L554.11,357.90L554.05,358.70L554.00,359.50L553.96,360.31L553.92,361.11L553.89,361.91L553.86,362.71L553.84,363.51L553.83,364.31L553.82,365.11L553.82,365.91L553.82,366.70L553.83,367.50L553.85,368.30L553.88,369.10L553.91,369.90L553.94,370.70L553.98,371.50L554.03,372.29L554.09,373.09L554.15,373.89L554.22,374.69L554.29,375.48L554.37,376.28L554.46,377.08L554.55,377.87L554.65,378.67L554.76,379.46L554.87,380.26L554.98,381.06L555.11,381.85L555.24,382.64L555.37,383.44L555.52,384.23L555.66,385.03L555.82,385.82L555.98,386.61L556.14,387.41L556.32,388.20L556.49,388.99L556.68,389.79L556.87,390.58L557.06,391.37L557.27,392.16L557.47,392.95L557.69,393.74L557.91,394.53L558.13,395.32L558.37,396.11M987.60,136.40L986.80,135.54L986.00,134.69L985.20,133.83L984.39,132.98L983.59,132.12L982.78,131.27L981.97,130.41L981.16,129.56L980.35,128.71L979.54,127.85L978.72,127.00L977.91,126.15L977.09,125.30L976.27,124.45L975.45,123.60L974.63,122.75L973.81,121.90L972.99,121.05L972.16,120.20L971.34,119.35L970.51,118.50L969.69,117.66L968.86,116.81L968.03,115.97L967.20,115.12L966.37,114.28L965.54,113.43L964.71,112.59L963.87,111.75L963.04,110.91L962.21,110.07L961.37,109.23L960.53,108.39L959.70,107.55L958.86,106.71L958.02,105.87L957.19,105.04L956.35,104.20L955.51,103.37L954.67,102.54L953.83,101.71L952.99,100.88L952.15,100.05L951.31,99.22L950.47,98.39L949.63,97.57L948.79,96.74L947.95,95.92L947.10,95.10L946.26,94.28L945.42,93.46L944.58,92.64L943.74,91.83L942.90,91.01L942.06,90.20L941.22,89.39L940.38,88.58L939.54,87.77L938.71,86.97L937.87,86.17L937.03,85.37L936.19,84.57L935.36,83.77L934.52,82.98L933.69,82.19L932.86,81.40L932.02,80.62L931.19,79.84L930.36,79.06L929.54,78.28L928.71,77.51L927.88,76.74L927.06,75.98L926.24,75.21L925.41,74.46L924.59,73.70L923.78,72.96L922.96,72.21L922.15,71.47L921.34,70.74L920.53,70.01L919.72,69.29L918.91,68.57L918.11,67.86L917.31,67.16L916.51,66.46L915.71,65.78L914.92,65.10L914.13,64.42L913.34,63.76L912.56,63.10L911.78,62.46L911.00,61.83L910.22,61.20L909.44,60.59L908.67,59.99L907.90,59.40L907.14,58.83L906.37,58.27L905.61,57.73L904.85,57.20L904.09,56.69L903.33,56.19L902.57,55.72L901.82,55.26L901.06,54.83L900.30,54.41L899.54,54.02L898.78,53.65L898.02,53.31L897.25,52.99L896.48,52.70L895.70,52.43L894.91,52.20L894.12,51.99L893.31,51.81L892.50,51.66L891.67,51.55L890.84,51.46L889.98,51.41L889.11,51.39L888.23,51.40L887.32,51.44L886.40,51.51L885.45,51.62L884.49,51.75L883.50,51.92L882.49,52.12L881.46,52.34L880.41,52.60L879.33,52.88L878.23,53.19L877.10,53.52L875.95,53.88L874.78,54.27L873.59,54.67L872.37,55.10L871.13,55.55L869.88,56.02L868.60,56.51L867.30,57.01L865.98,57.53L864.64,58.07L863.28,58.63L861.91,59.20L860.52,59.78L859.11,60.37L857.69,60.98L856.25,61.60L854.80,62.23L853.34,62.87L851.86,63.52L850.37,64.18L848.87,64.85L847.36,65.53L845.83,66.22L844.30,66.91L842.76,67.61L841.21,68.32L839.65,69.03L838.08,69.75L836.50,70.48L834.92,71.21L833.33,71.95L831.73,72.69L830.13,73.43L828.52,74.19L826.91,74.94L825.29,75.70L823.67,76.46L822.04,77.23L820.40,78.00L818.77,78.78L817.13,79.56L815.48,80.34L813.84,81.12L812.19,81.91L810.53,82.70L808.88,83.49L807.22,84.28L805.56,85.08L803.90,85.88L802.24,86.68L800.57,87.48L798.90,88.29L797.23,89.10L795.57,89.91L793.90,90.72L792.22,91.53L790.55,92.35L788.88,93.16L787.21,93.98L785.53,94.80L783.86,95.62L782.19,96.45L780.52,97.27L778.84,98.10L777.17,98.92L775.50,99.75L773.83,100.58L772.16,101.41L770.49,102.24L768.82,103.07L767.15,103.90L765.48,104.74L763.81,105.57L762.15,106.41L760.49,107.25L758.82,108.09L757.16,108.92L755.50,109.76L753.85,110.60L752.19,111.44L750.54,112.29L748.89,113.13L747.23,113.97L745.59,114.82L743.94,115.66L742.30,116.51L740.66,117.35L739.02,118.20L737.38,119.05L735.74,119.89L734.11,120.74L732.48,121.59L730.86,122.44L729.23,123.29L727.61,124.14L725.99,124.99L724.38,125.84L722.76,126.69L721.16,127.55L719.55,128.40L717.95,129.25L716.34,130.11L714.75,130.96L713.15,131.81L711.56,132.67L709.98,133.52L708.39,134.38L706.81,135.24L705.24,136.09L703.66,136.95L702.09,137.81L700.53,138.66L698.97,139.52L697.41,140.38L695.85,141.24L694.30,142.09L692.76,142.95L691.21,143.81L689.68,144.67L688.14,145.53L686.61,146.39L685.09,147.25L683.56,148.11L682.05,148.97L680.53,149.83L679.02,150.69L677.52,151.56L676.02,152.42L674.52,153.28L673.03,154.14L671.55,155.00L670.06,155.87L668.59,156.73L667.11,157.59L665.65,158.45L664.18,159.32L662.72,160.18L661.27,161.05L659.82,161.91L658.38,162.77L656.94,163.64L655.51,164.50L654.08,165.37L652.65,166.23L651.24,167.10L649.82,167.96L648.41,168.83L647.01,169.69L645.61,170.56L644.22,171.42L642.84,172.29L641.45,173.15L640.08,174.02L638.71,174.89L637.34,175.75L635.98,176.62L634.63,177.49L633.28,178.35L631.94,179.22L630.60,180.09L629.27,180.95L627.94,181.82L626.62,182.69L625.31,183.56L624.00,184.42L622.70,185.29L621.40,186.16L620.11,187.03L618.83,187.89L617.55,188.76L616.27,189.63L615.01,190.50L613.75,191.37L612.49,192.24L611.24,193.11L610.00,193.97L608.77,194.84L607.54,195.71L606.31,196.58L605.10,197.45L603.89,198.32L602.68,199.19L601.48,200.06L600.29,200.93L599.11,201.80L597.93,202.67L596.76,203.54L595.59,204.40L594.43,205.27L593.28,206.14L592.13,207.01L591.00,207.88L589.86,208.75L588.74,209.62L587.62,210.49L586.51,211.36L585.40,212.24L584.30,213.11L583.21,213.98L582.13,214.85L581.05,215.72L579.98,216.59L578.91,217.46L577.86,218.33L576.81,219.20L575.76,220.07L574.73,220.94L573.70,221.81L572.68,222.68L571.66,223.56L570.65,224.43L569.65,225.30L568.66,226.17L567.67,227.04L566.70,227.91L565.72,228.78L564.76,229.65L563.80,230.53L562.85,231.40L561.91,232.27L560.98,233.14L560.05,234.01L559.13,234.88L558.22,235.76L557.31,236.63L556.42,237.50L555.53,238.37L554.64,239.24L553.77,240.11L552.90,240.99L552.04,241.86L551.19,242.73L550.34,243.60L549.51,244.48L548.68,245.35L547.86,246.22L547.04,247.09L546.24,247.96L545.44,248.84L544.65,249.71L543.87,250.58L543.09,251.45L542.32,252.33L541.57,253.20L540.81,254.07L540.07,254.94L539.33,255.82L538.61,256.69L537.89,257.56L537.18,258.43L536.47,259.31L535.78,260.18L535.09,261.05L534.41,261.92L533.74,262.80L533.07,263.67L532.42,264.54L531.77,265.42L531.13,266.29L530.50,267.16L529.88,268.03L529.26,268.91L528.65,269.78L528.05,270.65L527.46,271.53L526.88,272.40L526.31,273.27L525.74,274.15L525.18,275.02L524.63,275.89L524.09,276.76L523.56,277.64L523.03,278.51L522.52,279.38L522.01,280.26L521.51,281.13L521.02,282.00L520.54,282.88L520.06,283.75L519.59,284.62L519.14,285.50L518.69,286.37L518.25,287.24L517.81,288.12L517.39,288.99L516.97,289.86L516.56,290.74L516.17,291.61L515.77,292.48L515.39,293.36L515.02,294.23L514.65,295.10L514.30,295.98L513.95,296.85L513.61,297.72L513.28,298.60L512.95,299.47L512.64,300.34L512.33,301.22L512.04,302.09L511.75,302.96L511.47,303.84L511.20,304.71L510.93,305.58L510.68,306.46L510.43,307.33L510.20,308.20L509.97,309.08L509.75,309.95L509.54,310.83L509.33,311.70L509.14,312.57L508.95,313.45L508.78,314.32L508.61,315.19L508.45,316.07L508.30,316.94L508.15,317.81L508.02,318.69L507.90,319.56L507.78,320.43L507.67,321.31L507.57,322.18L507.48,323.05L507.40,323.93L507.33,324.80L507.26,325.68L507.20,326.55L507.16,327.42L507.12,328.30L507.09,329.17L507.07,330.04L507.05,330.92L507.05,331.79L507.05,332.66L507.07,333.54L507.09,334.41L507.12,335.28L507.16,336.16L507.21,337.03L507.26,337.90L507.33,338.78L507.40,339.65L507.49,340.52L507.58,341.40L507.68,342.27L507.78,343.14L507.90,344.02L508.03,344.89L508.16,345.76L508.30,346.64L508.46,347.51L508.62,348.39L508.78,349.26L508.96,350.13L509.15,351.01L509.34,351.88L509.55,352.75L509.76,353.63L509.98,354.50L510.21,355.37L510.44,356.24L510.69,357.12L510.95,357.99L511.21,358.86L511.48,359.74M908.10,159.60L907.42,159.01L906.74,158.43L906.07,157.85L905.39,157.27L904.71,156.69L904.03,156.12L903.36,155.55L902.68,154.98L902.00,154.42L901.32,153.85L900.65,153.30L899.97,152.74L899.29,152.19L898.61,151.64L897.94,151.09L897.26,150.55L896.58,150.01L895.90,149.48L895.22,148.95L894.55,148.42L893.87,147.89L893.19,147.37L892.51,146.85L891.83,146.34L891.15,145.83L890.47,145.32L889.79,144.82L889.12,144.32L888.44,143.82L887.76,143.33L887.07,142.84L886.39,142.36L885.71,141.88L885.03,141.41L884.35,140.94L883.67,140.47L882.98,140.01L882.30,139.55L881.62,139.10L880.93,138.65L880.24,138.20L879.56,137.76L878.87,137.33L878.18,136.90L877.50,136.47L876.81,136.05L876.12,135.64L875.43,135.22L874.73,134.82L874.04,134.42L873.35,134.02L872.65,133.63L871.96,133.25L871.26,132.87L870.56,132.49L869.86,132.12L869.16,131.76L868.46,131.40L867.75,131.05L867.05,130.70L866.34,130.36L865.63,130.02L864.92,129.69L864.21,129.37L863.49,129.05L862.77,128.74L862.06,128.43L861.34,128.13L860.61,127.84L859.89,127.55L859.16,127.27L858.43,126.99L857.70,126.73L856.97,126.46L856.23,126.21L855.49,125.96L854.75,125.71L854.00,125.48L853.25,125.25L852.50,125.03L851.75,124.81L850.99,124.60L850.23,124.40L849.47,124.20L848.70,124.01L847.93,123.83L847.16,123.66L846.38,123.49L845.60,123.33L844.82,123.18L844.03,123.03L843.23,122.89L842.44,122.76L841.64,122.63L840.83,122.52L840.02,122.41L839.21,122.30L838.39,122.21L837.57,122.12L836.74,122.04L835.91,121.97L835.08,121.90L834.23,121.84L833.39,121.79L832.54,121.75L831.68,121.71L830.82,121.68L829.95,121.66L829.08,121.65L828.21,121.64L827.32,121.64L826.44,121.65L825.54,121.67L824.65,121.69L823.74,121.72L822.83,121.76L821.92,121.81L821.00,121.86L820.07,121.93L819.14,121.99L818.20,122.07L817.25,122.15L816.30,122.25L815.34,122.34L814.38,122.45L813.41,122.56L812.44,122.68L811.46,122.81L810.47,122.95L809.48,123.09L808.48,123.24L807.47,123.39L806.46,123.56L805.44,123.73L804.41,123.91L803.38,124.09L802.34,124.28L801.30,124.48L800.25,124.69L799.19,124.90L798.13,125.12L797.06,125.34L795.98,125.57L794.90,125.81L793.81,126.06L792.72,126.31L791.62,126.57L790.51,126.83L789.40,127.11L788.28,127.38L787.15,127.67L786.02,127.96L784.88,128.25L783.74,128.56L782.59,128.87L781.43,129.18L780.27,129.50L779.10,129.83L777.93,130.16L776.75,130.50L775.56,130.84L774.37,131.19L773.17,131.55L771.97,131.91L770.76,132.27L769.55,132.64L768.33,133.02L767.10,133.40L765.87,133.79L764.64,134.18L763.40,134.58L762.15,134.98L760.90,135.39L759.64,135.80L758.38,136.22L757.12,136.65L755.85,137.07L754.57,137.51L753.29,137.94L752.00,138.38L750.71,138.83L749.42,139.28L748.12,139.74L746.82,140.20L745.51,140.66L744.20,141.13L742.88,141.60L741.56,142.08L740.24,142.56L738.91,143.04L737.58,143.53L736.25,144.02L734.91,144.52L733.57,145.02L732.22,145.53L730.87,146.04L729.52,146.55L728.16,147.06L726.80,147.58L725.44,148.11L724.07,148.63L722.71,149.16L721.33,149.70L719.96,150.23L718.58,150.77L717.20,151.32L715.82,151.86L714.44,152.41L713.05,152.97L711.66,153.52L710.27,154.08L708.88,154.65L707.48,155.21L706.08,155.78L704.68,156.35L703.28,156.93L701.88,157.50L700.48,158.08L699.07,158.67L697.66,159.25L696.25,159.84L694.84,160.43L693.43,161.03L692.02,161.62L690.60,162.22L689.19,162.82L687.77,163.43L686.35,164.03L684.94,164.64L683.52,165.25L682.10,165.87L680.68,166.48L679.26,167.10L677.84,167.72L676.41,168.34L674.99,168.97L673.57,169.59L672.15,170.22L670.73,170.85L669.30,171.49L667.88,172.12L666.46,172.76L665.04,173.40L663.62,174.04L662.20,174.68L660.78,175.33L659.36,175.98L657.94,176.62L656.52,177.28L655.10,177.93L653.68,178.58L652.26,179.24L650.85,179.90L649.43,180.56L648.02,181.22L646.61,181.88L645.20,182.54L643.79,183.21L642.38,183.88L640.97,184.55L639.56,185.22L638.16,185.89L636.75,186.57L635.35,187.24L633.95,187.92L632.55,188.60L631.16,189.28L629.76,189.96L628.37,190.64L626.98,191.32L625.59,192.01L624.21,192.70L622.82,193.38L621.44,194.07L620.06,194.76L618.68,195.46L617.31,196.15L615.93,196.84L614.56,197.54L613.20,198.24L611.83,198.94L610.47,199.63L609.11,200.33L607.75,201.04L606.40,201.74L605.05,202.44L603.70,203.15L602.36,203.85L601.01,204.56L599.68,205.27L598.34,205.98L597.01,206.69L595.68,207.40L594.35,208.11L593.03,208.82L591.71,209.54L590.40,210.25L589.08,210.97L587.77,211.69L586.47,212.41L585.17,213.12L583.87,213.84L582.58,214.56L581.29,215.29L580.00,216.01L578.72,216.73L577.44,217.46L576.17,218.18L574.90,218.91L573.63,219.63L572.37,220.36L571.11,221.09L569.86,221.82L568.61,222.55L567.37,223.28L566.13,224.01L564.89,224.74L563.66,225.47L562.43,226.21L561.21,226.94L559.99,227.67L558.78,228.41L557.57,229.15L556.36,229.88L555.17,230.62L553.97,231.36L552.78,232.10L551.60,232.84L550.42,233.58L549.24,234.32L548.07,235.06L546.91,235.80L545.75,236.54L544.59,237.28L543.45,238.03L542.30,238.77L541.16,239.52L540.03,240.26L538.90,241.01L537.78,241.75L536.66,242.50L535.55,243.25L534.44,243.99L533.34,244.74L532.24,245.49L531.15,246.24L530.07,246.99L528.99,247.74L527.92,248.49L526.85,249.24L525.79,249.99L524.73,250.75L523.68,251.50L522.63,252.25L521.60,253.00L520.56,253.76L519.54,254.51L518.51,255.27L517.50,256.02L516.49,256.78L515.49,257.53L514.49,258.29L513.50,259.05L512.51,259.80L511.54,260.56L510.56,261.32L509.60,262.07L508.64,262.83L507.68,263.59L506.74,264.35L505.80,265.11L504.86,265.87L503.93,266.63L503.01,267.39L502.10,268.15L501.19,268.91L500.28,269.67L499.39,270.43L498.50,271.20L497.62,271.96L496.74,272.72L495.87,273.48L495.01,274.25L494.15,275.01L493.30,275.77L492.46,276.54L491.62,277.30L490.79,278.06L489.97,278.83L489.15,279.59L488.34,280.36L487.54,281.12L486.75,281.89L485.96,282.65L485.18,283.42L484.40,284.18L483.63,284.95L482.87,285.72L482.12,286.48L481.37,287.25L480.63,288.02L479.90,288.78L479.18,289.55L478.46,290.32L477.75,291.09L477.04,291.85L476.34,292.62L475.65,293.39L474.97,294.16L474.30,294.93L473.63,295.69L472.97,296.46L472.31,297.23L471.67,298.00L471.03,298.77L470.39,299.54L469.77,300.31L469.15,301.08L468.54,301.85L467.94,302.62L467.34,303.38L466.76,304.15L466.18,304.92L465.60,305.69L465.04,306.46L464.48,307.23L463.93,308.00L463.38,308.77L462.85,309.54L462.32,310.31L461.80,311.08L461.29,311.85L460.78,312.62L460.28,313.39L459.79,314.17L459.31,314.94L458.83,315.71L458.36,316.48L457.90,317.25L457.45,318.02L457.00,318.79L456.56,319.56L456.13,320.33L455.71,321.10L455.30,321.87L454.89,322.64L454.49,323.41L454.10,324.18L453.71,324.95L453.33,325.72L452.97,326.49L452.60,327.26L452.25,328.03L451.90,328.80L451.56,329.57L451.23,330.34L450.91,331.11L450.59,331.88L450.29,332.65L449.99,333.42L449.69,334.19L449.41,334.96L449.13,335.73L448.86,336.50L448.60,337.27L448.35,338.04L448.10,338.81L447.86,339.58L447.63,340.35L447.41,341.12L447.19,341.89L446.98,342.66L446.78,343.43L446.59,344.20L446.40,344.96L446.23,345.73L446.06,346.50L445.90,347.27L445.74,348.04L445.60,348.80L445.46,349.57L445.32,350.34L445.20,351.11L445.09,351.87L444.98,352.64L444.88,353.41L444.78,354.17L444.70,354.94L444.62,355.71L444.55,356.47L444.49,357.24L444.43,358.00L444.39,358.77L444.35,359.54L444.31,360.30L444.29,361.07L444.27,361.83L444.26,362.59L444.26,363.36M1017.40,186.50L1016.35,185.47L1015.30,184.44L1014.25,183.41L1013.19,182.38L1012.13,181.35L1011.07,180.33L1010.00,179.30L1008.94,178.28L1007.87,177.26L1006.80,176.24L1005.72,175.22L1004.64,174.20L1003.57,173.19L1002.48,172.17L1001.40,171.16L1000.32,170.15L999.23,169.14L998.14,168.13L997.05,167.12L995.95,166.12L994.86,165.11L993.76,164.11L992.66,163.11L991.56,162.11L990.46,161.12L989.36,160.12L988.26,159.13L987.15,158.14L986.04,157.15L984.94,156.17L983.83,155.18L982.72,154.20L981.60,153.22L980.49,152.25L979.38,151.27L978.27,150.30L977.15,149.33L976.04,148.36L974.92,147.40L973.80,146.44L972.69,145.48L971.57,144.52L970.45,143.57L969.33,142.62L968.21,141.67L967.10,140.73L965.98,139.79L964.86,138.85L963.74,137.92L962.62,136.99L961.51,136.06L960.39,135.13L959.27,134.22L958.15,133.30L957.04,132.39L955.92,131.48L954.81,130.58L953.69,129.68L952.58,128.78L951.47,127.89L950.36,127.01L949.24,126.12L948.14,125.25L947.03,124.38L945.92,123.51L944.81,122.65L943.71,121.80L942.61,120.95L941.50,120.10L940.40,119.26L939.30,118.43L938.21,117.61L937.11,116.79L936.02,115.97L934.93,115.17L933.84,114.37L932.75,113.58L931.66,112.79L930.58,112.02L929.49,111.25L928.41,110.48L927.33,109.73L926.26,108.99L925.18,108.25L924.11,107.52L923.04,106.81L921.97,106.10L920.90,105.40L919.84,104.71L918.78,104.03L917.72,103.36L916.66,102.71L915.60,102.06L914.54,101.42L913.49,100.80L912.44,100.19L911.39,99.59L910.34,99.00L909.29,98.43L908.25,97.87L907.20,97.32L906.16,96.79L905.11,96.27L904.07,95.76L903.03,95.27L901.98,94.80L900.94,94.34L899.90,93.89L898.86,93.46L897.81,93.05L896.77,92.66L895.72,92.28L894.67,91.92L893.63,91.57L892.57,91.25L891.52,90.94L890.46,90.65L889.40,90.38L888.34,90.13L887.27,89.89L886.20,89.68L885.12,89.49L884.04,89.31L882.95,89.16L881.86,89.02L880.76,88.91L879.65,88.81L878.54,88.74L877.42,88.69L876.29,88.65L875.15,88.64L874.00,88.65L872.85,88.68L871.69,88.73L870.51,88.79L869.33,88.88L868.13,88.99L866.93,89.12L865.71,89.27L864.49,89.44L863.25,89.63L862.00,89.84L860.74,90.07L859.46,90.32L858.18,90.58L856.88,90.87L855.57,91.17L854.24,91.49L852.91,91.83L851.56,92.19L850.20,92.57L848.82,92.96L847.44,93.36L846.04,93.79L844.62,94.23L843.20,94.69L841.76,95.16L840.31,95.65L838.85,96.15L837.38,96.66L835.89,97.19L834.39,97.74L832.88,98.30L831.36,98.87L829.83,99.45L828.28,100.05L826.73,100.66L825.16,101.28L823.58,101.91L822.00,102.55L820.40,103.21L818.79,103.87L817.18,104.55L815.55,105.24L813.91,105.93L812.27,106.64L810.62,107.36L808.96,108.08L807.29,108.81L805.61,109.56L803.92,110.31L802.23,111.07L800.53,111.83L798.82,112.61L797.11,113.39L795.39,114.18L793.66,114.98L791.93,115.78L790.19,116.60L788.44,117.41L786.69,118.24L784.94,119.07L783.18,119.90L781.41,120.75L779.65,121.60L777.87,122.45L776.10,123.31L774.32,124.17L772.53,125.04L770.75,125.92L768.96,126.80L767.17,127.68L765.37,128.57L763.57,129.47L761.77,130.37L759.97,131.27L758.17,132.17L756.36,133.09L754.56,134.00L752.75,134.92L750.94,135.84L749.13,136.77L747.32,137.70L745.51,138.63L743.70,139.57L741.89,140.51L740.08,141.45L738.27,142.40L736.46,143.35L734.65,144.30L732.84,145.25L731.03,146.21L729.23,147.17L727.42,148.14L725.62,149.10L723.82,150.07L722.02,151.04L720.22,152.02L718.42,152.99L716.63,153.97L714.83,154.95L713.04,155.94L711.26,156.92L709.47,157.91L707.69,158.90L705.91,159.89L704.13,160.88L702.36,161.88L700.59,162.88L698.83,163.88L697.07,164.88L695.31,165.88L693.55,166.89L691.80,167.89L690.06,168.90L688.31,169.91L686.58,170.92L684.84,171.93L683.12,172.95L681.39,173.96L679.67,174.98L677.96,176.00L676.25,177.02L674.55,178.04L672.85,179.06L671.16,180.09L669.47,181.11L667.79,182.14L666.11,183.17L664.44,184.20L662.77,185.23L661.12,186.26L659.46,187.29L657.82,188.32L656.18,189.36L654.54,190.40L652.92,191.43L651.30,192.47L649.68,193.51L648.07,194.55L646.47,195.59L644.88,196.63L643.29,197.67L641.72,198.72L640.14,199.76L638.58,200.81L637.02,201.85L635.47,202.90L633.93,203.95L632.40,205.00L630.87,206.04L629.35,207.09L627.84,208.15L626.33,209.20L624.84,210.25L623.35,211.30L621.87,212.36L620.40,213.41L618.94,214.47L617.49,215.52L616.04,216.58L614.61,217.63L613.18,218.69L611.76,219.75L610.35,220.81L608.95,221.87L607.55,222.93L606.17,223.99L604.79,225.05L603.43,226.11L602.07,227.17L600.72,228.24L599.39,229.30L598.06,230.36L596.74,231.43L595.43,232.49L594.13,233.56L592.84,234.62L591.56,235.69L590.29,236.75L589.03,237.82L587.78,238.89L586.54,239.96L585.31,241.02L584.09,242.09L582.87,243.16L581.67,244.23L580.48,245.30L579.30,246.37L578.13,247.44L576.98,248.51L575.83,249.58L574.69,250.65L573.56,251.73L572.44,252.80L571.34,253.87L570.24,254.94L569.16,256.02L568.08,257.09L567.02,258.16L565.97,259.24L564.93,260.31L563.90,261.38L562.88,262.46L561.87,263.53L560.87,264.61L559.89,265.68L558.91,266.76L557.95,267.84L557.00,268.91L556.06,269.99L555.13,271.06L554.21,272.14L553.30,273.22L552.41,274.30L551.53,275.37L550.66,276.45L549.80,277.53L548.95,278.61L548.11,279.68L547.29,280.76L546.47,281.84L545.67,282.92L544.88,284.00L544.11,285.08L543.34,286.16L542.59,287.24L541.85,288.31L541.12,289.39L540.40,290.47L539.69,291.55L539.00,292.63L538.32,293.71L537.65,294.79L536.99,295.87L536.35,296.95L535.72,298.03L535.10,299.11L534.49,300.19L533.89,301.27L533.31,302.36L532.74,303.44L532.18,304.52L531.63,305.60L531.10,306.68L530.58,307.76L530.07,308.84L529.58,309.92L529.09,311.00L528.62,312.08L528.16,313.17L527.72,314.25L527.28,315.33L526.86,316.41L526.45,317.49L526.06,318.57L525.67,319.65L525.30,320.73L524.95,321.81L524.60,322.90L524.27,323.98L523.95,325.06L523.64,326.14L523.35,327.22L523.07,328.30L522.80,329.38L522.54,330.46L522.30,331.55L522.07,332.63L521.85,333.71L521.64,334.79L521.45,335.87L521.27,336.95L521.10,338.03L520.95,339.11L520.81,340.19L520.68,341.27L520.56,342.35L520.46,343.43L520.37,344.51L520.29,345.59L520.23,346.67L520.18,347.75L520.14,348.83L520.11,349.91L520.10,350.99L520.10,352.07L520.11,353.15L520.13,354.23L520.17,355.31L520.22,356.39L520.28,357.47L520.36,358.55L520.45,359.62L520.55,360.70L520.66,361.78L520.79,362.86L520.93,363.94L521.08,365.01L521.24,366.09L521.42,367.17L521.61,368.25L521.81,369.32L522.02,370.40L522.25,371.47L522.49,372.55L522.74,373.63L523.00,374.70L523.28,375.78L523.57,376.85L523.87,377.93L524.19,379.00L524.51,380.08L524.85,381.15L525.20,382.23L525.56,383.30L525.94,384.37L526.33,385.45L526.73,386.52L527.14,387.59L527.56,388.66L528.00,389.73L528.45,390.81L528.91,391.88L529.38,392.95L529.87,394.02L530.36,395.09L530.87,396.16L531.39,397.23L531.92,398.30L532.47,399.36L533.02,400.43L533.59,401.50L534.17,402.57L534.76,403.63L535.36,404.70L535.98,405.77L536.60,406.83L537.24,407.90L537.89,408.96L538.55,410.03L539.22,411.09L539.90,412.15L540.59,413.22L541.30,414.28L542.01,415.34L542.74,416.40L543.48,417.46L544.23,418.52L544.99,419.58L545.76,420.64L546.54,421.70L547.33,422.76L548.13,423.81L548.95,424.87L549.77,425.93L550.60,426.98L551.45,428.04L552.30,429.09L553.17,430.14L554.05,431.19L554.93,432.25L555.83,433.30L556.73,434.35L557.65,435.40L558.58,436.45L559.51,437.49L560.46,438.54L561.41,439.59M925.20,209.70L924.94,208.84L924.68,207.98L924.42,207.12L924.16,206.26L923.89,205.40L923.63,204.54L923.37,203.68L923.10,202.82L922.84,201.96L922.58,201.10L922.31,200.24L922.05,199.38L921.78,198.52L921.51,197.67L921.25,196.81L920.98,195.95L920.71,195.09L920.45,194.23L920.18,193.37L919.91,192.52L919.64,191.66L919.37,190.80L919.10,189.94L918.83,189.09L918.56,188.23L918.29,187.37L918.02,186.52L917.75,185.66L917.48,184.81L917.21,183.95L916.93,183.10L916.66,182.24L916.39,181.38L916.12,180.53L915.84,179.68L915.57,178.82L915.30,177.97L915.02,177.11L914.75,176.26L914.47,175.41L914.20,174.55L913.92,173.70L913.65,172.85L913.37,171.99L913.10,171.14L912.82,170.29L912.54,169.44L912.27,168.59L911.99,167.74L911.71,166.89L911.44,166.04L911.16,165.19L910.88,164.34L910.61,163.49L910.33,162.64L910.05,161.79L909.77,160.94L909.50,160.09L909.22,159.24L908.94,158.40L908.66,157.55L908.38,156.70L908.10,155.86L907.82,155.01L907.55,154.16L907.27,153.32L906.99,152.47L906.71,151.63L906.43,150.79L906.15,149.94L905.87,149.10L905.59,148.26L905.31,147.42L905.03,146.57L904.75,145.73L904.47,144.89L904.19,144.05L903.91,143.21L903.63,142.37L903.35,141.54L903.07,140.70L902.79,139.86L902.51,139.02L902.23,138.19L901.95,137.35L901.67,136.52L901.39,135.68L901.11,134.85L900.83,134.02L900.55,133.19L900.27,132.35L899.99,131.52L899.72,130.69L899.44,129.86L899.16,129.04L898.88,128.21L898.60,127.38L898.32,126.56L898.04,125.73L897.76,124.91L897.48,124.08L897.20,123.26L896.92,122.44L896.64,121.62L896.36,120.80L896.08,119.98L895.80,119.16L895.52,118.35L895.24,117.53L894.97,116.72L894.69,115.90L894.41,115.09L894.13,114.28L893.85,113.47L893.57,112.67L893.29,111.86L893.01,111.05L892.74,110.25L892.46,109.45L892.18,108.65L891.90,107.85L891.62,107.05L891.34,106.25L891.06,105.46L890.78,104.67L890.51,103.88L890.23,103.09L889.95,102.30L889.67,101.52L889.39,100.74L889.11,99.95L888.83,99.18L888.55,98.40L888.27,97.63L887.99,96.86L887.71,96.09L887.43,95.32L887.15,94.56L886.87,93.80L886.59,93.04L886.31,92.28L886.02,91.53L885.74,90.78L885.46,90.04L885.17,89.30L884.89,88.56L884.60,87.82L884.32,87.09L884.03,86.37L883.74,85.64L883.45,84.92L883.16,84.21L882.87,83.50L882.58,82.79L882.29,82.10L881.99,81.40L881.69,80.71L881.39,80.03L881.09,79.35L880.79,78.68L880.49,78.01L880.18,77.35L879.87,76.70L879.56,76.05L879.24,75.41L878.92,74.78L878.60,74.16L878.27,73.55L877.94,72.94L877.61,72.34L877.27,71.75L876.92,71.17L876.57,70.61L876.22,70.05L875.86,69.50L875.49,68.96L875.11,68.44L874.73,67.93L874.34,67.43L873.94,66.94L873.53,66.47L873.11,66.01L872.68,65.56L872.24,65.13L871.79,64.72L871.32,64.32L870.84,63.94L870.35,63.58L869.84,63.23L869.32,62.90L868.78,62.59L868.22,62.30L867.64,62.03L867.05,61.78L866.43,61.55L865.79,61.34L865.13,61.15L864.45,60.99L863.74,60.84L863.00,60.72L862.24,60.62L861.46,60.55L860.64,60.49L859.80,60.46L858.93,60.46L858.03,60.47L857.10,60.51L856.13,60.57L855.14,60.66L854.12,60.76L853.06,60.89L851.97,61.05L850.85,61.22L849.70,61.42L848.51,61.63L847.29,61.87L846.05,62.13L844.77,62.41L843.45,62.71L842.11,63.02L840.74,63.36L839.34,63.71L837.90,64.08L836.44,64.47L834.95,64.87L833.44,65.29L831.89,65.73L830.32,66.18L828.73,66.64L827.11,67.12L825.46,67.61L823.79,68.12L822.10,68.63L820.39,69.16L818.66,69.70L816.90,70.26L815.13,70.82L813.33,71.39L811.52,71.97L809.69,72.56L807.84,73.16L805.98,73.77L804.10,74.39L802.20,75.02L800.29,75.65L798.36,76.29L796.43,76.94L794.47,77.60L792.51,78.26L790.54,78.93L788.55,79.60L786.55,80.28L784.54,80.97L782.52,81.66L780.49,82.36L778.46,83.06L776.41,83.76L774.36,84.48L772.30,85.19L770.23,85.91L768.15,86.64L766.07,87.36L763.98,88.10L761.88,88.83L759.78,89.57L757.67,90.32L755.56,91.06L753.44,91.81L751.32,92.56L749.19,93.32L747.06,94.08L744.93,94.84L742.79,95.61L740.65,96.37L738.51,97.14L736.36,97.92L734.22,98.69L732.06,99.47L729.91,100.25L727.76,101.03L725.60,101.81L723.44,102.60L721.28,103.38L719.12,104.17L716.96,104.96L714.80,105.76L712.64,106.55L710.48,107.35L708.32,108.15L706.15,108.95L703.99,109.75L701.83,110.55L699.67,111.35L697.50,112.16L695.34,112.97L693.18,113.78L691.03,114.58L688.87,115.40L686.71,116.21L684.56,117.02L682.40,117.84L680.25,118.65L678.10,119.47L675.95,120.29L673.81,121.10L671.67,121.92L669.52,122.75L667.38,123.57L665.25,124.39L663.11,125.21L660.98,126.04L658.85,126.86L656.73,127.69L654.61,128.52L652.49,129.34L650.37,130.17L648.26,131.00L646.15,131.83L644.04,132.66L641.94,133.50L639.84,134.33L637.74,135.16L635.65,136.00L633.56,136.83L631.48,137.66L629.40,138.50L627.33,139.34L625.25,140.17L623.19,141.01L621.13,141.85L619.07,142.69L617.01,143.53L614.97,144.37L612.92,145.21L610.88,146.05L608.85,146.89L606.82,147.73L604.79,148.57L602.77,149.42L600.76,150.26L598.75,151.10L596.75,151.95L594.75,152.79L592.76,153.63L590.77,154.48L588.79,155.33L586.81,156.17L584.84,157.02L582.88,157.87L580.92,158.71L578.96,159.56L577.02,160.41L575.08,161.26L573.14,162.10L571.21,162.95L569.29,163.80L567.37,164.65L565.46,165.50L563.56,166.35L561.66,167.20L559.77,168.05L557.89,168.90L556.01,169.76L554.14,170.61L552.27,171.46L550.42,172.31L548.56,173.16L546.72,174.02L544.88,174.87L543.05,175.72L541.23,176.58L539.42,177.43L537.61,178.29L535.81,179.14L534.01,179.99L532.22,180.85L530.44,181.70L528.67,182.56L526.91,183.41L525.15,184.27L523.40,185.13L521.66,185.98L519.92,186.84L518.20,187.69L516.48,188.55L514.77,189.41L513.06,190.26L511.37,191.12L509.68,191.98L508.00,192.84L506.33,193.69L504.67,194.55L503.01,195.41L501.36,196.27L499.73,197.13L498.09,197.99L496.47,198.84L494.86,199.70L493.25,200.56L491.66,201.42L490.07,202.28L488.49,203.14L486.91,204.00L485.35,204.86L483.80,205.72L482.25,206.58L480.71,207.44L479.19,208.30L477.67,209.16L476.15,210.02L474.65,210.88L473.16,211.74L471.68,212.60L470.20,213.46L468.73,214.33L467.28,215.19L465.83,216.05L464.39,216.91L462.96,217.77L461.54,218.63L460.13,219.50L458.73,220.36L457.34,221.22L455.95,222.08L454.58,222.94L453.21,223.81L451.86,224.67L450.51,225.53L449.18,226.39L447.85,227.26L446.53,228.12L445.23,228.98L443.93,229.85L442.64,230.71L441.36,231.57L440.10,232.44L438.84,233.30L437.59,234.16L436.35,235.03L435.12,235.89L433.90,236.75L432.69,237.62L431.49,238.48L430.30,239.34L429.12,240.21L427.96,241.07L426.80,241.94L425.65,242.80L424.51,243.67L423.38,244.53L422.26,245.39L421.15,246.26L420.06,247.12L418.97,247.99L417.89,248.85L416.82,249.72L415.77,250.58L414.72,251.45L413.69,252.31L412.66,253.18L411.65,254.04L410.64,254.91L409.65,255.77L408.66,256.64L407.69,257.50L406.73,258.37L405.78,259.23L404.84,260.10L403.91,260.96L402.99,261.83L402.08,262.69L401.18,263.56L400.29,264.43L399.42,265.29L398.55,266.16L397.69,267.02L396.85,267.89L396.02,268.75L395.19,269.62L394.38,270.49L393.58,271.35L392.79,272.22L392.01,273.08L391.25,273.95L390.49,274.82L389.74,275.68L389.01,276.55L388.28,277.41L387.57,278.28L386.87,279.15L386.18,280.01L385.50,280.88L384.83,281.75L384.17,282.61L383.53,283.48L382.89,284.35L382.27,285.21L381.66,286.08L381.06,286.94M1078.50,217.00L1077.67,216.20L1076.83,215.39L1075.99,214.59L1075.15,213.79L1074.31,212.99L1073.46,212.19L1072.61,211.39L1071.76,210.59L1070.90,209.79L1070.05,208.99L1069.18,208.19L1068.32,207.39L1067.45,206.59L1066.58,205.79L1065.71,205.00L1064.84,204.20L1063.96,203.41L1063.08,202.61L1062.20,201.82L1061.31,201.02L1060.43,200.23L1059.54,199.44L1058.64,198.64L1057.75,197.85L1056.85,197.06L1055.95,196.27L1055.05,195.48L1054.14,194.69L1053.24,193.91L1052.33,193.12L1051.42,192.33L1050.50,191.54L1049.59,190.76L1048.67,189.97L1047.75,189.19L1046.83,188.41L1045.91,187.62L1044.98,186.84L1044.05,186.06L1043.12,185.28L1042.19,184.50L1041.26,183.72L1040.32,182.94L1039.38,182.17L1038.44,181.39L1037.50,180.62L1036.56,179.84L1035.62,179.07L1034.67,178.29L1033.72,177.52L1032.77,176.75L1031.82,175.98L1030.87,175.21L1029.92,174.45L1028.96,173.68L1028.00,172.91L1027.04,172.15L1026.08,171.38L1025.12,170.62L1024.16,169.86L1023.20,169.10L1022.23,168.34L1021.27,167.58L1020.30,166.82L1019.33,166.07L1018.36,165.31L1017.39,164.56L1016.42,163.81L1015.44,163.06L1014.47,162.31L1013.50,161.56L1012.52,160.81L1011.54,160.06L1010.57,159.32L1009.59,158.58L1008.61,157.83L1007.63,157.09L1006.65,156.36L1005.67,155.62L1004.69,154.88L1003.71,154.15L1002.72,153.42L1001.74,152.68L1000.76,151.95L999.77,151.23L998.79,150.50L997.81,149.78L996.82,149.05L995.84,148.33L994.85,147.61L993.87,146.90L992.88,146.18L991.89,145.47L990.91,144.76L989.92,144.05L988.94,143.34L987.95,142.64L986.97,141.93L985.98,141.23L985.00,140.53L984.01,139.84L983.03,139.14L982.05,138.45L981.06,137.76L980.08,137.07L979.10,136.39L978.12,135.71L977.13,135.03L976.15,134.35L975.17,133.67L974.19,133.00L973.22,132.33L972.24,131.67L971.26,131.00L970.28,130.34L969.31,129.69L968.34,129.03L967.36,128.38L966.39,127.73L965.42,127.09L964.45,126.45L963.48,125.81L962.51,125.17L961.55,124.54L960.58,123.91L959.62,123.29L958.65,122.67L957.69,122.05L956.73,121.44L955.78,120.83L954.82,120.22L953.86,119.62L952.91,119.02L951.96,118.43L951.01,117.84L950.06,117.26L949.11,116.68L948.17,116.10L947.22,115.53L946.28,114.97L945.34,114.41L944.41,113.85L943.47,113.30L942.54,112.76L941.61,112.21L940.68,111.68L939.75,111.15L938.82,110.63L937.90,110.11L936.98,109.59L936.06,109.09L935.14,108.59L934.22,108.09L933.31,107.60L932.40,107.12L931.49,106.64L930.58,106.17L929.68,105.71L928.78,105.26L927.87,104.81L926.98,104.36L926.08,103.93L925.18,103.50L924.29,103.08L923.40,102.67L922.51,102.26L921.62,101.87L920.74,101.48L919.86,101.09L918.97,100.72L918.09,100.36L917.22,100.00L916.34,99.65L915.47,99.31L914.59,98.98L913.72,98.66L912.85,98.34L911.98,98.04L911.11,97.74L910.25,97.46L909.38,97.18L908.52,96.92L907.65,96.66L906.79,96.41L905.93,96.18L905.06,95.95L904.20,95.73L903.34,95.52L902.48,95.33L901.62,95.14L900.76,94.97L899.90,94.80L899.03,94.65L898.17,94.50L897.31,94.37L896.45,94.25L895.58,94.14L894.72,94.04L893.85,93.95L892.98,93.87L892.11,93.80L891.24,93.74L890.37,93.70L889.49,93.67L888.62,93.64L887.74,93.63L886.86,93.63L885.98,93.64L885.09,93.66L884.20,93.70L883.31,93.74L882.42,93.80L881.52,93.86L880.62,93.94L879.71,94.03L878.81,94.13L877.89,94.24L876.98,94.36L876.06,94.49L875.14,94.64L874.21,94.79L873.28,94.95L872.34,95.13L871.40,95.32L870.46,95.51L869.51,95.72L868.56,95.93L867.60,96.16L866.64,96.40L865.67,96.64L864.70,96.90L863.72,97.16L862.74,97.44L861.75,97.73L860.76,98.02L859.76,98.32L858.76,98.64L857.75,98.96L856.74,99.29L855.73,99.63L854.70,99.97L853.68,100.33L852.64,100.70L851.61,101.07L850.56,101.45L849.52,101.84L848.46,102.24L847.41,102.64L846.34,103.05L845.28,103.47L844.20,103.90L843.13,104.33L842.04,104.78L840.96,105.22L839.87,105.68L838.77,106.14L837.67,106.61L836.56,107.09L835.45,107.57L834.34,108.06L833.22,108.55L832.10,109.05L830.97,109.56L829.84,110.07L828.70,110.59L827.56,111.11L826.42,111.64L825.27,112.18L824.12,112.72L822.97,113.26L821.81,113.81L820.64,114.37L819.48,114.93L818.31,115.50L817.14,116.07L815.96,116.64L814.78,117.22L813.60,117.80L812.41,118.39L811.22,118.98L810.03,119.58L808.84,120.18L807.64,120.79L806.44,121.40L805.24,122.01L804.03,122.63L802.83,123.25L801.62,123.87L800.40,124.50L799.19,125.13L797.97,125.76L796.75,126.40L795.53,127.04L794.31,127.69L793.09,128.34L791.86,128.99L790.63,129.64L789.40,130.30L788.17,130.96L786.94,131.62L785.71,132.29L784.47,132.96L783.24,133.63L782.00,134.30L780.76,134.98L779.52,135.66L778.28,136.34L777.04,137.03L775.80,137.71L774.56,138.40L773.32,139.09L772.07,139.79L770.83,140.48L769.58,141.18L768.34,141.88L767.09,142.59L765.85,143.29L764.60,144.00L763.36,144.71L762.11,145.42L760.87,146.13L759.62,146.85L758.37,147.57L757.13,148.28L755.88,149.00L754.64,149.73L753.40,150.45L752.15,151.18L750.91,151.91L749.67,152.63L748.42,153.37L747.18,154.10L745.94,154.83L744.70,155.57L743.46,156.30L742.23,157.04L740.99,157.78L739.75,158.53L738.52,159.27L737.29,160.01L736.05,160.76L734.82,161.51L733.59,162.25L732.37,163.00L731.14,163.76L729.91,164.51L728.69,165.26L727.47,166.02L726.25,166.77L725.03,167.53L723.81,168.29L722.60,169.05L721.38,169.81L720.17,170.57L718.96,171.33L717.76,172.10L716.55,172.86L715.35,173.63L714.15,174.39L712.95,175.16L711.75,175.93L710.55,176.70L709.36,177.47L708.17,178.24L706.99,179.02L705.80,179.79L704.62,180.56L703.44,181.34L702.26,182.11L701.09,182.89L699.91,183.67L698.74,184.45L697.58,185.23L696.41,186.01L695.25,186.79L694.09,187.57L692.94,188.35L691.79,189.14L690.64,189.92L689.49,190.71L688.35,191.49L687.21,192.28L686.07,193.06L684.94,193.85L683.81,194.64L682.68,195.43L681.56,196.22L680.44,197.01L679.32,197.80L678.21,198.59L677.10,199.38L675.99,200.18L674.89,200.97L673.79,201.76L672.69,202.56L671.60,203.35L670.51,204.15L669.43,204.94L668.35,205.74L667.27,206.54L666.20,207.34L665.13,208.13L664.06,208.93L663.00,209.73L661.94,210.53L660.89,211.33L659.84,212.13L658.79,212.93L657.75,213.73L656.71,214.54L655.68,215.34L654.65,216.14L653.63,216.95L652.61,217.75L651.59,218.55L650.58,219.36L649.57,220.16L648.57,220.97L647.57,221.77L646.57,222.58L645.58,223.39L644.60,224.19L643.62,225.00L642.64,225.81L641.67,226.62L640.70,227.43L639.74,228.24L638.78,229.04L637.83,229.85L636.88,230.66L635.94,231.47L635.00,232.28L634.06,233.10L633.14,233.91L632.21,234.72L631.29,235.53L630.38,236.34L629.47,237.16L628.56,237.97L627.66,238.78L626.77,239.59L625.88,240.41L624.99,241.22L624.11,242.04L623.24,242.85L622.37,243.67L621.51,244.48L620.65,245.30L619.79,246.11L618.95,246.93L618.10,247.74L617.26,248.56L616.43,249.38L615.60,250.19L614.78,251.01L613.97,251.83L613.16,252.64L612.35,253.46L611.55,254.28L610.75,255.10L609.96,255.91L609.18,256.73L608.40,257.55L607.63,258.37L606.86,259.19L606.10,260.01L605.35,260.83L604.59,261.65L603.85,262.47L603.11,263.29L602.38,264.11L601.65,264.93L600.93,265.75L600.21,266.57L599.50,267.39L598.80,268.21L598.10,269.03L597.40,269.85L596.72,270.67L596.04,271.50L595.36,272.32L594.69,273.14L594.03,273.96L593.37,274.78L592.72,275.61L592.07,276.43L591.43,277.25L590.80,278.07L590.17,278.90L589.55,279.72L588.93,280.54L588.32,281.37L587.72,282.19L587.12,283.01L586.53,283.84L585.94,284.66L585.37,285.48L584.79,286.31L584.23,287.13M1128.90,197.50L1127.97,196.63L1127.03,195.75L1126.09,194.88L1125.15,194.00L1124.19,193.13L1123.24,192.25L1122.28,191.38L1121.31,190.51L1120.34,189.63L1119.37,188.76L1118.39,187.88L1117.40,187.01L1116.42,186.14L1115.42,185.26L1114.42,184.39L1113.42,183.52L1112.41,182.64L1111.40,181.77L1110.38,180.90L1109.36,180.02L1108.34,179.15L1107.31,178.28L1106.27,177.40L1105.24,176.53L1104.19,175.66L1103.15,174.78L1102.09,173.91L1101.04,173.04L1099.98,172.17L1098.91,171.29L1097.84,170.42L1096.77,169.55L1095.69,168.68L1094.61,167.80L1093.53,166.93L1092.44,166.06L1091.34,165.19L1090.25,164.31L1089.15,163.44L1088.04,162.57L1086.93,161.70L1085.82,160.83L1084.70,159.96L1083.58,159.09L1082.45,158.21L1081.32,157.34L1080.19,156.47L1079.06,155.60L1077.92,154.73L1076.77,153.86L1075.62,152.99L1074.47,152.12L1073.32,151.25L1072.16,150.38L1071.00,149.51L1069.83,148.64L1068.66,147.77L1067.49,146.90L1066.32,146.03L1065.14,145.16L1063.96,144.29L1062.77,143.42L1061.58,142.55L1060.39,141.68L1059.19,140.82L1057.99,139.95L1056.79,139.08L1055.59,138.21L1054.38,137.34L1053.17,136.48L1051.95,135.61L1050.73,134.74L1049.51,133.87L1048.29,133.01L1047.07,132.14L1045.84,131.27L1044.60,130.41L1043.37,129.54L1042.13,128.68L1040.89,127.81L1039.65,126.94L1038.40,126.08L1037.16,125.21L1035.90,124.35L1034.65,123.49L1033.40,122.62L1032.14,121.76L1030.88,120.89L1029.61,120.03L1028.35,119.17L1027.08,118.31L1025.81,117.44L1024.54,116.58L1023.26,115.72L1021.99,114.86L1020.71,114.00L1019.43,113.14L1018.15,112.28L1016.86,111.42L1015.58,110.56L1014.29,109.70L1013.00,108.84L1011.71,107.98L1010.41,107.13L1009.12,106.27L1007.82,105.41L1006.52,104.56L1005.22,103.70L1003.92,102.85L1002.62,101.99L1001.31,101.14L1000.01,100.29L998.70,99.43L997.39,98.58L996.08,97.73L994.77,96.88L993.46,96.03L992.15,95.18L990.84,94.33L989.52,93.49L988.21,92.64L986.89,91.79L985.58,90.95L984.26,90.11L982.94,89.26L981.63,88.42L980.31,87.58L978.99,86.74L977.68,85.90L976.36,85.07L975.04,84.23L973.72,83.39L972.41,82.56L971.09,81.73L969.77,80.90L968.46,80.07L967.14,79.24L965.83,78.42L964.52,77.60L963.20,76.78L961.89,75.96L960.59,75.14L959.28,74.32L957.97,73.51L956.67,72.70L955.37,71.89L954.07,71.09L952.77,70.29L951.48,69.49L950.18,68.69L948.90,67.90L947.61,67.11L946.33,66.33L945.05,65.55L943.78,64.77L942.51,64.00L941.24,63.24L939.99,62.48L938.73,61.72L937.48,60.97L936.24,60.23L935.01,59.49L933.78,58.77L932.56,58.04L931.34,57.33L930.14,56.63L928.94,55.94L927.76,55.25L926.58,54.58L925.41,53.92L924.26,53.28L923.11,52.64L921.98,52.03L920.87,51.43L919.76,50.84L918.67,50.28L917.59,49.73L916.53,49.21L915.48,48.71L914.45,48.24L913.44,47.79L912.44,47.37L911.45,46.98L910.49,46.63L909.53,46.30L908.59,46.02L907.67,45.77L906.75,45.56L905.85,45.39L904.95,45.26L904.06,45.17L903.18,45.13L902.30,45.13L901.42,45.17L900.54,45.26L899.65,45.39L898.76,45.55L897.86,45.76L896.96,46.01L896.04,46.30L895.11,46.62L894.17,46.98L893.22,47.37L892.26,47.79L891.28,48.23L890.29,48.71L889.28,49.21L888.26,49.73L887.23,50.27L886.18,50.84L885.13,51.42L884.06,52.02L882.98,52.64L881.88,53.27L880.78,53.92L879.67,54.57L878.55,55.25L877.42,55.93L876.28,56.62L875.13,57.32L873.97,58.04L872.81,58.76L871.64,59.48L870.47,60.22L869.28,60.96L868.10,61.71L866.90,62.47L865.71,63.23L864.50,63.99L863.30,64.76L862.08,65.54L860.87,66.32L859.65,67.10L858.43,67.89L857.20,68.68L855.98,69.48L854.75,70.28L853.51,71.08L852.28,71.88L851.04,72.69L849.80,73.50L848.56,74.31L847.32,75.13L846.07,75.95L844.83,76.76L843.58,77.59L842.33,78.41L841.09,79.23L839.84,80.06L838.59,80.89L837.33,81.72L836.08,82.55L834.83,83.38L833.58,84.22L832.33,85.05L831.08,85.89L829.82,86.73L828.57,87.57L827.32,88.41L826.07,89.25L824.82,90.09L823.57,90.94L822.32,91.78L821.07,92.63L819.82,93.47L818.57,94.32L817.32,95.17L816.07,96.02L814.83,96.87L813.58,97.72L812.34,98.57L811.09,99.42L809.85,100.27L808.61,101.13L807.37,101.98L806.13,102.84L804.90,103.69L803.66,104.55L802.43,105.40L801.19,106.26L799.96,107.12L798.73,107.97L797.50,108.83L796.28,109.69L795.05,110.55L793.83,111.41L792.61,112.27L791.39,113.13L790.17,113.99L788.96,114.85L787.74,115.71L786.53,116.57L785.32,117.43L784.12,118.29L782.91,119.16L781.71,120.02L780.51,120.88L779.31,121.75L778.11,122.61L776.92,123.47L775.73,124.34L774.54,125.20L773.35,126.07L772.17,126.93L770.98,127.80L769.80,128.66L768.63,129.53L767.45,130.40L766.28,131.26L765.11,132.13L763.95,133.00L762.78,133.86L761.62,134.73L760.47,135.60L759.31,136.46L758.16,137.33L757.01,138.20L755.86,139.07L754.72,139.94L753.58,140.80L752.44,141.67L751.31,142.54L750.18,143.41L749.05,144.28L747.92,145.15L746.80,146.02L745.68,146.89L744.57,147.76L743.46,148.63L742.35,149.50L741.24,150.37L740.14,151.24L739.04,152.11L737.95,152.98L736.86,153.85L735.77,154.72L734.68,155.59L733.60,156.46L732.52,157.33L731.45,158.20L730.38,159.07L729.31,159.95L728.25,160.82L727.19,161.69L726.13,162.56L725.08,163.43L724.03,164.30L722.99,165.18L721.95,166.05L720.91,166.92L719.88,167.79L718.85,168.66L717.82,169.54L716.80,170.41L715.78,171.28L714.77,172.15L713.76,173.03L712.76,173.90L711.75,174.77L710.76,175.65L709.76,176.52L708.78,177.39L707.79,178.26L706.81,179.14L705.83,180.01L704.86,180.88L703.89,181.76L702.93,182.63L701.97,183.50L701.02,184.38L700.07,185.25L699.12,186.13L698.18,187.00L697.24,187.87L696.31,188.75L695.38,189.62L694.45,190.50L693.54,191.37L692.62,192.24L691.71,193.12L690.80,193.99L689.90,194.87L689.01,195.74L688.11,196.61L687.23,197.49L686.34,198.36L685.47,199.24L684.59,200.11L683.72,200.99L682.86,201.86L682.00,202.74L681.15,203.61L680.30,204.49L679.45,205.36L678.61,206.24L677.78,207.11L676.95,207.99L676.12,208.86L675.30,209.74L674.49,210.61L673.68,211.49L672.87,212.36L672.07,213.24L671.28,214.11L670.49,214.99L669.70,215.86L668.92,216.74L668.15,217.61L667.38,218.49L666.61,219.36L665.85,220.24L665.10,221.11L664.35,221.99L663.61,222.86L662.87,223.74L662.14,224.62L661.41,225.49L660.69,226.37L659.97,227.24L659.26,228.12L658.55,228.99L657.85,229.87L657.15,230.75L656.46,231.62L655.78,232.50L655.10,233.37L654.42,234.25L653.75,235.12L653.09,236.00L652.43,236.88L651.78,237.75L651.13,238.63L650.49,239.50L649.85,240.38L649.22,241.26L648.60,242.13L647.98,243.01L647.36,243.88L646.76,244.76L646.15,245.64L645.56,246.51L644.97,247.39L644.38,248.26L643.80,249.14L643.23,250.02L642.66,250.89L642.09,251.77L641.54,252.65L640.99,253.52L640.44,254.40L639.90,255.27L639.37,256.15L638.84,257.03L638.31,257.90L637.80,258.78L637.29,259.66L636.78,260.53L636.28,261.41L635.79,262.29L635.30,263.16L634.82,264.04L634.34,264.91L633.88,265.79L633.41,266.67L632.95,267.54L632.50,268.42L632.05,269.30L631.61,270.17L631.18,271.05L630.75,271.93L630.33,272.80L629.91,273.68L629.50,274.56L629.10,275.43L628.70,276.31L628.31,277.19L627.92,278.06L627.54,278.94L627.17,279.82L626.80,280.69L626.44,281.57L626.08,282.45L625.73,283.32L625.39,284.20L625.05,285.08L624.72,285.95L624.40,286.83L624.08,287.71L623.76,288.58L623.46,289.46L623.16,290.34L622.86,291.21L622.57,292.09L622.29,292.97L622.02,293.84L621.75,294.72L621.48,295.60L621.22,296.47L620.97,297.35M820.00,230.00L819.28,229.56L818.55,229.13L817.83,228.70L817.11,228.26L816.39,227.84L815.66,227.41L814.94,226.98L814.22,226.56L813.50,226.14L812.77,225.72L812.05,225.30L811.33,224.89L810.60,224.48L809.88,224.07L809.16,223.66L808.43,223.25L807.71,222.85L806.98,222.45L806.26,222.05L805.53,221.65L804.81,221.25L804.08,220.86L803.36,220.47L802.63,220.08L801.91,219.70L801.18,219.31L800.45,218.93L799.73,218.55L799.00,218.17L798.27,217.80L797.54,217.43L796.81,217.06L796.09,216.69L795.36,216.33L794.63,215.96L793.90,215.61L793.16,215.25L792.43,214.89L791.70,214.54L790.97,214.19L790.24,213.84L789.50,213.50L788.77,213.16L788.03,212.82L787.30,212.48L786.56,212.15L785.82,211.82L785.08,211.49L784.35,211.16L783.61,210.84L782.87,210.52L782.13,210.20L781.38,209.89L780.64,209.57L779.90,209.27L779.15,208.96L778.41,208.65L777.66,208.35L776.91,208.06L776.16,207.76L775.42,207.47L774.66,207.18L773.91,206.89L773.16,206.61L772.41,206.33L771.65,206.05L770.89,205.78L770.14,205.51L769.38,205.24L768.62,204.97L767.86,204.71L767.10,204.45L766.33,204.19L765.57,203.94L764.80,203.69L764.03,203.44L763.26,203.20L762.49,202.96L761.72,202.72L760.94,202.49L760.17,202.26L759.39,202.03L758.61,201.80L757.83,201.58L757.05,201.36L756.27,201.15L755.48,200.94L754.69,200.73L753.91,200.52L753.12,200.32L752.32,200.12L751.53,199.93L750.73,199.74L749.93,199.55L749.13,199.37L748.33,199.18L747.53,199.01L746.72,198.83L745.91,198.66L745.10,198.49L744.29,198.33L743.48,198.17L742.66,198.01L741.84,197.86L741.02,197.71L740.20,197.56L739.37,197.42L738.54,197.28L737.71,197.14L736.88,197.01L736.05,196.88L735.21,196.75L734.37,196.63L733.53,196.51L732.68,196.40L731.84,196.29L730.99,196.18L730.14,196.07L729.28,195.97L728.42,195.88L727.56,195.78L726.70,195.69L725.84,195.61L724.97,195.53L724.10,195.45L723.22,195.37L722.35,195.30L721.47,195.23L720.59,195.17L719.70,195.11L718.82,195.05L717.93,195.00L717.03,194.95L716.14,194.91L715.24,194.86L714.34,194.83L713.43,194.79L712.52,194.76L711.61,194.73L710.70,194.71L709.78,194.69L708.86,194.68L707.94,194.66L707.01,194.66L706.09,194.65L705.15,194.65L704.22,194.65L703.28,194.66L702.34,194.67L701.39,194.69L700.45,194.70L699.49,194.72L698.54,194.75L697.58,194.78L696.62,194.81L695.66,194.85L694.69,194.89L693.72,194.93L692.74,194.98L691.77,195.03L690.79,195.09L689.80,195.14L688.82,195.21L687.83,195.27L686.83,195.34L685.83,195.42L684.83,195.49L683.83,195.57L682.82,195.66L681.81,195.75L680.80,195.84L679.78,195.93L678.76,196.03L677.74,196.13L676.71,196.24L675.68,196.35L674.65,196.46L673.61,196.58L672.57,196.70L671.52,196.82L670.48,196.95L669.43,197.08L668.37,197.22L667.32,197.36L666.26,197.50L665.19,197.64L664.12,197.79L663.05,197.94L661.98,198.10L660.90,198.26L659.82,198.42L658.74,198.59L657.65,198.76L656.56,198.93L655.47,199.11L654.37,199.29L653.28,199.47L652.17,199.66L651.07,199.85L649.96,200.04L648.85,200.24L647.73,200.44L646.61,200.64L645.49,200.85L644.37,201.06L643.24,201.27L642.11,201.49L640.98,201.71L639.84,201.93L638.70,202.16L637.56,202.39L636.41,202.62L635.26,202.86L634.11,203.10L632.96,203.34L631.80,203.59L630.64,203.83L629.48,204.09L628.32,204.34L627.15,204.60L625.98,204.86L624.80,205.12L623.63,205.39L622.45,205.66L621.27,205.93L620.08,206.21L618.90,206.49L617.71,206.77L616.52,207.06L615.33,207.35L614.13,207.64L612.93,207.93L611.73,208.23L610.53,208.53L609.32,208.83L608.11,209.13L606.90,209.44L605.69,209.75L604.48,210.07L603.26,210.38L602.04,210.70L600.82,211.03L599.60,211.35L598.38,211.68L597.15,212.01L595.92,212.34L594.69,212.68L593.46,213.01L592.23,213.35L590.99,213.70L589.75,214.04L588.51,214.39L587.27,214.74L586.03,215.10L584.79,215.45L583.54,215.81L582.30,216.17L581.05,216.54L579.80,216.90L578.55,217.27L577.30,217.64L576.04,218.02L574.79,218.39L573.53,218.77L572.28,219.15L571.02,219.53L569.76,219.92L568.50,220.30L567.24,220.69L565.97,221.09L564.71,221.48L563.45,221.88L562.18,222.28L560.92,222.68L559.65,223.08L558.38,223.48L557.12,223.89L555.85,224.30L554.58,224.71L553.31,225.13L552.04,225.54L550.77,225.96L549.50,226.38L548.23,226.80L546.96,227.23L545.69,227.65L544.42,228.08L543.14,228.51L541.87,228.94L540.60,229.38L539.33,229.81L538.06,230.25L536.78,230.69L535.51,231.13L534.24,231.58L532.97,232.02L531.70,232.47L530.43,232.92L529.16,233.37L527.89,233.82L526.62,234.28L525.35,234.73L524.08,235.19L522.81,235.65L521.54,236.11L520.28,236.58L519.01,237.04L517.75,237.51L516.48,237.97L515.22,238.44L513.95,238.92L512.69,239.39L511.43,239.86L510.17,240.34L508.91,240.82L507.65,241.30L506.40,241.78L505.14,242.26L503.89,242.74L502.63,243.23L501.38,243.72L500.13,244.21L498.88,244.70L497.64,245.19L496.39,245.68L495.15,246.17L493.90,246.67L492.66,247.17L491.42,247.66L490.18,248.16L488.95,248.67L487.71,249.17L486.48,249.67L485.25,250.18L484.02,250.68L482.79,251.19L481.57,251.70L480.35,252.21L479.13,252.72L477.91,253.23L476.69,253.75L475.48,254.26L474.26,254.78L473.05,255.30L471.85,255.82L470.64,256.34L469.44,256.86L468.24,257.38L467.04,257.90L465.85,258.43L464.65,258.95L463.46,259.48L462.28,260.01L461.09,260.53L459.91,261.06L458.73,261.59L457.55,262.13L456.38,262.66L455.21,263.19L454.04,263.73L452.88,264.26L451.72,264.80L450.56,265.34L449.40,265.88L448.25,266.42L447.10,266.96L445.95,267.50L444.81,268.04L443.67,268.58L442.53,269.13L441.40,269.67L440.27,270.22L439.15,270.77L438.02,271.31L436.90,271.86L435.79,272.41L434.67,272.96L433.57,273.51L432.46,274.06L431.36,274.61L430.26,275.17L429.17,275.72L428.07,276.28L426.99,276.83L425.90,277.39L424.82,277.94L423.75,278.50L422.68,279.06L421.61,279.62L420.55,280.18L419.49,280.74L418.43,281.30L417.38,281.86L416.33,282.42L415.29,282.98L414.25,283.55L413.21,284.11L412.18,284.67L411.15,285.24L410.13,285.80L409.11,286.37L408.10,286.94L407.09,287.50L406.08,288.07L405.08,288.64L404.08,289.21L403.09,289.78L402.10,290.35L401.12,290.92L400.14,291.49L399.16,292.06L398.19,292.63L397.23,293.20L396.27,293.77L395.31,294.35L394.36,294.92L393.41,295.49L392.47,296.07L391.53,296.64L390.60,297.21L389.67,297.79L388.75,298.37L387.83,298.94L386.91,299.52L386.00,300.09L385.10,300.67L384.20,301.25L383.31,301.82L382.42,302.40L381.53,302.98L380.65,303.56L379.78,304.14L378.91,304.71L378.04,305.29L377.18,305.87L376.33,306.45L375.48,307.03L374.63,307.61L373.79,308.19L372.96,308.77L372.13,309.35L371.30,309.93L370.48,310.51L369.67,311.09L368.86,311.67L368.05,312.25L367.25,312.83L366.46,313.42L365.67,314.00L364.89,314.58L364.11,315.16L363.34,315.74L362.57,316.32L361.81,316.91L361.05,317.49L360.30,318.07L359.55,318.65L358.81,319.23L358.07,319.81L357.34,320.40L356.62,320.98L355.90,321.56L355.18,322.14L354.47,322.72L353.77,323.31L353.07,323.89L352.37,324.47L351.69,325.05L351.00,325.63L350.32,326.21L349.65,326.79L348.99,327.38L348.32,327.96L347.67,328.54L347.02,329.12L346.37,329.70L345.73,330.28L345.10,330.86L344.47,331.44L343.84,332.02L343.22,332.60L342.61,333.18L342.00,333.76L341.40,334.34L340.80,334.92L340.21,335.50L339.62,336.08L339.04,336.66L338.47,337.23L337.90,337.81L337.33,338.39L336.77,338.97L336.22,339.54L335.67,340.12L335.12,340.70L334.58,341.27L334.05,341.85L333.52,342.42L333.00,343.00" fill="none" stroke="#5c5c5c" stroke-width="1.39" stroke-dasharray="1.39 2.29"/>
<path d="M908.10,67.90L911.93,70.07L915.83,72.49L919.78,75.13L923.79,77.95L927.87,80.92L931.99,84.03L936.17,87.24L940.38,90.55L944.63,93.94L948.91,97.40L953.21,100.91L957.52,104.47L961.84,108.08L966.16,111.73L970.49,115.40L974.80,119.11L979.11,122.85L983.40,126.60L987.68,130.38L991.93,134.17L996.16,137.98L1000.35,141.81L1004.52,145.65L1008.65,149.50L1012.75,153.36L1016.80,157.23L1020.82,161.11L1024.78,165.00L1028.70,168.90M936.70,45.90L941.79,48.98L946.89,52.07L952.00,55.17L957.10,58.28L962.19,61.39L967.28,64.50L972.35,67.62L977.40,70.74L982.44,73.86L987.46,76.98L992.45,80.11L997.42,83.23L1002.36,86.35L1007.28,89.48L1012.17,92.61L1017.03,95.73L1021.86,98.86L1026.65,101.99L1031.41,105.11L1036.13,108.24L1040.82,111.37L1045.46,114.50L1050.07,117.63L1054.64,120.75L1059.16,123.88L1063.64,127.01L1068.07,130.14L1072.46,133.27L1076.80,136.40M1048.20,105.80L1049.84,106.82L1051.48,107.85L1053.11,108.88L1054.74,109.90L1056.36,110.93L1057.98,111.95L1059.59,112.98L1061.20,114.01L1062.81,115.03L1064.41,116.06L1066.01,117.09L1067.60,118.11L1069.19,119.14L1070.77,120.17L1072.35,121.20L1073.92,122.22L1075.49,123.25L1077.05,124.28L1078.61,125.31L1080.16,126.34L1081.71,127.37L1083.25,128.40L1084.79,129.42L1086.32,130.45L1087.85,131.48L1089.37,132.51L1090.89,133.54L1092.40,134.57L1093.90,135.60M966.80,85.70L967.41,86.14L968.03,86.58L968.64,87.01L969.26,87.45L969.87,87.89L970.49,88.33L971.10,88.77L971.72,89.21L972.33,89.65L972.95,90.09L973.56,90.53L974.18,90.97L974.79,91.41L975.41,91.85L976.02,92.29L976.63,92.74L977.25,93.18L977.86,93.62L978.48,94.06L979.09,94.50L979.70,94.95L980.32,95.39L980.93,95.83L981.54,96.28L982.15,96.72L982.76,97.17L983.38,97.61L983.99,98.06L984.60,98.50M1007.60,94.80L1007.86,95.01L1008.11,95.22L1008.37,95.43L1008.62,95.64L1008.88,95.85L1009.14,96.06L1009.39,96.27L1009.65,96.48L1009.90,96.69L1010.16,96.90L1010.41,97.11L1010.67,97.32L1010.93,97.53L1011.18,97.74L1011.44,97.95L1011.69,98.16L1011.95,98.37L1012.20,98.58L1012.46,98.79L1012.71,99.00L1012.97,99.21L1013.22,99.42L1013.47,99.64L1013.73,99.85L1013.98,100.06L1014.24,100.27L1014.49,100.48L1014.75,100.69L1015.00,100.90M1075.10,103.30L1075.67,103.56L1076.24,103.81L1076.80,104.07L1077.37,104.33L1077.94,104.59L1078.50,104.84L1079.07,105.10L1079.64,105.36L1080.20,105.61L1080.77,105.87L1081.33,106.13L1081.90,106.39L1082.46,106.64L1083.02,106.90L1083.59,107.16L1084.15,107.41L1084.71,107.67L1085.28,107.93L1085.84,108.19L1086.40,108.44L1086.96,108.70L1087.52,108.96L1088.08,109.21L1088.64,109.47L1089.20,109.73L1089.76,109.99L1090.32,110.24L1090.88,110.50L1091.44,110.76M926.50,104.60L927.31,104.86L928.13,105.12L928.94,105.39L929.76,105.66L930.58,105.94L931.40,106.23L932.22,106.52L933.05,106.82L933.88,107.13L934.71,107.44L935.54,107.76L936.37,108.08L937.21,108.41L938.05,108.74L938.89,109.08L939.73,109.43L940.58,109.78L941.43,110.14L942.28,110.50L943.13,110.87L943.98,111.24L944.84,111.62L945.70,112.00L946.56,112.39L947.42,112.78L948.29,113.18L949.16,113.58L950.03,113.99L950.90,114.40M892.20,108.20L892.51,108.46L892.81,108.72L893.12,108.97L893.42,109.24L893.72,109.50L894.03,109.76L894.33,110.03L894.64,110.29L894.94,110.56L895.25,110.83L895.55,111.10L895.86,111.37L896.16,111.64L896.46,111.91L896.77,112.18L897.07,112.46L897.38,112.74L897.68,113.01L897.98,113.29L898.29,113.57L898.59,113.85L898.89,114.13L899.20,114.42L899.50,114.70L899.81,114.98L900.11,115.27L900.41,115.56L900.72,115.84L901.02,116.13M946.50,126.60L946.98,126.88L947.47,127.15L947.95,127.43L948.44,127.71L948.93,128.00L949.41,128.28L949.90,128.56L950.39,128.85L950.87,129.14L951.36,129.42L951.85,129.71L952.34,130.00L952.83,130.29L953.32,130.59L953.81,130.88L954.30,131.17L954.79,131.47L955.28,131.77L955.77,132.06L956.26,132.36L956.75,132.66L957.24,132.96L957.74,133.27L958.23,133.57L958.72,133.87L959.22,134.18L959.71,134.48L960.21,134.79L960.70,135.10M987.60,136.40L987.81,136.63L988.02,136.85L988.24,137.08L988.45,137.31L988.66,137.54L988.87,137.76L989.08,137.99L989.29,138.22L989.50,138.45L989.71,138.67L989.93,138.90L990.14,139.13L990.35,139.36L990.56,139.58L990.77,139.81L990.98,140.04L991.19,140.27L991.40,140.49L991.61,140.72L991.82,140.95L992.03,141.18L992.24,141.41L992.45,141.63L992.66,141.86L992.86,142.09L993.07,142.32L993.28,142.54L993.49,142.77L993.70,143.00M908.10,159.60L908.31,159.78L908.52,159.97L908.73,160.15L908.94,160.33L909.15,160.52L909.36,160.70L909.57,160.88L909.78,161.07L909.99,161.25L910.20,161.44L910.41,161.62L910.62,161.81L910.83,162.00L911.04,162.18L911.25,162.37L911.47,162.55L911.68,162.74L911.89,162.93L912.10,163.12L912.31,163.30L912.52,163.49L912.73,163.68L912.94,163.87L913.15,164.05L913.36,164.24L913.57,164.43L913.78,164.62L913.99,164.81L914.20,165.00M1017.40,186.50L1017.65,186.75L1017.91,187.00L1018.16,187.25L1018.42,187.50L1018.67,187.75L1018.92,188.01L1019.18,188.26L1019.43,188.51L1019.68,188.76L1019.93,189.01L1020.19,189.26L1020.44,189.51L1020.69,189.77L1020.94,190.02L1021.20,190.27L1021.45,190.52L1021.70,190.77L1021.95,191.02L1022.20,191.28L1022.45,191.53L1022.70,191.78L1022.95,192.03L1023.20,192.29L1023.45,192.54L1023.70,192.79L1023.95,193.04L1024.20,193.29L1024.45,193.55L1024.70,193.80M925.20,209.70L925.30,210.04L925.41,210.38L925.51,210.72L925.61,211.06L925.71,211.40L925.81,211.74L925.92,212.08L926.02,212.42L926.12,212.76L926.22,213.10L926.32,213.44L926.43,213.78L926.53,214.12L926.63,214.46L926.73,214.80L926.83,215.14L926.93,215.48L927.04,215.82L927.14,216.16L927.24,216.50L927.34,216.84L927.44,217.18L927.54,217.52L927.64,217.86L927.74,218.20L927.84,218.54L927.94,218.88L928.04,219.22L928.14,219.56M1078.50,217.00L1078.71,217.20L1078.91,217.40L1079.12,217.60L1079.33,217.80L1079.53,218.00L1079.74,218.20L1079.94,218.40L1080.15,218.60L1080.36,218.80L1080.56,219.00L1080.77,219.20L1080.97,219.40L1081.18,219.61L1081.38,219.81L1081.58,220.01L1081.79,220.21L1081.99,220.41L1082.20,220.61L1082.40,220.81L1082.60,221.01L1082.81,221.21L1083.01,221.41L1083.21,221.61L1083.41,221.81L1083.62,222.01L1083.82,222.22L1084.02,222.42L1084.22,222.62L1084.42,222.82M1128.90,197.50L1130.37,198.89L1131.82,200.28L1133.27,201.67L1134.70,203.05L1136.12,204.44L1137.52,205.83L1138.91,207.22L1140.29,208.61L1141.66,210.00L1143.01,211.39L1144.35,212.78L1145.68,214.17L1146.99,215.56L1148.29,216.95L1149.57,218.34L1150.84,219.73L1152.10,221.12L1153.35,222.51L1154.58,223.90L1155.79,225.29L1157.00,226.68L1158.18,228.07L1159.36,229.46L1160.52,230.85L1161.66,232.24L1162.79,233.63L1163.91,235.02L1165.01,236.41L1166.10,237.80M820.00,230.00L820.36,230.22L820.72,230.43L821.07,230.65L821.43,230.87L821.79,231.09L822.15,231.31L822.50,231.53L822.86,231.75L823.22,231.97L823.58,232.19L823.94,232.41L824.29,232.63L824.65,232.86L825.01,233.08L825.37,233.30L825.72,233.53L826.08,233.75L826.44,233.97L826.80,234.20L827.16,234.42L827.51,234.65L827.87,234.88L828.23,235.10L828.59,235.33L828.95,235.56L829.30,235.79L829.66,236.02L830.02,236.24L830.38,236.47" fill="none" stroke="#7c7c7c" stroke-width="1.35"/>
<path d="M791.70,284.30L791.84,283.47L791.98,282.65L792.12,281.82L792.27,280.99L792.42,280.17L792.57,279.34L792.72,278.52L792.87,277.69L793.03,276.86L793.19,276.04L793.35,275.21L793.51,274.38L793.68,273.56L793.84,272.73L794.01,271.90L794.18,271.08L794.36,270.25L794.53,269.43L794.71,268.60L794.89,267.77L795.07,266.95L795.26,266.12L795.44,265.29L795.63,264.47L795.82,263.64L796.01,262.82L796.21,261.99L796.40,261.16L796.60,260.34L796.80,259.51L797.00,258.68L797.21,257.86L797.42,257.03L797.62,256.21L797.83,255.38L798.05,254.55L798.26,253.73L798.48,252.90L798.70,252.07L798.92,251.25L799.14,250.42L799.37,249.60L799.59,248.77L799.82,247.94L800.05,247.12L800.29,246.29L800.52,245.46L800.76,244.64L801.00,243.81L801.24,242.99L801.48,242.16L801.73,241.33L801.97,240.51L802.22,239.68L802.47,238.86L802.73,238.03L802.98,237.20L803.24,236.38L803.50,235.55L803.76,234.72L804.02,233.90L804.28,233.07L804.55,232.25L804.82,231.42L805.09,230.59L805.36,229.77L805.63,228.94L805.91,228.12L806.19,227.29L806.47,226.46L806.75,225.64L807.03,224.81L807.32,223.99L807.60,223.16L807.89,222.33L808.18,221.51L808.47,220.68L808.77,219.85L809.07,219.03L809.36,218.20L809.66,217.38L809.96,216.55L810.27,215.73L810.57,214.90L810.88,214.07L811.19,213.25L811.50,212.42L811.81,211.60L812.13,210.77L812.44,209.94L812.76,209.12L813.08,208.29L813.40,207.47L813.72,206.64L814.05,205.81L814.37,204.99L814.70,204.16L815.03,203.34L815.36,202.51L815.70,201.68L816.03,200.86L816.37,200.03L816.70,199.21L817.04,198.38L817.39,197.56L817.73,196.73L818.07,195.90L818.42,195.08L818.77,194.25L819.12,193.43L819.47,192.60L819.82,191.78L820.18,190.95L820.53,190.12L820.89,189.30L821.25,188.47L821.61,187.65L821.97,186.82L822.34,186.00L822.70,185.17L823.07,184.35L823.44,183.52L823.81,182.69L824.18,181.87L824.55,181.04L824.93,180.22L825.30,179.39L825.68,178.57L826.06,177.74L826.44,176.92L826.82,176.09L827.21,175.27L827.59,174.44L827.98,173.61L828.37,172.79L828.75,171.96L829.15,171.14L829.54,170.31L829.93,169.49L830.33,168.66L830.72,167.84L831.12,167.01L831.52,166.19L831.92,165.36L832.32,164.54L832.73,163.71L833.13,162.89L833.54,162.06L833.94,161.24L834.35,160.41L834.76,159.59L835.17,158.76L835.59,157.94L836.00,157.11L836.41,156.29L836.83,155.46L837.25,154.64L837.67,153.81L838.09,152.99L838.51,152.16L838.93,151.34L839.35,150.51L839.78,149.69L840.21,148.86L840.63,148.04L841.06,147.22L841.49,146.39L841.92,145.57L842.35,144.74L842.79,143.92L843.22,143.09L843.66,142.27L844.09,141.45L844.53,140.62L844.97,139.80L845.41,138.97L845.85,138.15L846.29,137.32L846.74,136.50L847.18,135.68L847.63,134.85L848.07,134.03L848.52,133.20L848.97,132.38L849.42,131.56L849.87,130.73L850.32,129.91L850.77,129.09L851.22,128.26L851.68,127.44L852.13,126.62L852.59,125.79L853.05,124.97L853.51,124.15L853.96,123.32L854.42,122.50L854.88,121.68L855.35,120.85L855.81,120.03L856.27,119.21L856.74,118.39L857.20,117.56L857.67,116.74L858.13,115.92L858.60,115.10L859.07,114.27L859.54,113.45L860.01,112.63L860.48,111.81L860.95,110.99L861.42,110.16L861.90,109.34L862.37,108.52L862.84,107.70L863.32,106.88L863.79,106.06L864.27,105.24L864.75,104.41L865.23,103.59L865.70,102.77L866.18,101.95L866.66,101.13L867.14,100.31L867.62,99.49L868.11,98.67L868.59,97.85L869.07,97.03L869.55,96.21L870.04,95.39L870.52,94.58L871.01,93.76L871.49,92.94L871.98,92.12L872.46,91.30L872.95,90.48L873.44,89.67L873.93,88.85L874.41,88.03L874.90,87.21L875.39,86.40L875.88,85.58L876.37,84.76L876.86,83.95L877.35,83.13L877.84,82.32L878.33,81.50L878.82,80.69L879.31,79.88L879.81,79.06L880.30,78.25L880.79,77.44L881.28,76.62L881.77,75.81L882.27,75.00L882.76,74.19L883.25,73.38L883.75,72.57L884.24,71.76L884.73,70.95L885.23,70.15L885.72,69.34L886.21,68.54L886.71,67.73L887.20,66.93L887.69,66.12L888.19,65.32L888.68,64.52L889.17,63.72L889.66,62.92L890.16,62.13L890.65,61.33L891.14,60.54L891.63,59.74L892.12,58.95L892.61,58.16L893.10,57.38L893.59,56.59L894.08,55.81L894.57,55.03L895.06,54.26L895.55,53.48L896.03,52.71L896.52,51.95L897.00,51.18L897.49,50.43L897.97,49.67L898.45,48.92L898.93,48.18L899.42,47.45L899.90,46.72L900.37,46.00L900.85,45.29L901.33,44.59L901.81,43.90L902.28,43.23L902.76,42.57L903.24,41.93L903.72,41.30L904.20,40.70" fill="none" stroke="#ff2a00" stroke-width="1.6" stroke-dasharray="1.39 2.29"/>
<path d="M898.30,48.30L898.50,48.01L898.71,47.73L898.91,47.44L899.12,47.16L899.32,46.87L899.53,46.59L899.73,46.31L899.93,46.03L900.14,45.76L900.34,45.48L900.54,45.21L900.75,44.94L900.95,44.67L901.15,44.40L901.36,44.13L901.56,43.87L901.76,43.61L901.96,43.35L902.17,43.09L902.37,42.84L902.57,42.59L902.77,42.34L902.98,42.10L903.18,41.85L903.38,41.62L903.59,41.38L903.79,41.15L903.99,40.92L904.20,40.70" fill="none" stroke="#ff2a00" stroke-width="1.6"/>
<rect x="903.0" y="39.5" width="2.4" height="2.4" fill="#ff6444"/>
<path d="M814.30,291.00L814.65,290.25L815.00,289.49L815.34,288.74L815.70,287.99L816.05,287.24L816.40,286.49L816.76,285.73L817.11,284.98L817.47,284.23L817.83,283.48L818.19,282.72L818.55,281.97L818.92,281.22L819.28,280.47L819.65,279.72L820.02,278.97L820.38,278.22L820.75,277.46L821.13,276.71L821.50,275.96L821.87,275.21L822.25,274.46L822.62,273.71L823.00,272.96L823.38,272.21L823.76,271.46L824.14,270.71L824.53,269.96L824.91,269.21L825.30,268.46L825.68,267.71L826.07,266.96L826.46,266.21L826.85,265.46L827.24,264.71L827.63,263.96L828.03,263.22L828.42,262.47L828.82,261.72L829.21,260.97L829.61,260.22L830.01,259.48L830.41,258.73L830.81,257.98L831.22,257.23L831.62,256.49L832.03,255.74L832.43,254.99L832.84,254.24L833.25,253.50L833.66,252.75L834.07,252.01L834.48,251.26L834.89,250.51L835.31,249.77L835.72,249.02L836.14,248.28L836.55,247.53L836.97,246.79L837.39,246.04L837.81,245.30L838.23,244.56L838.65,243.81L839.07,243.07L839.50,242.32L839.92,241.58L840.35,240.84L840.77,240.10L841.20,239.35L841.63,238.61L842.06,237.87L842.49,237.13L842.92,236.39L843.35,235.65L843.79,234.90L844.22,234.16L844.65,233.42L845.09,232.68L845.53,231.94L845.96,231.20L846.40,230.46L846.84,229.73L847.28,228.99L847.72,228.25L848.16,227.51L848.60,226.77L849.05,226.04L849.49,225.30L849.93,224.56L850.38,223.83L850.82,223.09L851.27,222.35L851.72,221.62L852.17,220.88L852.62,220.15L853.06,219.41L853.52,218.68L853.97,217.95L854.42,217.21L854.87,216.48L855.32,215.75L855.78,215.02L856.23,214.28L856.69,213.55L857.14,212.82L857.60,212.09L858.05,211.36L858.51,210.63L858.97,209.90L859.43,209.17L859.89,208.44L860.35,207.72L860.81,206.99L861.27,206.26L861.73,205.54L862.19,204.81L862.65,204.08L863.12,203.36L863.58,202.63L864.04,201.91L864.51,201.19L864.97,200.46L865.44,199.74L865.90,199.02L866.37,198.30L866.84,197.58L867.31,196.85L867.77,196.13L868.24,195.42L868.71,194.70L869.18,193.98L869.65,193.26L870.12,192.54L870.59,191.83L871.06,191.11L871.53,190.40L872.00,189.68L872.47,188.97L872.94,188.25L873.42,187.54L873.89,186.83L874.36,186.12L874.84,185.41L875.31,184.70L875.78,183.99L876.26,183.28L876.73,182.57L877.21,181.86L877.68,181.16L878.16,180.45L878.63,179.75L879.11,179.04L879.58,178.34L880.06,177.64L880.54,176.93L881.01,176.23L881.49,175.53L881.97,174.83L882.44,174.14L882.92,173.44L883.40,172.74L883.88,172.05L884.36,171.35L884.83,170.66L885.31,169.96L885.79,169.27L886.27,168.58L886.75,167.89L887.23,167.20L887.70,166.51L888.18,165.83L888.66,165.14L889.14,164.46L889.62,163.77L890.10,163.09L890.58,162.41L891.06,161.73L891.54,161.05L892.02,160.37L892.50,159.69L892.98,159.02L893.46,158.34L893.94,157.67L894.42,157.00L894.90,156.33L895.38,155.66L895.86,154.99L896.34,154.32L896.82,153.66L897.30,152.99L897.78,152.33L898.26,151.67L898.74,151.01L899.22,150.35L899.70,149.69L900.18,149.04L900.66,148.39L901.14,147.73L901.62,147.08L902.10,146.43L902.58,145.79L903.06,145.14L903.54,144.50L904.02,143.86L904.50,143.22L904.98,142.58L905.46,141.94L905.94,141.31L906.42,140.67L906.90,140.04L907.38,139.42L907.86,138.79L908.34,138.16L908.82,137.54L909.30,136.92L909.78,136.30L910.26,135.69L910.74,135.07L911.22,134.46L911.70,133.85L912.18,133.24L912.66,132.64L913.15,132.04L913.63,131.44L914.11,130.84L914.59,130.24L915.07,129.65L915.55,129.06L916.03,128.48L916.52,127.89L917.00,127.31L917.48,126.73L917.96,126.16L918.45,125.58L918.93,125.01L919.41,124.45L919.90,123.88L920.38,123.32L920.87,122.77L921.35,122.21L921.84,121.66L922.32,121.12L922.81,120.57L923.30,120.03L923.78,119.49L924.27,118.96L924.76,118.43L925.25,117.91L925.74,117.38L926.23,116.87L926.72,116.35L927.22,115.84L927.71,115.34L928.21,114.84L928.70,114.34L929.20,113.84L929.69,113.36L930.19,112.87L930.69,112.39L931.20,111.92L931.70,111.45L932.20,110.98L932.71,110.52L933.21,110.06L933.72,109.61L934.23,109.17L934.74,108.73L935.26,108.29L935.77,107.86L936.29,107.44L936.81,107.02L937.33,106.61L937.86,106.20L938.38,105.80L938.91,105.40L939.44,105.01L939.98,104.63L940.51,104.25L941.05,103.88L941.59,103.51L942.14,103.15L942.69,102.80L943.24,102.46L943.79,102.12L944.35,101.78L944.91,101.46L945.48,101.14L946.05,100.83L946.62,100.53L947.20,100.23L947.78,99.94L948.37,99.66L948.96,99.38L949.55,99.12L950.15,98.86L950.76,98.61L951.37,98.36L951.98,98.13L952.60,97.90" fill="none" stroke="#ff2a00" stroke-width="1.6" stroke-dasharray="1.39 2.29"/>
<path d="M944.20,101.50L944.48,101.35L944.75,101.21L945.03,101.06L945.31,100.92L945.59,100.78L945.87,100.64L946.15,100.50L946.43,100.36L946.72,100.23L947.00,100.09L947.28,99.96L947.57,99.83L947.86,99.70L948.15,99.58L948.43,99.45L948.73,99.33L949.02,99.21L949.31,99.09L949.60,98.97L949.90,98.86L950.19,98.74L950.49,98.63L950.79,98.52L951.09,98.41L951.39,98.31L951.69,98.20L951.99,98.10L952.29,98.00L952.60,97.90" fill="none" stroke="#ff2a00" stroke-width="1.6"/>
<rect x="951.4" y="96.7" width="2.4" height="2.4" fill="#ff6444"/>
<path d="M783.70,254.30L784.41,253.67L785.12,253.03L785.83,252.40L786.54,251.77L787.25,251.14L787.97,250.51L788.68,249.88L789.40,249.25L790.12,248.63L790.83,248.00L791.55,247.37L792.28,246.75L793.00,246.12L793.72,245.50L794.44,244.87L795.17,244.25L795.89,243.63L796.62,243.01L797.35,242.39L798.08,241.77L798.81,241.15L799.54,240.53L800.27,239.91L801.00,239.30L801.74,238.68L802.47,238.06L803.21,237.45L803.94,236.84L804.68,236.23L805.42,235.61L806.16,235.00L806.89,234.39L807.63,233.79L808.38,233.18L809.12,232.57L809.86,231.96L810.60,231.36L811.35,230.76L812.09,230.15L812.84,229.55L813.58,228.95L814.33,228.35L815.08,227.75L815.82,227.15L816.57,226.56L817.32,225.96L818.07,225.37L818.82,224.77L819.57,224.18L820.32,223.59L821.07,223.00L821.83,222.41L822.58,221.82L823.33,221.23L824.09,220.65L824.84,220.06L825.60,219.48L826.35,218.90L827.11,218.32L827.86,217.74L828.62,217.16L829.38,216.58L830.13,216.00L830.89,215.43L831.65,214.86L832.41,214.28L833.17,213.71L833.93,213.14L834.69,212.58L835.45,212.01L836.21,211.44L836.97,210.88L837.73,210.32L838.49,209.76L839.25,209.20L840.01,208.64L840.77,208.08L841.53,207.53L842.29,206.97L843.06,206.42L843.82,205.87L844.58,205.32L845.34,204.77L846.11,204.23L846.87,203.68L847.63,203.14L848.40,202.60L849.16,202.06L849.92,201.52L850.69,200.99L851.45,200.45L852.21,199.92L852.98,199.39L853.74,198.86L854.50,198.33L855.27,197.81L856.03,197.28L856.79,196.76L857.56,196.24L858.32,195.72L859.08,195.20L859.85,194.69L860.61,194.18L861.38,193.67L862.14,193.16L862.90,192.65L863.67,192.15L864.43,191.64L865.19,191.14L865.96,190.65L866.72,190.15L867.48,189.66L868.25,189.16L869.01,188.67L869.77,188.19L870.53,187.70L871.30,187.22L872.06,186.73L872.82,186.26L873.58,185.78L874.35,185.30L875.11,184.83L875.87,184.36L876.63,183.90L877.39,183.43L878.15,182.97L878.92,182.51L879.68,182.05L880.44,181.60L881.20,181.14L881.96,180.69L882.72,180.24L883.48,179.80L884.24,179.36L885.00,178.92L885.76,178.48L886.52,178.05L887.28,177.61L888.04,177.19L888.80,176.76L889.56,176.34L890.32,175.91L891.08,175.50L891.84,175.08L892.60,174.67L893.36,174.26L894.11,173.85L894.87,173.45L895.63,173.05L896.39,172.65L897.15,172.26L897.91,171.87L898.67,171.48L899.42,171.09L900.18,170.71L900.94,170.33L901.70,169.96L902.46,169.58L903.22,169.21L903.97,168.85L904.73,168.48L905.49,168.13L906.25,167.77L907.01,167.42L907.77,167.07L908.52,166.72L909.28,166.38L910.04,166.04L910.80,165.70L911.56,165.37L912.32,165.04L913.08,164.72L913.84,164.40L914.60,164.08L915.36,163.77L916.12,163.46L916.88,163.15L917.64,162.85L918.40,162.55L919.16,162.25L919.93,161.96L920.69,161.67L921.45,161.39L922.21,161.11L922.98,160.83L923.74,160.56L924.51,160.29L925.27,160.03L926.04,159.77L926.80,159.51L927.57,159.26L928.34,159.01L929.11,158.77L929.87,158.53L930.64,158.29L931.41,158.06L932.19,157.83L932.96,157.61L933.73,157.39L934.50,157.18L935.28,156.97L936.05,156.76L936.83,156.56L937.60,156.36L938.38,156.17L939.16,155.98L939.94,155.80L940.72,155.62L941.50,155.44L942.29,155.27L943.07,155.10L943.86,154.94L944.64,154.79L945.43,154.63L946.22,154.49L947.01,154.34L947.80,154.20L948.59,154.07L949.39,153.94L950.19,153.81L950.98,153.69L951.78,153.58L952.58,153.47L953.38,153.36L954.19,153.26L954.99,153.16L955.80,153.07L956.61,152.98L957.42,152.90L958.23,152.82L959.05,152.75L959.86,152.68L960.68,152.62L961.50,152.56L962.32,152.50L963.14,152.45L963.97,152.41L964.80,152.37L965.63,152.33L966.46,152.30L967.29,152.28L968.13,152.26L968.96,152.24L969.80,152.23L970.65,152.23L971.49,152.23L972.34,152.23L973.19,152.24L974.04,152.25L974.89,152.27L975.75,152.29L976.61,152.32L977.47,152.35L978.33,152.39L979.20,152.43L980.06,152.48L980.94,152.53L981.81,152.59L982.69,152.65L983.56,152.72L984.44,152.79L985.33,152.86L986.22,152.94L987.10,153.03L988.00,153.12L988.89,153.21L989.79,153.31L990.69,153.42L991.59,153.53L992.50,153.64L993.41,153.76L994.32,153.88L995.23,154.01L996.15,154.14L997.07,154.28L997.99,154.42L998.91,154.57L999.84,154.72L1000.77,154.87L1001.71,155.03L1002.64,155.20L1003.58,155.36L1004.53,155.54L1005.47,155.71L1006.42,155.90L1007.37,156.08L1008.32,156.27L1009.28,156.47L1010.24,156.67L1011.20,156.87L1012.17,157.08L1013.14,157.29L1014.11,157.51L1015.08,157.73L1016.06,157.96L1017.04,158.19L1018.03,158.42L1019.01,158.66L1020.00,158.90" fill="none" stroke="#a0ee30" stroke-width="1.6" stroke-dasharray="1.39 2.29"/>
<path d="M995.30,154.30L996.12,154.41L996.94,154.52L997.76,154.63L998.59,154.75L999.42,154.88L1000.25,155.00L1001.08,155.13L1001.92,155.27L1002.75,155.40L1003.59,155.54L1004.44,155.69L1005.28,155.84L1006.13,155.99L1006.98,156.15L1007.83,156.30L1008.68,156.47L1009.54,156.63L1010.40,156.80L1011.26,156.98L1012.12,157.15L1012.99,157.33L1013.86,157.52L1014.73,157.70L1015.60,157.90L1016.48,158.09L1017.35,158.29L1018.23,158.49L1019.12,158.69L1020.00,158.90" fill="none" stroke="#a0ee30" stroke-width="1.6"/>
<rect x="1018.8" y="157.7" width="2.4" height="2.4" fill="#ff6444"/>
<path d="M783.91,227.99L785.20,228.03L786.46,228.14L787.70,228.32L788.89,228.57L790.05,228.90L791.17,229.30L792.25,229.76L793.28,230.29L794.26,230.89L795.19,231.55L796.06,232.27L796.88,233.06L797.65,233.89L798.36,234.79L799.01,235.73L799.59,236.72L800.12,237.75L800.58,238.83L800.98,239.95L801.31,241.10L801.58,242.28L801.79,243.49L801.93,244.72L802.00,245.98L802.01,247.25L801.95,248.54L801.83,249.84L801.64,251.14L801.39,252.44L801.08,253.75L800.70,255.05L800.26,256.34L799.77,257.62L799.21,258.89L798.59,260.14L797.92,261.37L797.20,262.57L796.42,263.75L795.59,264.89L794.71,266.00L793.78,267.08L792.81,268.11L791.80,269.10L790.74,270.05L789.65,270.95L788.52,271.81L787.36,272.61L786.17,273.35L784.95,274.04L783.71,274.68L782.44,275.25L781.16,275.77L779.87,276.22L778.56,276.62L777.24,276.94L775.92,277.21L774.60,277.40L773.28,277.54L771.96,277.60L770.66,277.60L769.36,277.54L768.09,277.40L766.83,277.21L765.60,276.94L764.39,276.62L763.21,276.22L762.07,275.77L760.96,275.25L759.90,274.68L758.88,274.04L757.91,273.35L756.99,272.61L756.12,271.81L755.31,270.95L754.56,270.05L753.87,269.10L753.25,268.11L752.69,267.08L752.20,266.00L751.79,264.89L751.44,263.75L751.17,262.57L750.98,261.37L750.86,260.14L750.82,258.89L750.86,257.62L750.98,256.34L751.17,255.05L751.44,253.75L751.79,252.44L752.21,251.14L752.71,249.84L753.28,248.54L753.93,247.25L754.64,245.98L755.42,244.72L756.26,243.49L757.17,242.28L758.14,241.10L759.16,239.95L760.23,238.83L761.35,237.75L762.52,236.72L763.73,235.73L764.97,234.79L766.25,233.89L767.56,233.06L768.89,232.27L770.24,231.55L771.60,230.89L772.98,230.29L774.37,229.76L775.75,229.30L777.14,228.90L778.52,228.57L779.89,228.32L781.25,228.14L782.59,228.03L783.91,227.99Z" fill="none" stroke="#a0ee30" stroke-width="2"/>
<path d="M802.50,265.18L803.78,265.21L805.05,265.32L806.29,265.49L807.52,265.74L808.72,266.05L809.89,266.43L811.03,266.87L812.14,267.38L813.21,267.96L814.24,268.59L815.23,269.28L816.18,270.03L817.08,270.84L817.93,271.70L818.73,272.61L819.48,273.57L820.18,274.57L820.82,275.61L821.40,276.69L821.92,277.81L822.39,278.95L822.79,280.13L823.14,281.34L823.42,282.56L823.63,283.81L823.79,285.07L823.88,286.34L823.90,287.62L823.87,288.90L823.77,290.19L823.60,291.47L823.38,292.75L823.09,294.01L822.74,295.27L822.32,296.51L821.85,297.73L821.32,298.93L820.73,300.10L820.09,301.24L819.39,302.35L818.64,303.42L817.84,304.46L816.99,305.45L816.09,306.40L815.14,307.31L814.16,308.16L813.13,308.97L812.07,309.72L810.97,310.42L809.84,311.06L808.68,311.64L807.49,312.16L806.28,312.62L805.05,313.01L803.80,313.34L802.54,313.61L801.26,313.81L799.98,313.94L798.70,314.01L797.41,314.01L796.13,313.94L794.85,313.81L793.59,313.61L792.33,313.34L791.10,313.01L789.89,312.62L788.70,312.16L787.54,311.64L786.41,311.06L785.31,310.42L784.26,309.72L783.24,308.97L782.27,308.16L781.35,307.31L780.48,306.40L779.66,305.45L778.90,304.46L778.20,303.42L777.56,302.35L776.99,301.24L776.48,300.10L776.03,298.93L775.66,297.73L775.36,296.51L775.12,295.27L774.96,294.01L774.88,292.75L774.87,291.47L774.93,290.19L775.06,288.90L775.27,287.62L775.55,286.34L775.90,285.07L776.32,283.81L776.82,282.56L777.38,281.34L778.00,280.13L778.69,278.95L779.44,277.81L780.25,276.69L781.11,275.61L782.03,274.57L783.00,273.57L784.02,272.61L785.08,271.70L786.18,270.84L787.32,270.03L788.49,269.28L789.69,268.59L790.91,267.96L792.16,267.38L793.43,266.87L794.71,266.43L796.01,266.05L797.31,265.74L798.61,265.49L799.91,265.32L801.21,265.21L802.50,265.18Z" fill="none" stroke="#ff2a00" stroke-width="2"/>
<path d="M778.5,257.7h6M781.5,254.7v6" stroke="#ff1a10" stroke-width="1.2"/>
<path d="M788.0,289.5h6M791.0,286.5v6" stroke="#ff1a10" stroke-width="1.2"/>
<path d="M810.7,295.3h6M813.7,292.3v6" stroke="#ff1a10" stroke-width="1.2"/>
<text x="776.3" y="256.2" font-family="Liberation Sans" font-size="10.5" fill="#fff" text-anchor="middle">CTA</text>
<text x="800" y="293" font-family="Liberation Sans" font-size="10.5" fill="#fff" text-anchor="middle">STA</text>
<text x="315" y="30.0" font-family="Liberation Mono" font-size="13.9" fill="#fff" xml:space="preserve">FR000A</text>
<text x="315" y="43.3" font-family="Liberation Mono" font-size="13.9" fill="#fff" xml:space="preserve">Beg: 20251009 22:20:50 (sol = 196.52°)</text>
<text x="315" y="56.8" font-family="Liberation Mono" font-size="13.9" fill="#fff" xml:space="preserve">End: 20251010 04:50:55 (sol = 196.79°)</text>
<text x="315" y="68.6" font-family="Liberation Mono" font-size="13.9" fill="#fff" xml:space="preserve">--------------------------------------</text>
<text x="315" y="82.2" font-family="Liberation Mono" font-size="13.9" fill="#fff" xml:space="preserve">...: 17</text>
<text x="315" y="95.1" font-family="Liberation Mono" font-size="13.9" fill="#fff" xml:space="preserve">STA: 2</text>
<text x="315" y="108.3" font-family="Liberation Mono" font-size="13.9" fill="#fff" xml:space="preserve">CTA: 1</text>
<path d="M74.0,641.5V842.5M218.0,641.5V842.5M365.0,641.5V842.5M505.0,641.5V842.5M650.0,641.5V842.5M797.0,641.5V842.5M939.8,641.5V842.5M1090.9,641.5V842.5M1238.9,641.5V842.5M1393.8,641.5V842.5M1548.0,641.5V842.5M1687.0,641.5V842.5" stroke="#6a6a6a" stroke-width="2.08" stroke-dasharray="2.08 3.44"/>
<text transform="translate(149.40,696.30) rotate(-90)" font-family="Liberation Sans" font-size="31" fill="#5a5a5a" stroke="#5a5a5a" stroke-width="0.45" textLength="53.70" lengthAdjust="spacingAndGlyphs">APR</text>
<text transform="translate(294.40,701.10) rotate(-90)" font-family="Liberation Sans" font-size="31" fill="#5a5a5a" stroke="#5a5a5a" stroke-width="0.45" textLength="57.20" lengthAdjust="spacingAndGlyphs">MAY</text>
<text transform="translate(436.10,691.60) rotate(-90)" font-family="Liberation Sans" font-size="31" fill="#5a5a5a" stroke="#5a5a5a" stroke-width="0.45" textLength="49.40" lengthAdjust="spacingAndGlyphs">JUN</text>
<text transform="translate(576.40,685.20) rotate(-90)" font-family="Liberation Sans" font-size="31" fill="#5a5a5a" stroke="#5a5a5a" stroke-width="0.45" textLength="43.80" lengthAdjust="spacingAndGlyphs">JUL</text>
<text transform="translate(723.60,698.60) rotate(-90)" font-family="Liberation Sans" font-size="31" fill="#5a5a5a" stroke="#5a5a5a" stroke-width="0.45" textLength="56.40" lengthAdjust="spacingAndGlyphs">AUG</text>
<text transform="translate(872.20,695.20) rotate(-90)" font-family="Liberation Sans" font-size="31" fill="#5a5a5a" stroke="#5a5a5a" stroke-width="0.45" textLength="52.00" lengthAdjust="spacingAndGlyphs">SEP</text>
<text transform="translate(1016.80,700.40) rotate(-90)" font-family="Liberation Sans" font-size="31" fill="#5a5a5a" stroke="#5a5a5a" stroke-width="0.45" textLength="56.20" lengthAdjust="spacingAndGlyphs">OCT</text>
<text transform="translate(1169.40,703.80) rotate(-90)" font-family="Liberation Sans" font-size="31" fill="#5a5a5a" stroke="#5a5a5a" stroke-width="0.45" textLength="58.90" lengthAdjust="spacingAndGlyphs">NOV</text>
<text transform="translate(1318.60,698.60) rotate(-90)" font-family="Liberation Sans" font-size="31" fill="#5a5a5a" stroke="#5a5a5a" stroke-width="0.45" textLength="54.80" lengthAdjust="spacingAndGlyphs">DEC</text>
<text transform="translate(1469.40,689.80) rotate(-90)" font-family="Liberation Sans" font-size="31" fill="#5a5a5a" stroke="#5a5a5a" stroke-width="0.45" textLength="47.80" lengthAdjust="spacingAndGlyphs">JAN</text>
<text transform="translate(1628.30,695.80) rotate(-90)" font-family="Liberation Sans" font-size="31" fill="#5a5a5a" stroke="#5a5a5a" stroke-width="0.45" textLength="50.20" lengthAdjust="spacingAndGlyphs">FEB</text>
<text transform="translate(1766.00,704.40) rotate(-90)" font-family="Liberation Sans" font-size="31" fill="#5a5a5a" stroke="#5a5a5a" stroke-width="0.45" textLength="60.60" lengthAdjust="spacingAndGlyphs">MAR</text>
<rect x="106.2" y="832.1" width="22.6" height="4" fill="#ee82ee"/>
<rect x="165.0" y="800.0" width="22.8" height="4" fill="#ff1e00"/>
<rect x="165.0" y="816.0" width="22.8" height="4" fill="#e31af0"/>
<rect x="194.1" y="783.2" width="23.8" height="4" fill="#ffa514"/>
<rect x="223.0" y="816.0" width="62.8" height="4" fill="#e31af0"/>
<rect x="165.0" y="832.1" width="179.8" height="4" fill="#ee82ee"/>
<rect x="257.8" y="800.0" width="229.0" height="4" fill="#ff1e00"/>
<rect x="321.0" y="783.2" width="186.0" height="4" fill="#ffa514"/>
<rect x="340.9" y="767.0" width="28.9" height="4" fill="#fff000"/>
<rect x="311.8" y="816.0" width="28.0" height="4" fill="#e31af0"/>
<rect x="365.9" y="816.0" width="126.0" height="4" fill="#e31af0"/>
<rect x="365.9" y="832.1" width="259.0" height="4" fill="#ee82ee"/>
<rect x="428.9" y="734.0" width="24.1" height="4" fill="#55cf00"/>
<rect x="420.0" y="750.1" width="22.9" height="4" fill="#adf530"/>
<rect x="410.0" y="767.0" width="38.0" height="4" fill="#fff000"/>
<rect x="469.0" y="767.0" width="22.9" height="4" fill="#fff000"/>
<rect x="532.0" y="750.1" width="23.9" height="4" fill="#adf530"/>
<rect x="567.0" y="750.1" width="22.9" height="4" fill="#adf530"/>
<rect x="527.0" y="767.0" width="19.0" height="4" fill="#fff000"/>
<rect x="562.0" y="767.0" width="27.9" height="4" fill="#fff000"/>
<rect x="518.0" y="783.2" width="23.0" height="4" fill="#ffa514"/>
<rect x="557.0" y="783.2" width="125.8" height="4" fill="#ffa514"/>
<rect x="508.0" y="800.0" width="106.7" height="4" fill="#ff1e00"/>
<rect x="508.0" y="816.0" width="145.8" height="4" fill="#e31af0"/>
<rect x="596.1" y="701.2" width="136.7" height="4" fill="#00d2f0"/>
<rect x="591.0" y="718.0" width="23.7" height="4" fill="#00ee7a"/>
<rect x="655.0" y="718.0" width="116.9" height="4" fill="#00ee7a"/>
<rect x="576.0" y="734.0" width="156.8" height="4" fill="#55cf00"/>
<rect x="621.2" y="750.1" width="120.7" height="4" fill="#adf530"/>
<rect x="616.1" y="767.0" width="32.7" height="4" fill="#fff000"/>
<rect x="807.0" y="783.2" width="24.0" height="4" fill="#ffa514"/>
<rect x="626.0" y="800.0" width="91.8" height="4" fill="#ff1e00"/>
<rect x="729.0" y="800.0" width="96.9" height="4" fill="#ff1e00"/>
<rect x="704.0" y="816.0" width="32.9" height="4" fill="#e31af0"/>
<rect x="773.0" y="816.0" width="71.8" height="4" fill="#e31af0"/>
<rect x="635.0" y="832.1" width="150.9" height="4" fill="#ee82ee"/>
<rect x="807.0" y="832.1" width="91.6" height="4" fill="#ee82ee"/>
<rect x="1111.0" y="685.0" width="24.0" height="4" fill="#0814d8"/>
<rect x="1091.0" y="701.2" width="28.9" height="4" fill="#00d2f0"/>
<rect x="1071.9" y="718.0" width="171.0" height="4" fill="#00ee7a"/>
<rect x="992.9" y="734.0" width="112.0" height="4" fill="#55cf00"/>
<rect x="1116.0" y="734.0" width="106.9" height="4" fill="#55cf00"/>
<rect x="969.0" y="750.1" width="166.0" height="4" fill="#adf530"/>
<rect x="1185.0" y="750.1" width="161.0" height="4" fill="#adf530"/>
<rect x="959.1" y="767.0" width="28.9" height="4" fill="#fff000"/>
<rect x="1062.0" y="767.0" width="23.9" height="4" fill="#fff000"/>
<rect x="1101.0" y="767.0" width="24.0" height="4" fill="#fff000"/>
<rect x="1160.0" y="767.0" width="33.9" height="4" fill="#fff000"/>
<rect x="954.0" y="783.2" width="19.0" height="4" fill="#ffa514"/>
<rect x="987.9" y="783.2" width="137.1" height="4" fill="#ffa514"/>
<rect x="1155.0" y="783.2" width="62.9" height="4" fill="#ffa514"/>
<rect x="949.2" y="800.0" width="199.7" height="4" fill="#ff1e00"/>
<rect x="1160.0" y="800.0" width="87.8" height="4" fill="#ff1e00"/>
<rect x="871.0" y="816.0" width="117.0" height="4" fill="#e31af0"/>
<rect x="1003.0" y="816.0" width="13.8" height="4" fill="#e31af0"/>
<rect x="1062.0" y="816.0" width="150.8" height="4" fill="#e31af0"/>
<rect x="920.0" y="832.1" width="52.9" height="4" fill="#ee82ee"/>
<rect x="984.2" y="832.1" width="81.6" height="4" fill="#ee82ee"/>
<rect x="1082.0" y="832.1" width="120.9" height="4" fill="#ee82ee"/>
<rect x="1199.0" y="701.2" width="23.9" height="4" fill="#00d2f0"/>
<rect x="1272.9" y="701.2" width="53.1" height="4" fill="#00d2f0"/>
<rect x="1263.0" y="718.0" width="23.9" height="4" fill="#00ee7a"/>
<rect x="1263.0" y="734.0" width="28.9" height="4" fill="#55cf00"/>
<rect x="1469.0" y="750.1" width="23.8" height="4" fill="#adf530"/>
<rect x="1248.0" y="767.0" width="23.9" height="4" fill="#fff000"/>
<rect x="1425.0" y="767.0" width="86.8" height="4" fill="#fff000"/>
<rect x="1244.0" y="783.2" width="22.9" height="4" fill="#ffa514"/>
<rect x="1316.8" y="783.2" width="23.9" height="4" fill="#ffa514"/>
<rect x="1396.0" y="783.2" width="22.9" height="4" fill="#ffa514"/>
<rect x="1464.0" y="783.2" width="185.9" height="4" fill="#ffa514"/>
<rect x="1258.0" y="800.0" width="185.8" height="4" fill="#ff1e00"/>
<rect x="1459.0" y="800.0" width="23.9" height="4" fill="#ff1e00"/>
<rect x="1244.0" y="816.0" width="22.9" height="4" fill="#e31af0"/>
<rect x="1292.9" y="816.0" width="23.0" height="4" fill="#e31af0"/>
<rect x="1341.9" y="816.0" width="23.0" height="4" fill="#e31af0"/>
<rect x="1385.9" y="816.0" width="42.9" height="4" fill="#e31af0"/>
<rect x="1459.0" y="816.0" width="23.9" height="4" fill="#e31af0"/>
<rect x="1244.0" y="832.1" width="82.0" height="4" fill="#ee82ee"/>
<rect x="1337.0" y="832.1" width="17.7" height="4" fill="#ee82ee"/>
<rect x="1381.0" y="832.1" width="62.8" height="4" fill="#ee82ee"/>
<rect x="1459.0" y="832.1" width="52.8" height="4" fill="#ee82ee"/>
<rect x="1489.0" y="734.0" width="22.8" height="4" fill="#55cf00"/>
<rect x="1552.0" y="800.0" width="23.8" height="4" fill="#ff1e00"/>
<rect x="1548.0" y="816.0" width="22.7" height="4" fill="#e31af0"/>
<rect x="1523.1" y="832.1" width="23.7" height="4" fill="#ee82ee"/>
<rect x="1724.2" y="832.1" width="23.7" height="4" fill="#ee82ee"/>
<rect x="1758.0" y="832.1" width="23.7" height="4" fill="#ee82ee"/>
<path d="M983.5,641.5V842.5M985.5,641.5V842.5" stroke="#ff0000" stroke-width="1.3" stroke-dasharray="5.2 1.8" stroke-dashoffset="3"/>
<path d="M112.7,834.1h8M116.7,830.1v8" stroke="#fff" stroke-width="2"/>
<text x="116.8" y="831.1" font-family="Liberation Sans" font-size="10.5" fill="#fff" text-anchor="middle">KSE</text>
<path d="M173.8,802.0h8M177.8,798.0v8" stroke="#fff" stroke-width="2"/>
<text x="175.7" y="799.0" font-family="Liberation Sans" font-size="10.5" fill="#fff" text-anchor="middle">LYR</text>
<path d="M171.7,818.0h8M175.7,814.0v8" stroke="#fff" stroke-width="2"/>
<text x="175.7" y="815.0" font-family="Liberation Sans" font-size="10.5" fill="#fff" text-anchor="middle">AVB</text>
<path d="M201.6,785.2h8M205.6,781.2v8" stroke="#fff" stroke-width="2"/>
<text x="205.3" y="782.2" font-family="Liberation Sans" font-size="10.5" fill="#fff" text-anchor="middle">HVI</text>
<path d="M255.7,818.0h8M259.7,814.0v8" stroke="#fff" stroke-width="2"/>
<text x="254.4" y="815.0" font-family="Liberation Sans" font-size="10.5" fill="#fff" text-anchor="middle">ELY</text>
<path d="M240.8,834.1h8M244.8,830.1v8" stroke="#fff" stroke-width="2"/>
<text x="254.2" y="831.1" font-family="Liberation Sans" font-size="10.5" fill="#fff" text-anchor="middle">ETA</text>
<path d="M377.8,802.0h8M381.8,798.0v8" stroke="#fff" stroke-width="2"/>
<text x="372.3" y="799.0" font-family="Liberation Sans" font-size="10.5" fill="#fff" text-anchor="middle">JMC</text>
<path d="M399.6,785.2h8M403.6,781.2v8" stroke="#fff" stroke-width="2"/>
<text x="412.1" y="782.2" font-family="Liberation Sans" font-size="10.5" fill="#fff" text-anchor="middle">ARI</text>
<path d="M355.8,769.0h8M359.8,765.0v8" stroke="#fff" stroke-width="2"/>
<text x="352.7" y="766.0" font-family="Liberation Sans" font-size="10.5" fill="#fff" text-anchor="middle">TAH</text>
<path d="M322.8,818.0h8M326.8,814.0v8" stroke="#fff" stroke-width="2"/>
<text x="323.9" y="815.0" font-family="Liberation Sans" font-size="10.5" fill="#fff" text-anchor="middle">CAM</text>
<path d="M436.9,818.0h8M440.9,814.0v8" stroke="#fff" stroke-width="2"/>
<text x="432.2" y="815.0" font-family="Liberation Sans" font-size="10.5" fill="#fff" text-anchor="middle">SSG</text>
<path d="M510.8,834.1h8M514.8,830.1v8" stroke="#fff" stroke-width="2"/>
<text x="494.4" y="831.1" font-family="Liberation Sans" font-size="10.5" fill="#fff" text-anchor="middle">NZC</text>
<path d="M436.9,736.0h8M440.9,732.0v8" stroke="#fff" stroke-width="2"/>
<text x="441.9" y="733.0" font-family="Liberation Sans" font-size="10.5" fill="#fff" text-anchor="middle">COR</text>
<path d="M426.8,752.1h8M430.8,748.1v8" stroke="#fff" stroke-width="2"/>
<text x="431.4" y="749.1" font-family="Liberation Sans" font-size="10.5" fill="#fff" text-anchor="middle">IRC</text>
<path d="M425.9,769.0h8M429.9,765.0v8" stroke="#fff" stroke-width="2"/>
<text x="431.3" y="766.0" font-family="Liberation Sans" font-size="10.5" fill="#fff" text-anchor="middle">JEA</text>
<path d="M476.0,769.0h8M480.0,765.0v8" stroke="#fff" stroke-width="2"/>
<text x="477.9" y="766.0" font-family="Liberation Sans" font-size="10.5" fill="#fff" text-anchor="middle">JIP</text>
<path d="M539.6,752.1h8M543.6,748.1v8" stroke="#fff" stroke-width="2"/>
<text x="544.0" y="749.1" font-family="Liberation Sans" font-size="10.5" fill="#fff" text-anchor="middle">CAN</text>
<path d="M573.8,752.1h8M577.8,748.1v8" stroke="#fff" stroke-width="2"/>
<text x="578.5" y="749.1" font-family="Liberation Sans" font-size="10.5" fill="#fff" text-anchor="middle">FAN</text>
<path d="M534.7,769.0h8M538.7,765.0v8" stroke="#fff" stroke-width="2"/>
<text x="538.8" y="766.0" font-family="Liberation Sans" font-size="10.5" fill="#fff" text-anchor="middle">PPS</text>
<path d="M570.7,769.0h8M574.7,765.0v8" stroke="#fff" stroke-width="2"/>
<text x="578.6" y="766.0" font-family="Liberation Sans" font-size="10.5" fill="#fff" text-anchor="middle">ZCS</text>
<path d="M524.6,785.2h8M528.6,781.2v8" stroke="#fff" stroke-width="2"/>
<text x="529.5" y="782.2" font-family="Liberation Sans" font-size="10.5" fill="#fff" text-anchor="middle">SZC</text>
<path d="M638.7,785.2h8M642.7,781.2v8" stroke="#fff" stroke-width="2"/>
<text x="617.6" y="782.2" font-family="Liberation Sans" font-size="10.5" fill="#fff" text-anchor="middle">CAP</text>
<path d="M544.9,802.0h8M548.9,798.0v8" stroke="#fff" stroke-width="2"/>
<text x="559.1" y="799.0" font-family="Liberation Sans" font-size="10.5" fill="#fff" text-anchor="middle">JPE</text>
<path d="M598.9,818.0h8M602.9,814.0v8" stroke="#fff" stroke-width="2"/>
<text x="578.9" y="815.0" font-family="Liberation Sans" font-size="10.5" fill="#fff" text-anchor="middle">PCA</text>
<path d="M686.8,703.2h8M690.8,699.2v8" stroke="#fff" stroke-width="2"/>
<text x="666.2" y="700.2" font-family="Liberation Sans" font-size="10.5" fill="#fff" text-anchor="middle">ERI</text>
<path d="M598.9,720.0h8M602.9,716.0v8" stroke="#fff" stroke-width="2"/>
<text x="602.9" y="717.0" font-family="Liberation Sans" font-size="10.5" fill="#fff" text-anchor="middle">JXA</text>
<path d="M726.8,720.0h8M730.8,716.0v8" stroke="#fff" stroke-width="2"/>
<text x="714.9" y="717.0" font-family="Liberation Sans" font-size="10.5" fill="#fff" text-anchor="middle">KCG</text>
<path d="M630.8,736.0h8M634.8,732.0v8" stroke="#fff" stroke-width="2"/>
<text x="656.9" y="733.0" font-family="Liberation Sans" font-size="10.5" fill="#fff" text-anchor="middle">SDA</text>
<path d="M703.9,752.1h8M707.9,748.1v8" stroke="#fff" stroke-width="2"/>
<text x="681.5" y="749.1" font-family="Liberation Sans" font-size="10.5" fill="#fff" text-anchor="middle">PER</text>
<path d="M630.8,769.0h8M634.8,765.0v8" stroke="#fff" stroke-width="2"/>
<text x="632.5" y="766.0" font-family="Liberation Sans" font-size="10.5" fill="#fff" text-anchor="middle">GDR</text>
<path d="M814.7,785.2h8M818.7,781.2v8" stroke="#fff" stroke-width="2"/>
<text x="818.3" y="782.2" font-family="Liberation Sans" font-size="10.5" fill="#fff" text-anchor="middle">NUE</text>
<path d="M681.9,802.0h8M685.9,798.0v8" stroke="#fff" stroke-width="2"/>
<text x="671.2" y="799.0" font-family="Liberation Sans" font-size="10.5" fill="#fff" text-anchor="middle">PAU</text>
<path d="M740.6,802.0h8M744.6,798.0v8" stroke="#fff" stroke-width="2"/>
<text x="774.2" y="799.0" font-family="Liberation Sans" font-size="10.5" fill="#fff" text-anchor="middle">NIA</text>
<path d="M716.7,818.0h8M720.7,814.0v8" stroke="#fff" stroke-width="2"/>
<text x="720.5" y="815.0" font-family="Liberation Sans" font-size="10.5" fill="#fff" text-anchor="middle">AUD</text>
<path d="M792.6,818.0h8M796.6,814.0v8" stroke="#fff" stroke-width="2"/>
<text x="808.1" y="815.0" font-family="Liberation Sans" font-size="10.5" fill="#fff" text-anchor="middle">AUR</text>
<path d="M706.6,834.1h8M710.6,830.1v8" stroke="#fff" stroke-width="2"/>
<text x="710.5" y="831.1" font-family="Liberation Sans" font-size="10.5" fill="#fff" text-anchor="middle">NDA</text>
<path d="M832.6,834.1h8M836.6,830.1v8" stroke="#fff" stroke-width="2"/>
<text x="852.8" y="831.1" font-family="Liberation Sans" font-size="10.5" fill="#fff" text-anchor="middle">SPE</text>
<path d="M1118.8,687.0h8M1122.8,683.0v8" stroke="#fff" stroke-width="2"/>
<text x="1123.0" y="684.0" font-family="Liberation Sans" font-size="10.5" fill="#fff" text-anchor="middle">KUM</text>
<path d="M1101.9,703.2h8M1105.9,699.2v8" stroke="#fff" stroke-width="2"/>
<text x="1108.4" y="700.2" font-family="Liberation Sans" font-size="10.5" fill="#fff" text-anchor="middle">SLD</text>
<path d="M1187.7,720.0h8M1191.7,716.0v8" stroke="#fff" stroke-width="2"/>
<text x="1156.8" y="717.0" font-family="Liberation Sans" font-size="10.5" fill="#fff" text-anchor="middle">AND</text>
<path d="M1038.5,736.0h8M1042.5,732.0v8" stroke="#fff" stroke-width="2"/>
<text x="1048.9" y="733.0" font-family="Liberation Sans" font-size="10.5" fill="#fff" text-anchor="middle">LMI</text>
<path d="M1167.9,736.0h8M1171.9,732.0v8" stroke="#fff" stroke-width="2"/>
<text x="1166.5" y="733.0" font-family="Liberation Sans" font-size="10.5" fill="#fff" text-anchor="middle">LEO</text>
<path d="M1093.7,752.1h8M1097.7,748.1v8" stroke="#fff" stroke-width="2"/>
<text x="1049.1" y="749.1" font-family="Liberation Sans" font-size="10.5" fill="#fff" text-anchor="middle">CTA</text>
<path d="M1270.8,752.1h8M1274.8,748.1v8" stroke="#fff" stroke-width="2"/>
<text x="1264.5" y="749.1" font-family="Liberation Sans" font-size="10.5" fill="#fff" text-anchor="middle">HYD</text>
<path d="M973.6,769.0h8M977.6,765.0v8" stroke="#fff" stroke-width="2"/>
<text x="970.0" y="766.0" font-family="Liberation Sans" font-size="10.5" fill="#fff" text-anchor="middle">DRA</text>
<path d="M1069.6,769.0h8M1073.6,765.0v8" stroke="#fff" stroke-width="2"/>
<text x="1073.4" y="766.0" font-family="Liberation Sans" font-size="10.5" fill="#fff" text-anchor="middle">LUM</text>
<path d="M1108.7,769.0h8M1112.7,765.0v8" stroke="#fff" stroke-width="2"/>
<text x="1113.0" y="766.0" font-family="Liberation Sans" font-size="10.5" fill="#fff" text-anchor="middle">RPU</text>
<path d="M1177.7,769.0h8M1181.7,765.0v8" stroke="#fff" stroke-width="2"/>
<text x="1176.2" y="766.0" font-family="Liberation Sans" font-size="10.5" fill="#fff" text-anchor="middle">THA</text>
<path d="M958.8,785.2h8M962.8,781.2v8" stroke="#fff" stroke-width="2"/>
<text x="961.2" y="782.2" font-family="Liberation Sans" font-size="10.5" fill="#fff" text-anchor="middle">OCT</text>
<path d="M1039.7,785.2h8M1043.7,781.2v8" stroke="#fff" stroke-width="2"/>
<text x="1059.5" y="782.2" font-family="Liberation Sans" font-size="10.5" fill="#fff" text-anchor="middle">ORI</text>
<path d="M1187.7,785.2h8M1191.7,781.2v8" stroke="#fff" stroke-width="2"/>
<text x="1186.5" y="782.2" font-family="Liberation Sans" font-size="10.5" fill="#fff" text-anchor="middle">AMO</text>
<path d="M1074.9,802.0h8M1078.9,798.0v8" stroke="#fff" stroke-width="2"/>
<text x="1050.1" y="799.0" font-family="Liberation Sans" font-size="10.5" fill="#fff" text-anchor="middle">STA</text>
<path d="M1216.8,802.0h8M1220.8,798.0v8" stroke="#fff" stroke-width="2"/>
<text x="1205.3" y="799.0" font-family="Liberation Sans" font-size="10.5" fill="#fff" text-anchor="middle">NOO</text>
<path d="M938.7,818.0h8M942.7,814.0v8" stroke="#fff" stroke-width="2"/>
<text x="930.7" y="815.0" font-family="Liberation Sans" font-size="10.5" fill="#fff" text-anchor="middle">DSX</text>
<path d="M1005.8,818.0h8M1009.8,814.0v8" stroke="#fff" stroke-width="2"/>
<text x="1009.9" y="815.0" font-family="Liberation Sans" font-size="10.5" fill="#fff" text-anchor="middle">OCU</text>
<path d="M1152.7,818.0h8M1156.7,814.0v8" stroke="#fff" stroke-width="2"/>
<text x="1137.4" y="815.0" font-family="Liberation Sans" font-size="10.5" fill="#fff" text-anchor="middle">OER</text>
<path d="M961.9,834.1h8M965.9,830.1v8" stroke="#fff" stroke-width="2"/>
<text x="945.2" y="831.1" font-family="Liberation Sans" font-size="10.5" fill="#fff" text-anchor="middle">ARD</text>
<path d="M985.4,834.1h8M989.4,830.1v8" stroke="#fff" stroke-width="2"/>
<text x="1025.0" y="831.1" font-family="Liberation Sans" font-size="10.5" fill="#fff" text-anchor="middle">EGE</text>
<path d="M1115.5,834.1h8M1119.5,830.1v8" stroke="#fff" stroke-width="2"/>
<text x="1142.5" y="831.1" font-family="Liberation Sans" font-size="10.5" fill="#fff" text-anchor="middle">NTA</text>
<path d="M1206.9,703.2h8M1210.9,699.2v8" stroke="#fff" stroke-width="2"/>
<text x="1211.0" y="700.2" font-family="Liberation Sans" font-size="10.5" fill="#fff" text-anchor="middle">ORS</text>
<path d="M1299.6,703.2h8M1303.6,699.2v8" stroke="#fff" stroke-width="2"/>
<text x="1299.5" y="700.2" font-family="Liberation Sans" font-size="10.5" fill="#fff" text-anchor="middle">GEM</text>
<path d="M1270.8,720.0h8M1274.8,716.0v8" stroke="#fff" stroke-width="2"/>
<text x="1275.0" y="717.0" font-family="Liberation Sans" font-size="10.5" fill="#fff" text-anchor="middle">DAD</text>
<path d="M1274.7,736.0h8M1278.7,732.0v8" stroke="#fff" stroke-width="2"/>
<text x="1274.5" y="733.0" font-family="Liberation Sans" font-size="10.5" fill="#fff" text-anchor="middle">EHY</text>
<path d="M1476.6,752.1h8M1480.6,748.1v8" stroke="#fff" stroke-width="2"/>
<text x="1480.9" y="749.1" font-family="Liberation Sans" font-size="10.5" fill="#fff" text-anchor="middle">XUM</text>
<path d="M1255.9,769.0h8M1259.9,765.0v8" stroke="#fff" stroke-width="2"/>
<text x="1259.4" y="766.0" font-family="Liberation Sans" font-size="10.5" fill="#fff" text-anchor="middle">PSU</text>
<path d="M1466.6,769.0h8M1470.6,765.0v8" stroke="#fff" stroke-width="2"/>
<text x="1470.4" y="766.0" font-family="Liberation Sans" font-size="10.5" fill="#fff" text-anchor="middle">XCB</text>
<path d="M1251.0,785.2h8M1255.0,781.2v8" stroke="#fff" stroke-width="2"/>
<text x="1255.5" y="782.2" font-family="Liberation Sans" font-size="10.5" fill="#fff" text-anchor="middle">DPC</text>
<path d="M1324.9,785.2h8M1328.9,781.2v8" stroke="#fff" stroke-width="2"/>
<text x="1328.8" y="782.2" font-family="Liberation Sans" font-size="10.5" fill="#fff" text-anchor="middle">XVI</text>
<path d="M1402.7,785.2h8M1406.7,781.2v8" stroke="#fff" stroke-width="2"/>
<text x="1407.5" y="782.2" font-family="Liberation Sans" font-size="10.5" fill="#fff" text-anchor="middle">QUA</text>
<path d="M1545.6,785.2h8M1549.6,781.2v8" stroke="#fff" stroke-width="2"/>
<text x="1559.2" y="782.2" font-family="Liberation Sans" font-size="10.5" fill="#fff" text-anchor="middle">AAN</text>
<path d="M1304.7,802.0h8M1308.7,798.0v8" stroke="#fff" stroke-width="2"/>
<text x="1353.2" y="799.0" font-family="Liberation Sans" font-size="10.5" fill="#fff" text-anchor="middle">COM</text>
<path d="M1466.8,802.0h8M1470.8,798.0v8" stroke="#fff" stroke-width="2"/>
<text x="1471.0" y="799.0" font-family="Liberation Sans" font-size="10.5" fill="#fff" text-anchor="middle">NCC</text>
<path d="M1251.0,818.0h8M1255.0,814.0v8" stroke="#fff" stroke-width="2"/>
<text x="1254.7" y="815.0" font-family="Liberation Sans" font-size="10.5" fill="#fff" text-anchor="middle">DKD</text>
<path d="M1299.6,818.0h8M1303.6,814.0v8" stroke="#fff" stroke-width="2"/>
<text x="1304.4" y="815.0" font-family="Liberation Sans" font-size="10.5" fill="#fff" text-anchor="middle">DSV</text>
<path d="M1348.8,818.0h8M1352.8,814.0v8" stroke="#fff" stroke-width="2"/>
<text x="1353.4" y="815.0" font-family="Liberation Sans" font-size="10.5" fill="#fff" text-anchor="middle">ALY</text>
<path d="M1402.7,818.0h8M1406.7,814.0v8" stroke="#fff" stroke-width="2"/>
<text x="1408.3" y="815.0" font-family="Liberation Sans" font-size="10.5" fill="#fff" text-anchor="middle">JLE</text>
<path d="M1466.8,818.0h8M1470.8,814.0v8" stroke="#fff" stroke-width="2"/>
<text x="1471.0" y="815.0" font-family="Liberation Sans" font-size="10.5" fill="#fff" text-anchor="middle">SCC</text>
<path d="M1294.7,834.1h8M1298.7,830.1v8" stroke="#fff" stroke-width="2"/>
<text x="1284.0" y="831.1" font-family="Liberation Sans" font-size="10.5" fill="#fff" text-anchor="middle">MON</text>
<path d="M1341.8,834.1h8M1345.8,830.1v8" stroke="#fff" stroke-width="2"/>
<text x="1343.9" y="831.1" font-family="Liberation Sans" font-size="10.5" fill="#fff" text-anchor="middle">URS</text>
<path d="M1412.6,834.1h8M1416.6,830.1v8" stroke="#fff" stroke-width="2"/>
<text x="1412.4" y="831.1" font-family="Liberation Sans" font-size="10.5" fill="#fff" text-anchor="middle">AHY</text>
<path d="M1481.6,834.1h8M1485.6,830.1v8" stroke="#fff" stroke-width="2"/>
<text x="1485.4" y="831.1" font-family="Liberation Sans" font-size="10.5" fill="#fff" text-anchor="middle">GUM</text>
<path d="M1497.0,736.0h8M1501.0,732.0v8" stroke="#fff" stroke-width="2"/>
<text x="1500.4" y="733.0" font-family="Liberation Sans" font-size="10.5" fill="#fff" text-anchor="middle">ECV</text>
<path d="M1559.9,802.0h8M1563.9,798.0v8" stroke="#fff" stroke-width="2"/>
<text x="1563.9" y="799.0" font-family="Liberation Sans" font-size="10.5" fill="#fff" text-anchor="middle">FED</text>
<path d="M1554.9,818.0h8M1558.9,814.0v8" stroke="#fff" stroke-width="2"/>
<text x="1559.3" y="815.0" font-family="Liberation Sans" font-size="10.5" fill="#fff" text-anchor="middle">FEV</text>
<path d="M1530.8,834.1h8M1534.8,830.1v8" stroke="#fff" stroke-width="2"/>
<text x="1534.9" y="831.1" font-family="Liberation Sans" font-size="10.5" fill="#fff" text-anchor="middle">OHY</text>
<path d="M1731.8,834.1h8M1735.8,830.1v8" stroke="#fff" stroke-width="2"/>
<text x="1736.1" y="831.1" font-family="Liberation Sans" font-size="10.5" fill="#fff" text-anchor="middle">XHE</text>
<path d="M1765.9,834.1h8M1769.9,830.1v8" stroke="#fff" stroke-width="2"/>
<text x="1769.8" y="831.1" font-family="Liberation Sans" font-size="10.5" fill="#fff" text-anchor="middle">EVI</text>
<rect x="19.5" y="641.5" width="1766.0" height="201.0" fill="none" stroke="#fff" stroke-width="1.3"/>
<path d="M19.5,842.5v5" stroke="#fff" stroke-width="1.3"/>
<text x="16.2" y="862" font-family="Liberation Sans" font-size="13.9" fill="#fff" textLength="8.2" lengthAdjust="spacingAndGlyphs">0</text>
<path d="M264.8,842.5v5" stroke="#fff" stroke-width="1.3"/>
<text x="256.5" y="862" font-family="Liberation Sans" font-size="13.9" fill="#fff" textLength="15.2" lengthAdjust="spacingAndGlyphs">50</text>
<path d="M510.1,842.5v5" stroke="#fff" stroke-width="1.3"/>
<text x="497.4" y="862" font-family="Liberation Sans" font-size="13.9" fill="#fff" textLength="24.0" lengthAdjust="spacingAndGlyphs">100</text>
<path d="M755.3,842.5v5" stroke="#fff" stroke-width="1.3"/>
<text x="742.7" y="862" font-family="Liberation Sans" font-size="13.9" fill="#fff" textLength="24.0" lengthAdjust="spacingAndGlyphs">150</text>
<path d="M1000.6,842.5v5" stroke="#fff" stroke-width="1.3"/>
<text x="988.0" y="862" font-family="Liberation Sans" font-size="13.9" fill="#fff" textLength="24.0" lengthAdjust="spacingAndGlyphs">200</text>
<path d="M1245.9,842.5v5" stroke="#fff" stroke-width="1.3"/>
<text x="1233.2" y="862" font-family="Liberation Sans" font-size="13.9" fill="#fff" textLength="24.0" lengthAdjust="spacingAndGlyphs">250</text>
<path d="M1491.2,842.5v5" stroke="#fff" stroke-width="1.3"/>
<text x="1478.5" y="862" font-family="Liberation Sans" font-size="13.9" fill="#fff" textLength="24.0" lengthAdjust="spacingAndGlyphs">300</text>
<path d="M1736.4,842.5v5" stroke="#fff" stroke-width="1.3"/>
<text x="1723.8" y="862" font-family="Liberation Sans" font-size="13.9" fill="#fff" textLength="24.0" lengthAdjust="spacingAndGlyphs">350</text>
<text x="829.0" y="881.9" font-family="Liberation Sans" font-size="13.9" fill="#fff" textLength="147" lengthAdjust="spacingAndGlyphs">Solar longitude (deg)</text></svg></body></html>
